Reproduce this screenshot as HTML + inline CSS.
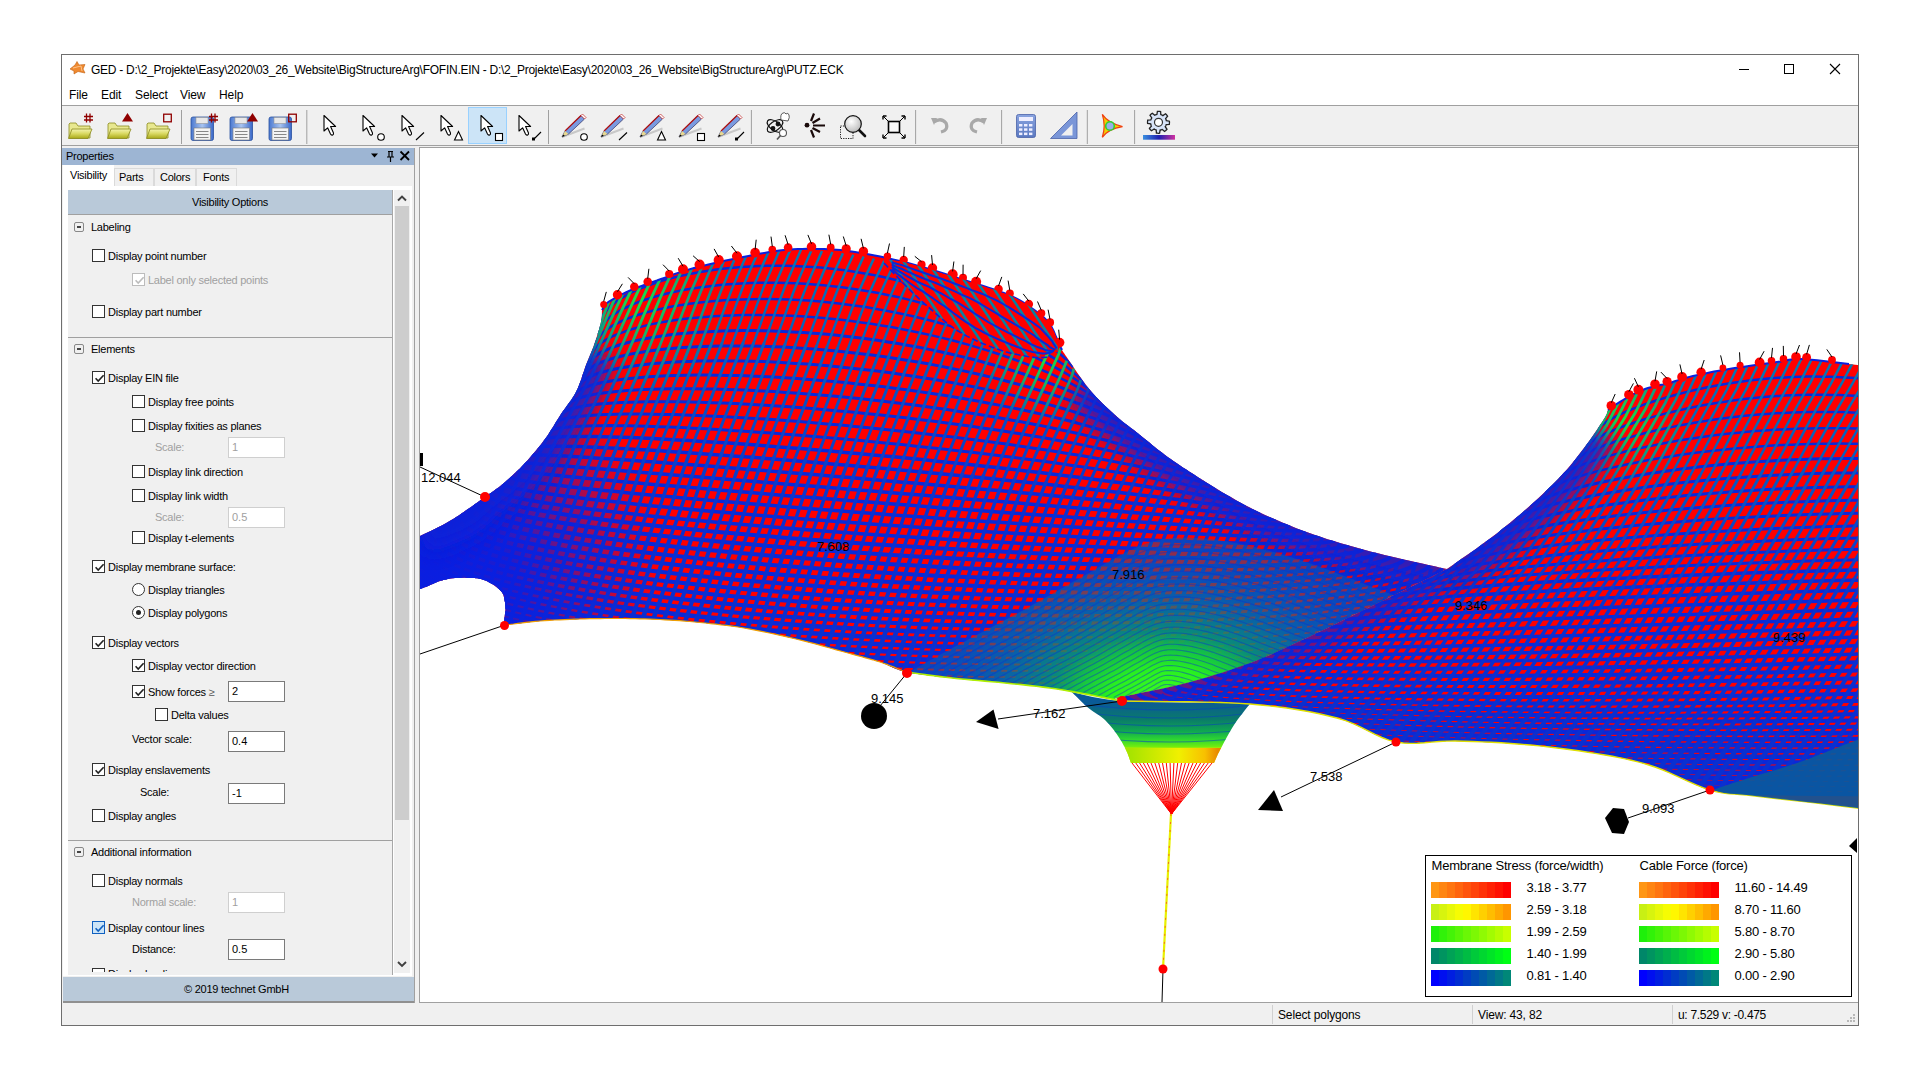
<!DOCTYPE html>
<html><head><meta charset="utf-8">
<style>
*{margin:0;padding:0;box-sizing:border-box}
html,body{width:1920px;height:1080px;overflow:hidden;background:#fff;font-family:"Liberation Sans",sans-serif;color:#000}
.a{position:absolute}
#win{position:absolute;left:61px;top:54px;width:1798px;height:972px;border:1px solid #6e6e6e;background:#f0f0f0}
.t{position:absolute;font-size:11px;line-height:13px;white-space:nowrap;letter-spacing:-0.25px}
.g{color:#a0a0a0}
.cb{position:absolute;width:13px;height:13px;border:1px solid #333;background:#fff}
.cb.gr{border-color:#bcbcbc}
.cb svg{position:absolute;left:1px;top:1px}
.rb{position:absolute;width:13px;height:13px;border:1px solid #333;border-radius:50%;background:#fff}
.inp{position:absolute;width:57px;height:21px;border:1px solid #7a7a7a;background:#fff;font-size:11px;line-height:19px;padding-left:3px}
.inp.gr{border-color:#cfcfcf;color:#a0a0a0}
.exp{position:absolute;width:10px;height:10px;border:1px solid #888;border-radius:2px}
.cb.bl{border-color:#1060c0;background:#cce4f7}
.exp:after{content:"";position:absolute;left:2px;top:3px;width:4px;height:2px;background:#444}
</style></head><body>
<div id="win"></div>
<!-- title bar -->
<div class="a" style="left:62px;top:55px;width:1796px;height:50px;background:#fff"></div>
<div class="a" style="left:62px;top:105px;width:1796px;height:1px;background:#a0a0a0"></div>
<div class="t" style="left:91px;top:63px;font-size:12px;line-height:14px;letter-spacing:-0.26px">GED - D:\2_Projekte\Easy\2020\03_26_Website\BigStructureArg\FOFIN.EIN - D:\2_Projekte\Easy\2020\03_26_Website\BigStructureArg\PUTZ.ECK</div>
<div class="t" style="left:69px;top:88px;font-size:12px;line-height:14px;letter-spacing:-0.1px">File</div>
<div class="t" style="left:101px;top:88px;font-size:12px;line-height:14px;letter-spacing:-0.1px">Edit</div>
<div class="t" style="left:135px;top:88px;font-size:12px;line-height:14px;letter-spacing:-0.1px">Select</div>
<div class="t" style="left:180px;top:88px;font-size:12px;line-height:14px;letter-spacing:-0.1px">View</div>
<div class="t" style="left:219px;top:88px;font-size:12px;line-height:14px;letter-spacing:-0.1px">Help</div>
<!-- toolbar -->
<div class="a" style="left:62px;top:145px;width:1796px;height:1px;background:#a0a0a0"></div>

<svg class="a" style="left:62px;top:106px" width="1200" height="40" viewBox="62 106 1200 40">
<defs><linearGradient id="fold" x1="0" y1="0" x2="0" y2="1"><stop offset="0" stop-color="#f4f4b0"/><stop offset="0.5" stop-color="#d8d860"/><stop offset="1" stop-color="#a8a818"/></linearGradient><linearGradient id="flop" x1="0" y1="0" x2="1" y2="0"><stop offset="0" stop-color="#4a78d0"/><stop offset="0.5" stop-color="#a8c4f0"/><stop offset="1" stop-color="#3a68c8"/></linearGradient><linearGradient id="calc" x1="0" y1="0" x2="0" y2="1"><stop offset="0" stop-color="#8aa4e0"/><stop offset="1" stop-color="#5a78c0"/></linearGradient><radialGradient id="mag" cx="0.4" cy="0.35" r="0.7"><stop offset="0" stop-color="#fff"/><stop offset="1" stop-color="#b8b8b8"/></radialGradient><linearGradient id="gbar" x1="0" x2="1"><stop offset="0" stop-color="#3a90e0"/><stop offset="0.5" stop-color="#2020b0"/><stop offset="1" stop-color="#d030a0"/></linearGradient></defs>
<rect x="181.0" y="110" width="1" height="34" fill="#a0a0a0"/>
<rect x="306.3" y="110" width="1" height="34" fill="#a0a0a0"/>
<rect x="548.0" y="110" width="1" height="34" fill="#a0a0a0"/>
<rect x="750.9" y="110" width="1" height="34" fill="#a0a0a0"/>
<rect x="915.1" y="110" width="1" height="34" fill="#a0a0a0"/>
<rect x="1001.1" y="110" width="1" height="34" fill="#a0a0a0"/>
<rect x="1086.8" y="110" width="1" height="34" fill="#a0a0a0"/>
<rect x="1134.1" y="110" width="1" height="34" fill="#a0a0a0"/>
<g transform="translate(68 121)"><path d="M1 3 L1 17 L22 17 L22 5 L10 5 L8 2 L2 2 Z" fill="#e8e890" stroke="#8a8a20" stroke-width="0.8"/><path d="M4 8 L24 8 L20 17.5 L0.5 17.5 Z" fill="url(#fold)" stroke="#8a8a20" stroke-width="0.8"/></g>
<g transform="translate(107 121)"><path d="M1 3 L1 17 L22 17 L22 5 L10 5 L8 2 L2 2 Z" fill="#e8e890" stroke="#8a8a20" stroke-width="0.8"/><path d="M4 8 L24 8 L20 17.5 L0.5 17.5 Z" fill="url(#fold)" stroke="#8a8a20" stroke-width="0.8"/></g>
<g transform="translate(146 121)"><path d="M1 3 L1 17 L22 17 L22 5 L10 5 L8 2 L2 2 Z" fill="#e8e890" stroke="#8a8a20" stroke-width="0.8"/><path d="M4 8 L24 8 L20 17.5 L0.5 17.5 Z" fill="url(#fold)" stroke="#8a8a20" stroke-width="0.8"/></g>
<path d="M86.5 113.5V122.5M90 113.5V122.5M84 116.5H93M84 120.0H93" stroke="#900000" stroke-width="1.3"/>
<path d="M122 121.5L127.5 113L133 121.5Z" fill="#900000"/>
<rect x="163.7" y="114.2" width="7.6" height="7.6" fill="none" stroke="#900000" stroke-width="1.3"/>
<g transform="translate(191 117)"><rect x="0" y="0" width="22.5" height="23.5" rx="2" fill="url(#flop)" stroke="#2a50a0" stroke-width="0.8"/><rect x="5" y="0.5" width="12" height="6" fill="#e8e8e8" stroke="#888" stroke-width="0.5"/><rect x="3" y="11" width="16.5" height="12" fill="#f4f4f4" stroke="#777" stroke-width="0.6"/><path d="M5 14.5H17.5M5 17.5H17.5M5 20.5H17.5" stroke="#888" stroke-width="1"/></g>
<g transform="translate(230 117)"><rect x="0" y="0" width="22.5" height="23.5" rx="2" fill="url(#flop)" stroke="#2a50a0" stroke-width="0.8"/><rect x="5" y="0.5" width="12" height="6" fill="#e8e8e8" stroke="#888" stroke-width="0.5"/><rect x="3" y="11" width="16.5" height="12" fill="#f4f4f4" stroke="#777" stroke-width="0.6"/><path d="M5 14.5H17.5M5 17.5H17.5M5 20.5H17.5" stroke="#888" stroke-width="1"/></g>
<g transform="translate(269 117)"><rect x="0" y="0" width="22.5" height="23.5" rx="2" fill="url(#flop)" stroke="#2a50a0" stroke-width="0.8"/><rect x="5" y="0.5" width="12" height="6" fill="#e8e8e8" stroke="#888" stroke-width="0.5"/><rect x="3" y="11" width="16.5" height="12" fill="#f4f4f4" stroke="#777" stroke-width="0.6"/><path d="M5 14.5H17.5M5 17.5H17.5M5 20.5H17.5" stroke="#888" stroke-width="1"/></g>
<path d="M211.5 113.5V122.5M215 113.5V122.5M209 116.5H218M209 120.0H218" stroke="#900000" stroke-width="1.3"/>
<path d="M247 121.5L252.5 113L258 121.5Z" fill="#900000"/>
<rect x="288.7" y="114.2" width="7.6" height="7.6" fill="none" stroke="#900000" stroke-width="1.3"/>
<rect x="468.5" y="107.5" width="38" height="36" fill="#cce4f7" stroke="#99d1ff" stroke-width="1"/>
<path transform="translate(324 115.5)" d="M0 0L0 15.5L3.6 12.3L6.5 18.6Q7.3 20 8.7 19.4Q10 18.7 9.4 17.2L6.6 11L11.6 11Z" fill="#fff" stroke="#000" stroke-width="1.1" stroke-linejoin="round"/>
<path transform="translate(363 115.5)" d="M0 0L0 15.5L3.6 12.3L6.5 18.6Q7.3 20 8.7 19.4Q10 18.7 9.4 17.2L6.6 11L11.6 11Z" fill="#fff" stroke="#000" stroke-width="1.1" stroke-linejoin="round"/>
<path transform="translate(402 115.5)" d="M0 0L0 15.5L3.6 12.3L6.5 18.6Q7.3 20 8.7 19.4Q10 18.7 9.4 17.2L6.6 11L11.6 11Z" fill="#fff" stroke="#000" stroke-width="1.1" stroke-linejoin="round"/>
<path transform="translate(441 115.5)" d="M0 0L0 15.5L3.6 12.3L6.5 18.6Q7.3 20 8.7 19.4Q10 18.7 9.4 17.2L6.6 11L11.6 11Z" fill="#fff" stroke="#000" stroke-width="1.1" stroke-linejoin="round"/>
<path transform="translate(481 115.5)" d="M0 0L0 15.5L3.6 12.3L6.5 18.6Q7.3 20 8.7 19.4Q10 18.7 9.4 17.2L6.6 11L11.6 11Z" fill="#fff" stroke="#000" stroke-width="1.1" stroke-linejoin="round"/>
<path transform="translate(519 115.5)" d="M0 0L0 15.5L3.6 12.3L6.5 18.6Q7.3 20 8.7 19.4Q10 18.7 9.4 17.2L6.6 11L11.6 11Z" fill="#fff" stroke="#000" stroke-width="1.1" stroke-linejoin="round"/>
<circle cx="381" cy="137" r="3.3" fill="#fff" stroke="#000" stroke-width="1.1"/>
<path d="M416 140L424 132.5" stroke="#000" stroke-width="1.1"/>
<path d="M454.5 140L458.5 131.5L462.5 140Z" fill="#fff" stroke="#000" stroke-width="1.1"/>
<rect x="495.5" y="133.5" width="7" height="7" fill="#fff" stroke="#000" stroke-width="1.1"/>
<path d="M534 139L541 132" stroke="#000" stroke-width="1.1"/><rect x="532" y="137.5" width="3" height="3" fill="#000"/>
<g transform="translate(562 137)"><path d="M0 0L22.5 -8.5" stroke="#c8c8c8" stroke-width="2"/><path d="M0 0L3 -6L19 -21.5L22.5 -18L6.5 -3Z" fill="#7a9ae0" stroke="#303060" stroke-width="0.7"/><path d="M3 -6L19 -21.5" stroke="#b01010" stroke-width="1.2"/><path d="M0 0L3 -6L6.5 -3Z" fill="#e8d890"/><path d="M0 0L1.3 -2.6L2.9 -1.3Z" fill="#000"/><path d="M19 -21.5L20.5 -23L24 -19.5L22.5 -18Z" fill="#fff" stroke="#c02020" stroke-width="0.7"/></g>
<g transform="translate(601 137)"><path d="M0 0L22.5 -8.5" stroke="#c8c8c8" stroke-width="2"/><path d="M0 0L3 -6L19 -21.5L22.5 -18L6.5 -3Z" fill="#7a9ae0" stroke="#303060" stroke-width="0.7"/><path d="M3 -6L19 -21.5" stroke="#b01010" stroke-width="1.2"/><path d="M0 0L3 -6L6.5 -3Z" fill="#e8d890"/><path d="M0 0L1.3 -2.6L2.9 -1.3Z" fill="#000"/><path d="M19 -21.5L20.5 -23L24 -19.5L22.5 -18Z" fill="#fff" stroke="#c02020" stroke-width="0.7"/></g>
<g transform="translate(640 137)"><path d="M0 0L22.5 -8.5" stroke="#c8c8c8" stroke-width="2"/><path d="M0 0L3 -6L19 -21.5L22.5 -18L6.5 -3Z" fill="#7a9ae0" stroke="#303060" stroke-width="0.7"/><path d="M3 -6L19 -21.5" stroke="#b01010" stroke-width="1.2"/><path d="M0 0L3 -6L6.5 -3Z" fill="#e8d890"/><path d="M0 0L1.3 -2.6L2.9 -1.3Z" fill="#000"/><path d="M19 -21.5L20.5 -23L24 -19.5L22.5 -18Z" fill="#fff" stroke="#c02020" stroke-width="0.7"/></g>
<g transform="translate(679 137)"><path d="M0 0L22.5 -8.5" stroke="#c8c8c8" stroke-width="2"/><path d="M0 0L3 -6L19 -21.5L22.5 -18L6.5 -3Z" fill="#7a9ae0" stroke="#303060" stroke-width="0.7"/><path d="M3 -6L19 -21.5" stroke="#b01010" stroke-width="1.2"/><path d="M0 0L3 -6L6.5 -3Z" fill="#e8d890"/><path d="M0 0L1.3 -2.6L2.9 -1.3Z" fill="#000"/><path d="M19 -21.5L20.5 -23L24 -19.5L22.5 -18Z" fill="#fff" stroke="#c02020" stroke-width="0.7"/></g>
<g transform="translate(718 137)"><path d="M0 0L22.5 -8.5" stroke="#c8c8c8" stroke-width="2"/><path d="M0 0L3 -6L19 -21.5L22.5 -18L6.5 -3Z" fill="#7a9ae0" stroke="#303060" stroke-width="0.7"/><path d="M3 -6L19 -21.5" stroke="#b01010" stroke-width="1.2"/><path d="M0 0L3 -6L6.5 -3Z" fill="#e8d890"/><path d="M0 0L1.3 -2.6L2.9 -1.3Z" fill="#000"/><path d="M19 -21.5L20.5 -23L24 -19.5L22.5 -18Z" fill="#fff" stroke="#c02020" stroke-width="0.7"/></g>
<circle cx="584" cy="137" r="3.3" fill="#fff" stroke="#000" stroke-width="1.1"/>
<path d="M619 140L627 132.5" stroke="#000" stroke-width="1.1"/>
<path d="M657.5 140L661.5 131.5L665.5 140Z" fill="#fff" stroke="#000" stroke-width="1.1"/>
<rect x="697.5" y="133.5" width="7" height="7" fill="#fff" stroke="#000" stroke-width="1.1"/>
<path d="M737 139L744 132" stroke="#000" stroke-width="1.1"/><rect x="735" y="137.5" width="3" height="3" fill="#000"/>
<g transform="translate(775 126)" fill="none" stroke="#111" stroke-width="1.2"><ellipse rx="9" ry="4.5" transform="rotate(35)"/><ellipse rx="9" ry="4.5" transform="rotate(-35)"/><circle cx="3" cy="-2" r="1.8" fill="#111"/><circle cx="-2" cy="2.5" r="1.8" fill="#111"/></g>
<path d="M781 120Q780 114 783 113Q785 112 786 114Q788 112 789 115Q790 117 788 121Z" fill="#fff" stroke="#333" stroke-width="0.8"/>
<circle cx="783" cy="133" r="3.5" fill="#fff" stroke="#555" stroke-width="1.1"/><path d="M780.5 135.5L777 139.5" stroke="#555" stroke-width="1.6"/>
<circle cx="807" cy="125.2" r="2.4" fill="#1a0a0a"/>
<path d="M811 121L814 113.5M812.5 123L820 118.5M813 125.5L825 125.5M812.5 128L820 132M811 130L814 137.5" stroke="#1a0a0a" stroke-width="2.2"/>
<rect x="840.5" y="126" width="12.5" height="12.5" fill="none" stroke="#000" stroke-width="0.9" stroke-dasharray="1.2 1.2"/>
<path d="M858 129L865 136" stroke="#111" stroke-width="2.6" stroke-linecap="round"/>
<circle cx="853" cy="124" r="8.3" fill="url(#mag)" stroke="#111" stroke-width="1.2"/>
<rect x="888.5" y="121.5" width="11" height="11" fill="#f8f8f8" stroke="#000" stroke-width="1.6"/>
<path d="M888 121L883 116M900 121L905 116M888 133L883 138M900 133L905 138" stroke="#000" stroke-width="1"/>
<path d="M883 116h3.5M883 116v3.5M905 116h-3.5M905 116v3.5M883 138h3.5M883 138v-3.5M905 138h-3.5M905 138v-3.5" stroke="#000" stroke-width="1.4"/>
<path d="M934 122 Q941 117 946 123 Q949 130 941 132" fill="none" stroke="#a8a8a8" stroke-width="3.2"/><path d="M931 118L937 118L934 125Z" fill="#a8a8a8"/>
<path d="M984 122 Q977 117 972 123 Q969 130 977 132" fill="none" stroke="#a8a8a8" stroke-width="3.2"/><path d="M987 118L981 118L984 125Z" fill="#a8a8a8"/>
<rect x="1016.5" y="114.5" width="19" height="23" rx="2" fill="url(#calc)" stroke="#4a62a8" stroke-width="0.8"/>
<rect x="1019" y="117" width="14" height="4" fill="#eef"/>
<rect x="1019" y="124.0" width="3.4" height="2.5" fill="#eef"/><rect x="1024" y="124.0" width="3.4" height="2.5" fill="#eef"/><rect x="1029" y="124.0" width="3.4" height="2.5" fill="#eef"/><rect x="1019" y="128.3" width="3.4" height="2.5" fill="#eef"/><rect x="1024" y="128.3" width="3.4" height="2.5" fill="#eef"/><rect x="1029" y="128.3" width="3.4" height="2.5" fill="#eef"/><rect x="1019" y="132.6" width="3.4" height="2.5" fill="#eef"/><rect x="1024" y="132.6" width="3.4" height="2.5" fill="#eef"/><rect x="1029" y="132.6" width="3.4" height="2.5" fill="#eef"/>
<path d="M1050.5 138.5L1077 112L1077 138.5Z" fill="#7a96d8" stroke="#4a62a8" stroke-width="0.8"/><path d="M1061 135.5L1072.5 124L1072.5 135.5Z" fill="#f0f0f0"/>
<path d="M1102.3 114.4Q1108 123 1122.5 126.6Q1108 129 1102.3 137.3Q1106 126 1102.3 114.4Z" fill="#f0d000" stroke="#f04010" stroke-width="1.2"/>
<circle cx="1110" cy="126" r="4.3" fill="#98b0e8" stroke="#30d030" stroke-width="1.6"/>
<polygon points="1169.5,122.3 1169.4,123.4 1169.3,124.4 1166.2,124.6 1165.9,125.4 1165.6,126.1 1165.2,126.7 1167.0,129.3 1166.3,130.1 1165.5,130.8 1164.6,131.4 1162.3,129.4 1161.6,129.7 1160.8,130.0 1160.1,130.1 1159.6,133.2 1158.5,133.3 1157.4,133.2 1156.4,133.1 1156.2,130.0 1155.4,129.7 1154.7,129.4 1154.1,129.0 1151.5,130.8 1150.7,130.1 1150.0,129.3 1149.4,128.4 1151.4,126.1 1151.1,125.4 1150.8,124.6 1150.7,123.9 1147.6,123.4 1147.5,122.3 1147.6,121.2 1147.7,120.2 1150.8,120.0 1151.1,119.2 1151.4,118.5 1151.8,117.9 1150.0,115.3 1150.7,114.5 1151.5,113.8 1152.4,113.2 1154.7,115.2 1155.4,114.9 1156.2,114.6 1156.9,114.5 1157.4,111.4 1158.5,111.3 1159.6,111.4 1160.6,111.5 1160.8,114.6 1161.6,114.9 1162.3,115.2 1162.9,115.6 1165.5,113.8 1166.3,114.5 1167.0,115.3 1167.6,116.2 1165.6,118.5 1165.9,119.2 1166.2,120.0 1166.3,120.7 1169.4,121.2" fill="#d8e4f8" stroke="#222" stroke-width="1.3"/>
<circle cx="1158.5" cy="122.3" r="4" fill="#fff" stroke="#333" stroke-width="1.2"/>
<rect x="1143" y="135" width="32" height="4.7" fill="url(#gbar)"/>
</svg>
<svg class="a" style="left:1730px;top:60px" width="120" height="20" viewBox="1730 60 120 20"><path d="M1739 69.5H1749" stroke="#000" stroke-width="1"/><rect x="1784.5" y="64.5" width="9" height="9" fill="none" stroke="#000" stroke-width="1"/><path d="M1830 64L1840 74M1840 64L1830 74" stroke="#000" stroke-width="1.1"/></svg>
<svg class="a" style="left:68px;top:60px" width="20" height="16" viewBox="0 0 20 16"><path d="M2 9L7 5L9 1.5L11 5L17 4.5L15 9L17 13L10 11.5L6 14L6 11Z" fill="#f08a30" stroke="#c06010" stroke-width="0.6"/><path d="M5 8L13 6L14 11" fill="none" stroke="#ffd0a0" stroke-width="0.8"/></svg>
<svg class="a" style="left:365px;top:148px;z-index:5" width="50" height="17" viewBox="365 148 50 17"><path d="M371 153.5L378 153.5L374.5 157.5Z" fill="#000"/><path d="M388 151.5H393M389 151.5V157M392 151.5V157M387 157H394M390.5 157V162" stroke="#000" stroke-width="1.2" fill="none"/><path d="M400.5 151.5L409 160M409 151.5L400.5 160" stroke="#000" stroke-width="1.8"/></svg>
<svg class="a" style="left:394px;top:190px;z-index:5" width="16" height="785" viewBox="394 190 16 785"><path d="M398 200.5L402 196.5L406 200.5" fill="none" stroke="#404040" stroke-width="1.9"/><path d="M398 962L402 966L406 962" fill="none" stroke="#404040" stroke-width="1.9"/></svg>
<svg class="a" style="left:1845px;top:1012px;z-index:5" width="12" height="12" viewBox="0 0 12 12" fill="#b8b8b8"><rect x="8" y="8" width="2" height="2"/><rect x="5" y="8" width="2" height="2"/><rect x="2" y="8" width="2" height="2"/><rect x="8" y="5" width="2" height="2"/><rect x="5" y="5" width="2" height="2"/><rect x="8" y="2" width="2" height="2"/></svg>
<!-- properties header -->
<div class="a" style="left:62px;top:148px;width:353px;height:17px;background:#9db5d3"></div>
<div class="t" style="left:66px;top:150px;font-size:11px">Properties</div>
<!-- tabs -->
<div class="a" style="left:63px;top:165px;width:51px;height:21px;background:#fff"></div>
<div class="t" style="left:70px;top:169px">Visibility</div>
<div class="a" style="left:114px;top:168px;width:40px;height:18px;background:#f0f0f0;border:1px solid #dadada;border-bottom:none"></div>
<div class="t" style="left:119px;top:171px">Parts</div>
<div class="a" style="left:154px;top:168px;width:42px;height:18px;background:#f0f0f0;border:1px solid #dadada;border-bottom:none"></div>
<div class="t" style="left:160px;top:171px">Colors</div>
<div class="a" style="left:196px;top:168px;width:41px;height:18px;background:#f0f0f0;border:1px solid #dadada;border-bottom:none"></div>
<div class="t" style="left:203px;top:171px">Fonts</div>
<!-- tab page -->
<div class="a" style="left:63px;top:186px;width:349px;height:790px;background:#fff"></div>
<div class="a" style="left:68px;top:190px;width:325px;height:785px;background:#f0f0f0"></div>
<div class="a" style="left:68px;top:190px;width:324px;height:25px;background:#b9c9d9;border-bottom:1px solid #a0a0a0"></div>
<div class="t" style="left:192px;top:196px">Visibility Options</div>
<div class="a" style="left:392px;top:190px;width:1px;height:785px;background:#a8a8a8"></div>
<div class="exp" style="left:74px;top:222px"></div>
<div class="t" style="left:91px;top:221px">Labeling</div>
<div class="cb" style="left:92px;top:249px"></div>
<div class="t" style="left:108px;top:250px">Display point number</div>
<div class="cb gr" style="left:132px;top:273px"><svg width="11" height="11" viewBox="0 0 11 11"><path d="M1.6 5.2L4.2 8L9.6 2.2" fill="none" stroke="#bcbcbc" stroke-width="1.6"/></svg></div>
<div class="t g" style="left:148px;top:274px">Label only selected points</div>
<div class="cb" style="left:92px;top:305px"></div>
<div class="t" style="left:108px;top:306px">Display part number</div>
<div class="a" style="left:68px;top:337px;width:324px;height:1px;background:#a0a0a0"></div>
<div class="exp" style="left:74px;top:344px"></div>
<div class="t" style="left:91px;top:343px">Elements</div>
<div class="cb" style="left:92px;top:371px"><svg width="11" height="11" viewBox="0 0 11 11"><path d="M1.6 5.2L4.2 8L9.6 2.2" fill="none" stroke="#222" stroke-width="1.6"/></svg></div>
<div class="t" style="left:108px;top:372px">Display EIN file</div>
<div class="cb" style="left:132px;top:395px"></div>
<div class="t" style="left:148px;top:396px">Display free points</div>
<div class="cb" style="left:132px;top:419px"></div>
<div class="t" style="left:148px;top:420px">Display fixities as planes</div>
<div class="t g" style="left:155px;top:441px">Scale:</div>
<div class="inp gr" style="left:228px;top:437px">1</div>
<div class="cb" style="left:132px;top:465px"></div>
<div class="t" style="left:148px;top:466px">Display link direction</div>
<div class="cb" style="left:132px;top:489px"></div>
<div class="t" style="left:148px;top:490px">Display link width</div>
<div class="t g" style="left:155px;top:511px">Scale:</div>
<div class="inp gr" style="left:228px;top:507px">0.5</div>
<div class="cb" style="left:132px;top:531px"></div>
<div class="t" style="left:148px;top:532px">Display t-elements</div>
<div class="cb" style="left:92px;top:560px"><svg width="11" height="11" viewBox="0 0 11 11"><path d="M1.6 5.2L4.2 8L9.6 2.2" fill="none" stroke="#222" stroke-width="1.6"/></svg></div>
<div class="t" style="left:108px;top:561px">Display membrane surface:</div>
<div class="rb" style="left:132px;top:583px"></div>
<div class="t" style="left:148px;top:584px">Display triangles</div>
<div class="rb" style="left:132px;top:606px"><div style="position:absolute;left:3px;top:3px;width:5px;height:5px;border-radius:50%;background:#222"></div></div>
<div class="t" style="left:148px;top:607px">Display polygons</div>
<div class="cb" style="left:92px;top:636px"><svg width="11" height="11" viewBox="0 0 11 11"><path d="M1.6 5.2L4.2 8L9.6 2.2" fill="none" stroke="#222" stroke-width="1.6"/></svg></div>
<div class="t" style="left:108px;top:637px">Display vectors</div>
<div class="cb" style="left:132px;top:659px"><svg width="11" height="11" viewBox="0 0 11 11"><path d="M1.6 5.2L4.2 8L9.6 2.2" fill="none" stroke="#222" stroke-width="1.6"/></svg></div>
<div class="t" style="left:148px;top:660px">Display vector direction</div>
<div class="cb" style="left:132px;top:685px"><svg width="11" height="11" viewBox="0 0 11 11"><path d="M1.6 5.2L4.2 8L9.6 2.2" fill="none" stroke="#222" stroke-width="1.6"/></svg></div>
<div class="t" style="left:148px;top:686px">Show forces <span style="color:#555">≥</span></div>
<div class="inp" style="left:228px;top:681px">2</div>
<div class="cb" style="left:155px;top:708px"></div>
<div class="t" style="left:171px;top:709px">Delta values</div>
<div class="t" style="left:132px;top:733px">Vector scale:</div>
<div class="inp" style="left:228px;top:731px">0.4</div>
<div class="cb" style="left:92px;top:763px"><svg width="11" height="11" viewBox="0 0 11 11"><path d="M1.6 5.2L4.2 8L9.6 2.2" fill="none" stroke="#222" stroke-width="1.6"/></svg></div>
<div class="t" style="left:108px;top:764px">Display enslavements</div>
<div class="t" style="left:140px;top:786px">Scale:</div>
<div class="inp" style="left:228px;top:783px">-1</div>
<div class="cb" style="left:92px;top:809px"></div>
<div class="t" style="left:108px;top:810px">Display angles</div>
<div class="a" style="left:68px;top:840px;width:324px;height:1px;background:#a0a0a0"></div>
<div class="exp" style="left:74px;top:847px"></div>
<div class="t" style="left:91px;top:846px">Additional information</div>
<div class="cb" style="left:92px;top:874px"></div>
<div class="t" style="left:108px;top:875px">Display normals</div>
<div class="t g" style="left:132px;top:896px">Normal scale:</div>
<div class="inp gr" style="left:228px;top:892px">1</div>
<div class="cb bl" style="left:92px;top:921px"><svg width="11" height="11" viewBox="0 0 11 11"><path d="M1.6 5.2L4.2 8L9.6 2.2" fill="none" stroke="#1060c0" stroke-width="1.6"/></svg></div>
<div class="t" style="left:108px;top:922px">Display contour lines</div>
<div class="t" style="left:132px;top:943px">Distance:</div>
<div class="inp" style="left:228px;top:939px">0.5</div>
<div class="a" style="left:68px;top:965px;width:324px;height:7px;overflow:hidden"><div class="cb" style="left:24px;top:3px"></div><div class="t" style="left:40px;top:3px">Display loadings</div></div>
<!-- scrollbar -->
<div class="a" style="left:394px;top:190px;width:16px;height:783px;background:#f0f0f0"></div>
<div class="a" style="left:395px;top:206px;width:14px;height:614px;background:#cdcdcd"></div>

<div id="pbr" class="a" style="left:414px;top:148px;width:1px;height:855px;background:#a0a0a0"></div>
<!-- view -->
<div class="a" style="left:419px;top:147px;width:1439px;height:856px;background:#fff;border:1px solid #a0a0a0;border-right:none"></div>

<svg class="a" style="left:420px;top:148px" width="1438" height="854" viewBox="420 148 1438 854">
<defs>
<clipPath id="clt"><path d="M380 552L385.1 550L390.3 548L395.5 545.9L400.8 543.9L405.9 541.9L410.8 539.9L415.6 537.9L420 536L424.1 534.1L428 532.3L431.7 530.6L435.2 528.8L438.6 527.1L441.8 525.4L445 523.7L448 522L450.9 520.3L453.6 518.7L456.2 517L458.7 515.4L461.1 513.8L463.4 512.2L465.7 510.6L468 509L470.3 507.5L472.4 506L474.5 504.5L476.6 503.1L478.6 501.6L480.7 500.1L482.8 498.6L485 497L487.3 495.4L489.6 493.8L491.9 492.2L494.2 490.5L496.6 488.8L499.1 487L501.5 485.1L504 483L506.5 480.8L509.1 478.5L511.8 476.1L514.4 473.6L517.1 471.1L519.8 468.4L522.4 465.7L525 463L527.6 460.2L530.2 457.3L532.7 454.3L535.3 451.3L537.8 448.2L540.3 445.2L542.7 442.1L545 439L547.2 435.9L549.3 432.8L551.3 429.6L553.3 426.4L555.2 423.2L557.2 420.1L559.1 417L561 414L563 411.1L564.9 408.4L566.9 405.8L568.9 403.1L570.8 400.5L572.6 397.8L574.4 395L576 392L577.5 388.8L578.9 385.4L580.2 381.9L581.4 378.4L582.6 374.8L583.8 371.4L584.9 368.1L586 365L587.1 362.2L588.2 359.6L589.2 357.1L590.2 354.8L591.2 352.4L592.1 350L593.1 347.6L594 345L595 342.2L596 339.2L597 336.1L597.9 333L598.9 330L599.7 327L600.4 324.4L601 322L601.4 320L601.7 318.2L601.8 316.7L601.9 315.3L601.9 314L601.9 312.7L601.9 311.4L602 310L602.5 309.2L602.9 308.4L603.1 307.6L603.4 306.8L603.9 306L604.6 305.1L605.6 304.1L607 303L608.9 301.7L611.1 300.4L613.6 298.9L616.3 297.3L619.3 295.7L622.4 294.1L625.7 292.5L629 291L632.5 289.5L636.3 288L640.2 286.5L644.3 284.9L648.5 283.4L652.7 281.9L656.9 280.5L661 279L665 277.6L668.8 276.2L672.6 274.8L676.4 273.4L680.4 272.1L684.6 270.7L689.1 269.4L694 268L699.4 266.6L705.3 265.2L711.6 263.7L718 262.2L724.5 260.8L730.9 259.5L737.1 258.2L743 257L748.5 255.9L753.9 254.8L759.2 253.8L764.3 252.9L769.3 252L774.3 251.2L779.2 250.6L784 250L788.7 249.6L793.4 249.2L797.9 249L802.4 248.9L806.8 248.8L811.2 248.8L815.6 248.9L820 249L824.3 249.1L828.4 249.3L832.4 249.5L836.4 249.8L840.6 250.1L845 250.6L849.8 251.2L855 252L860.7 253L866.9 254L873.4 255.3L880.2 256.6L887.1 258.1L894.1 259.6L901.1 261.3L908 263L914.9 264.9L922 266.9L929.3 269L936.5 271.2L943.7 273.5L950.7 275.8L957.5 277.9L964 280L970.3 282L976.5 283.9L982.6 285.8L988.5 287.7L994.1 289.5L999.5 291.4L1004.5 293.2L1009 295L1013.1 296.8L1016.7 298.6L1019.9 300.3L1022.8 302.1L1025.5 303.8L1028.1 305.5L1030.5 307.3L1033 309L1035.4 310.7L1037.8 312.5L1039.9 314.2L1042 315.9L1043.9 317.6L1045.8 319.4L1047.4 321.2L1049 323L1050.4 324.9L1051.6 327L1052.7 329.1L1053.7 331.2L1054.6 333.3L1055.4 335.3L1056.2 337.2L1057 339L1057.8 340.6L1058.5 342.1L1059.1 343.5L1059.7 344.8L1060.3 346.1L1060.8 347.4L1061.4 348.7L1062 350L1062.6 351L1063.1 351.7L1063.5 352.4L1064 353.1L1064.6 354L1065.4 355.2L1066.5 356.8L1068 359L1070 361.9L1072.3 365.3L1074.9 369.3L1077.8 373.5L1080.8 377.8L1083.9 382.2L1087 386.3L1090 390L1093 393.4L1096 396.8L1099.2 400L1102.3 403.2L1105.5 406.3L1108.7 409.2L1111.9 412.2L1115 415L1118.1 417.7L1121.2 420.4L1124.4 422.9L1127.5 425.3L1130.6 427.7L1133.8 430.1L1136.9 432.5L1140 435L1143.1 437.5L1146.2 440.1L1149.4 442.6L1152.5 445.2L1155.6 447.7L1158.8 450.2L1161.9 452.6L1165 455L1168 457.2L1171 459.3L1173.8 461.3L1176.8 463.3L1179.7 465.3L1182.9 467.4L1186.3 469.6L1190 472L1194 474.6L1198.4 477.4L1203 480.3L1207.7 483.3L1212.5 486.3L1217.4 489.3L1222.2 492.2L1227 495L1231.6 497.6L1236.1 500.2L1240.6 502.7L1245.2 505.2L1249.8 507.6L1254.6 510.1L1259.7 512.5L1265 515L1270.7 517.5L1276.7 520.1L1282.9 522.7L1289.2 525.3L1295.7 527.9L1302.2 530.4L1308.7 532.7L1315 535L1321.2 537.1L1327.5 539.2L1333.8 541.1L1340 543L1346.2 544.8L1352.5 546.6L1358.8 548.3L1365 550L1371.4 551.7L1377.9 553.3L1384.5 554.9L1391.1 556.5L1397.6 558L1403.8 559.4L1409.6 560.8L1415 562L1419.9 563.1L1424.3 564.1L1428.3 565L1432.1 565.8L1435.8 566.6L1439.4 567.4L1443.1 568.2L1447 569L1438.7 573.1L1430.6 577.1L1422.4 581.1L1414.3 585.1L1406.1 589.2L1397.7 593.3L1389 597.6L1380 602L1370.4 606.7L1360.2 611.7L1349.6 616.9L1338.9 622.2L1328.4 627.4L1318.2 632.3L1308.7 636.9L1300 641L1292.4 644.6L1285.6 647.8L1279.5 650.6L1273.8 653.2L1268.2 655.7L1262.5 658.1L1256.5 660.5L1250 663L1242.9 665.6L1235.5 668.1L1227.8 670.7L1220 673.2L1212.2 675.6L1204.5 677.9L1197.1 680L1190 682L1183.1 683.8L1176.2 685.5L1169.4 687L1162.8 688.4L1156.4 689.7L1150.4 690.9L1144.9 692L1140 693L1135.8 693.9L1132.2 694.7L1129.1 695.3L1126.4 695.9L1123.9 696.4L1121.4 696.9L1118.8 697.4L1116 698L1113.8 699.5L1105.4 697.9L1097.1 696.2L1088.7 694.6L1080.4 693.1L1072.3 691.6L1064.5 690.2L1057 689L1049.9 688L1043.1 687.1L1036.6 686.3L1030.2 685.6L1024 684.9L1017.8 684.3L1011.5 683.7L1005 683L998.4 682.3L991.7 681.7L984.9 681.1L978.1 680.5L971.4 679.9L964.8 679.3L958.3 678.7L952 678L945.8 677.3L939.5 676.7L933.4 676L927.3 675.3L921.5 674.6L915.9 673.8L910.7 672.9L906 672L901.8 670.9L898.2 669.8L895 668.5L892.1 667.2L889.3 665.9L886.5 664.5L883.4 663.2L880 662L876.4 660.9L872.9 659.8L869.3 658.8L865.6 657.8L861.7 656.7L857.5 655.6L853 654.4L848 653L842.5 651.5L836.4 649.8L830 648L823.2 646.1L816.4 644.2L809.5 642.4L802.6 640.6L796 639L789.4 637.4L782.8 635.9L776.1 634.4L769.5 633L762.9 631.6L756.4 630.3L750.1 629.1L744 628L738.1 627L732.3 626.2L726.7 625.4L721.2 624.8L715.9 624.1L710.5 623.6L705.3 623L700 622.5L694.8 622L689.7 621.5L684.7 621.1L679.8 620.7L674.8 620.4L669.9 620.1L665 619.8L660 619.5L655 619.3L650 619.1L645 618.9L640 618.8L635 618.7L630 618.6L625 618.5L620 618.5L615 618.5L610 618.5L605 618.5L600 618.6L595 618.6L590 618.7L585 618.9L580 619L575 619.2L569.9 619.3L564.8 619.6L559.7 619.8L554.6 620L549.6 620.3L544.8 620.6L540 621L535.4 621.4L530.9 621.9L526.5 622.4L522.2 622.9L517.9 623.4L513.6 624L509.3 624.5L505 625L504.9 624.3L504.8 623.6L504.7 622.9L504.5 622.2L504.4 621.5L504.3 620.7L504.3 619.9L504.3 619L504.4 618L504.5 617L504.7 615.8L504.9 614.7L505 613.5L505.2 612.3L505.3 611.1L505.4 610L505.4 608.9L505.4 607.8L505.4 606.6L505.3 605.5L505.2 604.4L505.1 603.2L504.9 602.1L504.7 601L504.5 599.9L504.3 598.7L504 597.6L503.8 596.4L503.4 595.3L503 594.2L502.4 593.1L501.7 592L500.8 590.9L499.8 589.9L498.6 588.8L497.3 587.8L496 586.7L494.7 585.8L493.3 584.8L492 584L490.7 583.2L489.3 582.4L488 581.7L486.6 581.1L485.2 580.5L483.8 579.9L482.4 579.4L481 579L479.7 578.7L478.3 578.4L477.1 578.3L475.8 578.2L474.4 578.1L473 578.1L471.6 578L470 578L468.3 577.9L466.5 577.9L464.7 577.8L462.8 577.8L460.8 577.7L458.8 577.8L456.9 577.8L455 578L453.2 578.2L451.4 578.4L449.6 578.7L447.8 579L446 579.4L444.1 579.8L442.1 580.4L440 581L437.9 581.7L435.8 582.6L433.7 583.5L431.6 584.5L429.2 585.6L426.5 586.7L423.5 587.8L420 589L416 590.2L411.4 591.5L406.5 592.9L401.2 594.3L395.9 595.7L390.5 597.2L385.1 598.6L380 600Z"/></clipPath>
<clipPath id="crt"><path d="M1116 698L1118.8 697.4L1121.4 696.9L1123.9 696.4L1126.4 695.9L1129.1 695.3L1132.2 694.7L1135.8 693.9L1140 693L1144.9 692L1150.4 690.9L1156.4 689.7L1162.8 688.4L1169.4 687L1176.2 685.5L1183.1 683.8L1190 682L1197.1 680L1204.5 677.9L1212.2 675.6L1220 673.2L1227.8 670.7L1235.5 668.1L1242.9 665.6L1250 663L1256.5 660.5L1262.5 658.1L1268.2 655.7L1273.8 653.2L1279.5 650.6L1285.6 647.8L1292.4 644.6L1300 641L1308.7 636.9L1318.2 632.3L1328.4 627.4L1338.9 622.2L1349.6 616.9L1360.2 611.7L1370.4 606.7L1380 602L1389 597.6L1397.7 593.3L1406.1 589.2L1414.3 585.1L1422.4 581.1L1430.6 577.1L1438.7 573.1L1447 569L1452.2 565.4L1457.4 561.8L1462.6 558.1L1467.8 554.5L1473 550.9L1478.1 547.2L1483.1 543.6L1488 540L1492.7 536.4L1497.4 532.9L1501.9 529.3L1506.3 525.8L1510.7 522.2L1515.1 518.6L1519.5 514.9L1524 511L1528.6 507L1533.3 502.7L1538 498.4L1542.8 494L1547.4 489.6L1551.8 485.3L1556.1 481L1560 477L1563.6 473.1L1566.9 469.4L1570.1 465.8L1573 462.2L1575.8 458.7L1578.6 455.1L1581.3 451.6L1584 448L1586.8 444.2L1589.7 440.3L1592.5 436.2L1595.2 432.2L1597.8 428.4L1600.2 424.8L1602.3 421.7L1604 419L1605.3 416.9L1606.1 415.3L1606.7 414.2L1607 413.2L1607.2 412.5L1607.4 411.8L1607.6 411L1608 410L1609.8 408.8L1611.6 407.5L1613.3 406.3L1615.1 405.1L1616.9 403.8L1618.8 402.6L1620.8 401.3L1623 400L1625.4 398.6L1628 397.2L1630.6 395.7L1633.4 394.2L1636.3 392.8L1639.2 391.4L1642.1 390.1L1645 389L1647.9 388L1650.9 387.2L1653.9 386.4L1656.9 385.8L1659.9 385.1L1663 384.5L1666 383.8L1669 383L1671.9 382.2L1674.7 381.3L1677.5 380.4L1680.2 379.6L1683.1 378.7L1686.2 377.8L1689.4 376.9L1693 376L1696.8 375.1L1700.9 374.2L1705.1 373.4L1709.5 372.5L1714.1 371.6L1718.9 370.8L1723.8 369.9L1729 369L1734.6 368.1L1740.7 367.2L1747.2 366.2L1753.8 365.2L1760.2 364.3L1766.4 363.5L1772.1 362.7L1777 362L1781 361.4L1784.1 360.8L1786.7 360.2L1789 359.8L1791.3 359.4L1793.9 359.1L1797 359L1801 359L1805.8 359.2L1811.2 359.7L1817.1 360.2L1823.3 360.9L1829.7 361.7L1836.2 362.5L1842.7 363.3L1849 364L1855.2 364.7L1861.5 365.4L1867.9 366.2L1874.3 366.9L1880.7 367.7L1887.2 368.5L1893.6 369.2L1900 370L1900 815L1895 814.2L1890.6 813.4L1886.5 812.6L1882.2 811.8L1877.4 811L1871.9 810.1L1865.2 809.1L1857 808L1846.7 806.7L1834.3 805.2L1820.6 803.6L1806.1 801.9L1791.7 800.3L1777.9 798.7L1765.4 797.2L1755 796L1746.7 795.1L1740 794.5L1734.4 794.1L1729.6 793.7L1725.1 793.2L1720.6 792.6L1715.7 791.5L1710 790L1703.6 787.9L1696.8 785.2L1689.9 782.1L1682.8 778.9L1675.7 775.6L1668.6 772.4L1661.7 769.5L1655 767L1648.7 765L1642.7 763.2L1637 761.6L1631.2 760.2L1625.4 758.9L1619.1 757.6L1612.4 756.3L1605 755L1596.8 753.6L1588 752.2L1578.7 750.8L1569.1 749.5L1559.2 748.2L1549.3 747L1539.5 745.9L1530 745L1520.5 744.2L1510.9 743.5L1501.2 742.8L1491.5 742.3L1482 741.9L1472.6 741.5L1463.6 741.2L1455 741L1446.9 741.1L1439.1 741.5L1431.7 742.1L1424.5 742.8L1417.4 743.2L1410.4 743.4L1403.3 743L1396 742L1388.8 740.1L1381.9 737.5L1375.1 734.4L1368.2 730.9L1361.2 727.4L1353.7 723.9L1345.7 720.7L1337 718L1327.7 715.7L1318.2 713.5L1308.2 711.5L1297.8 709.7L1286.9 708L1275.3 706.5L1263 705.2L1250 704L1236 703.1L1220.9 702.5L1205 702.1L1188.6 701.8L1171.8 701.6L1155 701.5L1138.3 701.3L1122 701L1116 698Z"/></clipPath>
<linearGradient id="mg" gradientUnits="userSpaceOnUse" x1="0" y1="250" x2="0" y2="520"><stop offset="0" stop-color="#0a78b0"/><stop offset="1" stop-color="#0a30d0"/></linearGradient>
<linearGradient id="mg2" gradientUnits="userSpaceOnUse" x1="0" y1="360" x2="0" y2="620"><stop offset="0" stop-color="#0a78b0"/><stop offset="1" stop-color="#0a30d0"/></linearGradient>
</defs>
<path d="M380 552L385.1 550L390.3 548L395.5 545.9L400.8 543.9L405.9 541.9L410.8 539.9L415.6 537.9L420 536L424.1 534.1L428 532.3L431.7 530.6L435.2 528.8L438.6 527.1L441.8 525.4L445 523.7L448 522L450.9 520.3L453.6 518.7L456.2 517L458.7 515.4L461.1 513.8L463.4 512.2L465.7 510.6L468 509L470.3 507.5L472.4 506L474.5 504.5L476.6 503.1L478.6 501.6L480.7 500.1L482.8 498.6L485 497L487.3 495.4L489.6 493.8L491.9 492.2L494.2 490.5L496.6 488.8L499.1 487L501.5 485.1L504 483L506.5 480.8L509.1 478.5L511.8 476.1L514.4 473.6L517.1 471.1L519.8 468.4L522.4 465.7L525 463L527.6 460.2L530.2 457.3L532.7 454.3L535.3 451.3L537.8 448.2L540.3 445.2L542.7 442.1L545 439L547.2 435.9L549.3 432.8L551.3 429.6L553.3 426.4L555.2 423.2L557.2 420.1L559.1 417L561 414L563 411.1L564.9 408.4L566.9 405.8L568.9 403.1L570.8 400.5L572.6 397.8L574.4 395L576 392L577.5 388.8L578.9 385.4L580.2 381.9L581.4 378.4L582.6 374.8L583.8 371.4L584.9 368.1L586 365L587.1 362.2L588.2 359.6L589.2 357.1L590.2 354.8L591.2 352.4L592.1 350L593.1 347.6L594 345L595 342.2L596 339.2L597 336.1L597.9 333L598.9 330L599.7 327L600.4 324.4L601 322L601.4 320L601.7 318.2L601.8 316.7L601.9 315.3L601.9 314L601.9 312.7L601.9 311.4L602 310L602.5 309.2L602.9 308.4L603.1 307.6L603.4 306.8L603.9 306L604.6 305.1L605.6 304.1L607 303L608.9 301.7L611.1 300.4L613.6 298.9L616.3 297.3L619.3 295.7L622.4 294.1L625.7 292.5L629 291L632.5 289.5L636.3 288L640.2 286.5L644.3 284.9L648.5 283.4L652.7 281.9L656.9 280.5L661 279L665 277.6L668.8 276.2L672.6 274.8L676.4 273.4L680.4 272.1L684.6 270.7L689.1 269.4L694 268L699.4 266.6L705.3 265.2L711.6 263.7L718 262.2L724.5 260.8L730.9 259.5L737.1 258.2L743 257L748.5 255.9L753.9 254.8L759.2 253.8L764.3 252.9L769.3 252L774.3 251.2L779.2 250.6L784 250L788.7 249.6L793.4 249.2L797.9 249L802.4 248.9L806.8 248.8L811.2 248.8L815.6 248.9L820 249L824.3 249.1L828.4 249.3L832.4 249.5L836.4 249.8L840.6 250.1L845 250.6L849.8 251.2L855 252L860.7 253L866.9 254L873.4 255.3L880.2 256.6L887.1 258.1L894.1 259.6L901.1 261.3L908 263L914.9 264.9L922 266.9L929.3 269L936.5 271.2L943.7 273.5L950.7 275.8L957.5 277.9L964 280L970.3 282L976.5 283.9L982.6 285.8L988.5 287.7L994.1 289.5L999.5 291.4L1004.5 293.2L1009 295L1013.1 296.8L1016.7 298.6L1019.9 300.3L1022.8 302.1L1025.5 303.8L1028.1 305.5L1030.5 307.3L1033 309L1035.4 310.7L1037.8 312.5L1039.9 314.2L1042 315.9L1043.9 317.6L1045.8 319.4L1047.4 321.2L1049 323L1050.4 324.9L1051.6 327L1052.7 329.1L1053.7 331.2L1054.6 333.3L1055.4 335.3L1056.2 337.2L1057 339L1057.8 340.6L1058.5 342.1L1059.1 343.5L1059.7 344.8L1060.3 346.1L1060.8 347.4L1061.4 348.7L1062 350L1062.6 351L1063.1 351.7L1063.5 352.4L1064 353.1L1064.6 354L1065.4 355.2L1066.5 356.8L1068 359L1070 361.9L1072.3 365.3L1074.9 369.3L1077.8 373.5L1080.8 377.8L1083.9 382.2L1087 386.3L1090 390L1093 393.4L1096 396.8L1099.2 400L1102.3 403.2L1105.5 406.3L1108.7 409.2L1111.9 412.2L1115 415L1118.1 417.7L1121.2 420.4L1124.4 422.9L1127.5 425.3L1130.6 427.7L1133.8 430.1L1136.9 432.5L1140 435L1143.1 437.5L1146.2 440.1L1149.4 442.6L1152.5 445.2L1155.6 447.7L1158.8 450.2L1161.9 452.6L1165 455L1168 457.2L1171 459.3L1173.8 461.3L1176.8 463.3L1179.7 465.3L1182.9 467.4L1186.3 469.6L1190 472L1194 474.6L1198.4 477.4L1203 480.3L1207.7 483.3L1212.5 486.3L1217.4 489.3L1222.2 492.2L1227 495L1231.6 497.6L1236.1 500.2L1240.6 502.7L1245.2 505.2L1249.8 507.6L1254.6 510.1L1259.7 512.5L1265 515L1270.7 517.5L1276.7 520.1L1282.9 522.7L1289.2 525.3L1295.7 527.9L1302.2 530.4L1308.7 532.7L1315 535L1321.2 537.1L1327.5 539.2L1333.8 541.1L1340 543L1346.2 544.8L1352.5 546.6L1358.8 548.3L1365 550L1371.4 551.7L1377.9 553.3L1384.5 554.9L1391.1 556.5L1397.6 558L1403.8 559.4L1409.6 560.8L1415 562L1419.9 563.1L1424.3 564.1L1428.3 565L1432.1 565.8L1435.8 566.6L1439.4 567.4L1443.1 568.2L1447 569L1438.7 573.1L1430.6 577.1L1422.4 581.1L1414.3 585.1L1406.1 589.2L1397.7 593.3L1389 597.6L1380 602L1370.4 606.7L1360.2 611.7L1349.6 616.9L1338.9 622.2L1328.4 627.4L1318.2 632.3L1308.7 636.9L1300 641L1292.4 644.6L1285.6 647.8L1279.5 650.6L1273.8 653.2L1268.2 655.7L1262.5 658.1L1256.5 660.5L1250 663L1242.9 665.6L1235.5 668.1L1227.8 670.7L1220 673.2L1212.2 675.6L1204.5 677.9L1197.1 680L1190 682L1183.1 683.8L1176.2 685.5L1169.4 687L1162.8 688.4L1156.4 689.7L1150.4 690.9L1144.9 692L1140 693L1135.8 693.9L1132.2 694.7L1129.1 695.3L1126.4 695.9L1123.9 696.4L1121.4 696.9L1118.8 697.4L1116 698L1113.8 699.5L1105.4 697.9L1097.1 696.2L1088.7 694.6L1080.4 693.1L1072.3 691.6L1064.5 690.2L1057 689L1049.9 688L1043.1 687.1L1036.6 686.3L1030.2 685.6L1024 684.9L1017.8 684.3L1011.5 683.7L1005 683L998.4 682.3L991.7 681.7L984.9 681.1L978.1 680.5L971.4 679.9L964.8 679.3L958.3 678.7L952 678L945.8 677.3L939.5 676.7L933.4 676L927.3 675.3L921.5 674.6L915.9 673.8L910.7 672.9L906 672L901.8 670.9L898.2 669.8L895 668.5L892.1 667.2L889.3 665.9L886.5 664.5L883.4 663.2L880 662L876.4 660.9L872.9 659.8L869.3 658.8L865.6 657.8L861.7 656.7L857.5 655.6L853 654.4L848 653L842.5 651.5L836.4 649.8L830 648L823.2 646.1L816.4 644.2L809.5 642.4L802.6 640.6L796 639L789.4 637.4L782.8 635.9L776.1 634.4L769.5 633L762.9 631.6L756.4 630.3L750.1 629.1L744 628L738.1 627L732.3 626.2L726.7 625.4L721.2 624.8L715.9 624.1L710.5 623.6L705.3 623L700 622.5L694.8 622L689.7 621.5L684.7 621.1L679.8 620.7L674.8 620.4L669.9 620.1L665 619.8L660 619.5L655 619.3L650 619.1L645 618.9L640 618.8L635 618.7L630 618.6L625 618.5L620 618.5L615 618.5L610 618.5L605 618.5L600 618.6L595 618.6L590 618.7L585 618.9L580 619L575 619.2L569.9 619.3L564.8 619.6L559.7 619.8L554.6 620L549.6 620.3L544.8 620.6L540 621L535.4 621.4L530.9 621.9L526.5 622.4L522.2 622.9L517.9 623.4L513.6 624L509.3 624.5L505 625L504.9 624.3L504.8 623.6L504.7 622.9L504.5 622.2L504.4 621.5L504.3 620.7L504.3 619.9L504.3 619L504.4 618L504.5 617L504.7 615.8L504.9 614.7L505 613.5L505.2 612.3L505.3 611.1L505.4 610L505.4 608.9L505.4 607.8L505.4 606.6L505.3 605.5L505.2 604.4L505.1 603.2L504.9 602.1L504.7 601L504.5 599.9L504.3 598.7L504 597.6L503.8 596.4L503.4 595.3L503 594.2L502.4 593.1L501.7 592L500.8 590.9L499.8 589.9L498.6 588.8L497.3 587.8L496 586.7L494.7 585.8L493.3 584.8L492 584L490.7 583.2L489.3 582.4L488 581.7L486.6 581.1L485.2 580.5L483.8 579.9L482.4 579.4L481 579L479.7 578.7L478.3 578.4L477.1 578.3L475.8 578.2L474.4 578.1L473 578.1L471.6 578L470 578L468.3 577.9L466.5 577.9L464.7 577.8L462.8 577.8L460.8 577.7L458.8 577.8L456.9 577.8L455 578L453.2 578.2L451.4 578.4L449.6 578.7L447.8 579L446 579.4L444.1 579.8L442.1 580.4L440 581L437.9 581.7L435.8 582.6L433.7 583.5L431.6 584.5L429.2 585.6L426.5 586.7L423.5 587.8L420 589L416 590.2L411.4 591.5L406.5 592.9L401.2 594.3L395.9 595.7L390.5 597.2L385.1 598.6L380 600Z" fill="#ff0000"/>
<g clip-path="url(#clt)">
<path fill="none" stroke="#0a28d8" stroke-width="2.5" d="M599.6 322L600.9 318.7L602.6 315.4L604.9 312.2L607.6 309.1L610.7 306L614.3 303L618.3 300.1L622.7 297.3L627.4 294.6L632.6 291.9L638.1 289.4L643.9 287L650.1 284.7L656.5 282.5L663.2 280.4L670.2 278.5L677.4 276.6L684.8 275L692.5 273.4L700.3 272L708.3 270.7L716.5 269.6L724.7 268.6L733.1 267.7L741.6 267L750.2 266.5L758.9 266.1L767.6 265.8L776.3 265.7L785.1 265.8L794 266L802.8 266.4L811.7 266.9L820.5 267.6L829.4 268.5L838.2 269.5L847 270.6L855.8 271.9L864.6 273.4L873.3 275L882 276.8L890.6 278.7L899.2 280.7L907.8 282.9L916.3 285.2L924.7 287.7L933.1 290.3L941.4 293L949.6 295.8L957.7 298.8L965.7 301.8L973.6 305L981.3 308.2L989 311.6L996.4 315L1003.7 318.5L1010.8 322.1L1017.7 325.7L1024.3 329.4L1030.7 333.1L1036.9 336.9L1042.7 340.7L1048.2 344.5L1053.4 348.3L1058.1 352.2L1062.5 356L1066.5 359.8L1070 363.5L1073.1 367.3M597.1 333.8L598.3 330.6L600 327.5L602.2 324.5L604.9 321.6L608 318.7L611.6 315.9L615.6 313.2L620 310.5L624.8 308L630 305.6L635.6 303.2L641.5 301L647.7 298.9L654.3 296.9L661.2 295L668.3 293.3L675.7 291.6L683.3 290.1L691.1 288.8L699.2 287.5L707.4 286.4L715.8 285.5L724.3 284.6L733 284L741.7 283.4L750.6 283L759.6 282.8L768.6 282.7L777.7 282.7L786.8 282.9L796 283.3L805.1 283.8L814.3 284.4L823.5 285.2L832.7 286.2L841.9 287.3L851.1 288.5L860.3 289.9L869.4 291.4L878.5 293.1L887.5 294.9L896.5 296.8L905.5 298.9L914.4 301.1L923.2 303.5L932 306L940.7 308.5L949.3 311.2L957.8 314.1L966.2 317L974.5 320L982.6 323.1L990.7 326.4L998.5 329.7L1006.2 333L1013.8 336.5L1021.1 340L1028.1 343.5L1035 347.1L1041.5 350.8L1047.8 354.4L1053.8 358.1L1059.4 361.8L1064.7 365.6L1069.6 369.3L1074 372.9L1078 376.6L1081.6 380.2L1084.7 383.8M593.9 345.2L595.1 342.3L596.7 339.4L598.8 336.5L601.5 333.8L604.6 331.1L608.1 328.5L612.2 325.9L616.6 323.5L621.5 321.2L626.8 318.9L632.5 316.8L638.5 314.8L644.9 312.9L651.6 311L658.6 309.4L666 307.8L673.5 306.3L681.4 305L689.5 303.8L697.8 302.7L706.3 301.8L715 301L723.8 300.3L732.8 299.8L741.9 299.4L751.1 299.2L760.4 299.1L769.8 299.1L779.3 299.2L788.8 299.6L798.3 300L807.9 300.6L817.5 301.3L827.2 302.2L836.8 303.2L846.4 304.4L856 305.7L865.6 307.1L875.1 308.7L884.6 310.4L894.1 312.2L903.5 314.2L912.9 316.2L922.2 318.5L931.4 320.8L940.6 323.2L949.7 325.8L958.6 328.5L967.5 331.2L976.3 334.1L984.9 337L993.4 340.1L1001.7 343.2L1009.9 346.4L1017.8 349.7L1025.6 353L1033.1 356.4L1040.4 359.9L1047.5 363.3L1054.2 366.9L1060.7 370.4L1066.8 373.9L1072.5 377.5L1077.9 381L1082.9 384.6L1087.4 388.1L1091.5 391.6L1095.1 395L1098.2 398.5M590.4 356.4L591.4 353.6L592.9 350.9L595 348.3L597.6 345.7L600.7 343.2L604.3 340.8L608.3 338.5L612.8 336.2L617.8 334.1L623.2 332.1L628.9 330.1L635.1 328.3L641.6 326.6L648.5 324.9L655.7 323.4L663.3 322L671.1 320.8L679.2 319.6L687.5 318.6L696.1 317.7L704.9 316.9L713.9 316.3L723.1 315.8L732.4 315.4L741.9 315.1L751.5 315L761.2 315L771 315.1L780.9 315.4L790.8 315.8L800.8 316.3L810.9 317L820.9 317.8L831 318.8L841.1 319.8L851.2 321L861.2 322.4L871.3 323.8L881.3 325.4L891.3 327.1L901.2 328.9L911.1 330.9L920.9 333L930.7 335.1L940.3 337.4L949.9 339.8L959.4 342.3L968.8 344.9L978 347.6L987.2 350.4L996.1 353.3L1005 356.2L1013.6 359.2L1022.1 362.3L1030.3 365.5L1038.4 368.7L1046.2 371.9L1053.7 375.2L1060.9 378.5L1067.9 381.9L1074.5 385.3L1080.7 388.6L1086.6 392L1092.1 395.4L1097.2 398.7L1101.8 402L1105.9 405.3L1109.5 408.6L1112.6 411.8"/>
<path fill="none" stroke="#0a28d8" stroke-width="3.0" d="M586.6 367.3L587.5 364.7L589 362.2L591 359.8L593.6 357.4L596.6 355.1L600.2 352.9L604.3 350.8L608.8 348.8L613.8 346.9L619.3 345L625.2 343.3L631.4 341.6L638.1 340.1L645.2 338.7L652.6 337.4L660.3 336.2L668.4 335.1L676.7 334.1L685.4 333.2L694.2 332.5L703.4 331.9L712.7 331.4L722.2 331L731.9 330.7L741.8 330.6L751.8 330.6L761.9 330.7L772.1 331L782.5 331.4L792.8 331.9L803.3 332.5L813.8 333.2L824.4 334.1L834.9 335.1L845.5 336.2L856.1 337.5L866.6 338.8L877.2 340.3L887.7 341.9L898.1 343.6L908.6 345.4L918.9 347.3L929.2 349.4L939.4 351.5L949.5 353.8L959.5 356.1L969.5 358.5L979.2 361L988.9 363.7L998.4 366.3L1007.8 369.1L1016.9 371.9L1025.9 374.8L1034.7 377.8L1043.2 380.8L1051.5 383.8L1059.6 386.9L1067.3 390L1074.8 393.2L1081.9 396.4L1088.7 399.5L1095 402.7L1101 405.9L1106.6 409.1L1111.7 412.2L1116.4 415.3L1120.5 418.4L1124.2 421.5L1127.3 424.4M582.5 377.8L583.3 375.5L584.7 373.2L586.7 371L589.2 368.8L592.2 366.8L595.7 364.8L599.8 362.9L604.4 361.1L609.5 359.4L615 357.7L621 356.2L627.4 354.8L634.2 353.4L641.4 352.2L649 351.1L657 350L665.3 349.1L673.9 348.3L682.8 347.6L692 347.1L701.4 346.6L711.1 346.3L721 346L731.1 345.9L741.3 345.9L751.7 346.1L762.3 346.3L773 346.7L783.8 347.1L794.6 347.7L805.6 348.4L816.6 349.3L827.6 350.2L838.7 351.3L849.7 352.4L860.8 353.7L871.9 355.1L883 356.6L894 358.2L905 359.9L915.9 361.7L926.7 363.6L937.5 365.6L948.2 367.7L958.8 369.9L969.3 372.1L979.6 374.5L989.8 376.9L999.9 379.4L1009.8 382L1019.5 384.6L1029.1 387.3L1038.4 390.1L1047.5 392.9L1056.3 395.8L1064.9 398.6L1073.1 401.6L1081.1 404.5L1088.8 407.5L1096 410.5L1103 413.4L1109.5 416.4L1115.6 419.4L1121.2 422.3L1126.4 425.3L1131.1 428.2L1135.2 431L1138.9 433.8L1142 436.6M578 388L578.7 385.9L579.9 383.8L581.8 381.8L584.2 379.9L587.2 378.1L590.8 376.3L594.8 374.6L599.4 373L604.6 371.5L610.2 370.1L616.2 368.8L622.8 367.5L629.8 366.4L637.2 365.4L645 364.5L653.1 363.6L661.7 362.9L670.5 362.3L679.7 361.8L689.2 361.4L699 361.1L709 360.9L719.3 360.8L729.8 360.9L740.5 361L751.3 361.3L762.3 361.6L773.4 362.1L784.7 362.7L796.1 363.4L807.5 364.1L819 365L830.6 366L842.2 367.2L853.8 368.4L865.4 369.7L877 371.1L888.6 372.6L900.2 374.2L911.7 375.9L923.1 377.7L934.5 379.6L945.8 381.5L957 383.6L968.1 385.7L979 387.9L989.8 390.2L1000.5 392.5L1011 394.9L1021.3 397.4L1031.4 399.9L1041.3 402.5L1050.9 405.1L1060.3 407.7L1069.4 410.4L1078.3 413.2L1086.8 415.9L1095 418.7L1102.8 421.4L1110.3 424.2L1117.3 427L1124 429.8L1130.1 432.5L1135.9 435.3L1141.1 438L1145.8 440.6L1149.9 443.3L1153.5 445.8L1156.6 448.3M572.9 397.8L573.4 395.9L574.6 394L576.3 392.2L578.7 390.5L581.7 388.9L585.2 387.4L589.3 385.9L593.9 384.5L599.1 383.2L604.7 382L610.9 380.9L617.6 379.9L624.7 379L632.3 378.2L640.3 377.4L648.7 376.8L657.5 376.3L666.6 375.8L676.1 375.5L686 375.3L696.1 375.1L706.5 375.1L717.1 375.2L728 375.4L739.1 375.6L750.4 376L761.9 376.5L773.6 377.1L785.3 377.8L797.2 378.5L809.2 379.4L821.2 380.4L833.3 381.5L845.5 382.6L857.6 383.9L869.8 385.2L882 386.6L894.2 388.2L906.3 389.8L918.4 391.5L930.4 393.2L942.3 395.1L954.1 397L965.8 399L977.4 401L988.9 403.2L1000.2 405.4L1011.3 407.6L1022.2 409.9L1032.9 412.2L1043.4 414.6L1053.7 417.1L1063.7 419.5L1073.4 422L1082.8 424.6L1091.9 427.1L1100.7 429.7L1109.1 432.2L1117.1 434.8L1124.8 437.4L1131.9 439.9L1138.7 442.5L1144.9 445L1150.7 447.5L1156 450L1160.7 452.4L1164.8 454.8L1168.4 457.1L1171.3 459.4M567.4 407.1L567.8 405.4L568.8 403.8L570.5 402.3L572.8 400.8L575.7 399.4L579.2 398.1L583.3 396.8L587.9 395.7L593.1 394.6L598.9 393.6L605.2 392.7L612 391.9L619.3 391.2L627 390.5L635.2 390L643.9 389.5L652.9 389.2L662.4 388.9L672.2 388.8L682.3 388.7L692.8 388.8L703.6 388.9L714.7 389.1L726 389.4L737.6 389.8L749.4 390.3L761.3 390.9L773.5 391.6L785.7 392.4L798.2 393.2L810.7 394.2L823.3 395.2L836 396.3L848.7 397.6L861.5 398.8L874.3 400.2L887 401.7L899.8 403.2L912.5 404.8L925.1 406.5L937.7 408.2L950.2 410L962.6 411.9L974.9 413.8L987 415.8L998.9 417.8L1010.7 419.9L1022.3 422L1033.7 424.2L1044.9 426.4L1055.8 428.7L1066.4 431L1076.8 433.3L1086.9 435.6L1096.6 438L1106 440.3L1115 442.7L1123.6 445.1L1131.8 447.4L1139.6 449.8L1146.9 452.1L1153.7 454.4L1160.1 456.7L1165.9 459L1171.1 461.2L1175.8 463.4L1180 465.5L1183.5 467.6L1186.4 469.6M561.7 416.1L561.9 414.6L562.8 413.2L564.4 411.9L566.6 410.7L569.4 409.5L572.9 408.4L577 407.4L581.6 406.4L586.9 405.6L592.7 404.8L599.1 404.1L606 403.5L613.5 403L621.4 402.6L629.8 402.2L638.7 402L648 401.8L657.8 401.7L667.9 401.7L678.4 401.8L689.3 402L700.5 402.3L711.9 402.7L723.7 403.1L735.7 403.6L748 404.3L760.5 405L773.1 405.7L786 406.6L798.9 407.6L812 408.6L825.2 409.7L838.5 410.9L851.8 412.1L865.2 413.4L878.6 414.8L892 416.3L905.4 417.8L918.7 419.4L931.9 421L945.1 422.7L958.2 424.5L971.2 426.3L984 428.2L996.6 430.1L1009.1 432L1021.4 434L1033.5 436L1045.4 438.1L1057 440.2L1068.3 442.3L1079.3 444.4L1090.1 446.6L1100.4 448.7L1110.5 450.9L1120.1 453.1L1129.4 455.2L1138.2 457.4L1146.6 459.5L1154.5 461.7L1162 463.8L1168.9 465.9L1175.3 467.9L1181.1 469.9L1186.4 471.9L1191.1 473.8L1195.2 475.7L1198.6 477.5L1201.4 479.3M555.7 424.7L555.8 423.5L556.6 422.3L558 421.2L560.1 420.2L562.9 419.2L566.3 418.4L570.4 417.6L575.1 416.9L580.4 416.2L586.3 415.7L592.7 415.2L599.8 414.8L607.4 414.5L615.5 414.3L624.1 414.1L633.2 414.1L642.8 414.1L652.8 414.2L663.3 414.4L674.2 414.6L685.4 415L697 415.4L708.9 415.9L721.1 416.5L733.6 417.2L746.4 417.9L759.4 418.7L772.6 419.6L786 420.6L799.5 421.6L813.2 422.7L827 423.9L840.9 425.1L854.8 426.4L868.8 427.8L882.8 429.2L896.8 430.7L910.8 432.2L924.8 433.8L938.6 435.4L952.4 437L966.1 438.8L979.7 440.5L993.1 442.3L1006.3 444.1L1019.3 446L1032.1 447.9L1044.7 449.8L1057 451.7L1069.1 453.7L1080.8 455.6L1092.3 457.6L1103.3 459.6L1114.1 461.6L1124.4 463.6L1134.3 465.5L1143.8 467.5L1152.8 469.5L1161.4 471.4L1169.5 473.3L1177 475.2L1184 477L1190.4 478.8L1196.3 480.6L1201.6 482.3L1206.2 484L1210.2 485.6L1213.6 487.2L1216.3 488.7M549.6 433L549.6 432L550.2 431.1L551.5 430.2L553.5 429.4L556.2 428.7L559.5 428L563.6 427.5L568.3 427L573.6 426.6L579.5 426.2L586.1 426L593.3 425.8L601 425.7L609.3 425.6L618.1 425.7L627.5 425.8L637.3 426L647.7 426.3L658.5 426.7L669.7 427.1L681.3 427.6L693.3 428.2L705.6 428.8L718.3 429.6L731.3 430.4L744.6 431.2L758.1 432.2L771.8 433.1L785.8 434.2L799.9 435.3L814.2 436.5L828.6 437.7L843.1 439L857.7 440.3L872.3 441.7L887 443.2L901.6 444.6L916.3 446.2L930.9 447.7L945.4 449.3L959.8 450.9L974.1 452.6L988.2 454.3L1002.2 456L1016 457.8L1029.6 459.5L1042.9 461.3L1056 463.1L1068.8 464.9L1081.3 466.7L1093.5 468.5L1105.3 470.4L1116.8 472.2L1127.8 474L1138.4 475.8L1148.6 477.5L1158.3 479.3L1167.6 481L1176.3 482.8L1184.5 484.4L1192.1 486.1L1199.2 487.7L1205.7 489.2L1211.5 490.8L1216.8 492.2L1221.4 493.7L1225.3 495L1228.5 496.3L1231.1 497.6"/>
<path fill="none" stroke="#0a28d8" stroke-width="3.5" d="M543.4 441L543.1 440.2L543.6 439.5L544.8 438.8L546.7 438.3L549.3 437.8L552.6 437.4L556.6 437L561.3 436.8L566.6 436.6L572.6 436.4L579.3 436.4L586.5 436.4L594.4 436.5L602.9 436.7L611.9 436.9L621.5 437.2L631.7 437.6L642.3 438.1L653.4 438.6L665 439.2L677 439.9L689.4 440.6L702.2 441.4L715.3 442.2L728.8 443.1L742.6 444.1L756.7 445.1L771 446.2L785.5 447.4L800.2 448.6L815.1 449.8L830.2 451.1L845.3 452.4L860.5 453.8L875.8 455.2L891.1 456.6L906.5 458.1L921.7 459.6L937 461.2L952.2 462.7L967.2 464.3L982.1 465.9L996.9 467.6L1011.5 469.2L1025.9 470.9L1040 472.5L1053.9 474.2L1067.5 475.9L1080.8 477.5L1093.7 479.2L1106.3 480.9L1118.6 482.5L1130.4 484.1L1141.7 485.8L1152.7 487.4L1163.1 488.9L1173 490.5L1182.5 492L1191.4 493.5L1199.7 494.9L1207.4 496.3L1214.5 497.7L1221 499L1226.9 500.3L1232.1 501.5L1236.6 502.6L1240.4 503.7L1243.6 504.8L1246 505.7M537 448.6L536.5 448L536.8 447.5L537.9 447.1L539.6 446.8L542.2 446.5L545.4 446.3L549.4 446.2L554 446.2L559.4 446.2L565.5 446.3L572.2 446.4L579.6 446.6L587.6 446.9L596.3 447.3L605.5 447.7L615.3 448.2L625.7 448.8L636.7 449.4L648.1 450.1L660 450.8L672.4 451.7L685.3 452.5L698.5 453.4L712.2 454.4L726.1 455.4L740.5 456.5L755.1 457.6L770 458.8L785.1 460L800.4 461.3L816 462.6L831.7 463.9L847.5 465.3L863.4 466.7L879.3 468.1L895.3 469.5L911.3 471L927.3 472.5L943.2 474L959 475.5L974.7 477.1L990.3 478.6L1005.7 480.2L1020.9 481.7L1035.9 483.3L1050.6 484.8L1065 486.4L1079.2 487.9L1092.9 489.4L1106.4 491L1119.4 492.5L1132 493.9L1144.2 495.4L1155.9 496.8L1167.1 498.2L1177.8 499.6L1188 500.9L1197.6 502.2L1206.6 503.4L1215.1 504.6L1222.9 505.8L1230 506.9L1236.5 508L1242.4 509L1247.5 509.9L1252 510.8L1255.7 511.6L1258.7 512.4L1260.9 513.1M530.5 455.8L529.8 455.5L529.9 455.3L530.8 455.1L532.5 455L534.9 454.9L538 455L542 455.1L546.6 455.2L552 455.4L558.1 455.7L564.9 456.1L572.4 456.5L580.6 457L589.4 457.5L598.9 458.2L609 458.8L619.6 459.6L630.9 460.3L642.6 461.2L654.9 462.1L667.7 463L681 464L694.7 465.1L708.8 466.1L723.3 467.3L738.2 468.4L753.4 469.7L768.9 470.9L784.6 472.2L800.6 473.5L816.8 474.8L833.1 476.2L849.6 477.6L866.2 479L882.8 480.4L899.5 481.9L916.2 483.3L932.9 484.8L949.5 486.2L966 487.7L982.4 489.2L998.6 490.6L1014.6 492.1L1030.5 493.6L1046.1 495L1061.4 496.4L1076.4 497.9L1091 499.3L1105.3 500.6L1119.2 502L1132.7 503.3L1145.7 504.6L1158.2 505.9L1170.3 507.1L1181.8 508.3L1192.7 509.4L1203.1 510.5L1212.9 511.6L1222.1 512.6L1230.6 513.6L1238.5 514.5L1245.7 515.3L1252.2 516.1L1258 516.9L1263.1 517.5L1267.4 518.2L1271 518.7L1273.9 519.2L1276 519.7M524 462.8L523.1 462.8L523 462.7L523.7 462.8L525.2 462.9L527.5 463.1L530.6 463.3L534.5 463.6L539.1 464L544.5 464.4L550.7 464.9L557.6 465.5L565.2 466.1L573.5 466.8L582.5 467.5L592.1 468.3L602.4 469.1L613.4 470L624.9 471L637 471.9L649.7 473L662.9 474L676.6 475.2L690.8 476.3L705.4 477.5L720.4 478.7L735.8 480L751.6 481.3L767.7 482.6L784 483.9L800.7 485.3L817.5 486.6L834.5 488L851.7 489.4L868.9 490.8L886.3 492.3L903.7 493.7L921.1 495.1L938.5 496.5L955.8 497.9L973 499.4L990.1 500.7L1007 502.1L1023.7 503.5L1040.1 504.9L1056.3 506.2L1072.2 507.5L1087.8 508.8L1103 510L1117.8 511.2L1132.2 512.4L1146.1 513.5L1159.5 514.6L1172.4 515.7L1184.8 516.7L1196.6 517.7L1207.8 518.6L1218.4 519.5L1228.4 520.3L1237.7 521.1L1246.3 521.8L1254.2 522.5L1261.4 523.1L1267.9 523.6L1273.7 524.1L1278.7 524.5L1282.9 524.8L1286.4 525.1L1289.1 525.4L1290.9 525.5M517.4 469.6L516.4 469.8L516.2 470L516.9 470.3L518.3 470.6L520.6 471L523.7 471.5L527.6 472L532.3 472.6L537.7 473.3L544 474L551 474.7L558.7 475.5L567.2 476.4L576.4 477.3L586.3 478.2L596.9 479.2L608.1 480.3L620 481.4L632.4 482.5L645.5 483.7L659 484.9L673.1 486.1L687.7 487.3L702.8 488.6L718.3 489.9L734.2 491.3L750.5 492.6L767.1 494L784 495.4L801.1 496.7L818.5 498.1L836.1 499.5L853.9 500.9L871.7 502.3L889.7 503.7L907.7 505.1L925.7 506.5L943.6 507.9L961.5 509.2L979.3 510.6L997 511.9L1014.5 513.2L1031.8 514.4L1048.8 515.6L1065.5 516.8L1081.9 518L1098 519.1L1113.7 520.2L1128.9 521.3L1143.7 522.3L1158.1 523.2L1171.9 524.1L1185.2 525L1197.9 525.8L1210 526.6L1221.5 527.3L1232.3 527.9L1242.5 528.5L1252 529L1260.8 529.5L1268.9 529.9L1276.3 530.3L1282.8 530.6L1288.6 530.8L1293.7 530.9L1297.9 531L1301.3 531.1L1304 531L1305.8 530.9M510.9 476.2L509.9 476.6L509.7 477.1L510.3 477.6L511.8 478.2L514.2 478.8L517.3 479.5L521.3 480.2L526.1 481L531.7 481.9L538.1 482.8L545.3 483.8L553.3 484.8L562 485.8L571.4 486.9L581.5 488L592.4 489.2L603.9 490.4L616.1 491.6L628.8 492.9L642.2 494.2L656.2 495.5L670.6 496.8L685.6 498.2L701.1 499.6L717 500.9L733.3 502.3L750 503.7L767.1 505.1L784.4 506.6L802.1 508L819.9 509.4L838 510.8L856.2 512.2L874.5 513.5L893 514.9L911.4 516.2L929.9 517.6L948.4 518.9L966.8 520.1L985 521.4L1003.2 522.6L1021.1 523.8L1038.9 524.9L1056.3 526L1073.5 527.1L1090.4 528.1L1106.9 529L1123 530L1138.7 530.8L1153.9 531.7L1168.6 532.4L1182.8 533.1L1196.4 533.8L1209.5 534.4L1222 535L1233.8 535.4L1244.9 535.9L1255.4 536.2L1265.2 536.5L1274.2 536.7L1282.5 536.9L1290.1 537L1296.8 537.1L1302.8 537L1308 537L1312.3 536.8L1315.9 536.6L1318.6 536.3L1320.5 536M504.5 482.5L503.4 483.2L503.2 483.9L503.8 484.6L505.4 485.5L507.7 486.3L511 487.3L515 488.2L520 489.3L525.7 490.3L532.3 491.4L539.6 492.6L547.8 493.8L556.7 495L566.4 496.3L576.8 497.6L587.9 498.9L599.7 500.3L612.2 501.6L625.3 503L639 504.4L653.3 505.9L668.1 507.3L683.5 508.8L699.4 510.2L715.7 511.7L732.4 513.1L749.6 514.6L767 516L784.8 517.5L802.9 518.9L821.2 520.3L839.8 521.7L858.4 523.1L877.3 524.5L896.2 525.8L915.1 527.1L934.1 528.3L953 529.6L971.9 530.8L990.6 531.9L1009.2 533L1027.7 534.1L1045.9 535.1L1063.8 536.1L1081.4 537L1098.7 537.9L1115.7 538.7L1132.2 539.4L1148.3 540.1L1163.9 540.8L1179 541.3L1193.6 541.9L1207.6 542.3L1221 542.7L1233.7 543L1245.9 543.3L1257.3 543.5L1268.1 543.6L1278.1 543.7L1287.4 543.7L1295.9 543.6L1303.7 543.5L1310.6 543.3L1316.8 543L1322.1 542.7L1326.5 542.3L1330.2 541.8L1333 541.3L1334.9 540.7M497.9 488.5L496.8 489.4L496.6 490.3L497.2 491.3L498.8 492.4L501.2 493.5L504.5 494.6L508.7 495.8L513.7 497.1L519.6 498.3L526.3 499.7L533.8 501L542.2 502.4L551.3 503.8L561.2 505.3L571.9 506.7L583.3 508.2L595.4 509.7L608.1 511.2L621.6 512.8L635.6 514.3L650.3 515.9L665.5 517.4L681.3 519L697.5 520.5L714.2 522L731.4 523.6L748.9 525.1L766.9 526.6L785.1 528L803.6 529.5L822.4 530.9L841.4 532.3L860.5 533.7L879.8 535L899.2 536.3L918.6 537.5L938.1 538.7L957.5 539.9L976.8 541L996 542.1L1015.1 543.1L1034 544.1L1052.7 545L1071.1 545.8L1089.1 546.6L1106.9 547.3L1124.2 548L1141.2 548.6L1157.7 549.1L1173.7 549.5L1189.2 549.9L1204.1 550.3L1218.5 550.5L1232.2 550.7L1245.3 550.8L1257.8 550.9L1269.5 550.8L1280.5 550.7L1290.8 550.6L1300.4 550.3L1309.1 550L1317.1 549.7L1324.2 549.2L1330.5 548.7L1335.9 548.1L1340.5 547.5L1344.3 546.8L1347.2 546L1349.1 545.2"/>
<path fill="none" stroke="#0a28d8" stroke-width="4.0" d="M490.6 493.2L489.4 494.3L489.2 495.5L489.9 496.7L491.4 498L493.9 499.3L497.3 500.7L501.6 502.1L506.7 503.6L512.7 505.1L519.6 506.6L527.3 508.2L535.9 509.8L545.3 511.4L555.4 513L566.3 514.7L578 516.4L590.4 518L603.5 519.7L617.2 521.4L631.6 523.1L646.7 524.8L662.3 526.4L678.4 528.1L695.1 529.8L712.2 531.4L729.8 533L747.8 534.6L766.1 536.1L784.8 537.7L803.8 539.2L823.1 540.6L842.5 542L862.2 543.4L881.9 544.7L901.8 546L921.7 547.3L941.6 548.4L961.5 549.6L981.4 550.6L1001.1 551.6L1020.6 552.5L1040 553.4L1059.1 554.2L1078 555L1096.5 555.6L1114.7 556.2L1132.5 556.8L1149.9 557.2L1166.8 557.6L1183.2 557.9L1199.1 558.1L1214.4 558.3L1229.1 558.3L1243.2 558.3L1256.6 558.2L1269.4 558.1L1281.4 557.9L1292.7 557.5L1303.3 557.2L1313.1 556.7L1322 556.2L1330.2 555.6L1337.5 554.9L1344 554.1L1349.6 553.3L1354.3 552.5L1358.1 551.5L1361.1 550.5L1363.1 549.4M483.6 498.1L482.4 499.4L482.1 500.9L482.8 502.3L484.4 503.8L487 505.4L490.4 507L494.8 508.6L500.1 510.3L506.2 512L513.3 513.8L521.2 515.5L529.9 517.3L539.5 519.1L549.9 520.9L561.1 522.8L573 524.6L585.7 526.4L599.1 528.3L613.2 530.1L627.9 531.9L643.3 533.7L659.2 535.5L675.8 537.3L692.8 539L710.4 540.7L728.4 542.4L746.8 544.1L765.6 545.7L784.7 547.3L804.1 548.8L823.8 550.3L843.8 551.7L863.9 553.1L884.1 554.4L904.4 555.7L924.8 556.9L945.2 558L965.6 559.1L985.9 560.1L1006.1 561L1026.1 561.8L1045.9 562.6L1065.5 563.3L1084.8 563.9L1103.8 564.5L1122.4 564.9L1140.6 565.3L1158.4 565.6L1175.8 565.8L1192.6 566L1208.8 566L1224.5 566L1239.6 565.9L1254 565.7L1267.8 565.4L1280.9 565L1293.2 564.6L1304.8 564.1L1315.6 563.5L1325.6 562.8L1334.8 562L1343.1 561.2L1350.6 560.3L1357.3 559.3L1363 558.2L1367.8 557.1L1371.8 555.9L1374.8 554.7L1376.9 553.4M476.9 503.1L475.7 504.7L475.4 506.4L476.1 508.1L477.8 509.8L480.4 511.6L483.9 513.4L488.3 515.3L493.7 517.2L500 519.1L507.2 521L515.3 523L524.2 525L534 526.9L544.6 528.9L556.1 530.9L568.3 532.9L581.2 534.9L594.9 536.9L609.3 538.8L624.4 540.8L640.1 542.7L656.4 544.6L673.3 546.4L690.8 548.3L708.7 550.1L727.1 551.8L745.9 553.5L765.2 555.2L784.7 556.8L804.6 558.3L824.8 559.8L845.1 561.2L865.7 562.6L886.4 563.9L907.2 565.1L928 566.3L948.9 567.4L969.7 568.4L990.5 569.3L1011.1 570.1L1031.6 570.9L1051.9 571.5L1071.9 572.1L1091.7 572.6L1111.1 573L1130.1 573.4L1148.8 573.6L1167 573.7L1184.7 573.8L1201.9 573.7L1218.5 573.6L1234.5 573.4L1250 573.1L1264.7 572.7L1278.8 572.2L1292.2 571.6L1304.8 570.9L1316.7 570.2L1327.7 569.4L1338 568.4L1347.4 567.5L1355.9 566.4L1363.6 565.2L1370.4 564L1376.2 562.7L1381.2 561.4L1385.2 560L1388.3 558.5L1390.5 556.9M470.4 508.1L469.2 509.9L468.9 511.8L469.6 513.7L471.3 515.7L473.9 517.7L477.5 519.8L482.1 521.8L487.6 523.9L494 526L501.3 528.2L509.6 530.3L518.7 532.5L528.7 534.6L539.5 536.8L551.2 538.9L563.7 541.1L576.9 543.2L590.9 545.3L605.6 547.4L621 549.4L637.1 551.5L653.7 553.4L671 555.4L688.8 557.3L707.1 559.2L725.9 561L745.2 562.7L764.8 564.4L784.8 566L805.1 567.6L825.7 569.1L846.5 570.5L867.5 571.8L888.7 573.1L909.9 574.3L931.2 575.4L952.5 576.4L973.8 577.3L995 578.1L1016.1 578.9L1037.1 579.5L1057.8 580.1L1078.2 580.6L1098.4 580.9L1118.3 581.2L1137.7 581.4L1156.8 581.4L1175.4 581.4L1193.5 581.3L1211 581.1L1228 580.8L1244.4 580.3L1260.2 579.8L1275.3 579.2L1289.7 578.5L1303.3 577.7L1316.2 576.8L1328.4 575.9L1339.7 574.8L1350.1 573.7L1359.8 572.5L1368.5 571.1L1376.3 569.8L1383.3 568.3L1389.3 566.8L1394.4 565.2L1398.5 563.5L1401.6 561.8L1403.9 560M464 512.9L462.8 515L462.5 517.1L463.2 519.3L464.9 521.5L467.6 523.7L471.3 525.9L475.9 528.2L481.5 530.5L488.1 532.8L495.5 535.1L504 537.5L513.3 539.8L523.5 542.1L534.6 544.4L546.5 546.7L559.2 549L572.7 551.3L587 553.5L602 555.7L617.7 557.9L634.1 560L651.1 562.1L668.7 564.1L686.9 566.1L705.6 568L724.8 569.9L744.4 571.6L764.5 573.4L784.9 575L805.6 576.6L826.7 578L847.9 579.4L869.3 580.8L890.9 582L912.6 583.1L934.4 584.2L956.1 585.1L977.9 586L999.5 586.7L1021.1 587.4L1042.4 587.9L1063.6 588.3L1084.5 588.7L1105.1 588.9L1125.3 589L1145.2 589.1L1164.7 589L1183.6 588.8L1202.1 588.5L1220.1 588.1L1237.4 587.6L1254.2 587L1270.3 586.2L1285.7 585.4L1300.4 584.5L1314.3 583.5L1327.5 582.4L1339.9 581.2L1351.4 579.9L1362.1 578.6L1371.9 577.1L1380.9 575.6L1388.9 574L1396 572.3L1402.1 570.5L1407.3 568.7L1411.5 566.8L1414.7 564.8L1417 562.8M457.8 517.6L456.5 519.9L456.2 522.2L456.9 524.6L458.6 527L461.4 529.5L465.1 531.9L469.8 534.4L475.5 536.9L482.2 539.4L489.9 541.9L498.4 544.4L507.9 546.9L518.3 549.4L529.6 551.9L541.8 554.3L554.7 556.8L568.5 559.2L583.1 561.5L598.4 563.8L614.4 566.1L631.1 568.3L648.5 570.5L666.5 572.6L685 574.7L704.1 576.6L723.7 578.5L743.7 580.4L764.2 582.1L785 583.8L806.1 585.3L827.6 586.8L849.2 588.2L871.1 589.5L893.1 590.7L915.3 591.8L937.4 592.7L959.6 593.6L981.8 594.4L1003.9 595.1L1025.9 595.6L1047.7 596L1069.2 596.4L1090.6 596.6L1111.6 596.7L1132.2 596.7L1152.5 596.5L1172.4 596.3L1191.7 595.9L1210.6 595.5L1228.9 594.9L1246.6 594.2L1263.7 593.4L1280.1 592.5L1295.8 591.5L1310.8 590.3L1325.1 589.1L1338.5 587.8L1351.1 586.4L1362.9 584.9L1373.8 583.3L1383.9 581.6L1393 579.8L1401.2 578L1408.4 576.1L1414.7 574.1L1420 572L1424.3 569.9L1427.6 567.7L1429.9 565.5M451.6 522.1L450.2 524.6L449.9 527.2L450.7 529.8L452.4 532.4L455.2 535L459 537.7L463.8 540.4L469.6 543.1L476.4 545.8L484.2 548.5L493 551.2L502.6 553.8L513.3 556.5L524.8 559.1L537.1 561.7L550.4 564.3L564.4 566.8L579.2 569.3L594.8 571.8L611.2 574.1L628.2 576.5L645.9 578.7L664.2 580.9L683.1 583L702.6 585L722.5 587L742.9 588.9L763.8 590.6L785 592.3L806.6 593.9L828.4 595.4L850.5 596.7L872.8 598L895.2 599.2L917.8 600.2L940.4 601.1L963 602L985.6 602.7L1008.2 603.2L1030.5 603.7L1052.8 604L1074.8 604.2L1096.5 604.3L1117.9 604.3L1139 604.1L1159.7 603.9L1179.9 603.5L1199.6 603L1218.9 602.3L1237.5 601.6L1255.6 600.7L1273 599.7L1289.7 598.6L1305.8 597.4L1321.1 596L1335.6 594.6L1349.3 593.1L1362.2 591.5L1374.2 589.7L1385.3 587.9L1395.5 586L1404.8 584L1413.2 581.9L1420.5 579.8L1426.9 577.6L1432.3 575.3L1436.7 572.9L1440.1 570.5L1442.5 568.1M445.4 526.4L444.1 529.1L443.8 531.9L444.5 534.7L446.3 537.5L449.1 540.4L453 543.3L457.9 546.1L463.8 549L470.7 551.9L478.7 554.8L487.6 557.7L497.4 560.5L508.2 563.3L519.9 566.1L532.5 568.9L546 571.6L560.3 574.3L575.4 576.9L591.3 579.4L607.9 581.9L625.3 584.3L643.3 586.7L661.9 588.9L681.2 591.1L701 593.2L721.3 595.2L742.1 597.1L763.4 598.9L785 600.6L806.9 602.2L829.2 603.7L851.7 605.1L874.4 606.3L897.3 607.4L920.2 608.5L943.3 609.3L966.3 610.1L989.3 610.7L1012.3 611.2L1035.1 611.6L1057.7 611.8L1080.1 611.9L1102.3 611.9L1124.1 611.8L1145.5 611.5L1166.6 611.1L1187.2 610.5L1207.3 609.8L1226.9 609L1245.9 608.1L1264.3 607L1282.1 605.9L1299.1 604.6L1315.5 603.2L1331 601.7L1345.8 600L1359.8 598.3L1372.9 596.4L1385.2 594.5L1396.5 592.5L1406.9 590.3L1416.4 588.1L1424.9 585.8L1432.4 583.5L1438.9 581L1444.4 578.5L1448.9 575.9L1452.3 573.3L1454.8 570.6M439.3 530.4L438 533.4L437.6 536.3L438.4 539.4L440.2 542.4L443.1 545.5L447 548.5L452 551.6L458 554.7L465.1 557.8L473.1 560.8L482.2 563.9L492.2 566.9L503.2 569.9L515.1 572.8L527.9 575.7L541.6 578.6L556.2 581.4L571.6 584.1L587.8 586.8L604.7 589.4L622.3 591.9L640.7 594.4L659.7 596.7L679.3 599L699.4 601.1L720.1 603.2L741.3 605.1L762.9 607L784.9 608.7L807.2 610.3L829.9 611.8L852.8 613.1L875.9 614.4L899.2 615.5L922.6 616.4L946 617.3L969.5 618L992.9 618.5L1016.3 619L1039.5 619.3L1062.5 619.4L1085.3 619.4L1107.9 619.3L1130.1 619L1151.9 618.6L1173.4 618L1194.4 617.3L1214.8 616.5L1234.8 615.5L1254.1 614.5L1272.9 613.2L1290.9 611.9L1308.3 610.4L1324.9 608.8L1340.8 607.1L1355.8 605.3L1370.1 603.3L1383.4 601.3L1395.9 599.1L1407.4 596.9L1418 594.5L1427.7 592.1L1436.3 589.6L1444 587L1450.6 584.3L1456.2 581.6L1460.8 578.8L1464.3 575.9L1466.8 573M433.3 534.2L431.9 537.4L431.6 540.6L432.3 543.8L434.2 547L437.1 550.3L441.1 553.6L446.2 556.9L452.3 560.1L459.5 563.4L467.6 566.6L476.9 569.8L487.1 573L498.2 576.2L510.3 579.3L523.4 582.3L537.3 585.3L552.1 588.3L567.8 591.1L584.2 593.9L601.5 596.6L619.4 599.3L638.1 601.8L657.4 604.2L677.3 606.5L697.8 608.8L718.9 610.9L740.4 612.9L762.4 614.7L784.7 616.5L807.5 618.1L830.5 619.6L853.8 621L877.3 622.2L901 623.3L924.8 624.2L948.7 625L972.5 625.6L996.4 626.1L1020.1 626.5L1043.8 626.7L1067.2 626.8L1090.4 626.7L1113.3 626.4L1135.9 626L1158.2 625.5L1180 624.8L1201.3 624L1222.1 623L1242.4 621.9L1262.1 620.6L1281.2 619.2L1299.6 617.7L1317.2 616.1L1334.2 614.3L1350.3 612.4L1365.6 610.3L1380.1 608.2L1393.7 606L1406.4 603.6L1418.1 601.1L1428.9 598.6L1438.7 595.9L1447.5 593.2L1455.3 590.4L1462.1 587.5L1467.8 584.6L1472.4 581.6L1476 578.5L1478.5 575.4"/>
<path fill="none" stroke="#0a28d8" stroke-width="4.5" d="M427.4 537.8L425.9 541.2L425.6 544.6L426.4 548L428.2 551.5L431.2 554.9L435.3 558.4L440.4 561.9L446.6 565.3L453.9 568.8L462.2 572.2L471.6 575.6L482 578.9L493.3 582.3L505.6 585.5L518.9 588.7L533.1 591.8L548.1 594.9L564 597.9L580.7 600.8L598.3 603.6L616.5 606.4L635.5 609L655.1 611.5L675.4 613.9L696.2 616.2L717.6 618.3L739.5 620.4L761.8 622.3L784.6 624.1L807.7 625.7L831.1 627.2L854.8 628.6L878.7 629.8L902.8 630.8L927 631.7L951.2 632.5L975.5 633.1L999.7 633.5L1023.9 633.8L1047.9 633.9L1071.7 633.9L1095.3 633.7L1118.6 633.4L1141.6 632.9L1164.2 632.2L1186.4 631.4L1208.1 630.4L1229.3 629.3L1249.9 628L1269.9 626.6L1289.3 625.1L1308 623.4L1325.9 621.5L1343.2 619.6L1359.6 617.5L1375.1 615.3L1389.9 612.9L1403.7 610.5L1416.6 607.9L1428.5 605.3L1439.5 602.5L1449.5 599.7L1458.4 596.7L1466.4 593.7L1473.2 590.6L1479 587.4L1483.8 584.2L1487.4 580.9L1490 577.6M421.5 541.3L420.1 544.8L419.7 548.4L420.5 552.1L422.4 555.7L425.4 559.4L429.5 563L434.8 566.7L441.1 570.4L448.5 574L456.9 577.6L466.4 581.1L477 584.7L488.5 588.1L501 591.5L514.5 594.9L528.9 598.2L544.2 601.4L560.3 604.5L577.3 607.5L595.1 610.4L613.6 613.2L632.9 615.9L652.8 618.5L673.4 621L694.6 623.4L716.3 625.6L738.6 627.7L761.3 629.6L784.4 631.4L807.9 633.1L831.7 634.6L855.7 635.9L880 637.1L904.5 638.2L929.1 639.1L953.7 639.8L978.4 640.3L1003 640.7L1027.5 640.9L1051.9 641L1076.1 640.9L1100.1 640.6L1123.8 640.1L1147.1 639.5L1170.1 638.7L1192.6 637.8L1214.7 636.7L1236.2 635.4L1257.2 634L1277.5 632.5L1297.2 630.8L1316.2 628.9L1334.4 626.9L1351.9 624.8L1368.6 622.5L1384.4 620.1L1399.4 617.6L1413.4 614.9L1426.5 612.2L1438.7 609.3L1449.8 606.3L1460 603.3L1469.1 600.1L1477.1 596.9L1484.1 593.6L1490 590.2L1494.8 586.8L1498.5 583.3L1501.1 579.8M415.8 544.6L414.3 548.3L414 552.2L414.8 556L416.7 559.8L419.8 563.7L423.9 567.5L429.2 571.4L435.7 575.2L443.2 579L451.7 582.8L461.4 586.5L472.1 590.2L483.8 593.8L496.5 597.4L510.2 600.9L524.8 604.3L540.3 607.6L556.7 610.8L574 614L592 617L610.8 619.9L630.4 622.7L650.6 625.4L671.5 627.9L693 630.4L715.1 632.6L737.7 634.8L760.7 636.8L784.2 638.6L808 640.3L832.2 641.8L856.6 643.1L881.3 644.3L906.1 645.3L931.1 646.2L956.1 646.9L981.1 647.4L1006.1 647.7L1031.1 647.9L1055.8 647.8L1080.4 647.6L1104.8 647.3L1128.8 646.7L1152.5 646L1175.8 645.1L1198.7 644.1L1221.1 642.8L1243 641.4L1264.2 639.9L1284.9 638.2L1304.9 636.3L1324.2 634.3L1342.7 632.1L1360.5 629.8L1377.4 627.4L1393.5 624.8L1408.7 622.1L1422.9 619.2L1436.2 616.3L1448.6 613.2L1459.9 610.1L1470.2 606.8L1479.4 603.5L1487.6 600L1494.7 596.5L1500.7 593L1505.6 589.3L1509.4 585.6L1512 581.9M410.3 547.8L408.7 551.7L408.4 555.7L409.2 559.8L411.1 563.8L414.2 567.8L418.5 571.9L423.8 575.9L430.4 579.9L438 583.9L446.7 587.8L456.5 591.7L467.3 595.6L479.2 599.3L492.1 603L505.9 606.7L520.8 610.2L536.5 613.7L553.2 617L570.7 620.3L589 623.4L608.1 626.4L627.9 629.3L648.5 632.1L669.7 634.7L691.5 637.2L713.9 639.5L736.8 641.7L760.2 643.7L784 645.6L808.2 647.3L832.7 648.8L857.5 650.1L882.5 651.3L907.7 652.3L933.1 653.1L958.4 653.8L983.8 654.2L1009.2 654.5L1034.5 654.6L1059.6 654.5L1084.6 654.3L1109.3 653.8L1133.7 653.2L1157.7 652.3L1181.4 651.3L1204.6 650.2L1227.3 648.8L1249.5 647.3L1271.1 645.6L1292.1 643.7L1312.4 641.7L1331.9 639.5L1350.8 637.2L1368.8 634.7L1386 632.1L1402.3 629.3L1417.7 626.5L1432.2 623.4L1445.7 620.3L1458.2 617.1L1469.7 613.7L1480.1 610.2L1489.5 606.7L1497.8 603.1L1505 599.4L1511.1 595.6L1516.1 591.8L1519.9 587.9L1522.6 583.9M404.8 550.8L403.3 555L402.9 559.2L403.7 563.4L405.7 567.6L408.8 571.9L413.1 576.1L418.6 580.3L425.2 584.5L432.9 588.6L441.7 592.7L451.7 596.8L462.7 600.8L474.7 604.7L487.8 608.5L501.8 612.3L516.9 616L532.8 619.6L549.7 623L567.5 626.4L586 629.6L605.4 632.8L625.5 635.7L646.4 638.6L667.9 641.3L690 643.8L712.7 646.2L735.9 648.4L759.6 650.5L783.8 652.4L808.3 654.1L833.2 655.6L858.3 657L883.7 658.1L909.3 659.1L935 659.9L960.7 660.5L986.5 661L1012.2 661.2L1037.8 661.2L1063.3 661.1L1088.6 660.7L1113.7 660.2L1138.4 659.4L1162.8 658.5L1186.8 657.4L1210.4 656.1L1233.4 654.6L1255.9 653L1277.8 651.1L1299.1 649.1L1319.7 647L1339.5 644.6L1358.6 642.2L1376.9 639.5L1394.3 636.7L1410.8 633.8L1426.5 630.7L1441.2 627.5L1454.9 624.2L1467.6 620.8L1479.2 617.2L1489.8 613.6L1499.3 609.9L1507.8 606L1515.1 602.1L1521.3 598.2L1526.3 594.1L1530.2 590L1532.9 585.9M399.6 553.8L398 558.2L397.6 562.6L398.4 567L400.4 571.4L403.6 575.8L408 580.2L413.5 584.6L420.2 588.9L428 593.2L436.9 597.5L447 601.7L458.1 605.8L470.3 609.9L483.6 613.9L497.8 617.8L513.1 621.6L529.3 625.3L546.4 628.9L564.3 632.4L583.2 635.7L602.8 638.9L623.2 642L644.3 644.9L666.1 647.7L688.5 650.3L711.5 652.7L735.1 655L759.1 657.1L783.6 659L808.5 660.7L833.7 662.3L859.2 663.6L884.9 664.8L910.8 665.8L936.8 666.5L962.9 667.1L989 667.5L1015.1 667.7L1041.1 667.6L1066.9 667.4L1092.6 667L1118 666.4L1143 665.5L1167.8 664.5L1192.1 663.3L1216 661.9L1239.3 660.3L1262.1 658.5L1284.3 656.6L1305.9 654.4L1326.7 652.1L1346.9 649.6L1366.2 647L1384.7 644.2L1402.4 641.2L1419.2 638.1L1435 634.9L1449.9 631.5L1463.8 628L1476.7 624.4L1488.5 620.7L1499.2 616.8L1508.9 612.9L1517.4 608.9L1524.8 604.8L1531.1 600.6L1536.2 596.4L1540.1 592.1L1542.9 587.8M394.4 556.7L392.8 561.3L392.4 565.8L393.3 570.4L395.3 575L398.5 579.6L402.9 584.2L408.5 588.7L415.3 593.2L423.2 597.7L432.3 602.1L442.4 606.5L453.7 610.8L466.1 615L479.5 619.1L493.9 623.2L509.4 627.1L525.8 630.9L543.1 634.6L561.3 638.2L580.4 641.6L600.3 644.9L620.9 648.1L642.3 651.1L664.4 653.9L687.1 656.6L710.4 659.1L734.3 661.4L758.6 663.5L783.4 665.4L808.6 667.2L834.1 668.7L859.9 670.1L886 671.3L912.2 672.2L938.6 673L965 673.5L991.5 673.9L1017.9 674L1044.2 673.9L1070.4 673.6L1096.4 673.1L1122.1 672.4L1147.5 671.5L1172.6 670.4L1197.2 669.1L1221.4 667.5L1245.1 665.8L1268.2 663.9L1290.6 661.8L1312.5 659.6L1333.6 657.1L1354 654.5L1373.6 651.7L1392.4 648.7L1410.3 645.6L1427.2 642.4L1443.3 638.9L1458.4 635.4L1472.4 631.7L1485.5 627.9L1497.5 624L1508.4 620L1518.1 615.9L1526.8 611.7L1534.3 607.4L1540.7 603.1L1545.8 598.7L1549.8 594.2L1552.6 589.7M389.5 559.6L387.8 564.3L387.4 569L388.3 573.8L390.3 578.5L393.6 583.3L398 588L403.7 592.8L410.5 597.4L418.6 602.1L427.7 606.6L438 611.2L449.5 615.6L462 620L475.6 624.2L490.2 628.4L505.8 632.4L522.4 636.4L539.9 640.2L558.4 643.9L577.7 647.4L597.8 650.8L618.7 654L640.4 657.1L662.7 660L685.7 662.7L709.3 665.2L733.5 667.6L758.1 669.8L783.2 671.7L808.7 673.5L834.6 675.1L860.7 676.4L887.1 677.6L913.6 678.5L940.3 679.3L967.1 679.8L993.9 680.1L1020.6 680.1L1047.3 680L1073.8 679.6L1100.1 679.1L1126.1 678.3L1151.9 677.3L1177.2 676.1L1202.2 674.7L1226.7 673.1L1250.6 671.2L1274 669.2L1296.8 667L1318.9 664.6L1340.3 662L1360.9 659.2L1380.8 656.3L1399.8 653.2L1417.9 649.9L1435.1 646.5L1451.3 642.9L1466.6 639.2L1480.9 635.3L1494.1 631.4L1506.2 627.3L1517.2 623.1L1527.1 618.8L1535.9 614.4L1543.5 610L1549.9 605.4L1555.2 600.8L1559.2 596.2L1562 591.5M384.6 562.3L383 567.2L382.6 572.1L383.4 577.1L385.5 582L388.8 586.9L393.3 591.8L399 596.7L406 601.5L414.1 606.3L423.4 611L433.8 615.7L445.3 620.3L458 624.8L471.7 629.2L486.5 633.5L502.3 637.6L519.1 641.7L536.9 645.6L555.5 649.4L575.1 653L595.4 656.5L616.6 659.8L638.5 662.9L661.1 665.9L684.4 668.7L708.3 671.3L732.7 673.7L757.6 675.9L783 677.9L808.8 679.6L835 681.2L861.4 682.6L888.1 683.7L915 684.7L942 685.4L969.1 685.8L996.2 686.1L1023.3 686.1L1050.2 685.9L1077.1 685.5L1103.7 684.9L1130 684L1156.1 683L1181.7 681.7L1207 680.1L1231.8 678.4L1256 676.5L1279.7 674.3L1302.7 672L1325.1 669.5L1346.7 666.7L1367.6 663.8L1387.7 660.7L1406.9 657.5L1425.3 654.1L1442.7 650.5L1459.1 646.7L1474.6 642.9L1489 638.9L1502.4 634.7L1514.6 630.5L1525.8 626.1L1535.8 621.6L1544.7 617.1L1552.4 612.4L1558.9 607.7L1564.2 603L1568.3 598.1L1571.2 593.3M380 565L378.3 570.1L377.9 575.2L378.8 580.3L380.9 585.4L384.2 590.4L388.8 595.5L394.5 600.5L401.6 605.5L409.8 610.5L419.1 615.3L429.7 620.1L441.4 624.9L454.2 629.5L468.1 634L483 638.4L499 642.7L516 646.9L533.9 650.9L552.8 654.8L572.5 658.5L593.1 662L614.5 665.4L636.7 668.6L659.6 671.7L683.1 674.5L707.2 677.1L732 679.6L757.2 681.8L782.9 683.8L809 685.6L835.4 687.2L862.2 688.6L889.2 689.7L916.4 690.6L943.7 691.3L971.1 691.8L998.5 692L1025.8 692L1053.1 691.7L1080.2 691.3L1107.2 690.5L1133.8 689.6L1160.1 688.5L1186.1 687.1L1211.6 685.5L1236.7 683.6L1261.2 681.6L1285.2 679.3L1308.5 676.9L1331.1 674.2L1353 671.4L1374.1 668.3L1394.4 665.1L1413.9 661.7L1432.4 658.1L1450 654.4L1466.7 650.5L1482.3 646.5L1496.9 642.3L1510.4 638L1522.8 633.6L1534.1 629L1544.3 624.4L1553.2 619.7L1561 614.9L1567.6 610L1573 605L1577.1 600L1580 595"/>
<path fill="none" stroke="url(#mg)" stroke-width="4.5" d="M390.4 559.7L383.6 567.5L377.9 575.2M402 553.4L394.7 561.8L389 570L384.5 577.9L380.8 585.2M414.5 546L406.8 554.9L401.1 563.7L396.7 571.9L393 579.6L389.9 586.9L387 593.7M428.1 537.6L419.7 546.9L413.9 556.2L409.5 564.9L406 572.9L402.9 580.4L400 587.5L397.3 594.2L394.8 600.7M427.3 547.7L423.1 556.7L419.6 564.9L416.5 572.7L413.6 580.1L410.9 587.1L408.3 593.9L405.8 600.4L403.4 606.7M433.7 555.8L430.6 563.9L427.7 571.5L424.9 578.9L422.3 586L419.7 592.8L417.2 599.4L414.8 605.8L412.5 612M442.3 561.8L439.5 569.5L436.8 576.9L434.1 584L431.5 591L429 597.7L426.6 604.2L424.2 610.5L421.9 616.6M451.7 566.6L448.9 574.2L446.2 581.4L443.6 588.5L441 595.4L438.5 602L436.1 608.5L433.8 614.8L431.5 620.9M461.3 570.8L458.6 578.2L455.9 585.5L453.3 592.5L450.8 599.3L448.3 606L445.9 612.4L443.5 618.7L441.2 624.8M471.2 574.4L468.4 581.8L465.8 589.1L463.2 596.1L460.6 602.9L458.1 609.6L455.7 616L453.4 622.3L451.1 628.4M481.2 577.6L478.4 585.1L475.7 592.4L473.1 599.4L470.6 606.2L468.1 612.9L465.7 619.4L463.3 625.7L461 631.8M491.2 580.6L488.5 588.1L485.8 595.4L483.2 602.4L480.6 609.3L478.1 616L475.7 622.5L473.4 628.8L471.1 634.9M501.4 583.4L498.6 590.9L495.9 598.2L493.3 605.3L490.7 612.2L488.2 618.9L485.8 625.4L483.4 631.7L481.1 637.9M511.5 585.9L508.8 593.5L506.1 600.8L503.4 608L500.9 614.9L498.4 621.6L495.9 628.2L493.6 634.5L491.3 640.7M521.8 588.3L519 595.9L516.3 603.3L513.6 610.5L511.1 617.4L508.6 624.2L506.1 630.8L503.7 637.1L501.4 643.3M532 590.6L529.2 598.2L526.5 605.6L523.9 612.8L521.3 619.8L518.8 626.6L516.3 633.2L513.9 639.6L511.6 645.8M542.3 592.7L539.5 600.4L536.8 607.9L534.1 615.1L531.5 622.1L529 628.9L526.6 635.5L524.2 642L521.8 648.2M552.6 594.7L549.8 602.5L547.1 610L544.4 617.2L541.8 624.3L539.3 631.1L536.8 637.8L534.4 644.2L532.1 650.5M562.9 596.7L560.1 604.4L557.4 611.9L554.7 619.2L552.1 626.3L549.6 633.2L547.1 639.9L544.7 646.4L542.4 652.7M573.3 598.5L570.4 606.3L567.7 613.9L565 621.2L562.4 628.3L559.9 635.2L557.4 641.9L555 648.4L552.7 654.7M583.6 600.2L580.8 608.1L578 615.7L575.4 623L572.7 630.2L570.2 637.1L567.7 643.8L565.3 650.4L563 656.7M594 601.9L591.2 609.8L588.4 617.4L585.7 624.8L583.1 632L580.5 638.9L578.1 645.7L575.6 652.3L573.3 658.6M604.4 603.5L601.5 611.4L598.8 619.1L596.1 626.5L593.5 633.7L590.9 640.7L588.4 647.5L586 654L583.6 660.4M614.7 605L611.9 613L609.1 620.7L606.4 628.1L603.8 635.3L601.3 642.4L598.8 649.2L596.3 655.8L594 662.2M625.1 606.5L622.3 614.5L619.5 622.2L616.8 629.7L614.2 636.9L611.6 644L609.1 650.8L606.7 657.4L604.4 663.8M635.5 607.9L632.7 615.9L629.9 623.7L627.2 631.2L624.6 638.4L622 645.5L619.5 652.4L617.1 659L614.7 665.4M646 609.3L643.1 617.3L640.3 625.1L637.6 632.6L635 639.9L632.4 647L629.9 653.9L627.5 660.5L625.1 667M656.4 610.6L653.5 618.6L650.7 626.4L648 634L645.4 641.3L642.8 648.4L640.3 655.3L637.9 662L635.5 668.5M666.8 611.8L664 619.9L661.2 627.7L658.5 635.3L655.8 642.6L653.2 649.8L650.7 656.7L648.3 663.4L645.9 669.9M677.2 613L674.4 621.1L671.6 629L668.9 636.6L666.2 643.9L663.7 651.1L661.1 658L658.7 664.7L656.3 671.2M687.7 614.2L684.8 622.3L682 630.2L679.3 637.8L676.7 645.2L674.1 652.3L671.6 659.3L669.1 666L666.7 672.5M698.1 615.3L695.3 623.4L692.5 631.3L689.7 638.9L687.1 646.3L684.5 653.5L682 660.5L679.5 667.2L677.2 673.8M708.6 616.4L705.7 624.5L702.9 632.4L700.2 640.1L697.5 647.5L694.9 654.7L692.4 661.7L690 668.4L687.6 675M719 617.4L716.1 625.6L713.4 633.5L710.6 641.1L708 648.6L705.4 655.8L702.9 662.8L700.4 669.6L698 676.2M729.5 618.4L726.6 626.6L723.8 634.5L721.1 642.2L718.4 649.6L715.8 656.8L713.3 663.9L710.9 670.7L708.5 677.3M739.9 619.4L737.1 627.5L734.3 635.5L731.5 643.2L728.9 650.6L726.3 657.9L723.8 664.9L721.3 671.7L718.9 678.3M750.4 620.3L747.5 628.5L744.7 636.4L742 644.1L739.3 651.6L736.7 658.8L734.2 665.9L731.8 672.7L729.4 679.3M760.8 621.1L758 629.4L755.2 637.3L752.4 645L749.8 652.5L747.2 659.8L744.7 666.8L742.2 673.7L739.8 680.3M771.3 622L768.4 630.2L765.6 638.2L762.9 645.9L760.2 653.4L757.7 660.7L755.1 667.7L752.7 674.6L750.3 681.2M781.8 622.8L778.9 631L776.1 639L773.4 646.7L770.7 654.2L768.1 661.5L765.6 668.6L763.1 675.4L760.8 682.1M792.2 623.6L789.4 631.8L786.6 639.8L783.8 647.5L781.2 655L778.6 662.3L776.1 669.4L773.6 676.3L771.2 682.9M802.7 624.3L799.9 632.5L797.1 640.5L794.3 648.3L791.7 655.8L789.1 663.1L786.5 670.2L784.1 677.1L781.7 683.7M813.2 625L810.3 633.2L807.5 641.2L804.8 649L802.1 656.5L799.5 663.8L797 670.9L794.6 677.8L792.2 684.5M823.7 625.7L820.8 633.9L818 641.9L815.3 649.7L812.6 657.2L810 664.5L807.5 671.6L805 678.5L802.6 685.2M834.2 626.3L831.3 634.6L828.5 642.6L825.8 650.3L823.1 657.9L820.5 665.2L818 672.3L815.5 679.2L813.1 685.9M844.6 626.9L841.8 635.2L839 643.2L836.2 651L833.6 658.5L831 665.8L828.4 672.9L826 679.8L823.6 686.5M855.1 627.5L852.3 635.8L849.5 643.8L846.7 651.5L844.1 659.1L841.5 666.4L838.9 673.5L836.5 680.4L834.1 687.1M865.6 628.1L862.7 636.3L859.9 644.3L857.2 652.1L854.5 659.6L851.9 667L849.4 674.1L847 681L844.6 687.7M876.1 628.6L873.2 636.8L870.4 644.8L867.7 652.6L865 660.1L862.4 667.5L859.9 674.6L857.4 681.5L855.1 688.2M886.6 629.1L883.7 637.3L880.9 645.3L878.2 653.1L875.5 660.6L872.9 668L870.4 675.1L867.9 682L865.5 688.7M897.1 629.5L894.2 637.8L891.4 645.8L888.7 653.5L886 661.1L883.4 668.4L880.9 675.6L878.4 682.5L876 689.2M907.6 630L904.7 638.2L901.9 646.2L899.2 654L896.5 661.5L893.9 668.8L891.4 676L888.9 682.9L886.5 689.6M918.1 630.4L915.2 638.6L912.4 646.6L909.7 654.3L907 661.9L904.4 669.2L901.9 676.4L899.4 683.3L897 690M928.6 630.7L925.7 638.9L922.9 646.9L920.1 654.7L917.5 662.2L914.9 669.6L912.4 676.7L909.9 683.6L907.5 690.4M939 631.1L936.2 639.3L933.4 647.3L930.6 655L928 662.6L925.4 669.9L922.9 677L920.4 684L918 690.7M949.5 631.4L946.7 639.6L943.9 647.6L941.1 655.3L938.5 662.8L935.9 670.2L933.3 677.3L930.9 684.2L928.5 691M960 631.7L957.2 639.9L954.4 647.8L951.6 655.6L949 663.1L946.4 670.4L943.8 677.6L941.4 684.5L939 691.2M970.5 631.9L967.7 640.1L964.9 648.1L962.1 655.8L959.5 663.3L956.9 670.7L954.3 677.8L951.9 684.7L949.5 691.4M981 632.2L978.2 640.3L975.4 648.3L972.6 656L970 663.5L967.4 670.8L964.8 678L962.4 684.9L960 691.6M991.5 632.4L988.7 640.5L985.9 648.4L983.1 656.2L980.5 663.7L977.9 671L975.3 678.1L972.9 685L970.5 691.8M1002 632.5L999.2 640.7L996.4 648.6L993.6 656.3L991 663.8L988.4 671.1L985.8 678.2L983.4 685.2L981 691.9M1012.5 632.7L1009.7 640.8L1006.9 648.7L1004.1 656.4L1001.5 663.9L998.9 671.2L996.3 678.3L993.9 685.2L991.5 692M1023 632.8L1020.2 640.9L1017.4 648.8L1014.6 656.5L1012 664L1009.4 671.3L1006.8 678.4L1004.4 685.3L1002 692M1033.5 632.8L1030.7 640.9L1027.9 648.8L1025.1 656.5L1022.5 664L1019.9 671.3L1017.3 678.4L1014.9 685.3L1012.5 692M1044 632.9L1041.2 641L1038.4 648.8L1035.6 656.5L1033 664L1030.4 671.3L1027.8 678.4L1025.4 685.3L1023 692M1054.5 632.9L1051.7 641L1048.9 648.8L1046.1 656.5L1043.5 664L1040.9 671.2L1038.3 678.3L1035.9 685.2L1033.5 691.9M1065 632.9L1062.2 640.9L1059.4 648.8L1056.6 656.4L1054 663.9L1051.4 671.2L1048.8 678.3L1046.4 685.1L1044 691.8M1075.5 632.9L1072.7 640.9L1069.9 648.7L1067.1 656.3L1064.5 663.8L1061.9 671.1L1059.3 678.1L1056.9 685L1054.5 691.7M1086 632.8L1083.2 640.8L1080.4 648.6L1077.6 656.2L1075 663.7L1072.4 670.9L1069.8 678L1067.4 684.9L1065 691.6M1096.5 632.7L1093.7 640.7L1090.9 648.5L1088.1 656.1L1085.5 663.5L1082.9 670.7L1080.3 677.8L1077.9 684.7L1075.5 691.4M1107 632.6L1104.2 640.5L1101.4 648.3L1098.6 655.9L1096 663.3L1093.4 670.5L1090.8 677.6L1088.4 684.4L1086 691.1M1117.5 632.4L1114.7 640.3L1111.9 648.1L1109.1 655.7L1106.5 663.1L1103.9 670.3L1101.3 677.3L1098.9 684.2L1096.5 690.9M1128 632.2L1125.2 640.1L1122.4 647.8L1119.6 655.4L1117 662.8L1114.4 670L1111.8 677L1109.4 683.9L1107 690.6M1138.5 632L1135.6 639.8L1132.8 647.6L1130.1 655.1L1127.4 662.5L1124.9 669.7L1122.3 676.7L1119.9 683.6L1117.5 690.2M1149 631.7L1146.1 639.5L1143.3 647.2L1140.6 654.8L1137.9 662.1L1135.3 669.3L1132.8 676.4L1130.4 683.2L1128 689.8M1159.5 631.4L1156.6 639.2L1153.8 646.9L1151.1 654.4L1148.4 661.8L1145.8 668.9L1143.3 676L1140.8 682.8L1138.5 689.4M1170 631L1167.1 638.9L1164.3 646.5L1161.6 654L1158.9 661.4L1156.3 668.5L1153.8 675.5L1151.3 682.3L1148.9 689M1180.5 630.6L1177.6 638.4L1174.8 646.1L1172.1 653.6L1169.4 660.9L1166.8 668.1L1164.3 675L1161.8 681.9L1159.4 688.5M1191 630.2L1188.1 638L1185.3 645.6L1182.6 653.1L1179.9 660.4L1177.3 667.6L1174.8 674.5L1172.3 681.3L1169.9 688M1201.5 629.8L1198.6 637.5L1195.8 645.1L1193.1 652.6L1190.4 659.9L1187.8 667L1185.3 674L1182.8 680.8L1180.4 687.4M1212 629.3L1209.1 637L1206.3 644.6L1203.5 652L1200.9 659.3L1198.3 666.4L1195.7 673.4L1193.3 680.2L1190.9 686.8M1222.5 628.7L1219.6 636.4L1216.8 644L1214 651.4L1211.4 658.7L1208.8 665.8L1206.2 672.7L1203.8 679.5L1201.4 686.1M1232.9 628.1L1230.1 635.8L1227.3 643.4L1224.5 650.8L1221.8 658L1219.2 665.1L1216.7 672.1L1214.2 678.8L1211.8 685.4M1243.4 627.5L1240.5 635.2L1237.7 642.7L1235 650.1L1232.3 657.3L1229.7 664.4L1227.2 671.3L1224.7 678.1L1222.3 684.7M1253.9 626.8L1251 634.5L1248.2 642L1245.5 649.4L1242.8 656.6L1240.2 663.7L1237.7 670.6L1235.2 677.3L1232.8 683.9M1264.4 626.1L1261.5 633.7L1258.7 641.2L1255.9 648.6L1253.3 655.8L1250.7 662.9L1248.1 669.8L1245.7 676.5L1243.3 683.1M1274.8 625.3L1272 632.9L1269.1 640.4L1266.4 647.7L1263.7 654.9L1261.1 662L1258.6 668.9L1256.1 675.7L1253.7 682.2M1285.3 624.5L1282.4 632.1L1279.6 639.5L1276.9 646.9L1274.2 654.1L1271.6 661.1L1269 668L1266.6 674.7L1264.2 681.3M1295.8 623.6L1292.9 631.2L1290.1 638.6L1287.3 645.9L1284.6 653.1L1282 660.2L1279.5 667.1L1277 673.8L1274.6 680.4M1306.2 622.6L1303.3 630.2L1300.5 637.6L1297.8 644.9L1295.1 652.1L1292.5 659.2L1290 666L1287.5 672.8L1285.1 679.3M1316.7 621.6L1313.8 629.1L1311 636.6L1308.2 643.9L1305.5 651.1L1302.9 658.1L1300.4 665L1297.9 671.7L1295.5 678.3M1327.1 620.5L1324.2 628L1321.4 635.5L1318.7 642.8L1316 649.9L1313.4 657L1310.8 663.9L1308.4 670.6L1306 677.2M1337.6 619.3L1334.7 626.9L1331.8 634.3L1329.1 641.6L1326.4 648.8L1323.8 655.8L1321.3 662.7L1318.8 669.4L1316.4 676M1348 618.1L1345.1 625.6L1342.3 633L1339.5 640.3L1336.8 647.5L1334.2 654.6L1331.7 661.4L1329.2 668.2L1326.8 674.7M1358.4 616.8L1355.5 624.3L1352.7 631.7L1349.9 639L1347.3 646.2L1344.7 653.2L1342.1 660.1L1339.7 666.9L1337.3 673.4M1368.8 615.3L1365.9 622.9L1363.1 630.3L1360.3 637.6L1357.7 644.8L1355.1 651.9L1352.5 658.8L1350.1 665.5L1347.7 672.1M1379.2 613.8L1376.3 621.4L1373.5 628.8L1370.7 636.2L1368.1 643.4L1365.5 650.4L1362.9 657.3L1360.5 664.1L1358.1 670.7M1389.5 612.1L1386.7 619.7L1383.9 627.2L1381.1 634.6L1378.5 641.8L1375.9 648.9L1373.3 655.8L1370.9 662.6L1368.5 669.2M1399.9 610.3L1397 618L1394.2 625.5L1391.5 632.9L1388.8 640.2L1386.2 647.3L1383.7 654.2L1381.2 661L1378.8 667.6M1410.2 608.3L1407.4 616.1L1404.6 623.7L1401.8 631.1L1399.2 638.4L1396.6 645.6L1394.1 652.5L1391.6 659.3L1389.2 665.9M1420.5 606.2L1417.7 614.1L1414.9 621.7L1412.2 629.3L1409.5 636.6L1406.9 643.7L1404.4 650.7L1402 657.6L1399.6 664.2M1430.7 603.8L1427.9 611.9L1425.2 619.6L1422.5 627.2L1419.8 634.6L1417.3 641.8L1414.7 648.9L1412.3 655.7L1409.9 662.4M1440.9 601.2L1438.1 609.4L1435.4 617.4L1432.7 625.1L1430.1 632.5L1427.6 639.8L1425.1 646.9L1422.6 653.8L1420.2 660.5M1450.9 598.2L1448.3 606.8L1445.6 614.9L1443 622.7L1440.4 630.3L1437.8 637.6L1435.3 644.8L1432.9 651.7L1430.5 658.5M1460.9 594.8L1458.4 603.8L1455.8 612.2L1453.2 620.2L1450.6 627.9L1448.1 635.3L1445.6 642.6L1443.2 649.6L1440.8 656.4M1470.5 590.7L1468.3 600.4L1465.8 609.2L1463.3 617.4L1460.8 625.3L1458.3 632.9L1455.8 640.2L1453.4 647.3L1451.1 654.1M1479.7 585.6L1478 596.5L1475.8 605.9L1473.4 614.4L1470.9 622.5L1468.4 630.2L1466 637.7L1463.6 644.8L1461.3 651.8M1487.5 578.6L1487.4 591.8L1485.6 602L1483.3 611.1L1480.9 619.5L1478.5 627.4L1476.2 635L1473.8 642.3L1471.5 649.3M1496 585.8L1495.1 597.6L1493.1 607.3L1490.9 616.1L1488.6 624.3L1486.3 632.1L1483.9 639.5L1481.7 646.6M1504 592.1L1502.7 603L1500.7 612.3L1498.5 620.9L1496.3 628.9L1494 636.5L1491.8 643.8M1511.7 585L1511.8 597.8L1510.3 608.1L1508.3 617.1L1506.2 625.5L1504 633.3L1501.8 640.8M1520.1 591.4L1519.5 603.1L1517.9 612.9L1516 621.7L1513.9 629.8L1511.8 637.5M1528.2 597.2L1527.3 608.1L1525.6 617.5L1523.7 626L1521.7 634M1535.4 589.6L1536.1 602.4L1535 612.8L1533.3 621.8L1531.5 630.1M1543.9 595.5L1543.9 607.2L1542.7 617.1L1541.1 625.9M1552.1 600.7L1551.7 611.7L1550.5 621.2M1558.6 592.5L1560.1 605.4L1559.5 615.9M1567.2 597.7L1568 609.7"/>
<path fill="none" stroke="url(#mg)" stroke-width="4.0" d="M433.3 537.8L427.3 547.7M447.4 527.5L441.2 537.9L437.1 547.3L433.7 555.8M461.8 516L455.6 526.9L451.7 536.6L448.4 545.5L445.3 553.8L442.3 561.8M476.8 503.7L470.4 514.8L466.7 524.5L463.5 533.7L460.4 542.4L457.4 550.8L454.5 558.9L451.7 566.6M486 501.8L482.4 511.3L479.1 520.5L476 529.5L472.9 538.3L469.9 546.8L467 555.1L464.1 563.1L461.3 570.8M495.4 506.3L492 515.3L488.8 524.4L485.8 533.3L482.7 542L479.8 550.5L476.8 558.7L474 566.7L471.2 574.4M505.5 509.4L502.1 518.4L498.8 527.5L495.8 536.4L492.8 545.2L489.8 553.7L486.8 562L484 569.9L481.2 577.6M515.7 511.9L512.2 521L509 530.2L505.9 539.2L502.9 548L499.9 556.6L496.9 564.9L494 572.9L491.2 580.6M526 514L522.5 523.3L519.2 532.6L516.1 541.7L513.1 550.6L510 559.2L507.1 567.5L504.2 575.6L501.4 583.4M536.3 516L532.8 525.4L529.5 534.8L526.3 544L523.3 552.9L520.3 561.6L517.3 570L514.4 578.1L511.5 585.9M546.6 517.9L543.1 527.4L539.8 536.8L536.6 546.1L533.6 555.1L530.5 563.9L527.5 572.3L524.6 580.5L521.8 588.3M557 519.6L553.4 529.2L550.1 538.7L546.9 548.1L543.9 557.1L540.8 566L537.8 574.5L534.9 582.7L532 590.6M567.4 521.2L563.8 530.9L560.5 540.5L557.3 549.9L554.2 559.1L551.1 567.9L548.1 576.5L545.2 584.8L542.3 592.7M577.7 522.7L574.2 532.5L570.8 542.2L567.6 551.7L564.5 560.9L561.4 569.8L558.4 578.5L555.5 586.7L552.6 594.7M588.1 524.2L584.5 534.1L581.2 543.8L578 553.4L574.9 562.6L571.8 571.6L568.8 580.3L565.8 588.6L562.9 596.7M598.5 525.6L594.9 535.6L591.6 545.4L588.4 555L585.2 564.3L582.1 573.3L579.1 582L576.1 590.4L573.3 598.5M609 526.9L605.3 537L602 546.9L598.8 556.5L595.6 565.9L592.5 574.9L589.5 583.7L586.5 592.1L583.6 600.2M619.4 528.2L615.8 538.4L612.4 548.3L609.2 558L606 567.4L602.9 576.5L599.9 585.3L596.9 593.8L594 601.9M629.8 529.5L626.2 539.7L622.8 549.7L619.6 559.4L616.4 568.8L613.3 578L610.2 586.8L607.3 595.3L604.4 603.5M640.2 530.7L636.6 540.9L633.2 551L630 560.7L626.8 570.2L623.7 579.4L620.6 588.3L617.7 596.8L614.7 605M650.7 531.9L647 542.2L643.6 552.3L640.4 562.1L637.2 571.6L634.1 580.8L631 589.7L628.1 598.3L625.1 606.5M661.1 533L657.5 543.4L654 553.5L650.8 563.3L647.7 572.9L644.5 582.1L641.5 591.1L638.5 599.6L635.5 607.9M671.5 534.1L667.9 544.5L664.5 554.7L661.2 564.5L658.1 574.1L654.9 583.4L651.9 592.4L648.9 601L646 609.3M682 535.2L678.3 545.6L674.9 555.8L671.7 565.7L668.5 575.3L665.4 584.6L662.3 593.6L659.3 602.3L656.4 610.6M692.4 536.3L688.8 546.7L685.4 556.9L682.1 566.8L678.9 576.5L675.8 585.8L672.7 594.8L669.7 603.5L666.8 611.8M702.9 537.3L699.2 547.8L695.8 558L692.6 567.9L689.4 577.6L686.2 586.9L683.2 596L680.2 604.7L677.2 613M713.3 538.3L709.7 548.8L706.2 559.1L703 569L699.8 578.7L696.7 588L693.6 597.1L690.6 605.8L687.7 614.2M723.8 539.3L720.1 549.8L716.7 560.1L713.4 570L710.3 579.7L707.1 589.1L704.1 598.2L701 606.9L698.1 615.3M734.2 540.2L730.6 550.8L727.2 561.1L723.9 571L720.7 580.7L717.6 590.1L714.5 599.2L711.5 608L708.6 616.4M744.7 541.2L741 551.7L737.6 562L734.4 572L731.2 581.7L728 591.1L725 600.2L721.9 609L719 617.4M755.2 542.1L751.5 552.7L748.1 563L744.8 572.9L741.6 582.6L738.5 592.1L735.4 601.2L732.4 609.9L729.5 618.4M765.6 543L762 553.6L758.5 563.9L755.3 573.8L752.1 583.6L749 593L745.9 602.1L742.9 610.9L739.9 619.4M776.1 543.8L772.4 554.4L769 564.7L765.7 574.7L762.6 584.4L759.4 593.9L756.3 603L753.3 611.8L750.4 620.3M786.6 544.7L782.9 555.3L779.5 565.6L776.2 575.6L773 585.3L769.9 594.7L766.8 603.9L763.8 612.7L760.8 621.1M797 545.5L793.4 556.1L789.9 566.4L786.7 576.4L783.5 586.1L780.4 595.5L777.3 604.7L774.2 613.5L771.3 622M807.5 546.3L803.8 556.9L800.4 567.2L797.1 577.2L794 586.9L790.8 596.3L787.7 605.5L784.7 614.3L781.8 622.8M818 547.1L814.3 557.7L810.9 568L807.6 578L804.4 587.7L801.3 597.1L798.2 606.2L795.2 615.1L792.2 623.6M828.4 547.9L824.8 558.5L821.3 568.8L818.1 578.7L814.9 588.4L811.8 597.8L808.7 607L805.7 615.8L802.7 624.3M838.9 548.6L835.2 559.2L831.8 569.5L828.6 579.4L825.4 589.1L822.2 598.5L819.2 607.7L816.1 616.5L813.2 625M849.4 549.4L845.7 559.9L842.3 570.2L839 580.1L835.9 589.8L832.7 599.2L829.6 608.4L826.6 617.2L823.7 625.7M859.9 550.1L856.2 560.7L852.8 570.9L849.5 580.8L846.3 590.5L843.2 599.9L840.1 609L837.1 617.8L834.2 626.3M870.3 550.8L866.7 561.3L863.2 571.6L860 581.4L856.8 591.1L853.7 600.5L850.6 609.6L847.6 618.4L844.6 626.9M880.8 551.5L877.1 562L873.7 572.2L870.5 582.1L867.3 591.7L864.2 601.1L861.1 610.2L858.1 619L855.1 627.5M891.3 552.2L887.6 562.7L884.2 572.8L881 582.7L877.8 592.3L874.7 601.7L871.6 610.8L868.5 619.6L865.6 628.1M901.8 552.8L898.1 563.3L894.7 573.4L891.4 583.3L888.3 592.8L885.1 602.2L882 611.3L879 620.1L876.1 628.6M912.3 553.4L908.6 563.9L905.2 574L901.9 583.8L898.8 593.4L895.6 602.7L892.5 611.8L889.5 620.6L886.6 629.1M922.7 554.1L919.1 564.5L915.7 574.6L912.4 584.3L909.3 593.9L906.1 603.2L903 612.3L900 621L897.1 629.5M933.2 554.7L929.6 565.1L926.1 575.1L922.9 584.9L919.7 594.4L916.6 603.7L913.5 612.7L910.5 621.5L907.6 630M943.7 555.2L940 565.6L936.6 575.6L933.4 585.3L930.2 594.8L927.1 604.1L924 613.1L921 621.9L918.1 630.4M954.2 555.8L950.5 566.1L947.1 576.1L943.9 585.8L940.7 595.3L937.6 604.5L934.5 613.5L931.5 622.3L928.6 630.7M964.7 556.4L961 566.7L957.6 576.6L954.4 586.2L951.2 595.7L948.1 604.9L945 613.9L942 622.6L939 631.1M975.2 556.9L971.5 567.2L968.1 577.1L964.9 586.7L961.7 596.1L958.6 605.3L955.5 614.3L952.5 623L949.5 631.4M985.6 557.4L982 567.6L978.6 577.5L975.4 587.1L972.2 596.4L969.1 605.6L966 614.6L963 623.2L960 631.7M996.1 557.9L992.5 568.1L989.1 577.9L985.9 587.4L982.7 596.8L979.6 605.9L976.5 614.9L973.5 623.5L970.5 631.9M1006.6 558.4L1003 568.5L999.6 578.3L996.3 587.8L993.2 597.1L990.1 606.2L987 615.1L984 623.8L981 632.2M1017.1 558.9L1013.5 568.9L1010.1 578.7L1006.8 588.1L1003.7 597.4L1000.6 606.5L997.5 615.4L994.5 624L991.5 632.4M1027.6 559.3L1024 569.3L1020.6 579L1017.3 588.4L1014.2 597.6L1011.1 606.7L1008 615.6L1005 624.2L1002 632.5M1038.1 559.8L1034.5 569.7L1031.1 579.4L1027.8 588.7L1024.7 597.9L1021.5 606.9L1018.5 615.7L1015.5 624.3L1012.5 632.7M1048.6 560.2L1044.9 570.1L1041.6 579.7L1038.3 589L1035.2 598.1L1032 607.1L1029 615.9L1026 624.4L1023 632.8M1059.1 560.6L1055.4 570.4L1052 580L1048.8 589.2L1045.7 598.3L1042.5 607.2L1039.5 616L1036.5 624.5L1033.5 632.8M1069.6 561L1065.9 570.7L1062.5 580.2L1059.3 589.4L1056.2 598.4L1053 607.4L1050 616.1L1047 624.6L1044 632.9M1080.1 561.3L1076.4 571L1073 580.5L1069.8 589.6L1066.7 598.6L1063.5 607.5L1060.5 616.2L1057.5 624.7L1054.5 632.9M1090.6 561.6L1086.9 571.3L1083.5 580.7L1080.3 589.8L1077.2 598.7L1074 607.5L1071 616.2L1068 624.7L1065 632.9M1101.1 562L1097.4 571.6L1094 580.9L1090.8 589.9L1087.7 598.8L1084.5 607.6L1081.5 616.2L1078.5 624.7L1075.5 632.9M1111.5 562.3L1107.9 571.8L1104.5 581L1101.3 590L1098.2 598.8L1095 607.6L1092 616.2L1089 624.6L1086 632.8M1122 562.5L1118.4 572L1115 581.2L1111.8 590.1L1108.7 598.9L1105.5 607.6L1102.5 616.2L1099.5 624.5L1096.5 632.7M1132.5 562.8L1128.9 572.2L1125.5 581.3L1122.3 590.1L1119.2 598.9L1116 607.5L1113 616.1L1110 624.4L1107 632.6M1143 563L1139.4 572.3L1136 581.4L1132.8 590.1L1129.7 598.8L1126.5 607.5L1123.5 616L1120.5 624.3L1117.5 632.4M1153.5 563.2L1149.9 572.5L1146.5 581.4L1143.3 590.1L1140.2 598.8L1137 607.4L1134 615.8L1131 624.1L1128 632.2M1164 563.4L1160.4 572.6L1157 581.4L1153.8 590.1L1150.7 598.7L1147.5 607.2L1144.5 615.6L1141.5 623.9L1138.5 632M1174.5 563.5L1170.9 572.6L1167.5 581.4L1164.3 590L1161.2 598.6L1158 607.1L1155 615.4L1152 623.6L1149 631.7M1185 563.7L1181.4 572.7L1178 581.4L1174.8 589.9L1171.7 598.4L1168.5 606.8L1165.5 615.2L1162.4 623.4L1159.5 631.4M1195.5 563.7L1191.9 572.7L1188.5 581.3L1185.3 589.8L1182.2 598.2L1179 606.6L1176 614.9L1172.9 623.1L1170 631M1206 563.8L1202.4 572.6L1199 581.2L1195.8 589.6L1192.7 598L1189.5 606.3L1186.5 614.6L1183.4 622.7L1180.5 630.6M1216.5 563.8L1212.9 572.6L1209.5 581.1L1206.3 589.4L1203.2 597.7L1200 606L1196.9 614.2L1193.9 622.3L1191 630.2M1227 563.8L1223.4 572.5L1220 580.9L1216.8 589.2L1213.7 597.4L1210.5 605.7L1207.4 613.8L1204.4 621.9L1201.5 629.8M1237.5 563.8L1233.9 572.3L1230.5 580.7L1227.3 588.9L1224.2 597.1L1221 605.3L1217.9 613.4L1214.9 621.4L1212 629.3M1248 563.7L1244.4 572.2L1241 580.4L1237.8 588.6L1234.6 596.7L1231.5 604.8L1228.4 612.9L1225.4 620.9L1222.5 628.7M1258.5 563.5L1254.9 571.9L1251.5 580.1L1248.3 588.2L1245.1 596.2L1242 604.3L1238.9 612.4L1235.9 620.3L1232.9 628.1M1269 563.3L1265.4 571.6L1262 579.8L1258.8 587.7L1255.6 595.7L1252.5 603.8L1249.4 611.8L1246.4 619.7L1243.4 627.5M1279.5 563L1275.9 571.3L1272.5 579.3L1269.3 587.3L1266.1 595.2L1263 603.2L1259.9 611.2L1256.8 619.1L1253.9 626.8M1290 562.7L1286.4 570.9L1283 578.9L1279.8 586.7L1276.6 594.6L1273.4 602.6L1270.3 610.5L1267.3 618.4L1264.4 626.1M1300.5 562.3L1296.9 570.4L1293.5 578.3L1290.2 586.1L1287.1 594L1283.9 601.9L1280.8 609.8L1277.8 617.6L1274.8 625.3M1311 561.8L1307.4 569.8L1304 577.7L1300.7 585.4L1297.5 593.2L1294.4 601.1L1291.3 609L1288.3 616.8L1285.3 624.5M1321.5 561.1L1317.8 569.2L1314.4 577L1311.2 584.7L1308 592.4L1304.9 600.3L1301.8 608.2L1298.7 615.9L1295.8 623.6M1331.9 560.3L1328.3 568.4L1324.9 576.2L1321.7 583.9L1318.5 591.6L1315.3 599.4L1312.2 607.2L1309.2 615L1306.2 622.6M1342.4 559.3L1338.8 567.4L1335.4 575.2L1332.1 582.9L1328.9 590.6L1325.8 598.4L1322.7 606.2L1319.6 614L1316.7 621.6M1352.8 558L1349.2 566.3L1345.8 574.2L1342.6 581.9L1339.4 589.6L1336.2 597.4L1333.1 605.2L1330.1 612.9L1327.1 620.5M1363.1 556L1359.6 564.9L1356.2 572.9L1353 580.7L1349.8 588.4L1346.7 596.2L1343.5 604L1340.5 611.7L1337.6 619.3M1372.9 552.4L1370 563.1L1366.6 571.4L1363.4 579.3L1360.2 587.1L1357.1 594.9L1354 602.7L1350.9 610.5L1348 618.1M1380.1 560.5L1377 569.6L1373.8 577.7L1370.6 585.6L1367.5 593.5L1364.4 601.4L1361.4 609.1L1358.4 616.8M1387.2 567.3L1384.1 575.9L1381 584L1377.9 592L1374.8 599.9L1371.7 607.6L1368.8 615.3M1397.2 564.1L1394.4 573.7L1391.3 582.1L1388.2 590.2L1385.1 598.2L1382.1 606.1L1379.2 613.8M1404.5 570.8L1401.6 579.9L1398.5 588.3L1395.5 596.4L1392.5 604.3L1389.5 612.1M1414.2 566.8L1411.7 577.2L1408.8 586L1405.8 594.4L1402.8 602.4L1399.9 610.3M1421.7 573.7L1419 583.4L1416 592.1L1413.1 600.4L1410.2 608.3M1430.9 568.8L1429 580.2L1426.2 589.5L1423.3 598L1420.5 606.2M1438.6 576.1L1436.3 586.5L1433.5 595.4L1430.7 603.8M1447.1 570L1446.1 582.7L1443.6 592.4L1440.9 601.2M1455.3 577.8L1453.5 588.9L1450.9 598.2M1463 584.5L1460.9 594.8M1471.7 578.7L1470.5 590.7"/>
<path fill="none" stroke="url(#mg)" stroke-width="3.5" d="M493.4 491.5L486 501.8M508.5 478.2L502.8 488.6L499.1 497.7L495.4 506.3M524.4 462.9L520.4 472.3L516.6 482L512.8 491.7L509.1 500.7L505.5 509.4M544 444.1L539.2 453.8L534.9 463.7L530.8 473.8L526.9 483.8L523.1 493.8L519.4 503.1L515.7 511.9M554.5 443.5L549.7 454L545.4 464.5L541.2 475L537.3 485.4L533.4 495.7L529.7 505.1L526 514M565 443.5L560.2 454.5L555.8 465.4L551.7 476.2L547.7 486.8L543.8 497.3L540 507L536.3 516M575.5 443.6L570.7 455L566.3 466.2L562.1 477.3L558.1 488.2L554.2 498.8L550.4 508.6L546.6 517.9M586 443.9L581.2 455.6L576.8 467L572.6 478.4L568.5 489.4L564.6 500.3L560.7 510.2L557 519.6M596.5 444.2L591.7 456.2L587.2 467.9L583 479.4L579 490.6L575 501.6L571.1 511.7L567.4 521.2M607 444.7L602.2 456.8L597.7 468.7L593.5 480.4L589.4 491.8L585.4 502.9L581.5 513.1L577.7 522.7M617.5 445.1L612.6 457.5L608.2 469.6L603.9 481.4L599.8 492.9L595.9 504.2L592 514.5L588.1 524.2M627.9 445.7L623.1 458.2L618.6 470.4L614.4 482.4L610.3 494L606.3 505.4L602.4 515.8L598.5 525.6M638.4 446.2L633.6 458.9L629.1 471.3L624.8 483.3L620.7 495.1L616.7 506.5L612.8 517.1L609 526.9M648.9 446.8L644.1 459.7L639.6 472.1L635.3 484.3L631.2 496.1L627.2 507.7L623.2 518.3L619.4 528.2M659.4 447.4L654.5 460.4L650 473L645.7 485.2L641.6 497.2L637.6 508.8L633.7 519.4L629.8 529.5M669.9 448.1L665 461.2L660.5 473.8L656.2 486.2L652.1 498.2L648.1 509.8L644.1 520.6L640.2 530.7M680.4 448.8L675.5 461.9L671 474.7L666.7 487.1L662.5 499.2L658.5 510.9L654.5 521.7L650.7 531.9M690.8 449.5L686 462.7L681.4 475.5L677.1 488L673 500.1L669 511.9L665 522.8L661.1 533M701.3 450.2L696.4 463.5L691.9 476.4L687.6 488.9L683.4 501.1L679.4 512.9L675.4 523.9L671.5 534.1M711.8 450.9L706.9 464.3L702.4 477.2L698 489.8L693.9 502L689.9 513.9L685.9 524.9L682 535.2M722.3 451.6L717.4 465.1L712.8 478.1L708.5 490.7L704.3 503L700.3 514.9L696.3 525.9L692.4 536.3M732.7 452.4L727.8 465.9L723.3 479L719 491.6L714.8 503.9L710.8 515.8L706.8 526.9L702.9 537.3M743.2 453.2L738.3 466.8L733.8 479.8L729.4 492.5L725.3 504.8L721.2 516.7L717.2 527.8L713.3 538.3M753.7 454L748.8 467.6L744.2 480.7L739.9 493.3L735.7 505.7L731.7 517.6L727.7 528.8L723.8 539.3M764.1 454.8L759.2 468.4L754.7 481.5L750.4 494.2L746.2 506.6L742.2 518.5L738.2 529.7L734.2 540.2M774.6 455.6L769.7 469.3L765.2 482.4L760.8 495.1L756.7 507.4L752.6 519.4L748.6 530.6L744.7 541.2M785.1 456.5L780.2 470.1L775.6 483.2L771.3 495.9L767.1 508.3L763.1 520.3L759.1 531.5L755.2 542.1M795.5 457.3L790.6 471L786.1 484.1L781.8 496.8L777.6 509.1L773.5 521.2L769.5 532.4L765.6 543M806 458.2L801.1 471.8L796.5 484.9L792.2 497.6L788 510L784 522L780 533.2L776.1 543.8M816.5 459.1L811.6 472.7L807 485.8L802.7 498.5L798.5 510.8L794.5 522.8L790.5 534.1L786.6 544.7M826.9 459.9L822 473.6L817.5 486.6L813.2 499.3L809 511.7L804.9 523.6L800.9 534.9L797 545.5M837.4 460.8L832.5 474.4L827.9 487.5L823.6 500.1L819.5 512.5L815.4 524.4L811.4 535.7L807.5 546.3M847.9 461.8L842.9 475.3L838.4 488.3L834.1 501L829.9 513.3L825.9 525.2L821.9 536.5L818 547.1M858.3 462.7L853.4 476.2L848.9 489.2L844.6 501.8L840.4 514.1L836.4 526L832.4 537.2L828.4 547.9M868.8 463.6L863.9 477.1L859.3 490.1L855 502.6L850.9 514.9L846.8 526.8L842.8 538L838.9 548.6M879.2 464.6L874.3 478L869.8 490.9L865.5 503.4L861.3 515.7L857.3 527.5L853.3 538.7L849.4 549.4M889.7 465.5L884.8 478.9L880.3 491.8L876 504.3L871.8 516.4L867.8 528.3L863.8 539.5L859.9 550.1M900.1 466.5L895.3 479.8L890.7 492.6L886.4 505.1L882.3 517.2L878.3 529L874.2 540.2L870.3 550.8M910.6 467.5L905.7 480.7L901.2 493.5L896.9 505.9L892.7 518L888.7 529.7L884.7 540.9L880.8 551.5M921 468.5L916.2 481.7L911.7 494.3L907.4 506.7L903.2 518.7L899.2 530.5L895.2 541.6L891.3 552.2M931.5 469.5L926.6 482.6L922.1 495.2L917.8 507.5L913.7 519.5L909.7 531.2L905.7 542.2L901.8 552.8M941.9 470.5L937.1 483.5L932.6 496L928.3 508.3L924.2 520.2L920.2 531.8L916.2 542.9L912.3 553.4M952.4 471.5L947.6 484.4L943.1 496.9L938.8 509L934.6 520.9L930.6 532.5L926.6 543.5L922.7 554.1M962.8 472.5L958 485.4L953.5 497.8L949.2 509.8L945.1 521.6L941.1 533.2L937.1 544.2L933.2 554.7M973.3 473.6L968.5 486.3L964 498.6L959.7 510.6L955.6 522.4L951.6 533.8L947.6 544.8L943.7 555.2M983.7 474.7L978.9 487.3L974.5 499.5L970.2 511.4L966.1 523.1L962.1 534.5L958.1 545.4L954.2 555.8M994.2 475.7L989.4 488.2L984.9 500.3L980.7 512.2L976.5 523.8L972.6 535.1L968.6 546L964.7 556.4M1004.6 476.8L999.8 489.2L995.4 501.2L991.1 512.9L987 524.4L983 535.7L979.1 546.5L975.2 556.9M1015.1 477.9L1010.3 490.2L1005.9 502L1001.6 513.7L997.5 525.1L993.5 536.4L989.5 547.1L985.6 557.4M1025.5 479L1020.7 491.1L1016.3 502.9L1012.1 514.4L1008 525.8L1004 537L1000 547.6L996.1 557.9M1036 480.1L1031.2 492.1L1026.8 503.8L1022.6 515.2L1018.5 526.5L1014.5 537.5L1010.5 548.2L1006.6 558.4M1046.4 481.3L1041.7 493.1L1037.2 504.6L1033 515.9L1028.9 527.1L1025 538.1L1021 548.7L1017.1 558.9M1056.8 482.4L1052.1 494.1L1047.7 505.5L1043.5 516.7L1039.4 527.8L1035.5 538.7L1031.5 549.2L1027.6 559.3M1067.3 483.6L1062.6 495.1L1058.2 506.3L1054 517.4L1049.9 528.4L1045.9 539.2L1042 549.7L1038.1 559.8M1077.7 484.8L1073 496.1L1068.6 507.2L1064.4 518.2L1060.4 529L1056.4 539.8L1052.5 550.1L1048.6 560.2M1088.1 486L1083.5 497.1L1079.1 508L1074.9 518.9L1070.9 529.6L1066.9 540.3L1063 550.6L1059.1 560.6M1098.6 487.2L1093.9 498.1L1089.6 508.9L1085.4 519.6L1081.3 530.3L1077.4 540.8L1073.4 551L1069.6 561M1109 488.4L1104.4 499.2L1100 509.8L1095.9 520.3L1091.8 530.9L1087.9 541.3L1083.9 551.4L1080.1 561.3M1119.4 489.7L1114.8 500.2L1110.5 510.6L1106.3 521L1102.3 531.4L1098.4 541.8L1094.4 551.8L1090.6 561.6M1129.8 491L1125.3 501.3L1121 511.5L1116.8 521.7L1112.8 532L1108.9 542.2L1104.9 552.2L1101.1 562M1140.2 492.3L1135.7 502.3L1131.4 512.3L1127.3 522.4L1123.3 532.6L1119.4 542.7L1115.4 552.6L1111.5 562.3M1150.7 493.6L1146.2 503.4L1141.9 513.2L1137.8 523.1L1133.8 533.1L1129.8 543.1L1125.9 552.9L1122 562.5M1161.1 495L1156.6 504.5L1152.4 514.1L1148.3 523.8L1144.3 533.7L1140.3 543.5L1136.4 553.3L1132.5 562.8M1171.5 496.3L1167 505.5L1162.8 514.9L1158.7 524.5L1154.7 534.2L1150.8 543.9L1146.9 553.6L1143 563M1181.9 497.8L1177.5 506.7L1173.3 515.8L1169.2 525.2L1165.2 534.7L1161.3 544.3L1157.4 553.8L1153.5 563.2M1192.3 499.2L1187.9 507.8L1183.8 516.6L1179.7 525.8L1175.7 535.2L1171.8 544.7L1167.9 554.1L1164 563.4M1202.7 500.8L1198.4 508.9L1194.2 517.5L1190.2 526.5L1186.2 535.7L1182.3 545L1178.4 554.3L1174.5 563.5M1213 502.4L1208.8 510.1L1204.7 518.4L1200.7 527.1L1196.7 536.1L1192.8 545.3L1188.9 554.5L1185 563.7M1223.4 504L1219.2 511.3L1215.1 519.2L1211.1 527.7L1207.2 536.6L1203.3 545.6L1199.4 554.7L1195.5 563.7M1233.8 505.8L1229.7 512.5L1225.6 520.1L1221.6 528.4L1217.7 537L1213.8 545.9L1209.9 554.9L1206 563.8M1244.1 507.8L1240.1 513.8L1236.1 521L1232.1 529L1228.2 537.4L1224.3 546.1L1220.4 555L1216.5 563.8M1254.3 510.3L1250.5 515.1L1246.5 521.8L1242.6 529.5L1238.7 537.8L1234.8 546.3L1230.9 555.1L1227 563.8M1260.9 516.5L1257 522.7L1253.1 530.1L1249.2 538.1L1245.3 546.5L1241.4 555.1L1237.5 563.8M1271.3 518.2L1267.5 523.6L1263.6 530.6L1259.7 538.4L1255.8 546.6L1251.9 555.1L1248 563.7M1277.9 524.4L1274 531.1L1270.1 538.6L1266.3 546.7L1262.4 555L1258.5 563.5M1288.4 525.3L1284.5 531.5L1280.6 538.8L1276.8 546.7L1272.9 554.9L1269 563.3M1295 531.8L1291.1 538.9L1287.3 546.6L1283.4 554.8L1279.5 563M1305.5 531.8L1301.6 538.9L1297.8 546.5L1293.9 554.5L1290 562.7M1312.1 538.6L1308.3 546.2L1304.4 554.1L1300.5 562.3M1322.6 537.8L1318.8 545.7L1314.9 553.7L1311 561.8M1329.2 544.9L1325.3 553L1321.5 561.1M1339.6 543.2L1335.8 552.1L1331.9 560.3M1346.2 550.8L1342.4 559.3M1356.3 548.1L1352.8 558"/>
<path fill="none" stroke="url(#mg)" stroke-width="2.5" d="M611.2 295.4L603.8 314.9L597.2 334.6M619.1 288.5L611 307.3L603.1 326L596.1 342.9L589.7 359L583.8 374.5M627.8 282.6L619.4 301L611.1 319.2L603.7 335.7L596.8 351.3L589.8 366.1M636.9 277.5L628.5 295.8L620.1 313.8L612.7 330.2L605.7 345.8L598.7 360.6M646.5 273.1L638 291.3L629.6 309.3L622.2 325.8L615.3 341.5L608.4 356.6M656.2 269.2L647.7 287.4L639.4 305.5L632.1 322.2L625.2 338.1L618.4 353.5M666.2 265.8L657.7 284.1L649.3 302.2L642.1 319.1L635.3 335.4L628.6 351M676.2 262.8L667.8 281.2L659.5 299.4L652.3 316.6L645.6 333L638.9 349M686.4 260.2L678 278.6L669.7 297L662.5 314.4L655.9 331.1L649.3 347.3M696.6 257.9L688.2 276.4L680 294.9L672.9 312.5L666.3 329.4L659.7 345.9M706.9 255.9L698.5 274.5L690.3 293.2L683.3 310.9L676.7 328.1L670.1 344.7M717.3 254.1L708.9 272.8L700.7 291.7L693.7 309.6L687.1 326.9L680.6 343.8M727.7 252.7L719.3 271.5L711.1 290.4L704.1 308.5L697.6 326L691.1 343M738.1 251.5L729.8 270.3L721.6 289.4L714.6 307.6L708 325.2L701.6 342.4M748.6 250.6L740.2 269.5L732.1 288.6L725.1 306.9L718.5 324.7L712.1 342M759.1 249.9L750.7 268.8L742.5 288L735.5 306.4L729 324.3L722.5 341.7M769.6 249.5L761.2 268.4L753 287.6L746 306.1L739.5 324L733 341.6M780 249.3L771.7 268.2L763.5 287.4L756.5 305.9L750 323.9L743.5 341.6M790.5 249.4L782.2 268.2L774 287.5L767 305.9L760.5 324L754 341.7M801 249.7L792.7 268.4L784.5 287.7L777.5 306.1L771 324.2L764.5 341.9M811.5 250.2L803.2 268.9L795 288L788 306.5L781.5 324.5L775 342.3M822 251L813.7 269.6L805.5 288.6L798.5 307L792 325L785.5 342.8M832.4 252L824.1 270.4L816 289.4L809 307.6L802.5 325.6L796 343.3M842.9 253.3L834.6 271.5L826.4 290.3L819.5 308.5L812.9 326.3L806.5 344M853.3 254.8L845 272.8L836.9 291.5L829.9 309.4L823.4 327.2L817 344.8M863.6 256.6L855.4 274.4L847.3 292.8L840.4 310.6L833.9 328.2L827.4 345.7M873.9 258.5L865.7 276.1L857.7 294.3L850.8 311.9L844.3 329.3L837.9 346.7M884.2 260.8L876 278L868.1 295.9L861.2 313.3L854.7 330.5L848.3 347.8M894.4 263.2L886.3 280.2L878.4 297.8L871.6 314.9L865.1 331.9L858.7 349M904.6 265.9L896.6 282.5L888.7 299.8L881.9 316.6L875.5 333.4L869.2 350.3M914.6 268.8L906.7 285L899 302L892.2 318.5L885.9 335L879.6 351.7M924.7 271.9L916.9 287.8L909.2 304.4L902.5 320.5L896.3 336.7L890 353.2M934.6 275.2L927 290.7L919.4 306.9L912.8 322.7L906.6 338.6L900.3 354.8M944.5 278.7L937 293.9L929.5 309.6L923.1 325L916.9 340.6L910.7 356.5M954.3 282.5L946.9 297.2L939.6 312.5L933.3 327.5L927.2 342.7L921 358.3M964.1 286.4L956.8 300.7L949.7 315.6L943.4 330.1L937.5 344.9L931.4 360.2M973.7 290.6L966.7 304.4L959.6 318.8L953.6 332.9L947.7 347.3L941.7 362.3M983.2 295L976.4 308.3L969.6 322.2L963.6 335.8L957.9 349.8L952 364.4M992.7 299.6L986.1 312.4L979.5 325.8L973.7 338.9L968.1 352.4L962.2 366.6M1002 304.5L995.7 316.7L989.3 329.6L983.7 342.1L978.2 355.1L972.5 368.9M1011.2 309.6L1005.2 321.2L999 333.5L993.6 345.4L988.3 358L982.7 371.4M1020.2 314.9L1014.5 325.9L1008.7 337.6L1003.5 349L998.4 361L992.9 373.9M1029 320.6L1023.8 330.9L1018.2 341.9L1013.3 352.7L1008.4 364.1L1003 376.6M1037.6 326.7L1032.9 336.1L1027.7 346.5L1023.1 356.5L1018.3 367.4L1013.1 379.4M1045.8 333.2L1041.8 341.7L1037.1 351.2L1032.8 360.6L1028.3 370.9L1023.2 382.3M1053.6 340.3L1050.4 347.6L1046.3 356.2L1042.4 364.8L1038.1 374.4L1033.3 385.3M1060.6 348.1L1058.8 354L1055.3 361.6L1051.9 369.3L1047.9 378.2L1043.3 388.4M1066.7 360.9L1064.1 367.3L1061.3 374L1057.7 382.1L1053.3 391.7M1073.8 368.6L1072.7 373.4L1070.5 379.1L1067.3 386.3L1063.2 395.2M1080.7 380.1L1079.5 384.4L1076.9 390.7L1073 398.8M1088 387.7L1088.3 390.2L1086.3 395.4L1082.8 402.6M1096.6 396.7L1095.5 400.4L1092.5 406.7M1104.1 404L1104.5 405.8L1102.1 411M1113 411.9L1111.5 415.6M1120.8 418.9L1120.7 420.7"/>
<path fill="none" stroke="url(#mg)" stroke-width="3.0" d="M589.8 366.1L582.7 380.1L575.6 392.9L568.8 404.4L562 415L555.5 425L549.4 434.6L544 444.1M598.7 360.6L591.6 374.6L584.7 387.6L578.1 399.6L571.7 411.1L565.5 422.2L559.8 433L554.5 443.5M608.4 356.6L601.5 370.9L594.6 384.3L588.2 397L582 409.1L576 420.8L570.2 432.3L565 443.5M618.4 353.5L611.6 368.2L604.9 382L598.5 395.1L592.4 407.8L586.4 420L580.7 432L575.5 443.6M628.6 351L621.9 366L615.2 380.3L609 393.8L602.9 406.9L596.9 419.5L591.2 431.9L586 443.9M638.9 349L632.2 364.3L625.6 378.9L619.4 392.8L613.4 406.2L607.4 419.3L601.7 431.9L596.5 444.2M649.3 347.3L642.6 362.9L636.1 377.8L629.9 392L623.9 405.8L617.9 419.1L612.2 432.1L607 444.7M659.7 345.9L653.1 361.8L646.5 376.9L640.4 391.5L634.3 405.5L628.4 419.1L622.7 432.4L617.5 445.1M670.1 344.7L663.5 360.9L657 376.3L650.9 391.1L644.8 405.3L638.9 419.2L633.2 432.7L627.9 445.7M680.6 343.8L674 360.1L667.5 375.8L661.4 390.8L655.3 405.3L649.4 419.4L643.7 433L638.4 446.2M691.1 343L684.5 359.6L678 375.4L671.9 390.6L665.8 405.4L659.9 419.6L654.2 433.5L648.9 446.8M701.6 342.4L695 359.2L688.5 375.2L682.4 390.6L676.3 405.5L670.4 420L664.7 434L659.4 447.4M712.1 342L705.5 358.9L699 375.1L692.9 390.7L686.8 405.7L680.9 420.3L675.2 434.5L669.9 448.1M722.5 341.7L716 358.8L709.5 375.1L703.4 390.8L697.3 406L691.4 420.8L685.7 435L680.4 448.8M733 341.6L726.5 358.7L720 375.2L713.9 391L707.8 406.4L701.9 421.2L696.2 435.6L690.8 449.5M743.5 341.6L737 358.8L730.5 375.4L724.3 391.3L718.3 406.8L712.4 421.8L706.6 436.2L701.3 450.2M754 341.7L747.5 359L741 375.7L734.8 391.7L728.8 407.2L722.8 422.3L717.1 436.9L711.8 450.9M764.5 341.9L758 359.3L751.5 376.1L745.3 392.1L739.3 407.7L733.3 422.9L727.6 437.6L722.3 451.6M775 342.3L768.5 359.7L762 376.5L755.8 392.7L749.8 408.3L743.8 423.6L738.1 438.3L732.7 452.4M785.5 342.8L779 360.2L772.5 377L766.3 393.2L760.3 408.9L754.3 424.2L748.6 439L743.2 453.2M796 343.3L789.4 360.7L782.9 377.6L776.8 393.8L770.7 409.6L764.8 424.9L759 439.8L753.7 454M806.5 344L799.9 361.4L793.4 378.3L787.3 394.5L781.2 410.3L775.2 425.7L769.5 440.5L764.1 454.8M817 344.8L810.4 362.2L803.9 379L797.7 395.3L791.7 411L785.7 426.5L780 441.3L774.6 455.6M827.4 345.7L820.9 363L814.4 379.8L808.2 396L802.2 411.8L796.2 427.3L790.4 442.2L785.1 456.5M837.9 346.7L831.3 363.9L824.8 380.7L818.7 396.9L812.6 412.7L806.6 428.1L800.9 443L795.5 457.3M848.3 347.8L841.8 364.9L835.3 381.6L829.1 397.8L823.1 413.5L817.1 429L811.4 443.9L806 458.2M858.7 349L852.2 366L845.7 382.6L839.6 398.7L833.6 414.5L827.6 429.8L821.8 444.8L816.5 459.1M869.2 350.3L862.6 367.2L856.2 383.7L850 399.7L844 415.4L838 430.8L832.3 445.7L826.9 459.9M879.6 351.7L873.1 368.4L866.6 384.9L860.5 400.8L854.5 416.4L848.5 431.7L842.7 446.6L837.4 460.8M890 353.2L883.5 369.8L877.1 386.1L870.9 401.9L864.9 417.4L858.9 432.7L853.2 447.5L847.9 461.8M900.3 354.8L893.9 371.2L887.5 387.3L881.4 403L875.4 418.5L869.4 433.7L863.7 448.5L858.3 462.7M910.7 356.5L904.3 372.7L897.9 388.7L891.8 404.2L885.8 419.6L879.8 434.7L874.1 449.5L868.8 463.6M921 358.3L914.7 374.2L908.3 390L902.2 405.5L896.2 420.7L890.3 435.8L884.6 450.5L879.2 464.6M931.4 360.2L925 375.9L918.7 391.5L912.6 406.8L906.7 421.9L900.7 436.9L895 451.5L889.7 465.5M941.7 362.3L935.4 377.7L929.1 393L923.1 408.1L917.1 423.1L911.2 438L905.5 452.5L900.1 466.5M952 364.4L945.7 379.5L939.5 394.6L933.5 409.5L927.5 424.4L921.6 439.1L915.9 453.6L910.6 467.5M962.2 366.6L956.1 381.4L949.8 396.3L943.9 411L938 425.7L932 440.3L926.4 454.6L921 468.5M972.5 368.9L966.4 383.4L960.2 398L954.3 412.5L948.4 427L942.5 441.5L936.8 455.7L931.5 469.5M982.7 371.4L976.7 385.5L970.5 399.8L964.6 414.1L958.8 428.4L952.9 442.7L947.2 456.8L941.9 470.5M992.9 373.9L986.9 387.6L980.9 401.7L975 415.7L969.2 429.8L963.3 444L957.7 458L952.4 471.5M1003 376.6L997.2 389.9L991.2 403.6L985.4 417.3L979.6 431.2L973.7 445.3L968.1 459.1L962.8 472.5M1013.1 379.4L1007.4 392.3L1001.5 405.6L995.7 419.1L990 432.7L984.2 446.6L978.6 460.3L973.3 473.6M1023.2 382.3L1017.6 394.7L1011.8 407.7L1006.1 420.8L1000.4 434.3L994.6 447.9L989 461.5L983.7 474.7M1033.3 385.3L1027.8 397.3L1022.1 409.9L1016.4 422.7L1010.7 435.8L1005 449.3L999.4 462.7L994.2 475.7M1043.3 388.4L1038 399.9L1032.3 412.1L1026.8 424.6L1021.1 437.5L1015.4 450.7L1009.8 463.9L1004.6 476.8M1053.3 391.7L1048.1 402.7L1042.6 414.4L1037.1 426.5L1031.5 439.1L1025.8 452.1L1020.3 465.2L1015.1 477.9M1063.2 395.2L1058.2 405.6L1052.8 416.8L1047.4 428.6L1041.8 440.9L1036.2 453.6L1030.7 466.4L1025.5 479M1073 398.8L1068.2 408.6L1063 419.4L1057.7 430.7L1052.2 442.6L1046.6 455.1L1041.1 467.7L1036 480.1M1082.8 402.6L1078.3 411.7L1073.1 422L1067.9 432.8L1062.5 444.4L1057 456.7L1051.5 469.1L1046.4 481.3M1092.5 406.7L1088.2 415L1083.3 424.7L1078.2 435.1L1072.9 446.3L1067.3 458.2L1061.9 470.4L1056.8 482.4M1102.1 411L1098.1 418.5L1093.4 427.5L1088.4 437.4L1083.2 448.3L1077.7 459.9L1072.4 471.8L1067.3 483.6M1111.5 415.6L1108 422.2L1103.5 430.5L1098.6 439.8L1093.5 450.3L1088.1 461.5L1082.8 473.2L1077.7 484.8M1120.7 420.7L1117.7 426.1L1113.5 433.6L1108.8 442.4L1103.8 452.3L1098.4 463.2L1093.2 474.6L1088.1 486M1129.5 426.4L1127.3 430.3L1123.5 436.9L1119 445L1114.1 454.5L1108.8 465L1103.6 476.1L1098.6 487.2M1137.6 433L1136.7 435L1133.3 440.5L1129.1 447.8L1124.3 456.7L1119.1 466.8L1114 477.6L1109 488.4M1145.8 440.2L1143.1 444.3L1139.2 450.7L1134.6 459L1129.5 468.7L1124.3 479.1L1119.4 489.7M1154.2 446.5L1152.8 448.5L1149.2 453.9L1144.8 461.4L1139.8 470.6L1134.7 480.7L1129.8 491M1162.1 453.2L1159.2 457.2L1155 464L1150.1 472.6L1145.1 482.3L1140.2 492.3M1170.9 459L1169 460.9L1165.1 466.7L1160.4 474.7L1155.5 483.9L1150.7 493.6M1178.6 465.2L1175.2 469.7L1170.7 477L1165.8 485.6L1161.1 495M1187.7 470.4L1185.2 472.9L1180.9 479.3L1176.2 487.4L1171.5 496.3M1195 476.6L1191.1 481.8L1186.5 489.3L1181.9 497.8M1204.4 481.2L1201.2 484.6L1196.8 491.2L1192.3 499.2M1211.2 487.7L1207.1 493.3L1202.7 500.8M1221 491.6L1217.4 495.6L1213 502.4M1227.5 498.2L1223.4 504M1237.5 501.4L1233.8 505.8"/>
</g>
<path d="M1116 698L1118.8 697.4L1121.4 696.9L1123.9 696.4L1126.4 695.9L1129.1 695.3L1132.2 694.7L1135.8 693.9L1140 693L1144.9 692L1150.4 690.9L1156.4 689.7L1162.8 688.4L1169.4 687L1176.2 685.5L1183.1 683.8L1190 682L1197.1 680L1204.5 677.9L1212.2 675.6L1220 673.2L1227.8 670.7L1235.5 668.1L1242.9 665.6L1250 663L1256.5 660.5L1262.5 658.1L1268.2 655.7L1273.8 653.2L1279.5 650.6L1285.6 647.8L1292.4 644.6L1300 641L1308.7 636.9L1318.2 632.3L1328.4 627.4L1338.9 622.2L1349.6 616.9L1360.2 611.7L1370.4 606.7L1380 602L1389 597.6L1397.7 593.3L1406.1 589.2L1414.3 585.1L1422.4 581.1L1430.6 577.1L1438.7 573.1L1447 569L1452.2 565.4L1457.4 561.8L1462.6 558.1L1467.8 554.5L1473 550.9L1478.1 547.2L1483.1 543.6L1488 540L1492.7 536.4L1497.4 532.9L1501.9 529.3L1506.3 525.8L1510.7 522.2L1515.1 518.6L1519.5 514.9L1524 511L1528.6 507L1533.3 502.7L1538 498.4L1542.8 494L1547.4 489.6L1551.8 485.3L1556.1 481L1560 477L1563.6 473.1L1566.9 469.4L1570.1 465.8L1573 462.2L1575.8 458.7L1578.6 455.1L1581.3 451.6L1584 448L1586.8 444.2L1589.7 440.3L1592.5 436.2L1595.2 432.2L1597.8 428.4L1600.2 424.8L1602.3 421.7L1604 419L1605.3 416.9L1606.1 415.3L1606.7 414.2L1607 413.2L1607.2 412.5L1607.4 411.8L1607.6 411L1608 410L1609.8 408.8L1611.6 407.5L1613.3 406.3L1615.1 405.1L1616.9 403.8L1618.8 402.6L1620.8 401.3L1623 400L1625.4 398.6L1628 397.2L1630.6 395.7L1633.4 394.2L1636.3 392.8L1639.2 391.4L1642.1 390.1L1645 389L1647.9 388L1650.9 387.2L1653.9 386.4L1656.9 385.8L1659.9 385.1L1663 384.5L1666 383.8L1669 383L1671.9 382.2L1674.7 381.3L1677.5 380.4L1680.2 379.6L1683.1 378.7L1686.2 377.8L1689.4 376.9L1693 376L1696.8 375.1L1700.9 374.2L1705.1 373.4L1709.5 372.5L1714.1 371.6L1718.9 370.8L1723.8 369.9L1729 369L1734.6 368.1L1740.7 367.2L1747.2 366.2L1753.8 365.2L1760.2 364.3L1766.4 363.5L1772.1 362.7L1777 362L1781 361.4L1784.1 360.8L1786.7 360.2L1789 359.8L1791.3 359.4L1793.9 359.1L1797 359L1801 359L1805.8 359.2L1811.2 359.7L1817.1 360.2L1823.3 360.9L1829.7 361.7L1836.2 362.5L1842.7 363.3L1849 364L1855.2 364.7L1861.5 365.4L1867.9 366.2L1874.3 366.9L1880.7 367.7L1887.2 368.5L1893.6 369.2L1900 370L1900 815L1895 814.2L1890.6 813.4L1886.5 812.6L1882.2 811.8L1877.4 811L1871.9 810.1L1865.2 809.1L1857 808L1846.7 806.7L1834.3 805.2L1820.6 803.6L1806.1 801.9L1791.7 800.3L1777.9 798.7L1765.4 797.2L1755 796L1746.7 795.1L1740 794.5L1734.4 794.1L1729.6 793.7L1725.1 793.2L1720.6 792.6L1715.7 791.5L1710 790L1703.6 787.9L1696.8 785.2L1689.9 782.1L1682.8 778.9L1675.7 775.6L1668.6 772.4L1661.7 769.5L1655 767L1648.7 765L1642.7 763.2L1637 761.6L1631.2 760.2L1625.4 758.9L1619.1 757.6L1612.4 756.3L1605 755L1596.8 753.6L1588 752.2L1578.7 750.8L1569.1 749.5L1559.2 748.2L1549.3 747L1539.5 745.9L1530 745L1520.5 744.2L1510.9 743.5L1501.2 742.8L1491.5 742.3L1482 741.9L1472.6 741.5L1463.6 741.2L1455 741L1446.9 741.1L1439.1 741.5L1431.7 742.1L1424.5 742.8L1417.4 743.2L1410.4 743.4L1403.3 743L1396 742L1388.8 740.1L1381.9 737.5L1375.1 734.4L1368.2 730.9L1361.2 727.4L1353.7 723.9L1345.7 720.7L1337 718L1327.7 715.7L1318.2 713.5L1308.2 711.5L1297.8 709.7L1286.9 708L1275.3 706.5L1263 705.2L1250 704L1236 703.1L1220.9 702.5L1205 702.1L1188.6 701.8L1171.8 701.6L1155 701.5L1138.3 701.3L1122 701L1116 698Z" fill="#ff0000"/>
<g clip-path="url(#crt)">
<path fill="none" stroke="#0a28d8" stroke-width="2.5" d="M1597.6 428.6L1600.1 426.4L1603 424.1L1606.3 421.9L1609.9 419.7L1613.9 417.5L1618.2 415.3L1622.8 413.1L1627.7 411L1632.8 408.8L1638.2 406.8L1643.8 404.7L1649.5 402.7L1655.5 400.8L1661.6 398.9L1667.8 397L1674.2 395.2L1680.6 393.5L1687.2 391.9L1693.9 390.3L1700.6 388.8L1707.4 387.3L1714.3 386L1721.2 384.7L1728.2 383.5L1735.2 382.5L1742.2 381.4L1749.3 380.5L1756.4 379.7L1763.6 379L1770.8 378.3L1778 377.8L1785.2 377.4L1792.5 377L1799.8 376.8L1807.1 376.6L1814.4 376.6L1821.8 376.7L1829.2 376.8L1836.5 377.1L1843.9 377.4L1851.3 377.8L1858.7 378.4L1866 379L1873.3 379.7L1880.6 380.5L1887.9 381.4L1895.1 382.4L1902.2 383.5L1909.3 384.7L1916.3 385.9L1923.1 387.2L1929.9 388.6L1936.5 390.1L1942.9 391.6L1949.2 393.2L1955.3 394.9L1961.2 396.6L1966.8 398.4L1972.3 400.2L1977.4 402.1L1982.3 404L1986.9 405.9L1991.2 407.9L1995.1 410L1998.7 412L2002 414.1L2004.8 416.2L2007.3 418.3L2009.3 420.5M1585.7 445.9L1588.2 443.8L1591.2 441.6L1594.7 439.4L1598.4 437.3L1602.6 435.1L1607.1 433L1611.9 430.9L1617 428.8L1622.4 426.7L1628.1 424.7L1634 422.7L1640 420.7L1646.3 418.8L1652.8 416.9L1659.4 415.1L1666.1 413.4L1673 411.7L1680 410.1L1687 408.5L1694.2 407L1701.5 405.6L1708.8 404.3L1716.2 403L1723.6 401.9L1731.1 400.8L1738.7 399.8L1746.3 398.8L1753.9 398L1761.6 397.3L1769.3 396.6L1777 396.1L1784.8 395.6L1792.6 395.3L1800.4 395L1808.3 394.8L1816.1 394.7L1824 394.7L1831.9 394.9L1839.8 395.1L1847.7 395.4L1855.6 395.7L1863.5 396.2L1871.4 396.8L1879.2 397.5L1887 398.2L1894.7 399.1L1902.4 400L1910 401L1917.5 402.1L1924.9 403.2L1932.2 404.5L1939.4 405.8L1946.4 407.1L1953.2 408.6L1959.9 410.1L1966.3 411.7L1972.6 413.3L1978.6 415L1984.3 416.7L1989.7 418.5L1994.9 420.4L1999.7 422.2L2004.2 424.1L2008.3 426.1L2012.1 428.1L2015.4 430.1L2018.4 432.1L2020.9 434.1L2023 436.2M1572.2 461.8L1574.9 459.7L1577.9 457.6L1581.5 455.5L1585.4 453.4L1589.7 451.4L1594.4 449.3L1599.5 447.3L1604.8 445.2L1610.5 443.2L1616.4 441.3L1622.6 439.3L1629 437.5L1635.7 435.6L1642.5 433.8L1649.5 432L1656.7 430.3L1664 428.7L1671.4 427.1L1679 425.6L1686.6 424.2L1694.4 422.8L1702.2 421.5L1710.1 420.2L1718.1 419.1L1726.1 418L1734.2 417L1742.4 416.1L1750.6 415.3L1758.8 414.6L1767.1 413.9L1775.4 413.3L1783.8 412.9L1792.2 412.5L1800.6 412.2L1809 412L1817.5 411.9L1826 411.9L1834.4 412L1842.9 412.1L1851.4 412.4L1859.9 412.7L1868.3 413.2L1876.8 413.7L1885.2 414.3L1893.5 415L1901.8 415.8L1910 416.6L1918.1 417.6L1926.1 418.6L1934 419.6L1941.8 420.8L1949.4 422L1956.8 423.3L1964.1 424.7L1971.1 426.1L1978 427.6L1984.5 429.1L1990.9 430.7L1996.9 432.4L2002.6 434.1L2008 435.8L2013.1 437.6L2017.8 439.4L2022.1 441.3L2026 443.1L2029.5 445.1L2032.6 447L2035.2 448.9L2037.4 450.9M1558.5 477L1561.2 475L1564.3 473L1567.9 471L1572 469L1576.5 467L1581.4 465L1586.6 463.1L1592.2 461.1L1598.2 459.2L1604.4 457.3L1610.9 455.4L1617.7 453.6L1624.7 451.8L1631.9 450L1639.3 448.3L1646.9 446.7L1654.7 445.1L1662.6 443.5L1670.6 442L1678.8 440.6L1687 439.3L1695.4 438L1703.9 436.8L1712.4 435.6L1721 434.6L1729.7 433.6L1738.5 432.7L1747.3 431.8L1756.1 431.1L1765 430.4L1774 429.8L1783 429.4L1792 428.9L1801 428.6L1810.1 428.4L1819.2 428.2L1828.3 428.2L1837.4 428.2L1846.5 428.3L1855.7 428.5L1864.7 428.8L1873.8 429.2L1882.8 429.6L1891.8 430.1L1900.7 430.8L1909.6 431.5L1918.3 432.2L1927 433.1L1935.5 434L1944 435L1952.2 436L1960.3 437.2L1968.2 438.4L1975.9 439.6L1983.3 441L1990.6 442.3L1997.5 443.8L2004.2 445.3L2010.5 446.8L2016.5 448.4L2022.2 450L2027.5 451.7L2032.4 453.4L2036.9 455.1L2041 456.9L2044.6 458.7L2047.8 460.5L2050.5 462.4L2052.7 464.2M1544.5 491.6L1547.2 489.7L1550.4 487.8L1554.1 485.9L1558.3 484L1562.9 482.1L1568 480.2L1573.4 478.3L1579.3 476.4L1585.5 474.5L1592 472.7L1598.8 470.9L1605.9 469.1L1613.3 467.4L1620.9 465.7L1628.8 464L1636.8 462.4L1645 460.8L1653.4 459.3L1661.9 457.8L1670.6 456.4L1679.5 455.1L1688.4 453.8L1697.4 452.6L1706.6 451.5L1715.8 450.4L1725.1 449.4L1734.5 448.5L1743.9 447.7L1753.4 446.9L1763 446.2L1772.6 445.6L1782.2 445.1L1791.9 444.7L1801.7 444.3L1811.4 444L1821.2 443.8L1830.9 443.7L1840.7 443.6L1850.5 443.7L1860.3 443.8L1870 444L1879.7 444.3L1889.4 444.7L1899 445.1L1908.5 445.7L1917.9 446.2L1927.3 446.9L1936.5 447.7L1945.6 448.5L1954.5 449.4L1963.3 450.3L1971.8 451.3L1980.2 452.4L1988.3 453.6L1996.2 454.8L2003.8 456L2011.2 457.4L2018.2 458.7L2024.8 460.1L2031.1 461.6L2037.1 463.1L2042.6 464.7L2047.7 466.3L2052.4 467.9L2056.6 469.5L2060.4 471.2L2063.6 472.9L2066.4 474.7L2068.6 476.4"/>
<path fill="none" stroke="#0a28d8" stroke-width="3.0" d="M1530.1 505.5L1532.8 503.7L1536 501.9L1539.8 500.1L1544.1 498.2L1548.9 496.4L1554.1 494.6L1559.8 492.8L1565.8 491L1572.3 489.2L1579.1 487.4L1586.2 485.7L1593.7 484L1601.4 482.3L1609.4 480.7L1617.7 479L1626.2 477.5L1634.9 476L1643.7 474.5L1652.8 473.1L1662 471.7L1671.4 470.4L1680.9 469.1L1690.5 467.9L1700.3 466.8L1710.1 465.8L1720.1 464.8L1730.1 463.8L1740.2 463L1750.4 462.2L1760.7 461.5L1771 460.9L1781.3 460.3L1791.7 459.8L1802.1 459.4L1812.6 459.1L1823 458.8L1833.5 458.7L1844 458.6L1854.4 458.5L1864.9 458.6L1875.3 458.7L1885.7 458.9L1896 459.2L1906.2 459.6L1916.4 460L1926.4 460.5L1936.3 461.1L1946.1 461.7L1955.8 462.5L1965.3 463.2L1974.5 464.1L1983.6 465L1992.4 466L2001 467L2009.3 468.1L2017.3 469.2L2025 470.4L2032.4 471.7L2039.3 473L2045.9 474.3L2052.1 475.7L2057.9 477.1L2063.2 478.6L2068 480.1L2072.4 481.6L2076.3 483.2L2079.6 484.8L2082.3 486.4L2084.6 488.1M1515.3 518.5L1518 516.8L1521.3 515.1L1525.1 513.4L1529.5 511.7L1534.3 509.9L1539.7 508.2L1545.5 506.5L1551.8 504.8L1558.5 503.1L1565.6 501.4L1573 499.7L1580.8 498.1L1588.9 496.5L1597.3 494.9L1606 493.4L1614.9 491.9L1624.1 490.4L1633.5 489L1643.1 487.6L1652.9 486.3L1662.8 485L1672.9 483.8L1683.2 482.6L1693.5 481.5L1704 480.4L1714.6 479.4L1725.4 478.5L1736.2 477.7L1747 476.9L1758 476.2L1769 475.5L1780.1 474.9L1791.2 474.4L1802.3 474L1813.5 473.6L1824.7 473.3L1835.9 473.1L1847.1 472.9L1858.3 472.9L1869.4 472.9L1880.5 472.9L1891.6 473.1L1902.6 473.3L1913.5 473.5L1924.3 473.9L1934.9 474.3L1945.5 474.8L1955.9 475.3L1966.1 476L1976.1 476.6L1985.9 477.4L1995.5 478.2L2004.8 479L2013.8 480L2022.5 480.9L2030.9 482L2039 483L2046.7 484.2L2054 485.4L2060.8 486.6L2067.3 487.8L2073.3 489.2L2078.8 490.5L2083.7 491.9L2088.2 493.3L2092.2 494.8L2095.5 496.2L2098.3 497.7L2100.5 499.3M1500.2 530.8L1502.9 529.2L1506.2 527.6L1510 526L1514.5 524.4L1519.4 522.8L1524.9 521.2L1530.9 519.6L1537.4 517.9L1544.3 516.3L1551.7 514.7L1559.4 513.2L1567.5 511.6L1576 510.1L1584.8 508.6L1593.9 507.1L1603.3 505.6L1612.9 504.2L1622.8 502.9L1632.9 501.5L1643.3 500.2L1653.8 499L1664.5 497.8L1675.4 496.7L1686.4 495.6L1697.6 494.6L1708.9 493.6L1720.3 492.7L1731.8 491.8L1743.4 491L1755.1 490.3L1766.8 489.6L1778.6 489L1790.5 488.5L1802.4 488L1814.3 487.6L1826.3 487.3L1838.2 487L1850.2 486.8L1862.1 486.7L1873.9 486.6L1885.8 486.6L1897.5 486.7L1909.2 486.8L1920.8 487L1932.2 487.3L1943.6 487.6L1954.7 488L1965.7 488.5L1976.5 489L1987.1 489.6L1997.4 490.2L2007.5 490.9L2017.3 491.7L2026.7 492.5L2035.9 493.4L2044.7 494.3L2053.1 495.2L2061.1 496.3L2068.7 497.3L2075.8 498.4L2082.5 499.6L2088.7 500.8L2094.4 502L2099.5 503.3L2104.1 504.6L2108.1 505.9L2111.5 507.2L2114.3 508.6L2116.5 510M1485.1 542.5L1487.6 541.1L1490.9 539.6L1494.8 538.1L1499.2 536.6L1504.3 535.1L1509.9 533.6L1516 532.1L1522.7 530.5L1529.8 529L1537.4 527.5L1545.4 526L1553.9 524.6L1562.7 523.1L1571.9 521.7L1581.4 520.3L1591.2 518.9L1601.4 517.6L1611.8 516.2L1622.4 515L1633.3 513.7L1644.5 512.5L1655.8 511.4L1667.3 510.3L1679 509.2L1690.8 508.2L1702.8 507.3L1714.9 506.4L1727.2 505.5L1739.5 504.7L1752 504L1764.5 503.3L1777.1 502.7L1789.7 502.1L1802.4 501.7L1815.1 501.2L1827.8 500.8L1840.5 500.5L1853.2 500.3L1865.9 500.1L1878.5 500L1891.1 499.9L1903.5 499.9L1915.9 500L1928.2 500.1L1940.3 500.3L1952.3 500.5L1964.1 500.9L1975.7 501.2L1987.1 501.6L1998.2 502.1L2009.1 502.7L2019.6 503.3L2029.9 503.9L2039.8 504.6L2049.4 505.4L2058.6 506.2L2067.3 507L2075.7 507.9L2083.5 508.9L2090.9 509.9L2097.8 510.9L2104.2 512L2110 513.1L2115.3 514.2L2119.9 515.4L2124 516.6L2127.4 517.9L2130.2 519.1L2132.4 520.4M1469.8 553.7L1472.3 552.3L1475.5 551L1479.3 549.6L1483.8 548.2L1489 546.8L1494.7 545.4L1500.9 544L1507.7 542.6L1515.1 541.2L1522.9 539.8L1531.2 538.4L1539.9 537L1549.1 535.6L1558.7 534.3L1568.6 533L1578.9 531.7L1589.5 530.4L1600.4 529.1L1611.6 527.9L1623.1 526.7L1634.8 525.6L1646.8 524.5L1658.9 523.4L1671.3 522.4L1683.8 521.4L1696.5 520.5L1709.4 519.6L1722.4 518.7L1735.5 518L1748.7 517.2L1762 516.5L1775.4 515.9L1788.8 515.3L1802.3 514.8L1815.8 514.3L1829.3 513.9L1842.8 513.6L1856.3 513.3L1869.7 513.1L1883.1 512.9L1896.4 512.8L1909.6 512.7L1922.7 512.7L1935.7 512.7L1948.5 512.9L1961.1 513L1973.6 513.2L1985.8 513.5L1997.8 513.9L2009.4 514.2L2020.8 514.7L2031.9 515.2L2042.7 515.7L2053 516.3L2063 517L2072.6 517.6L2081.7 518.4L2090.3 519.2L2098.5 520L2106.1 520.9L2113.2 521.8L2119.8 522.7L2125.7 523.7L2131.1 524.8L2135.8 525.8L2140 526.9L2143.4 528L2146.2 529.2L2148.2 530.4M1454.4 564.2L1456.8 563L1459.9 561.8L1463.8 560.5L1468.3 559.2L1473.4 558L1479.2 556.7L1485.6 555.4L1492.5 554.1L1500 552.8L1508.1 551.5L1516.7 550.2L1525.7 548.9L1535.2 547.6L1545.1 546.3L1555.5 545.1L1566.2 543.9L1577.3 542.7L1588.7 541.5L1600.5 540.3L1612.5 539.2L1624.9 538.1L1637.5 537L1650.3 536L1663.3 535L1676.6 534.1L1690 533.2L1703.6 532.3L1717.4 531.5L1731.3 530.7L1745.3 529.9L1759.4 529.3L1773.5 528.6L1787.8 528L1802.1 527.5L1816.4 527L1830.7 526.6L1845 526.2L1859.3 525.8L1873.5 525.5L1887.7 525.3L1901.8 525.1L1915.8 525L1929.6 524.9L1943.3 524.9L1956.8 525L1970.1 525L1983.2 525.2L1996 525.4L2008.6 525.6L2020.8 525.9L2032.8 526.2L2044.4 526.6L2055.6 527.1L2066.4 527.6L2076.8 528.1L2086.7 528.7L2096.2 529.3L2105.1 530L2113.5 530.7L2121.4 531.4L2128.7 532.2L2135.4 533.1L2141.5 533.9L2147 534.9L2151.8 535.8L2155.9 536.8L2159.3 537.8L2162.1 538.8L2164.1 539.9M1438.8 573.9L1441.1 572.9L1444.1 571.7L1447.9 570.6L1452.4 569.5L1457.5 568.3L1463.4 567.1L1469.9 565.9L1476.9 564.8L1484.6 563.6L1492.9 562.4L1501.7 561.2L1511.1 560L1520.9 558.8L1531.2 557.6L1541.9 556.5L1553.1 555.3L1564.7 554.2L1576.6 553.1L1588.9 552L1601.6 551L1614.5 549.9L1627.8 548.9L1641.3 547.9L1655 547L1669 546.1L1683.2 545.2L1697.6 544.3L1712.1 543.5L1726.8 542.8L1741.6 542L1756.5 541.4L1771.5 540.7L1786.6 540.1L1801.7 539.6L1816.9 539L1832.1 538.6L1847.2 538.2L1862.3 537.8L1877.4 537.5L1892.3 537.2L1907.2 537L1921.9 536.8L1936.5 536.6L1951 536.6L1965.2 536.5L1979.2 536.5L1992.9 536.6L2006.4 536.7L2019.5 536.9L2032.4 537.1L2044.8 537.3L2056.9 537.6L2068.6 537.9L2079.9 538.3L2090.7 538.8L2101 539.2L2110.7 539.8L2120 540.3L2128.7 540.9L2136.8 541.6L2144.3 542.3L2151.1 543L2157.3 543.7L2162.9 544.5L2167.7 545.3L2171.9 546.2L2175.3 547.1L2177.9 548L2179.8 548.9M1422.8 582.4L1424.9 581.4L1427.9 580.5L1431.6 579.5L1436 578.5L1441.2 577.4L1447 576.4L1453.6 575.3L1460.8 574.2L1468.7 573.2L1477.1 572.1L1486.2 571L1495.8 569.9L1506 568.9L1516.6 567.8L1527.8 566.7L1539.4 565.7L1551.5 564.7L1564 563.6L1576.8 562.6L1590.1 561.7L1603.7 560.7L1617.6 559.7L1631.8 558.8L1646.2 557.9L1661 557.1L1675.9 556.2L1691.1 555.4L1706.4 554.7L1721.9 553.9L1737.6 553.2L1753.4 552.6L1769.2 551.9L1785.2 551.3L1801.2 550.8L1817.2 550.3L1833.2 549.8L1849.2 549.4L1865.2 549L1881.1 548.6L1896.8 548.3L1912.5 548.1L1928.1 547.8L1943.4 547.7L1958.6 547.5L1973.5 547.4L1988.2 547.4L2002.6 547.4L2016.8 547.4L2030.5 547.5L2043.9 547.6L2057 547.8L2069.6 548L2081.7 548.3L2093.4 548.6L2104.6 548.9L2115.3 549.3L2125.4 549.7L2135 550.2L2143.9 550.7L2152.2 551.2L2159.9 551.8L2166.9 552.4L2173.2 553L2178.8 553.7L2183.7 554.4L2187.8 555.2L2191.2 555.9L2193.7 556.7L2195.5 557.6M1406.6 589.9L1408.6 589L1411.4 588.2L1415 587.3L1419.3 586.5L1424.5 585.5L1430.4 584.6L1437 583.7L1444.3 582.8L1452.3 581.8L1461 580.9L1470.3 579.9L1480.2 579L1490.7 578L1501.7 577L1513.3 576.1L1525.3 575.1L1537.9 574.2L1550.9 573.3L1564.3 572.4L1578.2 571.5L1592.4 570.6L1607 569.7L1621.9 568.9L1637.1 568.1L1652.6 567.3L1668.3 566.5L1684.3 565.7L1700.5 565L1716.8 564.3L1733.3 563.7L1750 563L1766.7 562.4L1783.6 561.8L1800.4 561.3L1817.3 560.8L1834.3 560.3L1851.1 559.9L1868 559.5L1884.7 559.1L1901.4 558.8L1917.9 558.5L1934.2 558.3L1950.4 558L1966.3 557.9L1982 557.7L1997.4 557.6L2012.5 557.6L2027.2 557.6L2041.6 557.6L2055.6 557.6L2069.2 557.7L2082.3 557.9L2095 558.1L2107.1 558.3L2118.7 558.5L2129.8 558.8L2140.2 559.2L2150 559.5L2159.2 559.9L2167.7 560.4L2175.6 560.8L2182.7 561.3L2189.1 561.9L2194.8 562.5L2199.6 563.1L2203.7 563.7L2207 564.3L2209.5 565L2211.2 565.7"/>
<path fill="none" stroke="#0a28d8" stroke-width="3.5" d="M1390.5 597L1392.3 596.4L1395 595.6L1398.5 594.9L1402.8 594.2L1407.9 593.4L1413.8 592.6L1420.4 591.8L1427.9 591L1436 590.2L1444.8 589.3L1454.3 588.5L1464.5 587.7L1475.3 586.8L1486.7 586L1498.6 585.1L1511.2 584.3L1524.2 583.5L1537.7 582.6L1551.7 581.8L1566.2 581L1581 580.2L1596.3 579.4L1611.9 578.6L1627.9 577.9L1644.1 577.1L1660.7 576.4L1677.5 575.7L1694.5 575L1711.7 574.4L1729.1 573.7L1746.6 573.1L1764.2 572.5L1782 572L1799.8 571.5L1817.6 571L1835.4 570.5L1853.1 570L1870.9 569.6L1888.5 569.3L1906 568.9L1923.3 568.6L1940.5 568.3L1957.4 568.1L1974.1 567.8L1990.6 567.7L2006.7 567.5L2022.5 567.4L2037.9 567.3L2052.9 567.3L2067.5 567.3L2081.6 567.3L2095.3 567.4L2108.4 567.5L2120.9 567.6L2132.9 567.8L2144.3 568L2155.1 568.2L2165.2 568.5L2174.6 568.8L2183.3 569.1L2191.3 569.5L2198.6 569.9L2205 570.3L2210.7 570.8L2215.6 571.2L2219.7 571.8L2222.9 572.3L2225.3 572.9L2226.8 573.5M1374.9 604.5L1376.5 604L1379 603.4L1382.3 602.8L1386.5 602.2L1391.6 601.5L1397.5 600.9L1404.2 600.2L1411.6 599.5L1419.9 598.8L1428.9 598.1L1438.6 597.4L1449 596.6L1460.1 595.9L1471.8 595.1L1484.2 594.4L1497.1 593.7L1510.6 592.9L1524.7 592.2L1539.2 591.4L1554.3 590.7L1569.8 590L1585.7 589.2L1602.1 588.5L1618.8 587.8L1635.8 587.1L1653.1 586.4L1670.7 585.8L1688.6 585.1L1706.7 584.5L1724.9 583.9L1743.4 583.3L1761.9 582.7L1780.5 582.1L1799.2 581.6L1817.9 581.1L1836.7 580.6L1855.3 580.2L1873.9 579.7L1892.4 579.3L1910.8 578.9L1929 578.6L1947 578.2L1964.7 577.9L1982.2 577.7L1999.4 577.4L2016.2 577.2L2032.7 577L2048.7 576.9L2064.4 576.7L2079.5 576.7L2094.2 576.6L2108.3 576.6L2121.9 576.6L2134.9 576.6L2147.3 576.7L2159 576.8L2170.1 576.9L2180.4 577.1L2190.1 577.3L2199 577.5L2207.1 577.8L2214.4 578L2221 578.4L2226.7 578.7L2231.5 579.1L2235.5 579.5L2238.7 579.9L2240.9 580.4L2242.3 580.8M1359.7 612.3L1361.1 611.8L1363.4 611.4L1366.5 610.9L1370.6 610.4L1375.6 609.9L1381.5 609.4L1388.2 608.8L1395.7 608.2L1404 607.6L1413.1 607L1423 606.4L1433.7 605.8L1445.1 605.1L1457.1 604.5L1469.8 603.8L1483.2 603.2L1497.2 602.5L1511.7 601.9L1526.9 601.2L1542.5 600.5L1558.6 599.8L1575.3 599.2L1592.3 598.5L1609.7 597.8L1627.5 597.2L1645.7 596.5L1664.1 595.9L1682.8 595.3L1701.8 594.6L1720.9 594L1740.2 593.4L1759.7 592.9L1779.2 592.3L1798.8 591.7L1818.5 591.2L1838.1 590.7L1857.7 590.2L1877.2 589.7L1896.5 589.3L1915.8 588.8L1934.8 588.4L1953.6 588L1972.2 587.7L1990.4 587.3L2008.3 587L2025.9 586.7L2043 586.5L2059.7 586.2L2076 586L2091.7 585.9L2106.9 585.7L2121.5 585.6L2135.6 585.5L2149 585.4L2161.7 585.4L2173.8 585.4L2185.1 585.4L2195.7 585.4L2205.6 585.5L2214.6 585.6L2222.9 585.8L2230.3 585.9L2236.8 586.1L2242.5 586.4L2247.4 586.6L2251.3 586.9L2254.3 587.2L2256.4 587.5L2257.6 587.9M1344.8 619.9L1345.9 619.6L1348 619.3L1351 619L1354.9 618.6L1359.8 618.2L1365.6 617.8L1372.3 617.3L1379.8 616.9L1388.2 616.4L1397.5 615.9L1407.6 615.4L1418.4 614.9L1430 614.3L1442.4 613.8L1455.5 613.2L1469.3 612.6L1483.7 612L1498.8 611.4L1514.5 610.8L1530.7 610.2L1547.5 609.6L1564.8 609L1582.5 608.4L1600.7 607.8L1619.3 607.1L1638.2 606.5L1657.5 605.9L1677.1 605.3L1696.9 604.7L1716.9 604.1L1737.1 603.5L1757.5 602.9L1778 602.3L1798.5 601.7L1819 601.2L1839.6 600.6L1860.1 600.1L1880.5 599.6L1900.7 599.1L1920.8 598.6L1940.7 598.1L1960.3 597.6L1979.7 597.2L1998.7 596.8L2017.4 596.4L2035.6 596L2053.5 595.7L2070.8 595.4L2087.7 595.1L2104 594.8L2119.7 594.6L2134.8 594.3L2149.3 594.1L2163.1 594L2176.2 593.8L2188.6 593.7L2200.2 593.6L2211 593.5L2221 593.5L2230.2 593.5L2238.6 593.5L2246.1 593.6L2252.6 593.7L2258.3 593.8L2263.1 593.9L2266.9 594L2269.8 594.2L2271.8 594.4L2272.8 594.7M1330 627.3L1330.8 627.1L1332.7 626.9L1335.5 626.7L1339.3 626.5L1344 626.2L1349.8 625.9L1356.4 625.6L1364 625.3L1372.4 624.9L1381.8 624.5L1392 624.1L1403.1 623.7L1415 623.2L1427.7 622.8L1441.1 622.3L1455.3 621.8L1470.2 621.3L1485.7 620.8L1502 620.2L1518.8 619.7L1536.2 619.1L1554.1 618.6L1572.6 618L1591.5 617.4L1610.9 616.8L1630.7 616.2L1650.8 615.6L1671.2 615L1691.9 614.4L1712.8 613.8L1734 613.2L1755.3 612.6L1776.7 612L1798.1 611.4L1819.6 610.8L1841.1 610.3L1862.5 609.7L1883.8 609.1L1904.9 608.6L1925.9 608L1946.6 607.5L1967.1 607L1987.3 606.5L2007.1 606L2026.5 605.6L2045.5 605.1L2064 604.7L2081.9 604.3L2099.4 603.9L2116.3 603.5L2132.5 603.2L2148.1 602.9L2163 602.6L2177.2 602.3L2190.7 602L2203.3 601.8L2215.2 601.6L2226.3 601.4L2236.5 601.3L2245.8 601.1L2254.2 601.1L2261.8 601L2268.4 600.9L2274 600.9L2278.7 600.9L2282.4 601L2285.2 601.1L2286.9 601.1L2287.7 601.3M1315.3 634.3L1315.9 634.2L1317.5 634.2L1320.1 634.1L1323.7 633.9L1328.3 633.8L1333.9 633.6L1340.5 633.4L1348.1 633.2L1356.6 633L1366 632.7L1376.4 632.4L1387.7 632.1L1399.8 631.7L1412.8 631.4L1426.6 631L1441.1 630.6L1456.5 630.1L1472.5 629.7L1489.3 629.2L1506.7 628.7L1524.8 628.3L1543.4 627.7L1562.6 627.2L1582.2 626.7L1602.4 626.1L1623 625.6L1643.9 625L1665.2 624.4L1686.8 623.8L1708.7 623.2L1730.7 622.6L1752.9 622L1775.3 621.4L1797.7 620.8L1820.1 620.2L1842.5 619.6L1864.8 619L1887.1 618.4L1909.1 617.8L1931 617.3L1952.6 616.7L1973.9 616.1L1994.8 615.6L2015.4 615L2035.6 614.5L2055.3 614L2074.4 613.4L2093.1 613L2111.1 612.5L2128.6 612L2145.3 611.6L2161.4 611.2L2176.7 610.8L2191.3 610.4L2205.1 610L2218.1 609.7L2230.2 609.4L2241.5 609.1L2251.8 608.8L2261.3 608.6L2269.8 608.4L2277.3 608.2L2283.9 608.1L2289.5 607.9L2294.1 607.8L2297.8 607.7L2300.3 607.7L2301.9 607.7L2302.5 607.7M1300.7 640.7L1301.2 640.8L1302.8 640.9L1305.4 640.9L1309.1 640.9L1313.8 640.9L1319.5 640.8L1326.3 640.7L1334 640.6L1342.8 640.5L1352.5 640.3L1363.1 640.1L1374.7 639.9L1387.1 639.7L1400.5 639.4L1414.7 639.1L1429.7 638.8L1445.5 638.5L1462 638.1L1479.3 637.7L1497.2 637.3L1515.8 636.9L1535 636.4L1554.8 636L1575.1 635.5L1595.8 635L1617.1 634.5L1638.7 633.9L1660.6 633.4L1682.9 632.8L1705.5 632.3L1728.2 631.7L1751.1 631.1L1774.2 630.5L1797.3 629.9L1820.4 629.3L1843.5 628.7L1866.6 628L1889.5 627.4L1912.2 626.8L1934.8 626.2L1957 625.6L1979 625L2000.6 624.4L2021.8 623.8L2042.6 623.2L2062.9 622.6L2082.7 622L2101.9 621.5L2120.5 620.9L2138.4 620.4L2155.7 619.8L2172.2 619.3L2188 618.8L2203 618.4L2217.2 617.9L2230.6 617.5L2243 617.1L2254.6 616.7L2265.2 616.3L2274.9 616L2283.7 615.6L2291.4 615.3L2298.2 615.1L2303.9 614.8L2308.6 614.6L2312.3 614.4L2314.9 614.2L2316.5 614.1L2317 613.9M1286.2 646.7L1286.7 646.9L1288.3 647.1L1291 647.3L1294.8 647.4L1299.6 647.5L1305.5 647.6L1312.5 647.6L1320.4 647.6L1329.4 647.6L1339.4 647.5L1350.3 647.4L1362.2 647.3L1375.1 647.2L1388.8 647L1403.4 646.8L1418.8 646.6L1435 646.4L1452 646.1L1469.8 645.8L1488.3 645.5L1507.4 645.1L1527.1 644.7L1547.4 644.3L1568.3 643.9L1589.7 643.5L1611.5 643L1633.7 642.5L1656.3 642L1679.2 641.5L1702.4 640.9L1725.8 640.4L1749.4 639.8L1773.1 639.2L1796.8 638.6L1820.6 638L1844.4 637.4L1868.1 636.8L1891.6 636.2L1915 635.5L1938.2 634.9L1961.1 634.2L1983.7 633.6L2006 632.9L2027.8 632.3L2049.1 631.7L2070 631L2090.3 630.4L2110.1 629.8L2129.2 629.1L2147.7 628.5L2165.4 627.9L2182.4 627.3L2198.7 626.8L2214.1 626.2L2228.7 625.6L2242.4 625.1L2255.2 624.6L2267.1 624.1L2278.1 623.6L2288 623.2L2297 622.7L2305 622.3L2311.9 621.9L2317.8 621.5L2322.7 621.2L2326.4 620.9L2329.1 620.6L2330.8 620.3L2331.3 620.1M1271.8 652.5L1272.4 652.8L1274 653.1L1276.8 653.4L1280.7 653.6L1285.7 653.8L1291.7 654L1298.8 654.2L1307 654.3L1316.3 654.4L1326.5 654.5L1337.7 654.5L1350 654.5L1363.1 654.5L1377.2 654.4L1392.2 654.3L1408.1 654.2L1424.7 654L1442.2 653.8L1460.4 653.6L1479.4 653.4L1499 653.1L1519.3 652.8L1540.2 652.5L1561.6 652.1L1583.6 651.7L1606 651.3L1628.8 650.9L1652 650.4L1675.6 649.9L1699.4 649.4L1723.4 648.9L1747.6 648.4L1772 647.8L1796.4 647.2L1820.8 646.6L1845.2 646L1869.5 645.4L1893.8 644.7L1917.8 644.1L1941.6 643.4L1965.1 642.7L1988.3 642.1L2011.2 641.4L2033.6 640.7L2055.5 640L2077 639.3L2097.8 638.6L2118.1 637.9L2137.8 637.2L2156.7 636.5L2175 635.9L2192.4 635.2L2209.1 634.5L2225 633.9L2239.9 633.2L2254 632.6L2267.2 632L2279.4 631.4L2290.7 630.8L2300.9 630.2L2310.1 629.7L2318.3 629.2L2325.4 628.7L2331.5 628.2L2336.5 627.7L2340.3 627.3L2343.1 626.9L2344.8 626.5L2345.3 626.1M1257.7 658L1258.2 658.4L1260 658.9L1262.8 659.3L1266.8 659.6L1271.9 660L1278.1 660.3L1285.4 660.5L1293.8 660.8L1303.3 661L1313.8 661.2L1325.3 661.3L1337.8 661.4L1351.4 661.5L1365.8 661.5L1381.2 661.6L1397.5 661.5L1414.6 661.5L1432.5 661.4L1451.2 661.2L1470.7 661.1L1490.8 660.9L1511.6 660.7L1533 660.4L1555 660.1L1577.6 659.8L1600.6 659.4L1624 659L1647.8 658.6L1671.9 658.2L1696.4 657.7L1721 657.2L1745.9 656.7L1770.8 656.2L1795.9 655.6L1820.9 655L1846 654.4L1871 653.8L1895.8 653.1L1920.5 652.4L1944.9 651.8L1969 651.1L1992.8 650.4L2016.3 649.6L2039.3 648.9L2061.8 648.2L2083.8 647.4L2105.2 646.7L2126 645.9L2146.2 645.2L2165.6 644.4L2184.3 643.7L2202.3 642.9L2219.4 642.2L2235.6 641.4L2251 640.7L2265.5 640L2279 639.3L2291.5 638.6L2303 637.9L2313.6 637.2L2323 636.6L2331.4 635.9L2338.7 635.3L2344.9 634.7L2350 634.1L2354 633.6L2356.9 633L2358.6 632.5L2359.2 632"/>
<path fill="none" stroke="#0a28d8" stroke-width="4.0" d="M1243.7 663.3L1244.3 663.8L1246.1 664.4L1249 664.9L1253.1 665.4L1258.3 665.9L1264.7 666.3L1272.1 666.7L1280.8 667L1290.5 667.4L1301.2 667.7L1313 667.9L1325.9 668.1L1339.7 668.3L1354.6 668.5L1370.3 668.6L1387 668.7L1404.5 668.7L1422.9 668.7L1442.1 668.7L1462 668.6L1482.7 668.5L1504 668.3L1526 668.1L1548.5 667.9L1571.6 667.6L1595.2 667.4L1619.2 667L1643.6 666.7L1668.3 666.3L1693.4 665.8L1718.6 665.4L1744.1 664.9L1769.7 664.4L1795.4 663.8L1821.1 663.2L1846.7 662.6L1872.3 662L1897.8 661.4L1923.1 660.7L1948.1 660L1972.8 659.3L1997.2 658.5L2021.3 657.8L2044.8 657L2067.9 656.2L2090.5 655.5L2112.4 654.7L2133.7 653.9L2154.4 653L2174.3 652.2L2193.5 651.4L2211.9 650.6L2229.4 649.8L2246.1 648.9L2261.8 648.1L2276.7 647.3L2290.5 646.5L2303.4 645.7L2315.2 644.9L2326 644.1L2335.7 643.4L2344.3 642.6L2351.8 641.9L2358.1 641.2L2363.4 640.5L2367.4 639.8L2370.4 639.2L2372.1 638.5L2372.7 637.9M1230 668.3L1230.6 669L1232.4 669.7L1235.4 670.3L1239.5 671L1244.9 671.5L1251.4 672.1L1259.1 672.6L1267.9 673.1L1277.8 673.5L1288.9 673.9L1301 674.3L1314.1 674.6L1328.3 674.9L1343.5 675.2L1359.6 675.4L1376.7 675.6L1394.6 675.7L1413.5 675.8L1433.1 675.8L1453.5 675.9L1474.7 675.8L1496.5 675.8L1519 675.7L1542.1 675.5L1565.7 675.3L1589.8 675.1L1614.4 674.8L1639.4 674.5L1664.7 674.2L1690.4 673.8L1716.3 673.3L1742.3 672.9L1768.5 672.4L1794.8 671.9L1821.1 671.3L1847.4 670.7L1873.6 670.1L1899.7 669.4L1925.6 668.8L1951.2 668.1L1976.5 667.3L2001.5 666.6L2026.1 665.8L2050.3 665L2073.9 664.2L2097 663.4L2119.5 662.5L2141.3 661.7L2162.4 660.8L2182.9 659.9L2202.5 659L2221.3 658.1L2239.3 657.2L2256.3 656.3L2272.5 655.4L2287.6 654.5L2301.8 653.6L2315 652.7L2327.1 651.9L2338.1 651L2348.1 650.1L2356.9 649.3L2364.5 648.4L2371.1 647.6L2376.4 646.8L2380.6 646L2383.6 645.2L2385.4 644.5L2386 643.8M1216.4 673.2L1217 674L1218.9 674.8L1221.9 675.5L1226.2 676.3L1231.7 677L1238.4 677.6L1246.2 678.3L1255.2 678.9L1265.4 679.4L1276.7 679.9L1289 680.4L1302.5 680.9L1317 681.3L1332.5 681.6L1349 682L1366.5 682.3L1384.9 682.5L1404.1 682.7L1424.2 682.8L1445.1 682.9L1466.7 683L1489.1 683L1512.1 683L1535.7 682.9L1559.9 682.8L1584.5 682.6L1609.7 682.4L1635.3 682.2L1661.2 681.9L1687.4 681.5L1713.9 681.1L1740.5 680.7L1767.4 680.3L1794.2 679.8L1821.2 679.2L1848.1 678.6L1874.9 678L1901.5 677.4L1928 676.7L1954.2 676L1980.1 675.3L2005.7 674.5L2030.9 673.7L2055.6 672.9L2079.7 672L2103.3 671.2L2126.3 670.3L2148.7 669.4L2170.3 668.4L2191.2 667.5L2211.3 666.5L2230.5 665.6L2248.9 664.6L2266.4 663.6L2282.9 662.7L2298.4 661.7L2312.9 660.7L2326.4 659.7L2338.7 658.7L2350 657.7L2360.2 656.8L2369.2 655.8L2377.1 654.9L2383.7 653.9L2389.2 653L2393.5 652.1L2396.5 651.2L2398.4 650.4L2399 649.5M1203.1 677.8L1203.7 678.7L1205.6 679.6L1208.7 680.5L1213.1 681.3L1218.7 682.1L1225.5 682.9L1233.5 683.7L1242.7 684.4L1253.1 685.1L1264.6 685.7L1277.3 686.3L1291 686.9L1305.9 687.4L1321.7 687.9L1338.6 688.3L1356.5 688.7L1375.2 689L1394.9 689.3L1415.4 689.6L1436.8 689.8L1458.9 689.9L1481.7 690L1505.2 690.1L1529.4 690.1L1554.1 690L1579.3 689.9L1605 689.8L1631.1 689.6L1657.6 689.4L1684.4 689.1L1711.5 688.7L1738.8 688.4L1766.2 687.9L1793.6 687.5L1821.2 687L1848.6 686.4L1876 685.8L1903.3 685.2L1930.4 684.5L1957.2 683.8L1983.7 683L2009.8 682.3L2035.5 681.4L2060.7 680.6L2085.4 679.7L2109.6 678.8L2133.1 677.9L2155.9 676.9L2178 676L2199.4 675L2219.9 674L2239.6 672.9L2258.3 671.9L2276.2 670.9L2293.1 669.8L2308.9 668.7L2323.8 667.7L2337.5 666.6L2350.2 665.5L2361.7 664.5L2372.1 663.4L2381.3 662.3L2389.3 661.3L2396.1 660.2L2401.7 659.2L2406.1 658.2L2409.2 657.2L2411.1 656.2L2411.7 655.3M1189.9 682L1190.5 683.1L1192.4 684.1L1195.6 685.1L1200.1 686.1L1205.8 687L1212.8 687.9L1221 688.8L1230.4 689.6L1241 690.4L1252.8 691.2L1265.7 691.9L1279.7 692.6L1294.9 693.2L1311.1 693.8L1328.3 694.3L1346.5 694.8L1365.7 695.3L1385.8 695.7L1406.8 696L1428.6 696.3L1451.2 696.5L1474.5 696.7L1498.5 696.9L1523.1 697L1548.4 697L1574.1 697L1600.4 696.9L1627.1 696.8L1654.1 696.6L1681.5 696.4L1709.1 696.1L1737 695.8L1764.9 695.4L1793 694.9L1821.1 694.5L1849.2 693.9L1877.2 693.4L1905 692.7L1932.6 692.1L1960 691.4L1987.1 690.6L2013.7 689.8L2040 689L2065.8 688.1L2091 687.2L2115.6 686.3L2139.7 685.4L2163 684.4L2185.6 683.3L2207.3 682.3L2228.3 681.2L2248.4 680.2L2267.6 679.1L2285.8 677.9L2303 676.8L2319.2 675.7L2334.4 674.5L2348.4 673.4L2361.4 672.2L2373.1 671L2383.7 669.9L2393.2 668.7L2401.3 667.6L2408.3 666.4L2414 665.3L2418.5 664.2L2421.7 663.1L2423.6 662L2424.2 660.9M1176.8 685.8L1177.5 686.9L1179.4 688.1L1182.7 689.2L1187.2 690.3L1193.1 691.3L1200.2 692.3L1208.5 693.3L1218.1 694.3L1229 695.2L1241 696.1L1254.2 696.9L1268.5 697.7L1284 698.5L1300.5 699.2L1318.1 699.8L1336.7 700.4L1356.3 701L1376.8 701.5L1398.2 702L1420.4 702.4L1443.4 702.7L1467.2 703L1491.7 703.2L1516.9 703.4L1542.6 703.5L1568.9 703.6L1595.7 703.6L1623 703.5L1650.6 703.4L1678.5 703.3L1706.7 703L1735.1 702.8L1763.7 702.4L1792.3 702.1L1821 701.6L1849.6 701.1L1878.2 700.6L1906.6 700L1934.8 699.3L1962.7 698.6L1990.3 697.9L2017.6 697.1L2044.4 696.3L2070.7 695.4L2096.4 694.5L2121.6 693.6L2146.1 692.6L2169.9 691.6L2192.9 690.5L2215.2 689.4L2236.6 688.3L2257.1 687.2L2276.6 686L2295.2 684.8L2312.8 683.6L2329.4 682.4L2344.8 681.2L2359.1 680L2372.3 678.7L2384.4 677.5L2395.2 676.2L2404.8 675L2413.1 673.7L2420.2 672.5L2426.1 671.2L2430.6 670L2433.9 668.8L2435.8 667.6L2436.5 666.4M1163.9 688.8L1164.5 690.1L1166.5 691.4L1169.8 692.6L1174.5 693.8L1180.4 695L1187.7 696.1L1196.2 697.3L1206 698.3L1217 699.4L1229.3 700.4L1242.8 701.3L1257.4 702.3L1273.1 703.1L1290 704L1307.9 704.7L1326.9 705.5L1346.9 706.1L1367.8 706.8L1389.6 707.3L1412.3 707.8L1435.8 708.3L1460 708.7L1485 709L1510.7 709.3L1536.9 709.5L1563.8 709.7L1591.1 709.8L1618.9 709.8L1647 709.8L1675.5 709.7L1704.3 709.6L1733.2 709.3L1762.4 709.1L1791.6 708.8L1820.8 708.4L1850 707.9L1879.1 707.4L1908.1 706.9L1936.9 706.2L1965.4 705.6L1993.5 704.9L2021.3 704.1L2048.6 703.3L2075.4 702.4L2101.7 701.5L2127.4 700.5L2152.3 699.5L2176.6 698.5L2200.1 697.4L2222.8 696.3L2244.6 695.2L2265.5 694L2285.5 692.8L2304.5 691.6L2322.4 690.3L2339.2 689L2355 687.7L2369.6 686.4L2383.1 685.1L2395.3 683.8L2406.4 682.4L2416.2 681.1L2424.7 679.8L2431.9 678.4L2437.9 677.1L2442.5 675.8L2445.9 674.4L2447.9 673.1L2448.5 671.8M1151 691.3L1151.7 692.7L1153.8 694L1157.1 695.4L1161.9 696.7L1167.9 698L1175.3 699.3L1184 700.5L1194 701.7L1205.2 702.9L1217.7 704.1L1231.4 705.1L1246.3 706.2L1262.4 707.2L1279.6 708.2L1297.9 709.1L1317.2 709.9L1337.5 710.7L1358.9 711.5L1381.1 712.2L1404.2 712.8L1428.2 713.4L1452.9 713.9L1478.4 714.3L1504.5 714.7L1531.3 715L1558.6 715.3L1586.5 715.5L1614.8 715.6L1643.5 715.7L1672.5 715.7L1701.8 715.6L1731.3 715.5L1761 715.3L1790.8 715L1820.6 714.7L1850.3 714.3L1880 713.9L1909.6 713.4L1938.9 712.8L1967.9 712.2L1996.6 711.5L2024.9 710.8L2052.7 710L2080.1 709.1L2106.8 708.2L2133 707.2L2158.5 706.2L2183.2 705.2L2207.1 704.1L2230.3 703L2252.5 701.8L2273.8 700.6L2294.1 699.4L2313.5 698.1L2331.8 696.8L2348.9 695.5L2365 694.1L2379.9 692.7L2393.6 691.3L2406.1 689.9L2417.4 688.5L2427.3 687.1L2436 685.7L2443.4 684.2L2449.5 682.8L2454.2 681.4L2457.6 680L2459.6 678.5L2460.3 677.1M1138.4 693.5L1139.1 695L1141.2 696.5L1144.7 697.9L1149.5 699.4L1155.6 700.8L1163.2 702.2L1172 703.6L1182.2 704.9L1193.6 706.2L1206.4 707.5L1220.3 708.7L1235.5 709.9L1251.9 711L1269.4 712.1L1288 713.1L1307.7 714.1L1328.4 715L1350.1 715.9L1372.7 716.7L1396.3 717.5L1420.7 718.2L1445.9 718.8L1471.8 719.4L1498.4 719.9L1525.7 720.3L1553.5 720.7L1581.9 721L1610.7 721.2L1639.9 721.4L1669.5 721.5L1699.4 721.5L1729.4 721.4L1759.6 721.3L1790 721.1L1820.3 720.9L1850.6 720.6L1880.9 720.2L1910.9 719.7L1940.8 719.2L1970.4 718.6L1999.6 717.9L2028.4 717.2L2056.8 716.5L2084.6 715.6L2111.9 714.7L2138.5 713.8L2164.4 712.8L2189.6 711.7L2214 710.6L2237.6 709.5L2260.2 708.3L2281.9 707.1L2302.6 705.8L2322.3 704.5L2340.9 703.1L2358.4 701.7L2374.8 700.3L2390 698.9L2403.9 697.5L2416.6 696L2428.1 694.5L2438.3 693L2447.1 691.5L2454.6 689.9L2460.8 688.4L2465.6 686.9L2469.1 685.4L2471.2 683.8L2471.8 682.3M1126.1 695.8L1126.9 697.4L1129 699L1132.5 700.6L1137.4 702.2L1143.7 703.7L1151.3 705.2L1160.3 706.7L1170.7 708.2L1182.3 709.6L1195.3 711L1209.5 712.3L1224.9 713.7L1241.6 714.9L1259.4 716.1L1278.3 717.3L1298.4 718.4L1319.4 719.4L1341.5 720.4L1364.6 721.4L1388.5 722.2L1413.4 723L1439 723.8L1465.4 724.5L1492.5 725.1L1520.2 725.6L1548.6 726.1L1577.4 726.5L1606.8 726.8L1636.5 727L1666.6 727.2L1697 727.3L1727.6 727.4L1758.3 727.3L1789.2 727.2L1820.1 727L1850.9 726.7L1881.7 726.4L1912.3 726L1942.7 725.5L1972.8 725L2002.5 724.3L2031.9 723.6L2060.7 722.9L2089.1 722.1L2116.8 721.2L2143.9 720.2L2170.3 719.2L2195.9 718.2L2220.7 717.1L2244.7 715.9L2267.8 714.7L2289.8 713.4L2310.9 712.1L2331 710.8L2349.9 709.4L2367.7 707.9L2384.4 706.5L2399.8 705L2414 703.4L2427 701.9L2438.6 700.3L2449 698.7L2458 697.1L2465.6 695.5L2471.9 693.9L2476.8 692.3L2480.3 690.7L2482.4 689L2483.1 687.4"/>
<path fill="none" stroke="#0a28d8" stroke-width="4.5" d="M1114.2 698.4L1114.9 700.1L1117 701.8L1120.6 703.5L1125.6 705.2L1132 706.9L1139.8 708.5L1148.9 710.1L1159.4 711.7L1171.3 713.2L1184.5 714.7L1198.9 716.2L1214.6 717.6L1231.6 719L1249.7 720.3L1268.9 721.6L1289.3 722.8L1310.7 724L1333.2 725.1L1356.7 726.2L1381 727.1L1406.3 728L1432.3 728.9L1459.2 729.7L1486.7 730.4L1514.9 731L1543.8 731.6L1573.1 732.1L1602.9 732.5L1633.2 732.8L1663.8 733.1L1694.7 733.2L1725.8 733.3L1757.1 733.4L1788.5 733.3L1819.9 733.2L1851.3 732.9L1882.6 732.6L1913.7 732.3L1944.6 731.8L1975.2 731.3L2005.4 730.7L2035.3 730L2064.6 729.3L2093.4 728.5L2121.6 727.6L2149.2 726.7L2176 725.6L2202.1 724.6L2227.4 723.4L2251.7 722.2L2275.2 721L2297.6 719.7L2319.1 718.3L2339.4 716.9L2358.7 715.5L2376.8 714L2393.8 712.5L2409.5 710.9L2423.9 709.3L2437.1 707.7L2448.9 706.1L2459.5 704.4L2468.6 702.7L2476.4 701L2482.8 699.3L2487.8 697.6L2491.3 695.8L2493.5 694.1L2494.2 692.4M1102.5 701.1L1103.2 702.9L1105.4 704.7L1109 706.5L1114.1 708.3L1120.6 710.1L1128.5 711.8L1137.8 713.6L1148.5 715.3L1160.5 716.9L1173.9 718.5L1188.6 720.1L1204.6 721.7L1221.8 723.2L1240.2 724.6L1259.8 726L1280.5 727.3L1302.3 728.6L1325.1 729.8L1348.9 731L1373.7 732.1L1399.3 733.1L1425.8 734L1453.1 734.9L1481.1 735.7L1509.8 736.4L1539.1 737.1L1568.9 737.6L1599.2 738.1L1630 738.5L1661.1 738.9L1692.5 739.1L1724.1 739.3L1755.9 739.4L1787.8 739.3L1819.7 739.3L1851.6 739.1L1883.4 738.8L1915 738.5L1946.4 738.1L1977.5 737.6L2008.3 737L2038.6 736.4L2068.4 735.6L2097.7 734.8L2126.4 733.9L2154.4 733L2181.7 732L2208.2 730.9L2233.8 729.7L2258.6 728.5L2282.4 727.2L2305.2 725.9L2327 724.5L2347.7 723L2367.3 721.5L2385.7 720L2402.9 718.4L2418.9 716.8L2433.6 715.1L2447 713.4L2459 711.7L2469.7 709.9L2479 708.2L2486.9 706.4L2493.4 704.6L2498.5 702.7L2502.1 700.9L2504.3 699.1L2505 697.3M1091.1 703.7L1091.8 705.7L1094 707.6L1097.7 709.5L1102.8 711.4L1109.4 713.3L1117.5 715.1L1126.9 717L1137.8 718.8L1150 720.5L1163.6 722.3L1178.5 724L1194.8 725.6L1212.2 727.2L1230.9 728.8L1250.8 730.3L1271.8 731.7L1294 733.1L1317.2 734.4L1341.4 735.7L1366.5 736.9L1392.6 738L1419.5 739.1L1447.2 740L1475.6 740.9L1504.8 741.7L1534.5 742.5L1564.8 743.1L1595.6 743.7L1626.8 744.2L1658.4 744.6L1690.3 744.9L1722.4 745.1L1754.7 745.2L1787.1 745.3L1819.5 745.3L1851.9 745.1L1884.2 744.9L1916.4 744.6L1948.2 744.2L1979.8 743.8L2011.1 743.2L2041.9 742.6L2072.2 741.8L2101.9 741L2131 740.1L2159.5 739.2L2187.2 738.1L2214.1 737L2240.1 735.9L2265.3 734.6L2289.5 733.3L2312.7 731.9L2334.8 730.5L2355.8 729L2375.7 727.4L2394.4 725.8L2411.9 724.2L2428.1 722.5L2443 720.8L2456.6 719L2468.9 717.2L2479.7 715.4L2489.2 713.5L2497.2 711.6L2503.8 709.7L2509 707.8L2512.7 705.9L2514.9 704L2515.6 702M1079.9 706.3L1080.6 708.3L1082.9 710.4L1086.6 712.4L1091.9 714.4L1098.6 716.4L1106.7 718.4L1116.3 720.3L1127.3 722.2L1139.8 724.1L1153.6 726L1168.7 727.8L1185.2 729.5L1202.9 731.3L1221.9 732.9L1242.1 734.5L1263.4 736.1L1285.9 737.6L1309.4 739L1334 740.4L1359.5 741.6L1386 742.9L1413.3 744L1441.4 745.1L1470.3 746.1L1499.8 747L1530 747.8L1560.8 748.5L1592.1 749.1L1623.8 749.7L1655.8 750.2L1688.2 750.5L1720.8 750.8L1753.6 751L1786.5 751.1L1819.4 751.1L1852.3 751L1885 750.9L1917.7 750.6L1950 750.2L1982.1 749.8L2013.8 749.3L2045 748.6L2075.8 747.9L2106 747.1L2135.6 746.2L2164.4 745.2L2192.6 744.2L2219.9 743.1L2246.3 741.9L2271.9 740.6L2296.4 739.2L2320 737.8L2342.4 736.4L2363.8 734.8L2384 733.2L2402.9 731.6L2420.7 729.8L2437.1 728.1L2452.3 726.3L2466.1 724.4L2478.5 722.6L2489.5 720.7L2499.1 718.7L2507.3 716.7L2514 714.8L2519.2 712.8L2522.9 710.7L2525.2 708.7L2525.9 706.7M1069 708.9L1069.8 711L1072 713.1L1075.8 715.2L1081.1 717.4L1087.9 719.5L1096.2 721.5L1105.9 723.6L1117.1 725.6L1129.7 727.6L1143.7 729.6L1159.1 731.5L1175.8 733.4L1193.8 735.2L1213 737L1233.5 738.7L1255.2 740.3L1278 741.9L1301.9 743.5L1326.8 744.9L1352.7 746.3L1379.5 747.6L1407.2 748.9L1435.8 750L1465.1 751.1L1495 752.1L1525.7 753L1556.9 753.8L1588.6 754.5L1620.8 755.1L1653.3 755.7L1686.1 756.1L1719.2 756.4L1752.5 756.7L1785.8 756.8L1819.2 756.9L1852.6 756.8L1885.8 756.7L1918.9 756.5L1951.8 756.1L1984.3 755.7L2016.4 755.2L2048.2 754.6L2079.4 753.9L2110 753.1L2140 752.2L2169.3 751.2L2197.8 750.1L2225.5 749L2252.4 747.8L2278.3 746.5L2303.2 745.1L2327.1 743.6L2349.9 742.1L2371.5 740.5L2392 738.9L2411.3 737.2L2429.3 735.4L2446 733.6L2461.3 731.7L2475.3 729.8L2487.9 727.8L2499.1 725.8L2508.8 723.8L2517.1 721.8L2523.9 719.7L2529.2 717.6L2533 715.5L2535.3 713.3L2536 711.2M1058.4 711.3L1059.1 713.6L1061.4 715.8L1065.3 718L1070.7 720.3L1077.6 722.5L1085.9 724.6L1095.8 726.8L1107.2 728.9L1119.9 731L1134.1 733.1L1149.7 735.1L1166.6 737.1L1184.9 739L1204.4 740.9L1225.2 742.7L1247.1 744.5L1270.3 746.2L1294.5 747.8L1319.7 749.4L1346 750.9L1373.2 752.3L1401.3 753.6L1430.3 754.8L1460 756L1490.4 757.1L1521.4 758.1L1553.1 758.9L1585.2 759.7L1617.8 760.4L1650.8 761L1684.1 761.5L1717.7 761.9L1751.4 762.2L1785.2 762.4L1819.1 762.5L1852.9 762.5L1886.6 762.4L1920.2 762.2L1953.5 761.9L1986.4 761.5L2019 761L2051.2 760.4L2082.8 759.7L2113.9 758.9L2144.3 758L2174 757L2202.9 755.9L2231 754.8L2258.3 753.5L2284.5 752.2L2309.8 750.8L2334 749.3L2357.1 747.7L2379.1 746.1L2399.8 744.4L2419.4 742.6L2437.6 740.8L2454.6 738.9L2470.1 737L2484.3 735L2497.1 733L2508.4 730.9L2518.3 728.8L2526.7 726.7L2533.6 724.5L2539 722.3L2542.8 720.1L2545.1 717.9L2545.9 715.7M1048 713.8L1048.8 716.1L1051.1 718.4L1055 720.8L1060.5 723.1L1067.4 725.4L1075.9 727.7L1086 729.9L1097.4 732.2L1110.4 734.4L1124.8 736.6L1140.6 738.7L1157.7 740.8L1176.2 742.8L1196 744.8L1217.1 746.7L1239.3 748.6L1262.7 750.4L1287.3 752.1L1312.9 753.8L1339.5 755.3L1367.1 756.8L1395.6 758.3L1424.9 759.6L1455 760.8L1485.8 762L1517.3 763L1549.3 764L1581.9 764.9L1615 765.6L1648.4 766.3L1682.1 766.8L1716.1 767.3L1750.3 767.7L1784.6 767.9L1818.9 768L1853.2 768.1L1887.4 768L1921.4 767.8L1955.1 767.5L1988.5 767.2L2021.6 766.7L2054.2 766.1L2086.2 765.4L2117.7 764.6L2148.5 763.7L2178.6 762.7L2208 761.6L2236.4 760.4L2264 759.1L2290.6 757.8L2316.2 756.3L2340.8 754.8L2364.2 753.2L2386.5 751.5L2407.5 749.8L2427.3 748L2445.8 746.1L2462.9 744.1L2478.7 742.1L2493.1 740.1L2506.1 738L2517.6 735.8L2527.6 733.7L2536.1 731.4L2543.1 729.2L2548.5 726.9L2552.4 724.6L2554.7 722.3L2555.5 720M1037.9 716.1L1038.7 718.6L1041 721L1045 723.4L1050.5 725.8L1057.6 728.2L1066.2 730.6L1076.3 733L1088 735.3L1101.1 737.7L1115.7 739.9L1131.6 742.2L1149 744.4L1167.8 746.5L1187.8 748.6L1209.1 750.6L1231.7 752.6L1255.4 754.5L1280.2 756.3L1306.2 758L1333.1 759.7L1361.1 761.3L1389.9 762.8L1419.6 764.2L1450.1 765.5L1481.3 766.8L1513.2 767.9L1545.7 768.9L1578.7 769.9L1612.2 770.7L1646 771.4L1680.2 772L1714.7 772.5L1749.3 772.9L1784 773.2L1818.8 773.4L1853.5 773.5L1888.1 773.5L1922.5 773.3L1956.7 773.1L1990.6 772.7L2024.1 772.2L2057.1 771.6L2089.5 770.9L2121.4 770.1L2152.6 769.2L2183.1 768.2L2212.8 767.1L2241.7 765.9L2269.6 764.6L2296.6 763.3L2322.5 761.8L2347.4 760.2L2371.1 758.6L2393.6 756.9L2415 755.1L2435 753.2L2453.7 751.2L2471.1 749.2L2487.1 747.2L2501.7 745.1L2514.8 742.9L2526.4 740.7L2536.6 738.4L2545.2 736.1L2552.3 733.8L2557.8 731.4L2561.7 729L2564.1 726.6L2564.9 724.2M1028 718.5L1028.8 721L1031.2 723.5L1035.2 726L1040.8 728.5L1048 731L1056.7 733.5L1066.9 736L1078.7 738.4L1092 740.9L1106.8 743.2L1123 745.6L1140.6 747.8L1159.5 750.1L1179.8 752.3L1201.4 754.4L1224.2 756.5L1248.2 758.4L1273.4 760.4L1299.7 762.2L1327 764L1355.2 765.6L1384.5 767.2L1414.5 768.7L1445.4 770.1L1477 771.4L1509.3 772.6L1542.2 773.7L1575.6 774.7L1609.5 775.6L1643.8 776.4L1678.4 777.1L1713.2 777.7L1748.3 778.1L1783.4 778.5L1818.6 778.7L1853.8 778.8L1888.8 778.8L1923.7 778.7L1958.3 778.4L1992.6 778.1L2026.5 777.6L2059.9 777L2092.8 776.4L2125.1 775.6L2156.7 774.7L2187.5 773.7L2217.6 772.5L2246.8 771.3L2275.1 770L2302.4 768.6L2328.6 767.1L2353.8 765.5L2377.8 763.8L2400.7 762L2422.2 760.2L2442.5 758.3L2461.5 756.3L2479.1 754.2L2495.3 752.1L2510 749.9L2523.3 747.7L2535.1 745.4L2545.4 743L2554.1 740.6L2561.2 738.2L2566.8 735.8L2570.8 733.3L2573.2 730.8L2574 728.3M1018.4 720.7L1019.2 723.3L1021.7 725.9L1025.7 728.5L1031.4 731.2L1038.6 733.8L1047.4 736.3L1057.8 738.9L1069.7 741.4L1083.2 744L1098.1 746.4L1114.5 748.9L1132.3 751.3L1151.5 753.6L1172 755.9L1193.9 758.1L1217 760.2L1241.3 762.3L1266.7 764.3L1293.3 766.3L1320.9 768.1L1349.6 769.9L1379.1 771.5L1409.5 773.1L1440.8 774.6L1472.8 776L1505.4 777.3L1538.7 778.4L1572.5 779.5L1606.8 780.5L1641.5 781.3L1676.5 782L1711.8 782.7L1747.3 783.2L1782.9 783.5L1818.5 783.8L1854.1 783.9L1889.5 784L1924.8 783.9L1959.8 783.7L1994.5 783.3L2028.8 782.9L2062.6 782.3L2095.9 781.6L2128.6 780.9L2160.6 779.9L2191.8 778.9L2222.2 777.8L2251.8 776.6L2280.4 775.2L2308 773.8L2334.6 772.3L2360.1 770.6L2384.4 768.9L2407.5 767.1L2429.3 765.2L2449.9 763.2L2469 761.2L2486.9 759.1L2503.2 756.9L2518.2 754.6L2531.6 752.3L2543.5 749.9L2553.9 747.5L2562.7 745.1L2570 742.6L2575.6 740L2579.7 737.5L2582.1 734.9L2582.9 732.3M1009.1 722.9L1009.9 725.6L1012.4 728.3L1016.5 731L1022.2 733.7L1029.5 736.4L1038.4 739.1L1048.9 741.7L1061 744.4L1074.6 747L1089.7 749.6L1106.3 752.1L1124.3 754.6L1143.7 757L1164.5 759.4L1186.5 761.7L1209.9 763.9L1234.5 766.1L1260.3 768.2L1287.1 770.2L1315.1 772.2L1344 774L1373.9 775.7L1404.7 777.4L1436.3 779L1468.7 780.4L1501.7 781.8L1535.4 783L1569.6 784.1L1604.3 785.2L1639.3 786.1L1674.8 786.9L1710.5 787.5L1746.3 788.1L1782.3 788.5L1818.3 788.8L1854.3 789L1890.2 789L1925.9 789L1961.3 788.8L1996.4 788.5L2031.1 788L2065.3 787.5L2099 786.8L2132 786L2164.4 785.1L2196 784.1L2226.7 782.9L2256.6 781.7L2285.6 780.3L2313.5 778.9L2340.4 777.3L2366.2 775.6L2390.8 773.9L2414.1 772L2436.2 770.1L2457 768.1L2476.4 766L2494.4 763.8L2511 761.5L2526.1 759.2L2539.7 756.8L2551.7 754.4L2562.2 751.9L2571.2 749.4L2578.5 746.8L2584.2 744.2L2588.3 741.6L2590.8 738.9L2591.6 736.2M1000 725L1000.8 727.8L1003.3 730.6L1007.5 733.4L1013.2 736.2L1020.6 739L1029.7 741.7L1040.3 744.5L1052.5 747.2L1066.2 749.9L1081.5 752.6L1098.3 755.2L1116.5 757.8L1136.1 760.3L1157.1 762.8L1179.4 765.2L1203.1 767.5L1227.9 769.8L1254 772L1281.1 774.1L1309.4 776.1L1338.7 778L1368.9 779.8L1400 781.6L1431.9 783.2L1464.7 784.7L1498.1 786.2L1532.1 787.5L1566.7 788.7L1601.8 789.7L1637.2 790.7L1673.1 791.5L1709.1 792.3L1745.4 792.8L1781.8 793.3L1818.2 793.7L1854.6 793.9L1890.9 794L1926.9 793.9L1962.8 793.8L1998.2 793.5L2033.3 793L2067.9 792.5L2101.9 791.8L2135.3 791L2168.1 790.1L2200 789.1L2231.1 787.9L2261.3 786.7L2290.6 785.3L2318.9 783.8L2346 782.2L2372.1 780.5L2396.9 778.7L2420.6 776.8L2442.9 774.8L2463.9 772.8L2483.5 770.6L2501.7 768.4L2518.5 766.1L2533.8 763.7L2547.5 761.2L2559.7 758.7L2570.3 756.2L2579.4 753.6L2586.8 750.9L2592.5 748.2L2596.7 745.5L2599.2 742.8L2600 740"/>
<path fill="none" stroke="url(#mg2)" stroke-width="4.5" d="M1013.4 725.7L1007.8 733.6M1027.3 724.1L1022 731.6L1017.4 737.8M1041.6 721.9L1036.4 729.2L1031.8 735.4L1027.4 741.1M1056.2 719.3L1051 726.4L1046.3 732.6L1041.8 738.4L1037.5 743.8M1071.1 716.3L1065.9 723.3L1061 729.6L1056.4 735.4L1052 740.9L1047.8 746.2M1093.3 703.5L1086.2 713.1L1080.9 720L1076 726.3L1071.2 732.2L1066.7 737.8L1062.3 743.2L1058 748.4M1108.5 700.1L1101.5 709.5L1096.1 716.4L1091 722.7L1086.2 728.7L1081.5 734.4L1076.9 739.9L1072.6 745.2L1068.4 750.3M1116.9 705.7L1111.5 712.6L1106.3 718.9L1101.3 724.9L1096.5 730.7L1091.8 736.3L1087.3 741.8L1082.9 747L1078.7 752.1M1127 708.6L1121.7 714.9L1116.6 721L1111.6 726.8L1106.8 732.6L1102.1 738.1L1097.6 743.5L1093.3 748.7L1089.1 753.8M1137.3 710.7L1132.1 716.8L1126.9 722.7L1122 728.5L1117.2 734.2L1112.5 739.7L1108 745.1L1103.6 750.3L1099.4 755.4M1147.7 712.5L1142.4 718.5L1137.3 724.3L1132.4 730.1L1127.6 735.7L1122.9 741.2L1118.4 746.6L1114 751.8L1109.8 756.9M1158.1 714L1152.8 719.9L1147.7 725.8L1142.8 731.5L1138 737.1L1133.3 742.7L1128.8 748L1124.4 753.2L1120.2 758.3M1168.5 715.3L1163.2 721.2L1158.1 727.1L1153.2 732.8L1148.4 738.5L1143.7 744L1139.2 749.3L1134.9 754.6L1130.7 759.6M1178.9 716.5L1173.7 722.5L1168.6 728.3L1163.6 734.1L1158.8 739.7L1154.2 745.2L1149.6 750.6L1145.3 755.8L1141.1 760.9M1189.3 717.7L1184.1 723.6L1179 729.5L1174.1 735.2L1169.3 740.9L1164.6 746.4L1160.1 751.8L1155.7 757L1151.5 762.1M1199.8 718.7L1194.6 724.6L1189.5 730.5L1184.5 736.3L1179.7 742L1175 747.5L1170.5 752.9L1166.2 758.2L1161.9 763.3M1210.2 719.6L1205 725.6L1199.9 731.5L1195 737.3L1190.1 743L1185.5 748.6L1181 754L1176.6 759.3L1172.4 764.4M1220.7 720.5L1215.5 726.5L1210.4 732.5L1205.4 738.3L1200.6 744L1195.9 749.6L1191.4 755.1L1187 760.4L1182.8 765.5M1231.2 721.4L1225.9 727.4L1220.8 733.4L1215.9 739.2L1211 745L1206.4 750.6L1201.9 756.1L1197.5 761.4L1193.3 766.6M1241.6 722.2L1236.4 728.2L1231.3 734.2L1226.3 740.1L1221.5 745.9L1216.8 751.6L1212.3 757.1L1207.9 762.4L1203.7 767.6M1252.1 722.9L1246.9 729L1241.8 735.1L1236.8 741L1232 746.8L1227.3 752.5L1222.8 758L1218.4 763.3L1214.2 768.5M1262.6 723.6L1257.3 729.8L1252.2 735.8L1247.3 741.8L1242.4 747.6L1237.8 753.3L1233.2 758.9L1228.9 764.3L1224.6 769.5M1273.1 724.3L1267.8 730.5L1262.7 736.6L1257.7 742.6L1252.9 748.4L1248.2 754.2L1243.7 759.7L1239.3 765.2L1235.1 770.4M1283.6 724.9L1278.3 731.2L1273.2 737.3L1268.2 743.3L1263.4 749.2L1258.7 755L1254.2 760.6L1249.8 766L1245.6 771.3M1294 725.5L1288.8 731.8L1283.7 738L1278.7 744L1273.9 750L1269.2 755.8L1264.6 761.4L1260.3 766.8L1256 772.1M1304.5 726.1L1299.3 732.4L1294.1 738.7L1289.2 744.7L1284.3 750.7L1279.6 756.5L1275.1 762.2L1270.7 767.6L1266.5 773M1315 726.7L1309.7 733L1304.6 739.3L1299.6 745.4L1294.8 751.4L1290.1 757.2L1285.6 762.9L1281.2 768.4L1277 773.8M1325.5 727.2L1320.2 733.6L1315.1 739.9L1310.1 746L1305.3 752.1L1300.6 757.9L1296.1 763.6L1291.7 769.2L1287.4 774.5M1336 727.7L1330.7 734.2L1325.6 740.5L1320.6 746.7L1315.8 752.7L1311.1 758.6L1306.5 764.3L1302.1 769.9L1297.9 775.3M1346.5 728.2L1341.2 734.7L1336.1 741L1331.1 747.3L1326.2 753.3L1321.5 759.3L1317 765L1312.6 770.6L1308.4 776M1357 728.7L1351.7 735.2L1346.6 741.6L1341.6 747.8L1336.7 754L1332 759.9L1327.5 765.7L1323.1 771.3L1318.9 776.7M1367.4 729.1L1362.2 735.7L1357 742.1L1352.1 748.4L1347.2 754.5L1342.5 760.5L1338 766.3L1333.6 772L1329.3 777.4M1377.9 729.6L1372.7 736.1L1367.5 742.6L1362.5 748.9L1357.7 755.1L1353 761.1L1348.4 766.9L1344.1 772.6L1339.8 778.1M1388.4 730L1383.2 736.6L1378 743.1L1373 749.4L1368.2 755.7L1363.5 761.7L1358.9 767.6L1354.5 773.2L1350.3 778.7M1398.9 730.4L1393.6 737L1388.5 743.6L1383.5 749.9L1378.7 756.2L1374 762.2L1369.4 768.1L1365 773.8L1360.8 779.4M1409.4 730.7L1404.1 737.4L1399 744L1394 750.4L1389.2 756.7L1384.5 762.8L1379.9 768.7L1375.5 774.4L1371.3 780M1419.9 731.1L1414.6 737.8L1409.5 744.4L1404.5 750.9L1399.6 757.2L1394.9 763.3L1390.4 769.3L1386 775L1381.7 780.6M1430.4 731.4L1425.1 738.2L1420 744.9L1415 751.3L1410.1 757.7L1405.4 763.8L1400.9 769.8L1396.5 775.6L1392.2 781.2M1440.9 731.8L1435.6 738.6L1430.5 745.3L1425.5 751.8L1420.6 758.1L1415.9 764.3L1411.4 770.3L1407 776.1L1402.7 781.7M1451.4 732.1L1446.1 738.9L1441 745.6L1436 752.2L1431.1 758.6L1426.4 764.8L1421.8 770.8L1417.4 776.6L1413.2 782.3M1461.9 732.4L1456.6 739.3L1451.5 746L1446.5 752.6L1441.6 759L1436.9 765.2L1432.3 771.3L1427.9 777.1L1423.7 782.8M1472.4 732.7L1467.1 739.6L1462 746.4L1456.9 753L1452.1 759.4L1447.4 765.7L1442.8 771.8L1438.4 777.6L1434.2 783.3M1482.9 732.9L1477.6 739.9L1472.4 746.7L1467.4 753.4L1462.6 759.8L1457.9 766.1L1453.3 772.2L1448.9 778.1L1444.7 783.8M1493.4 733.2L1488.1 740.2L1482.9 747.1L1477.9 753.7L1473.1 760.2L1468.4 766.5L1463.8 772.7L1459.4 778.6L1455.1 784.3M1503.9 733.5L1498.6 740.5L1493.4 747.4L1488.4 754.1L1483.6 760.6L1478.9 766.9L1474.3 773.1L1469.9 779L1465.6 784.8M1514.4 733.7L1509.1 740.8L1503.9 747.7L1498.9 754.4L1494.1 761L1489.4 767.3L1484.8 773.5L1480.4 779.5L1476.1 785.2M1524.9 733.9L1519.6 741L1514.4 748L1509.4 754.7L1504.6 761.3L1499.8 767.7L1495.3 773.9L1490.9 779.9L1486.6 785.7M1535.4 734.1L1530.1 741.3L1524.9 748.3L1519.9 755L1515.1 761.7L1510.3 768.1L1505.8 774.3L1501.4 780.3L1497.1 786.1M1545.9 734.3L1540.6 741.5L1535.4 748.5L1530.4 755.3L1525.5 762L1520.8 768.4L1516.3 774.7L1511.9 780.7L1507.6 786.5M1556.4 734.5L1551.1 741.7L1545.9 748.8L1540.9 755.6L1536 762.3L1531.3 768.8L1526.8 775L1522.3 781.1L1518.1 786.9M1566.9 734.7L1561.6 742L1556.4 749L1551.4 755.9L1546.5 762.6L1541.8 769.1L1537.3 775.4L1532.8 781.5L1528.6 787.3M1577.4 734.9L1572.1 742.2L1566.9 749.3L1561.9 756.2L1557 762.9L1552.3 769.4L1547.7 775.7L1543.3 781.8L1539.1 787.7M1587.9 735L1582.6 742.3L1577.4 749.5L1572.4 756.4L1567.5 763.2L1562.8 769.7L1558.2 776L1553.8 782.2L1549.6 788.1M1598.4 735.2L1593.1 742.5L1587.9 749.7L1582.9 756.7L1578 763.4L1573.3 770L1568.7 776.4L1564.3 782.5L1560.1 788.4M1608.9 735.3L1603.6 742.7L1598.4 749.9L1593.4 756.9L1588.5 763.7L1583.8 770.3L1579.2 776.7L1574.8 782.8L1570.6 788.8M1619.4 735.5L1614.1 742.9L1608.9 750.1L1603.9 757.1L1599 763.9L1594.3 770.5L1589.7 777L1585.3 783.1L1581 789.1M1629.9 735.6L1624.6 743L1619.4 750.3L1614.4 757.3L1609.5 764.2L1604.8 770.8L1600.2 777.2L1595.8 783.4L1591.5 789.4M1640.4 735.7L1635.1 743.2L1629.9 750.4L1624.9 757.5L1620 764.4L1615.3 771L1610.7 777.5L1606.3 783.7L1602 789.7M1650.9 735.8L1645.6 743.3L1640.4 750.6L1635.4 757.7L1630.5 764.6L1625.8 771.3L1621.2 777.8L1616.8 784L1612.5 790M1661.4 735.9L1656.1 743.4L1650.9 750.7L1645.9 757.9L1641 764.8L1636.3 771.5L1631.7 778L1627.3 784.3L1623 790.3M1671.9 736L1666.6 743.5L1661.4 750.9L1656.4 758L1651.5 765L1646.8 771.7L1642.2 778.2L1637.8 784.5L1633.5 790.6M1682.4 736L1677.1 743.6L1671.9 751L1666.9 758.2L1662 765.2L1657.3 771.9L1652.7 778.5L1648.3 784.8L1644 790.9M1692.9 736.1L1687.6 743.7L1682.4 751.1L1677.4 758.3L1672.5 765.3L1667.8 772.1L1663.2 778.7L1658.8 785L1654.5 791.1M1703.4 736.1L1698.1 743.8L1692.9 751.2L1687.9 758.5L1683 765.5L1678.3 772.3L1673.7 778.9L1669.3 785.2L1665 791.4M1713.9 736.2L1708.6 743.9L1703.4 751.3L1698.4 758.6L1693.5 765.6L1688.8 772.5L1684.2 779.1L1679.8 785.4L1675.5 791.6M1724.4 736.2L1719.1 743.9L1713.9 751.4L1708.9 758.7L1704 765.8L1699.3 772.6L1694.7 779.2L1690.3 785.6L1686 791.8M1734.9 736.3L1729.6 744L1724.4 751.5L1719.4 758.8L1714.5 765.9L1709.8 772.8L1705.2 779.4L1700.8 785.8L1696.5 792M1745.4 736.3L1740.1 744L1734.9 751.6L1729.9 758.9L1725 766L1720.3 772.9L1715.7 779.6L1711.3 786L1707 792.2M1755.9 736.3L1750.6 744.1L1745.4 751.6L1740.4 759L1735.5 766.1L1730.8 773L1726.2 779.7L1721.8 786.2L1717.5 792.4M1766.4 736.3L1761.1 744.1L1755.9 751.7L1750.9 759.1L1746 766.2L1741.3 773.2L1736.7 779.9L1732.3 786.3L1728 792.6M1776.9 736.3L1771.6 744.1L1766.4 751.7L1761.4 759.1L1756.5 766.3L1751.8 773.3L1747.2 780L1742.8 786.5L1738.5 792.7M1787.4 736.2L1782.1 744.1L1776.9 751.8L1771.9 759.2L1767 766.4L1762.3 773.4L1757.7 780.1L1753.3 786.6L1749 792.9M1797.9 736.2L1792.6 744.1L1787.4 751.8L1782.4 759.2L1777.5 766.5L1772.8 773.5L1768.2 780.2L1763.8 786.7L1759.5 793M1808.4 736.2L1803.1 744.1L1797.9 751.8L1792.9 759.3L1788 766.5L1783.3 773.5L1778.7 780.3L1774.3 786.9L1770 793.2M1818.9 736.1L1813.6 744.1L1808.4 751.8L1803.4 759.3L1798.5 766.6L1793.8 773.6L1789.2 780.4L1784.8 787L1780.5 793.3M1829.4 736.1L1824.1 744.1L1818.9 751.8L1813.9 759.3L1809 766.6L1804.3 773.7L1799.7 780.5L1795.3 787.1L1791 793.4M1839.9 736L1834.6 744L1829.4 751.8L1824.4 759.3L1819.5 766.6L1814.8 773.7L1810.2 780.6L1805.8 787.2L1801.5 793.5M1850.4 735.9L1845.1 744L1839.9 751.8L1834.9 759.3L1830 766.7L1825.3 773.7L1820.7 780.6L1816.3 787.2L1812 793.6M1860.9 735.9L1855.6 743.9L1850.4 751.7L1845.4 759.3L1840.5 766.7L1835.8 773.8L1831.2 780.7L1826.8 787.3L1822.5 793.7M1871.4 735.8L1866.1 743.8L1860.9 751.7L1855.9 759.3L1851 766.7L1846.3 773.8L1841.7 780.7L1837.3 787.3L1833 793.8M1881.9 735.7L1876.6 743.8L1871.4 751.6L1866.4 759.3L1861.5 766.6L1856.8 773.8L1852.2 780.7L1847.8 787.4L1843.5 793.8M1892.4 735.6L1887.1 743.7L1881.9 751.6L1876.9 759.2L1872 766.6L1867.3 773.8L1862.7 780.7L1858.3 787.4L1854 793.9M1902.9 735.5L1897.6 743.6L1892.4 751.5L1887.4 759.2L1882.5 766.6L1877.8 773.8L1873.2 780.7L1868.8 787.4L1864.5 793.9M1913.3 735.3L1908.1 743.5L1902.9 751.4L1897.9 759.1L1893 766.6L1888.3 773.8L1883.7 780.7L1879.3 787.5L1875 793.9M1923.8 735.2L1918.6 743.4L1913.4 751.3L1908.4 759L1903.5 766.5L1898.8 773.7L1894.2 780.7L1889.8 787.5L1885.5 794M1934.3 735L1929.1 743.3L1923.9 751.2L1918.9 759L1914 766.4L1909.3 773.7L1904.7 780.7L1900.3 787.4L1896 794M1944.8 734.9L1939.6 743.1L1934.4 751.1L1929.4 758.9L1924.5 766.4L1919.8 773.6L1915.2 780.7L1910.8 787.4L1906.5 794M1955.3 734.7L1950 743L1944.9 751L1939.9 758.8L1935 766.3L1930.3 773.6L1925.7 780.6L1921.3 787.4L1917 793.9M1965.8 734.6L1960.5 742.8L1955.4 750.9L1950.4 758.6L1945.5 766.2L1940.8 773.5L1936.2 780.6L1931.8 787.4L1927.5 793.9M1976.3 734.4L1971 742.7L1965.9 750.7L1960.9 758.5L1956 766.1L1951.3 773.4L1946.7 780.5L1942.3 787.3L1938 793.9M1986.8 734.2L1981.5 742.5L1976.4 750.6L1971.4 758.4L1966.5 766L1961.8 773.3L1957.2 780.4L1952.8 787.2L1948.5 793.8M1997.3 734L1992 742.3L1986.9 750.4L1981.9 758.3L1977 765.9L1972.3 773.2L1967.7 780.3L1963.3 787.2L1959 793.8M2007.8 733.8L2002.5 742.1L1997.4 750.2L1992.4 758.1L1987.5 765.7L1982.8 773.1L1978.2 780.2L1973.8 787.1L1969.5 793.7M2018.3 733.5L2013 741.9L2007.9 750.1L2002.9 757.9L1998 765.6L1993.3 773L1988.7 780.1L1984.3 787L1980 793.6M2028.8 733.3L2023.5 741.7L2018.4 749.9L2013.4 757.8L2008.5 765.4L2003.8 772.8L1999.2 780L1994.8 786.9L1990.5 793.5M2039.3 733.1L2034 741.5L2028.9 749.7L2023.9 757.6L2019 765.3L2014.3 772.7L2009.7 779.8L2005.3 786.8L2001 793.4M2049.8 732.8L2044.5 741.2L2039.4 749.4L2034.4 757.4L2029.5 765.1L2024.8 772.5L2020.2 779.7L2015.8 786.6L2011.5 793.3M2060.3 732.5L2055 741L2049.9 749.2L2044.9 757.2L2040 764.9L2035.3 772.3L2030.7 779.5L2026.3 786.5L2022 793.2M2070.8 732.3L2065.5 740.7L2060.4 749L2055.4 757L2050.5 764.7L2045.8 772.2L2041.2 779.4L2036.8 786.3L2032.5 793M2081.3 732L2076 740.5L2070.9 748.7L2065.9 756.7L2061 764.5L2056.3 772L2051.7 779.2L2047.3 786.2L2043 792.9M2091.8 731.7L2086.5 740.2L2081.4 748.5L2076.4 756.5L2071.5 764.2L2066.8 771.7L2062.2 779L2057.8 786L2053.5 792.7M2102.3 731.4L2097 739.9L2091.9 748.2L2086.8 756.2L2082 764L2077.3 771.5L2072.7 778.8L2068.3 785.8L2064 792.6M2112.8 731.1L2107.5 739.6L2102.4 747.9L2097.3 756L2092.5 763.8L2087.8 771.3L2083.2 778.6L2078.8 785.6L2074.5 792.4M2123.3 730.7L2118 739.3L2112.9 747.6L2107.8 755.7L2103 763.5L2098.3 771L2093.7 778.3L2089.3 785.4L2085 792.2M2133.8 730.4L2128.5 739L2123.3 747.3L2118.3 755.4L2113.5 763.2L2108.8 770.8L2104.2 778.1L2099.8 785.2L2095.5 792M2144.3 730L2139 738.6L2133.8 747L2128.8 755.1L2124 762.9L2119.2 770.5L2114.7 777.8L2110.3 784.9L2106 791.7M2154.8 729.6L2149.5 738.3L2144.3 746.6L2139.3 754.8L2134.5 762.6L2129.7 770.2L2125.2 777.6L2120.7 784.7L2116.5 791.5M2165.3 729.2L2160 737.9L2154.8 746.3L2149.8 754.4L2145 762.3L2140.2 769.9L2135.7 777.3L2131.2 784.4L2127 791.2M2175.8 728.8L2170.5 737.5L2165.3 745.9L2160.3 754.1L2155.5 762L2150.7 769.6L2146.2 777L2141.7 784.1L2137.5 791M2186.3 728.4L2181 737.1L2175.8 745.5L2170.8 753.7L2165.9 761.6L2161.2 769.3L2156.7 776.7L2152.2 783.8L2148 790.7M2196.7 728L2191.5 736.7L2186.3 745.2L2181.3 753.3L2176.4 761.3L2171.7 768.9L2167.2 776.4L2162.7 783.5L2158.5 790.4M2207.2 727.6L2202 736.3L2196.8 744.7L2191.8 753L2186.9 760.9L2182.2 768.6L2177.6 776L2173.2 783.2L2169 790.1M2217.7 727.1L2212.4 735.8L2207.3 744.3L2202.3 752.5L2197.4 760.5L2192.7 768.2L2188.1 775.7L2183.7 782.8L2179.5 789.8M2228.2 726.6L2222.9 735.4L2217.8 743.9L2212.8 752.1L2207.9 760.1L2203.2 767.8L2198.6 775.3L2194.2 782.5L2190 789.4M2238.7 726.1L2233.4 734.9L2228.3 743.4L2223.3 751.7L2218.4 759.7L2213.7 767.4L2209.1 774.9L2204.7 782.1L2200.4 789.1M2249.2 725.6L2243.9 734.4L2238.8 742.9L2233.8 751.2L2228.9 759.2L2224.2 767L2219.6 774.5L2215.2 781.7L2210.9 788.7M2259.7 725.1L2254.4 733.9L2249.3 742.4L2244.3 750.7L2239.4 758.8L2234.7 766.6L2230.1 774.1L2225.7 781.3L2221.4 788.3M2270.2 724.5L2264.9 733.3L2259.7 741.9L2254.7 750.3L2249.9 758.3L2245.2 766.1L2240.6 773.6L2236.2 780.9L2231.9 787.9M2280.6 723.9L2275.4 732.8L2270.2 741.4L2265.2 749.7L2260.4 757.8L2255.7 765.6L2251.1 773.2L2246.7 780.5L2242.4 787.5M2291.1 723.3L2285.9 732.2L2280.7 740.8L2275.7 749.2L2270.9 757.3L2266.1 765.1L2261.6 772.7L2257.2 780L2252.9 787M2301.6 722.7L2296.3 731.6L2291.2 740.3L2286.2 748.6L2281.3 756.8L2276.6 764.6L2272.1 772.2L2267.7 779.5L2263.4 786.6M2312.1 722L2306.8 731L2301.7 739.7L2296.7 748.1L2291.8 756.2L2287.1 764.1L2282.6 771.7L2278.1 779L2273.9 786.1M2322.6 721.4L2317.3 730.3L2312.2 739L2307.2 747.5L2302.3 755.6L2297.6 763.5L2293 771.2L2288.6 778.5L2284.4 785.6M2333 720.6L2327.8 729.7L2322.6 738.4L2317.6 746.8L2312.8 755L2308.1 762.9L2303.5 770.6L2299.1 778L2294.9 785.1M2343.5 719.9L2338.3 728.9L2333.1 737.7L2328.1 746.2L2323.3 754.4L2318.6 762.3L2314 770L2309.6 777.4L2305.3 784.5M2354 719.1L2348.7 728.2L2343.6 737L2338.6 745.5L2333.8 753.8L2329.1 761.7L2324.5 769.4L2320.1 776.8L2315.8 784M2364.5 718.3L2359.2 727.4L2354.1 736.3L2349.1 744.8L2344.2 753.1L2339.5 761.1L2335 768.8L2330.6 776.2L2326.3 783.4M2374.9 717.5L2369.7 726.6L2364.5 735.5L2359.6 744.1L2354.7 752.4L2350 760.4L2345.5 768.1L2341 775.6L2336.8 782.8M2385.4 716.6L2380.1 725.8L2375 734.7L2370 743.3L2365.2 751.6L2360.5 759.7L2355.9 767.4L2351.5 774.9L2347.3 782.1M2395.8 715.6L2390.6 724.9L2385.5 733.8L2380.5 742.5L2375.7 750.8L2371 758.9L2366.4 766.7L2362 774.2L2357.8 781.5M2406.3 714.6L2401 723.9L2395.9 732.9L2391 741.6L2386.1 750L2381.4 758.1L2376.9 766L2372.5 773.5L2368.2 780.8M2416.7 713.5L2411.5 722.9L2406.4 732L2401.4 740.7L2396.6 749.2L2391.9 757.3L2387.4 765.2L2383 772.8L2378.7 780M2427.2 712.3L2421.9 721.8L2416.8 731L2411.9 739.8L2407.1 748.3L2402.4 756.5L2397.8 764.4L2393.4 772L2389.2 779.3M2437.6 711.1L2432.4 720.7L2427.3 729.9L2422.3 738.8L2417.5 747.3L2412.8 755.6L2408.3 763.5L2403.9 771.2L2399.7 778.5M2448 709.7L2442.8 719.4L2437.7 728.8L2432.8 737.7L2428 746.3L2423.3 754.6L2418.7 762.6L2414.4 770.3L2410.1 777.7M2458.4 708.1L2453.2 718.1L2448.2 727.6L2443.2 736.6L2438.4 745.3L2433.7 753.6L2429.2 761.7L2424.8 769.4L2420.6 776.8M2468.7 706.3L2463.6 716.6L2458.6 726.2L2453.6 735.4L2448.8 744.2L2444.2 752.6L2439.7 760.7L2435.3 768.5L2431 775.9M2479 704.2L2474 714.9L2469 724.8L2464.1 734.1L2459.3 743L2454.6 751.5L2450.1 759.6L2445.7 767.5L2441.5 775M2489.2 701.5L2484.3 713L2479.4 723.2L2474.5 732.7L2469.7 741.7L2465.1 750.3L2460.5 758.5L2456.2 766.4L2452 774M2498.5 696.9L2494.6 710.7L2489.7 721.4L2484.9 731.2L2480.1 740.3L2475.5 749L2471 757.4L2466.6 765.3L2462.4 772.9M2504.6 707.7L2500 719.4L2495.2 729.5L2490.5 738.8L2485.9 747.7L2481.4 756.1L2477.1 764.1L2472.8 771.8M2513.3 702.2L2510.2 716.8L2505.5 727.5L2500.9 737.2L2496.3 746.2L2491.8 754.8L2487.5 762.9L2483.3 770.6M2520.1 713.4L2515.8 725.3L2511.2 735.4L2506.7 744.6L2502.2 753.3L2497.9 761.5L2493.7 769.4M2525.9 722.5L2521.5 733.3L2517 742.8L2512.6 751.7L2508.3 760.1L2504.1 768.1M2535.6 718.5L2531.7 730.8L2527.3 740.9L2523 750L2518.7 758.6L2514.5 766.6M2541.7 727.6L2537.6 738.5L2533.3 748.1L2529 756.9L2524.9 765.1M2550.9 722.7L2547.7 735.8L2543.6 745.9L2539.4 755L2535.3 763.4M2557.5 732L2553.7 743.3L2549.7 752.9L2545.6 761.6M2565.3 725.4L2563.7 740.2L2559.9 750.5L2555.9 759.6M2573.2 735.6L2570 747.6L2566.2 757.2M2579.8 743.8L2576.3 754.5M2588.1 737.6L2586.2 751.1"/>
<path fill="none" stroke="url(#mg2)" stroke-width="4.0" d="M1124.1 696.4L1116.9 705.7M1132.6 701.9L1127 708.6M1148.3 698.2L1142.7 704.5L1137.3 710.7M1164.1 694.5L1158.5 700.6L1153 706.4L1147.7 712.5M1180.2 690.2L1174.4 696.8L1168.8 702.4L1163.4 708L1158.1 714M1196.7 684.7L1190.5 692.3L1184.7 698.5L1179.2 703.9L1173.8 709.4L1168.5 715.3M1213.5 678.4L1207 686.6L1200.9 693.8L1195.1 699.8L1189.6 705.1L1184.2 710.7L1178.9 716.5M1230.4 671.6L1223.8 680.1L1217.5 687.9L1211.4 694.9L1205.6 700.9L1200.1 706.2L1194.7 711.8L1189.3 717.7M1247.5 664.5L1240.8 673.1L1234.3 681.2L1227.9 688.9L1221.8 695.9L1216 701.8L1210.5 707.2L1205.1 712.8L1199.8 718.7M1257.9 665.6L1251.3 674L1244.7 682L1238.4 689.7L1232.3 696.7L1226.5 702.7L1221 708.1L1215.6 713.7L1210.2 719.6M1268.4 666.3L1261.8 674.6L1255.2 682.7L1248.9 690.4L1242.7 697.5L1237 703.5L1231.5 708.9L1226.1 714.6L1220.7 720.5M1278.9 666.8L1272.2 675.1L1265.7 683.3L1259.3 691L1253.2 698.1L1247.4 704.2L1241.9 709.7L1236.5 715.4L1231.2 721.4M1289.4 667.1L1282.7 675.6L1276.2 683.8L1269.8 691.6L1263.7 698.7L1257.9 704.9L1252.4 710.4L1247 716.1L1241.6 722.2M1299.9 667.4L1293.2 675.9L1286.7 684.2L1280.3 692.1L1274.2 699.3L1268.4 705.5L1262.9 711.1L1257.5 716.8L1252.1 722.9M1310.4 667.7L1303.7 676.2L1297.2 684.6L1290.8 692.5L1284.7 699.8L1278.9 706L1273.4 711.7L1268 717.5L1262.6 723.6M1320.9 667.9L1314.2 676.5L1307.7 684.9L1301.3 692.9L1295.2 700.2L1289.4 706.5L1283.9 712.2L1278.4 718.1L1273.1 724.3M1331.4 668L1324.7 676.8L1318.2 685.2L1311.8 693.3L1305.7 700.7L1299.9 707L1294.4 712.8L1288.9 718.7L1283.6 724.9M1341.9 668.2L1335.2 677L1328.7 685.5L1322.3 693.6L1316.2 701.1L1310.4 707.5L1304.8 713.3L1299.4 719.3L1294 725.5M1352.4 668.3L1345.7 677.1L1339.2 685.7L1332.8 693.9L1326.7 701.4L1320.9 707.9L1315.3 713.8L1309.9 719.8L1304.5 726.1M1362.9 668.3L1356.2 677.3L1349.7 685.9L1343.3 694.2L1337.1 701.8L1331.3 708.3L1325.8 714.3L1320.4 720.3L1315 726.7M1373.4 668.4L1366.7 677.4L1360.2 686.1L1353.8 694.5L1347.6 702.1L1341.8 708.7L1336.3 714.7L1330.9 720.8L1325.5 727.2M1383.9 668.4L1377.2 677.5L1370.7 686.3L1364.3 694.7L1358.1 702.4L1352.3 709L1346.8 715.1L1341.4 721.3L1336 727.7M1394.4 668.5L1387.7 677.6L1381.2 686.5L1374.8 694.9L1368.6 702.6L1362.8 709.4L1357.3 715.5L1351.9 721.7L1346.5 728.2M1404.9 668.5L1398.2 677.7L1391.7 686.6L1385.3 695.1L1379.1 702.9L1373.3 709.7L1367.8 715.9L1362.3 722.1L1357 728.7M1415.4 668.5L1408.7 677.8L1402.2 686.7L1395.8 695.3L1389.6 703.1L1383.8 710L1378.3 716.2L1372.8 722.5L1367.4 729.1M1425.9 668.5L1419.2 677.8L1412.7 686.8L1406.3 695.4L1400.1 703.3L1394.3 710.2L1388.8 716.5L1383.3 722.9L1377.9 729.6M1436.4 668.5L1429.7 677.9L1423.2 686.9L1416.8 695.6L1410.6 703.5L1404.8 710.5L1399.3 716.9L1393.8 723.3L1388.4 730M1446.9 668.4L1440.2 677.9L1433.7 687L1427.3 695.7L1421.1 703.7L1415.3 710.7L1409.8 717.2L1404.3 723.6L1398.9 730.4M1457.4 668.4L1450.7 677.9L1444.2 687.1L1437.8 695.8L1431.6 703.9L1425.8 711L1420.3 717.4L1414.8 724L1409.4 730.7M1467.9 668.3L1461.2 677.9L1454.7 687.1L1448.3 696L1442.1 704.1L1436.3 711.2L1430.8 717.7L1425.3 724.3L1419.9 731.1M1478.4 668.3L1471.7 677.9L1465.2 687.2L1458.8 696L1452.6 704.2L1446.8 711.4L1441.3 718L1435.8 724.6L1430.4 731.4M1488.9 668.2L1482.2 677.9L1475.7 687.2L1469.3 696.1L1463.1 704.3L1457.3 711.6L1451.8 718.2L1446.3 724.9L1440.9 731.8M1499.4 668.1L1492.7 677.9L1486.2 687.2L1479.8 696.2L1473.6 704.5L1467.8 711.7L1462.3 718.4L1456.8 725.2L1451.4 732.1M1509.9 668.1L1503.2 677.8L1496.7 687.3L1490.3 696.3L1484.1 704.6L1478.3 711.9L1472.8 718.6L1467.3 725.4L1461.9 732.4M1520.4 668L1513.7 677.8L1507.2 687.3L1500.8 696.3L1494.6 704.7L1488.8 712.1L1483.2 718.8L1477.8 725.7L1472.4 732.7M1530.9 667.9L1524.2 677.7L1517.7 687.3L1511.3 696.3L1505.1 704.7L1499.3 712.2L1493.7 719L1488.3 725.9L1482.9 732.9M1541.4 667.8L1534.7 677.7L1528.2 687.2L1521.8 696.4L1515.6 704.8L1509.8 712.3L1504.2 719.2L1498.8 726.1L1493.4 733.2M1551.9 667.7L1545.2 677.6L1538.7 687.2L1532.3 696.4L1526.1 704.9L1520.3 712.4L1514.7 719.4L1509.3 726.3L1503.9 733.5M1562.4 667.5L1555.7 677.5L1549.2 687.2L1542.8 696.4L1536.6 704.9L1530.8 712.5L1525.2 719.5L1519.8 726.5L1514.4 733.7M1572.9 667.4L1566.2 677.4L1559.7 687.1L1553.3 696.4L1547.1 705L1541.3 712.6L1535.7 719.7L1530.3 726.7L1524.9 733.9M1583.4 667.3L1576.7 677.4L1570.2 687.1L1563.8 696.4L1557.6 705L1551.8 712.7L1546.2 719.8L1540.8 726.9L1535.4 734.1M1593.9 667.1L1587.2 677.3L1580.7 687L1574.3 696.4L1568.1 705L1562.3 712.8L1556.7 719.9L1551.3 727.1L1545.9 734.3M1604.4 667L1597.7 677.2L1591.2 687L1584.8 696.4L1578.6 705.1L1572.8 712.8L1567.2 720L1561.8 727.2L1556.4 734.5M1614.9 666.9L1608.2 677.1L1601.7 686.9L1595.3 696.3L1589.1 705.1L1583.3 712.9L1577.7 720.1L1572.3 727.4L1566.9 734.7M1625.4 666.7L1618.7 676.9L1612.2 686.8L1605.8 696.3L1599.6 705.1L1593.8 712.9L1588.2 720.2L1582.8 727.5L1577.4 734.9M1635.9 666.6L1629.2 676.8L1622.7 686.7L1616.3 696.2L1610.1 705.1L1604.3 713L1598.7 720.3L1593.3 727.6L1587.9 735M1646.4 666.4L1639.7 676.7L1633.2 686.6L1626.8 696.2L1620.6 705L1614.8 713L1609.2 720.4L1603.8 727.7L1598.4 735.2M1656.9 666.2L1650.2 676.6L1643.7 686.5L1637.3 696.1L1631.1 705L1625.3 713L1619.7 720.4L1614.3 727.8L1608.9 735.3M1667.4 666.1L1660.7 676.4L1654.1 686.4L1647.8 696L1641.6 705L1635.8 713L1630.2 720.5L1624.8 727.9L1619.4 735.5M1677.9 665.9L1671.2 676.3L1664.6 686.3L1658.3 696L1652.1 704.9L1646.3 713L1640.7 720.5L1635.3 728L1629.9 735.6M1688.4 665.7L1681.7 676.1L1675.1 686.2L1668.8 695.9L1662.6 704.9L1656.8 713L1651.2 720.6L1645.8 728.1L1640.4 735.7M1698.9 665.5L1692.2 676L1685.6 686.1L1679.3 695.8L1673.1 704.8L1667.3 713L1661.7 720.6L1656.3 728.2L1650.9 735.8M1709.4 665.3L1702.7 675.8L1696.1 685.9L1689.8 695.7L1683.6 704.8L1677.8 713L1672.2 720.6L1666.8 728.2L1661.4 735.9M1719.9 665.1L1713.2 675.6L1706.6 685.8L1700.3 695.6L1694.1 704.7L1688.3 713L1682.7 720.6L1677.3 728.3L1671.9 736M1730.4 664.9L1723.7 675.5L1717.1 685.7L1710.8 695.5L1704.6 704.6L1698.8 712.9L1693.2 720.6L1687.8 728.3L1682.4 736M1740.9 664.7L1734.2 675.3L1727.6 685.5L1721.3 695.3L1715.1 704.5L1709.3 712.9L1703.7 720.6L1698.3 728.3L1692.9 736.1M1751.4 664.5L1744.7 675.1L1738.1 685.4L1731.8 695.2L1725.6 704.4L1719.8 712.8L1714.2 720.6L1708.8 728.4L1703.4 736.1M1761.8 664.3L1755.2 674.9L1748.6 685.2L1742.3 695.1L1736.1 704.3L1730.3 712.7L1724.7 720.6L1719.3 728.4L1713.9 736.2M1772.3 664.1L1765.7 674.7L1759.1 685L1752.8 694.9L1746.6 704.2L1740.8 712.7L1735.2 720.6L1729.8 728.4L1724.4 736.2M1782.8 663.8L1776.2 674.5L1769.6 684.8L1763.3 694.8L1757.1 704.1L1751.3 712.6L1745.7 720.5L1740.3 728.4L1734.9 736.3M1793.3 663.6L1786.7 674.3L1780.1 684.7L1773.8 694.6L1767.6 704L1761.8 712.5L1756.2 720.5L1750.8 728.4L1745.4 736.3M1803.8 663.4L1797.2 674.1L1790.6 684.5L1784.3 694.5L1778.1 703.8L1772.3 712.4L1766.7 720.4L1761.3 728.3L1755.9 736.3M1814.3 663.2L1807.7 673.9L1801.1 684.3L1794.7 694.3L1788.6 703.7L1782.8 712.3L1777.2 720.4L1771.8 728.3L1766.4 736.3M1824.8 662.9L1818.2 673.7L1811.6 684.1L1805.2 694.1L1799.1 703.5L1793.3 712.2L1787.7 720.3L1782.3 728.3L1776.9 736.3M1835.3 662.7L1828.7 673.4L1822.1 683.9L1815.7 693.9L1809.6 703.4L1803.8 712.1L1798.2 720.2L1792.8 728.2L1787.4 736.2M1845.8 662.4L1839.2 673.2L1832.6 683.7L1826.2 693.7L1820.1 703.2L1814.3 711.9L1808.7 720.1L1803.3 728.2L1797.9 736.2M1856.3 662.2L1849.7 673L1843.1 683.4L1836.7 693.5L1830.6 703.1L1824.8 711.8L1819.2 720L1813.8 728.1L1808.4 736.2M1866.8 661.9L1860.2 672.7L1853.6 683.2L1847.2 693.3L1841.1 702.9L1835.3 711.7L1829.7 719.9L1824.3 728L1818.9 736.1M1877.3 661.6L1870.7 672.5L1864.1 683L1857.7 693.1L1851.6 702.7L1845.8 711.5L1840.2 719.8L1834.8 727.9L1829.4 736.1M1887.8 661.4L1881.2 672.2L1874.6 682.7L1868.2 692.9L1862.1 702.5L1856.3 711.3L1850.7 719.7L1845.3 727.8L1839.9 736M1898.3 661.1L1891.7 671.9L1885.1 682.5L1878.7 692.7L1872.6 702.3L1866.8 711.2L1861.2 719.5L1855.8 727.8L1850.4 735.9M1908.8 660.8L1902.2 671.7L1895.6 682.3L1889.2 692.5L1883.1 702.1L1877.3 711L1871.7 719.4L1866.3 727.6L1860.9 735.9M1919.3 660.5L1912.6 671.4L1906.1 682L1899.7 692.2L1893.6 701.9L1887.8 710.8L1882.2 719.2L1876.8 727.5L1871.4 735.8M1929.8 660.3L1923.1 671.1L1916.6 681.7L1910.2 692L1904.1 701.7L1898.3 710.6L1892.7 719.1L1887.3 727.4L1881.9 735.7M1940.3 660L1933.6 670.9L1927.1 681.5L1920.7 691.7L1914.6 701.4L1908.8 710.4L1903.2 718.9L1897.8 727.3L1892.4 735.6M1950.8 659.7L1944.1 670.6L1937.6 681.2L1931.2 691.5L1925.1 701.2L1919.3 710.2L1913.7 718.8L1908.3 727.1L1902.9 735.5M1961.3 659.4L1954.6 670.3L1948.1 680.9L1941.7 691.2L1935.6 701L1929.8 710L1924.2 718.6L1918.8 727L1913.3 735.3M1971.8 659.1L1965.1 670L1958.6 680.6L1952.2 690.9L1946.1 700.7L1940.3 709.8L1934.7 718.4L1929.3 726.8L1923.8 735.2M1982.3 658.8L1975.6 669.7L1969.1 680.3L1962.7 690.6L1956.6 700.4L1950.8 709.6L1945.2 718.2L1939.8 726.6L1934.3 735M1992.8 658.4L1986.1 669.4L1979.6 680L1973.2 690.4L1967.1 700.2L1961.3 709.3L1955.7 718L1950.3 726.5L1944.8 734.9M2003.3 658.1L1996.6 669L1990.1 679.7L1983.7 690.1L1977.6 699.9L1971.8 709.1L1966.2 717.8L1960.8 726.3L1955.3 734.7M2013.8 657.8L2007.1 668.7L2000.6 679.4L1994.2 689.8L1988.1 699.6L1982.3 708.8L1976.7 717.5L1971.3 726.1L1965.8 734.6M2024.3 657.5L2017.6 668.4L2011.1 679.1L2004.7 689.4L1998.6 699.3L1992.8 708.6L1987.2 717.3L1981.8 725.9L1976.3 734.4M2034.8 657.1L2028.1 668.1L2021.6 678.8L2015.2 689.1L2009.1 699L2003.3 708.3L1997.7 717.1L1992.3 725.7L1986.8 734.2M2045.2 656.8L2038.6 667.7L2032.1 678.4L2025.7 688.8L2019.6 698.7L2013.7 708L2008.2 716.8L2002.8 725.4L1997.3 734M2055.7 656.4L2049.1 667.4L2042.6 678.1L2036.2 688.5L2030 698.4L2024.2 707.7L2018.7 716.5L2013.2 725.2L2007.8 733.8M2066.2 656.1L2059.6 667L2053 677.7L2046.7 688.1L2040.5 698.1L2034.7 707.4L2029.2 716.3L2023.7 725L2018.3 733.5M2076.7 655.7L2070.1 666.6L2063.5 677.4L2057.2 687.8L2051 697.7L2045.2 707.1L2039.7 716L2034.2 724.7L2028.8 733.3M2087.2 655.3L2080.6 666.3L2074 677L2067.7 687.4L2061.5 697.4L2055.7 706.8L2050.2 715.7L2044.7 724.4L2039.3 733.1M2097.7 655L2091.1 665.9L2084.5 676.6L2078.2 687L2072 697L2066.2 706.4L2060.7 715.4L2055.2 724.2L2049.8 732.8M2108.2 654.6L2101.6 665.5L2095 676.2L2088.6 686.7L2082.5 696.7L2076.7 706.1L2071.2 715.1L2065.7 723.9L2060.3 732.5M2118.7 654.2L2112 665.1L2105.5 675.8L2099.1 686.3L2093 696.3L2087.2 705.8L2081.7 714.8L2076.2 723.6L2070.8 732.3M2129.2 653.8L2122.5 664.7L2116 675.4L2109.6 685.9L2103.5 695.9L2097.7 705.4L2092.2 714.4L2086.7 723.3L2081.3 732M2139.7 653.4L2133 664.3L2126.5 675L2120.1 685.5L2114 695.5L2108.2 705L2102.7 714.1L2097.2 722.9L2091.8 731.7M2150.2 653L2143.5 663.9L2137 674.6L2130.6 685.1L2124.5 695.1L2118.7 704.6L2113.2 713.7L2107.7 722.6L2102.3 731.4M2160.7 652.6L2154 663.4L2147.5 674.2L2141.1 684.6L2135 694.7L2129.2 704.3L2123.7 713.4L2118.2 722.3L2112.8 731.1M2171.2 652.1L2164.5 663L2158 673.7L2151.6 684.2L2145.5 694.3L2139.7 703.8L2134.1 713L2128.7 721.9L2123.3 730.7M2181.7 651.7L2175 662.5L2168.5 673.3L2162.1 683.7L2156 693.8L2150.2 703.4L2144.6 712.6L2139.2 721.6L2133.8 730.4M2192.1 651.2L2185.5 662.1L2178.9 672.8L2172.6 683.3L2166.5 693.4L2160.7 703L2155.1 712.2L2149.7 721.2L2144.3 730M2202.6 650.8L2196 661.6L2189.4 672.3L2183.1 682.8L2176.9 692.9L2171.2 702.6L2165.6 711.8L2160.2 720.8L2154.8 729.6M2213.1 650.3L2206.5 661.1L2199.9 671.8L2193.6 682.3L2187.4 692.4L2181.6 702.1L2176.1 711.3L2170.7 720.4L2165.3 729.2M2223.6 649.8L2216.9 660.6L2210.4 671.3L2204 681.8L2197.9 692L2192.1 701.6L2186.6 710.9L2181.2 719.9L2175.8 728.8M2234.1 649.3L2227.4 660.1L2220.9 670.8L2214.5 681.3L2208.4 691.4L2202.6 701.1L2197.1 710.4L2191.7 719.5L2186.3 728.4M2244.6 648.8L2237.9 659.6L2231.4 670.3L2225 680.8L2218.9 690.9L2213.1 700.6L2207.6 710L2202.1 719.1L2196.7 728M2255.1 648.2L2248.4 659L2241.9 669.7L2235.5 680.2L2229.4 690.4L2223.6 700.1L2218.1 709.5L2212.6 718.6L2207.2 727.6M2265.6 647.7L2258.9 658.5L2252.4 669.1L2246 679.6L2239.9 689.8L2234.1 699.6L2228.6 709L2223.1 718.1L2217.7 727.1M2276 647.1L2269.4 657.9L2262.8 668.5L2256.5 679L2250.4 689.2L2244.6 699L2239 708.4L2233.6 717.6L2228.2 726.6M2286.5 646.5L2279.9 657.2L2273.3 667.9L2267 678.4L2260.8 688.7L2255.1 698.5L2249.5 707.9L2244.1 717.1L2238.7 726.1M2297 645.9L2290.3 656.6L2283.8 667.3L2277.4 677.8L2271.3 688L2265.5 697.9L2260 707.3L2254.6 716.5L2249.2 725.6M2307.5 645.2L2300.8 655.9L2294.3 666.6L2287.9 677.2L2281.8 687.4L2276 697.2L2270.5 706.7L2265.1 716L2259.7 725.1M2318 644.5L2311.3 655.2L2304.8 665.9L2298.4 676.5L2292.3 686.7L2286.5 696.6L2281 706.1L2275.6 715.4L2270.2 724.5M2328.4 643.7L2321.8 654.5L2315.2 665.2L2308.9 675.8L2302.8 686L2297 695.9L2291.5 705.5L2286 714.8L2280.6 723.9M2338.9 642.9L2332.2 653.7L2325.7 664.4L2319.3 675L2313.2 685.3L2307.5 695.3L2301.9 704.8L2296.5 714.2L2291.1 723.3M2349.4 641.9L2342.7 652.8L2336.2 663.6L2329.8 674.2L2323.7 684.6L2317.9 694.5L2312.4 704.2L2307 713.5L2301.6 722.7M2359.8 640.7L2353.2 651.9L2346.6 662.7L2340.3 673.4L2334.2 683.8L2328.4 693.8L2322.9 703.4L2317.5 712.8L2312.1 722M2370.1 639L2363.6 650.8L2357.1 661.8L2350.7 672.5L2344.6 682.9L2338.9 693L2333.4 702.7L2328 712.1L2322.6 721.4M2374 649.5L2367.5 660.7L2361.2 671.6L2355.1 682L2349.3 692.2L2343.8 701.9L2338.4 711.4L2333 720.6M2384.4 647.7L2378 659.6L2371.6 670.5L2365.6 681.1L2359.8 691.3L2354.3 701.1L2348.9 710.6L2343.5 719.9M2388.4 658.2L2382.1 669.4L2376 680.1L2370.3 690.3L2364.8 700.2L2359.4 709.8L2354 719.1M2398.7 656.3L2392.5 668.1L2386.5 679L2380.7 689.3L2375.2 699.3L2369.8 708.9L2364.5 718.3M2402.9 666.6L2396.9 677.8L2391.2 688.3L2385.7 698.3L2380.3 708L2374.9 717.5M2413.2 664.7L2407.3 676.4L2401.6 687.1L2396.1 697.3L2390.7 707.1L2385.4 716.6M2422.9 661.1L2417.7 674.8L2412 685.8L2406.6 696.1L2401.2 706L2395.8 715.6M2428 672.8L2422.4 684.4L2417 694.9L2411.6 704.9L2406.3 714.6M2437.9 669.4L2432.8 682.7L2427.4 693.5L2422.1 703.7L2416.7 713.5M2443 680.5L2437.8 692L2432.5 702.4L2427.2 712.3M2452.9 677.1L2448.1 690.2L2442.9 701L2437.6 711.1M2458.4 687.8L2453.3 699.3L2448 709.7M2468.2 684.2L2463.6 697.3L2458.4 708.1M2473.8 694.9L2468.7 706.3M2483.4 690.8L2479 704.2"/>
<path fill="none" stroke="url(#mg2)" stroke-width="3.5" d="M1264.7 656.9L1257.9 665.6M1282.1 649L1275.2 657.8L1268.4 666.3M1292.6 649.6L1285.7 658.3L1278.9 666.8M1310.2 641.1L1303.1 649.8L1296.2 658.5L1289.4 667.1M1328 631.9L1320.7 641L1313.6 649.9L1306.7 658.7L1299.9 667.4M1346 622L1338.5 631.5L1331.2 640.9L1324.1 649.9L1317.2 658.9L1310.4 667.7M1364.3 611.7L1356.5 621.2L1349 631.1L1341.7 640.7L1334.6 649.9L1327.7 659L1320.9 667.9M1383 601.5L1374.8 610.6L1367 620.6L1359.4 630.8L1352.2 640.5L1345.1 649.9L1338.2 659.1L1331.4 668M1393.4 599.9L1385.2 609.7L1377.5 620.1L1369.9 630.4L1362.7 640.4L1355.6 649.8L1348.7 659.1L1341.9 668.2M1403.8 598.6L1395.7 608.9L1387.9 619.5L1380.4 630.1L1373.2 640.2L1366.1 649.8L1359.2 659.1L1352.4 668.3M1414.2 597.6L1406.2 608.2L1398.4 619.1L1390.9 629.8L1383.7 640L1376.6 649.7L1369.7 659.1L1362.9 668.3M1424.7 596.7L1416.7 607.5L1408.9 618.6L1401.4 629.4L1394.2 639.8L1387.1 649.6L1380.2 659.1L1373.4 668.4M1435.2 595.8L1427.1 606.9L1419.4 618.1L1411.9 629.1L1404.7 639.6L1397.6 649.5L1390.7 659.1L1383.9 668.4M1445.6 595L1437.6 606.3L1429.9 617.7L1422.4 628.8L1415.2 639.3L1408.1 649.3L1401.2 659L1394.4 668.5M1456.1 594.3L1448.1 605.7L1440.4 617.3L1432.9 628.5L1425.6 639.1L1418.6 649.2L1411.7 659L1404.9 668.5M1466.6 593.6L1458.6 605.2L1450.9 616.8L1443.4 628.2L1436.1 638.9L1429.1 649.1L1422.2 658.9L1415.4 668.5M1477.1 592.9L1469.1 604.6L1461.4 616.4L1453.9 627.9L1446.6 638.7L1439.6 648.9L1432.7 658.8L1425.9 668.5M1487.5 592.2L1479.6 604.1L1471.9 616L1464.4 627.5L1457.1 638.4L1450.1 648.8L1443.2 658.8L1436.4 668.5M1498 591.6L1490.1 603.6L1482.4 615.6L1474.9 627.2L1467.6 638.2L1460.6 648.6L1453.7 658.7L1446.9 668.4M1508.5 591L1500.6 603.1L1492.9 615.2L1485.4 626.9L1478.1 638L1471.1 648.4L1464.2 658.6L1457.4 668.4M1519 590.4L1511 602.7L1503.3 614.9L1495.9 626.6L1488.6 637.7L1481.6 648.3L1474.7 658.5L1467.9 668.3M1529.5 589.9L1521.5 602.2L1513.8 614.5L1506.4 626.3L1499.1 637.5L1492.1 648.1L1485.2 658.3L1478.4 668.3M1540 589.3L1532 601.7L1524.3 614.1L1516.9 626L1509.6 637.3L1502.6 647.9L1495.7 658.2L1488.9 668.2M1550.5 588.8L1542.5 601.3L1534.8 613.7L1527.4 625.7L1520.1 637L1513.1 647.7L1506.2 658.1L1499.4 668.1M1560.9 588.3L1553 600.9L1545.3 613.4L1537.9 625.4L1530.6 636.8L1523.6 647.5L1516.7 658L1509.9 668.1M1571.4 587.7L1563.5 600.4L1555.8 613L1548.4 625.1L1541.1 636.5L1534.1 647.4L1527.2 657.8L1520.4 668M1581.9 587.3L1574 600L1566.3 612.7L1558.9 624.8L1551.6 636.3L1544.6 647.2L1537.7 657.7L1530.9 667.9M1592.4 586.8L1584.5 599.6L1576.8 612.3L1569.4 624.5L1562.1 636L1555.1 647L1548.2 657.5L1541.4 667.8M1602.9 586.3L1595 599.2L1587.3 612L1579.8 624.2L1572.6 635.8L1565.6 646.8L1558.7 657.4L1551.9 667.7M1613.4 585.8L1605.5 598.8L1597.8 611.6L1590.3 623.9L1583.1 635.5L1576.1 646.6L1569.2 657.2L1562.4 667.5M1623.9 585.4L1616 598.4L1608.3 611.3L1600.8 623.6L1593.6 635.3L1586.6 646.3L1579.7 657L1572.9 667.4M1634.4 585L1626.5 598.1L1618.8 610.9L1611.3 623.3L1604.1 635L1597.1 646.1L1590.2 656.9L1583.4 667.3M1644.9 584.5L1636.9 597.7L1629.3 610.6L1621.8 623L1614.6 634.8L1607.6 645.9L1600.7 656.7L1593.9 667.1M1655.3 584.1L1647.4 597.3L1639.8 610.3L1632.3 622.7L1625.1 634.5L1618.1 645.7L1611.2 656.5L1604.4 667M1665.8 583.7L1657.9 597L1650.3 610L1642.8 622.4L1635.6 634.3L1628.5 645.5L1621.7 656.3L1614.9 666.9M1676.3 583.3L1668.4 596.6L1660.8 609.6L1653.3 622.1L1646.1 634L1639 645.3L1632.1 656.1L1625.4 666.7M1686.8 582.9L1678.9 596.2L1671.3 609.3L1663.8 621.9L1656.6 633.7L1649.5 645L1642.6 656L1635.9 666.6M1697.3 582.5L1689.4 595.9L1681.8 609L1674.3 621.6L1667.1 633.5L1660 644.8L1653.1 655.8L1646.4 666.4M1707.8 582.2L1699.9 595.6L1692.2 608.7L1684.8 621.3L1677.6 633.2L1670.5 644.6L1663.6 655.6L1656.9 666.2M1718.3 581.8L1710.4 595.2L1702.7 608.4L1695.3 621L1688.1 632.9L1681 644.3L1674.1 655.4L1667.4 666.1M1728.8 581.5L1720.9 594.9L1713.2 608.1L1705.8 620.7L1698.6 632.7L1691.5 644.1L1684.6 655.1L1677.9 665.9M1739.3 581.1L1731.4 594.6L1723.7 607.7L1716.3 620.4L1709.1 632.4L1702 643.9L1695.1 654.9L1688.4 665.7M1749.8 580.8L1741.9 594.3L1734.2 607.4L1726.8 620.1L1719.6 632.2L1712.5 643.6L1705.6 654.7L1698.9 665.5M1760.3 580.4L1752.4 593.9L1744.7 607.1L1737.3 619.8L1730.1 631.9L1723 643.4L1716.1 654.5L1709.4 665.3M1770.8 580.1L1762.9 593.6L1755.2 606.8L1747.8 619.5L1740.6 631.6L1733.5 643.1L1726.6 654.3L1719.9 665.1M1781.3 579.8L1773.4 593.3L1765.7 606.5L1758.3 619.3L1751.1 631.3L1744 642.9L1737.1 654.1L1730.4 664.9M1791.8 579.5L1783.9 593L1776.2 606.2L1768.8 619L1761.6 631.1L1754.5 642.6L1747.6 653.8L1740.9 664.7M1802.3 579.2L1794.4 592.7L1786.7 606L1779.3 618.7L1772 630.8L1765 642.4L1758.1 653.6L1751.4 664.5M1812.8 578.9L1804.9 592.4L1797.2 605.7L1789.8 618.4L1782.5 630.5L1775.5 642.1L1768.6 653.4L1761.8 664.3M1823.3 578.6L1815.4 592.2L1807.7 605.4L1800.3 618.1L1793 630.3L1786 641.9L1779.1 653.1L1772.3 664.1M1833.8 578.4L1825.9 591.9L1818.2 605.1L1810.8 617.8L1803.5 630L1796.5 641.6L1789.6 652.9L1782.8 663.8M1844.2 578.1L1836.4 591.6L1828.7 604.8L1821.3 617.5L1814 629.7L1807 641.3L1800.1 652.6L1793.3 663.6M1854.7 577.9L1846.8 591.3L1839.2 604.5L1831.8 617.3L1824.5 629.4L1817.5 641.1L1810.6 652.4L1803.8 663.4M1865.2 577.6L1857.3 591.1L1849.7 604.3L1842.2 617L1835 629.1L1828 640.8L1821.1 652.1L1814.3 663.2M1875.7 577.4L1867.8 590.8L1860.2 604L1852.7 616.7L1845.5 628.9L1838.5 640.5L1831.6 651.9L1824.8 662.9M1886.2 577.1L1878.3 590.6L1870.7 603.7L1863.2 616.4L1856 628.6L1849 640.3L1842.1 651.6L1835.3 662.7M1896.7 576.9L1888.8 590.3L1881.2 603.4L1873.7 616.1L1866.5 628.3L1859.5 640L1852.6 651.4L1845.8 662.4M1907.2 576.7L1899.3 590.1L1891.7 603.2L1884.2 615.9L1877 628L1870 639.7L1863.1 651.1L1856.3 662.2M1917.7 576.5L1909.8 589.8L1902.2 602.9L1894.7 615.6L1887.5 627.7L1880.5 639.4L1873.6 650.8L1866.8 661.9M1928.2 576.3L1920.3 589.6L1912.7 602.6L1905.2 615.3L1898 627.5L1891 639.2L1884.1 650.5L1877.3 661.6M1938.7 576.1L1930.8 589.4L1923.2 602.4L1915.7 615L1908.5 627.2L1901.5 638.9L1894.6 650.3L1887.8 661.4M1949.2 575.9L1941.3 589.1L1933.7 602.1L1926.2 614.7L1919 626.9L1912 638.6L1905.1 650L1898.3 661.1M1959.7 575.7L1951.8 588.9L1944.2 601.9L1936.7 614.5L1929.5 626.6L1922.5 638.3L1915.6 649.7L1908.8 660.8M1970.2 575.6L1962.3 588.7L1954.7 601.6L1947.2 614.2L1940 626.3L1933 638L1926.1 649.4L1919.3 660.5M1980.7 575.4L1972.8 588.5L1965.2 601.4L1957.7 613.9L1950.5 626L1943.5 637.7L1936.6 649.1L1929.8 660.3M1991.2 575.3L1983.3 588.3L1975.6 601.1L1968.2 613.6L1961 625.7L1953.9 637.4L1947.1 648.8L1940.3 660M2001.7 575.1L1993.8 588.1L1986.1 600.9L1978.7 613.4L1971.5 625.4L1964.4 637.1L1957.6 648.5L1950.8 659.7M2012.2 575L2004.3 587.9L1996.6 600.7L1989.2 613.1L1982 625.1L1974.9 636.8L1968.1 648.2L1961.3 659.4M2022.7 574.9L2014.8 587.7L2007.1 600.4L1999.7 612.8L1992.5 624.8L1985.4 636.5L1978.5 647.9L1971.8 659.1M2033.2 574.8L2025.3 587.6L2017.6 600.2L2010.2 612.5L2003 624.6L1995.9 636.2L1989 647.6L1982.3 658.8M2043.7 574.7L2035.8 587.4L2028.1 600L2020.7 612.3L2013.5 624.3L2006.4 635.9L1999.5 647.3L1992.8 658.4M2054.2 574.7L2046.3 587.2L2038.6 599.7L2031.2 612L2024 624L2016.9 635.6L2010 647L2003.3 658.1M2064.7 574.6L2056.8 587.1L2049.1 599.5L2041.7 611.7L2034.5 623.7L2027.4 635.3L2020.5 646.6L2013.8 657.8M2075.2 574.5L2067.3 586.9L2059.6 599.3L2052.2 611.5L2044.9 623.4L2037.9 634.9L2031 646.3L2024.3 657.5M2085.7 574.5L2077.8 586.8L2070.1 599.1L2062.7 611.2L2055.4 623.1L2048.4 634.6L2041.5 646L2034.8 657.1M2096.2 574.5L2088.3 586.7L2080.6 598.9L2073.2 610.9L2065.9 622.8L2058.9 634.3L2052 645.6L2045.2 656.8M2106.7 574.5L2098.8 586.6L2091.1 598.7L2083.7 610.7L2076.4 622.4L2069.4 634L2062.5 645.3L2055.7 656.4M2117.2 574.5L2109.3 586.5L2101.6 598.5L2094.2 610.4L2086.9 622.1L2079.9 633.6L2073 644.9L2066.2 656.1M2127.7 574.6L2119.8 586.4L2112.1 598.3L2104.7 610.1L2097.4 621.8L2090.4 633.3L2083.5 644.6L2076.7 655.7M2138.2 574.6L2130.3 586.3L2122.6 598.1L2115.2 609.9L2107.9 621.5L2100.9 633L2094 644.2L2087.2 655.3M2148.7 574.7L2140.8 586.2L2133.1 597.9L2125.7 609.6L2118.4 621.2L2111.4 632.6L2104.5 643.9L2097.7 655M2159.2 574.9L2151.3 586.1L2143.6 597.7L2136.2 609.4L2128.9 620.9L2121.9 632.3L2115 643.5L2108.2 654.6M2169.7 575L2161.8 586.1L2154.1 597.5L2146.6 609.1L2139.4 620.6L2132.4 631.9L2125.5 643.1L2118.7 654.2M2180.2 575.2L2172.3 586.1L2164.6 597.4L2157.1 608.8L2149.9 620.3L2142.9 631.6L2136 642.7L2129.2 653.8M2190.7 575.5L2182.8 586.1L2175.1 597.2L2167.6 608.6L2160.4 619.9L2153.4 631.2L2146.5 642.4L2139.7 653.4M2201.2 575.8L2193.3 586.1L2185.6 597.1L2178.1 608.3L2170.9 619.6L2163.8 630.8L2156.9 642L2150.2 653M2211.7 576.3L2203.8 586.2L2196.1 597L2188.6 608.1L2181.4 619.3L2174.3 630.5L2167.4 641.6L2160.7 652.6M2222.2 576.9L2214.3 586.3L2206.6 596.8L2199.1 607.8L2191.9 619L2184.8 630.1L2177.9 641.1L2171.2 652.1M2232.6 577.8L2224.8 586.5L2217.1 596.7L2209.6 607.6L2202.4 618.6L2195.3 629.7L2188.4 640.7L2181.7 651.7M2235.3 586.7L2227.6 596.6L2220.1 607.3L2212.9 618.3L2205.8 629.3L2198.9 640.3L2192.1 651.2M2245.8 587.1L2238.1 596.6L2230.6 607.1L2223.4 618L2216.3 628.9L2209.4 639.9L2202.6 650.8M2256.3 587.9L2248.6 596.6L2241.1 606.9L2233.9 617.6L2226.8 628.5L2219.9 639.4L2213.1 650.3M2259.1 596.6L2251.6 606.6L2244.4 617.3L2237.3 628.1L2230.4 638.9L2223.6 649.8M2269.6 596.7L2262.1 606.4L2254.8 616.9L2247.8 627.6L2240.9 638.5L2234.1 649.3M2272.6 606.2L2265.3 616.5L2258.3 627.2L2251.4 638L2244.6 648.8M2283.1 606L2275.8 616.1L2268.8 626.7L2261.9 637.5L2255.1 648.2M2293.6 605.8L2286.3 615.7L2279.3 626.2L2272.3 636.9L2265.6 647.7M2296.8 615.3L2289.7 625.7L2282.8 636.4L2276 647.1M2307.3 614.9L2300.2 625.2L2293.3 635.8L2286.5 646.5M2310.7 624.6L2303.8 635.2L2297 645.9M2321.2 623.9L2314.3 634.5L2307.5 645.2M2331.7 623L2324.7 633.8L2318 644.5M2335.2 633L2328.4 643.7M2345.7 631.9L2338.9 642.9"/>
<path fill="none" stroke="url(#mg2)" stroke-width="3.0" d="M1402.1 592.1L1393.4 599.9M1421.7 583L1412.3 589.9L1403.8 598.6M1441.9 572.1L1431.8 580.1L1422.7 588.3L1414.2 597.6M1462.5 558.8L1451.8 568.6L1442.1 578.1L1433.1 586.9L1424.7 596.7M1483.4 544L1472.2 555L1462 566.2L1452.4 576.4L1443.5 585.8L1435.2 595.8M1504.6 527.8L1493.1 540L1482.4 552.3L1472.3 564.3L1462.8 574.9L1454 584.7L1445.6 595M1526.2 510.3L1514.3 523.7L1503.1 537L1492.6 550L1482.7 562.5L1473.3 573.6L1464.4 583.7L1456.1 594.3M1535.7 506L1524.3 520.4L1513.3 534.4L1502.9 548L1493.1 560.9L1483.7 572.4L1474.9 582.8L1466.6 593.6M1545.7 502.6L1534.4 517.6L1523.6 532.2L1513.3 546.2L1503.5 559.5L1494.1 571.2L1485.4 581.9L1477.1 592.9M1555.7 499.6L1544.6 515.2L1533.9 530.1L1523.7 544.5L1513.9 558.1L1504.6 570.2L1495.8 581L1487.5 592.2M1565.9 496.9L1554.8 512.9L1544.2 528.3L1534 543L1524.3 556.8L1515 569.1L1506.3 580.2L1498 591.6M1576.1 494.4L1565.1 510.8L1554.6 526.5L1544.4 541.5L1534.7 555.6L1525.5 568.2L1516.8 579.5L1508.5 591M1586.3 492.2L1575.5 508.9L1564.9 524.9L1554.8 540.2L1545.2 554.5L1535.9 567.2L1527.2 578.7L1519 590.4M1596.6 490L1585.8 507.1L1575.3 523.4L1565.3 538.9L1555.6 553.4L1546.4 566.3L1537.7 578L1529.5 589.9M1606.9 488.1L1596.2 505.4L1585.7 521.9L1575.7 537.6L1566.1 552.4L1556.9 565.5L1548.2 577.4L1540 589.3M1617.3 486.2L1606.5 503.8L1596.1 520.5L1586.1 536.4L1576.5 551.4L1567.3 564.7L1558.7 576.7L1550.5 588.8M1627.6 484.5L1616.9 502.3L1606.5 519.2L1596.6 535.3L1587 550.4L1577.8 563.9L1569.2 576.1L1560.9 588.3M1638 482.8L1627.3 500.9L1617 518L1607 534.3L1597.4 549.5L1588.3 563.1L1579.6 575.4L1571.4 587.7M1648.4 481.3L1637.7 499.5L1627.4 516.8L1617.5 533.2L1607.9 548.6L1598.7 562.4L1590.1 574.8L1581.9 587.3M1658.8 479.8L1648.2 498.2L1637.8 515.7L1627.9 532.3L1618.4 547.8L1609.2 561.7L1600.6 574.3L1592.4 586.8M1669.2 478.5L1658.6 497L1648.3 514.6L1638.4 531.3L1628.8 547L1619.7 561L1611.1 573.7L1602.9 586.3M1679.6 477.2L1669 495.9L1658.7 513.6L1648.8 530.4L1639.3 546.2L1630.2 560.3L1621.6 573.1L1613.4 585.8M1690 476L1679.5 494.8L1669.2 512.6L1659.3 529.6L1649.8 545.5L1640.7 559.7L1632.1 572.6L1623.9 585.4M1700.5 474.8L1689.9 493.8L1679.7 511.7L1669.8 528.8L1660.2 544.7L1651.1 559.1L1642.5 572.1L1634.4 585M1710.9 473.8L1700.4 492.8L1690.1 510.8L1680.2 528L1670.7 544L1661.6 558.5L1653 571.6L1644.9 584.5M1721.4 472.8L1710.8 491.9L1700.6 510L1690.7 527.2L1681.2 543.4L1672.1 557.9L1663.5 571.1L1655.3 584.1M1731.8 471.9L1721.3 491.1L1711.1 509.2L1701.2 526.5L1691.7 542.7L1682.6 557.4L1674 570.6L1665.8 583.7M1742.3 471.1L1731.8 490.3L1721.5 508.5L1711.7 525.9L1702.2 542.1L1693.1 556.8L1684.5 570.2L1676.3 583.3M1752.8 470.4L1742.3 489.6L1732 507.8L1722.1 525.2L1712.6 541.5L1703.6 556.3L1695 569.7L1686.8 582.9M1763.3 469.7L1752.7 488.9L1742.5 507.2L1732.6 524.6L1723.1 541L1714.1 555.8L1705.5 569.3L1697.3 582.5M1773.7 469.1L1763.2 488.3L1753 506.6L1743.1 524L1733.6 540.4L1724.5 555.3L1716 568.9L1707.8 582.2M1784.2 468.6L1773.7 487.7L1763.5 506L1753.6 523.5L1744.1 539.9L1735 554.9L1726.5 568.5L1718.3 581.8M1794.7 468.1L1784.2 487.2L1773.9 505.5L1764.1 523L1754.6 539.4L1745.5 554.4L1737 568.1L1728.8 581.5M1805.2 467.7L1794.7 486.8L1784.4 505L1774.6 522.5L1765.1 539L1756 554L1747.5 567.7L1739.3 581.1M1815.7 467.4L1805.2 486.4L1794.9 504.6L1785.1 522.1L1775.6 538.5L1766.5 553.6L1757.9 567.3L1749.8 580.8M1826.2 467.1L1815.7 486L1805.4 504.2L1795.6 521.6L1786.1 538.1L1777 553.2L1768.4 567L1760.3 580.4M1836.7 467L1826.2 485.7L1815.9 503.9L1806.1 521.2L1796.6 537.7L1787.5 552.8L1778.9 566.6L1770.8 580.1M1847.2 466.8L1836.7 485.5L1826.4 503.6L1816.5 520.9L1807.1 537.3L1798 552.4L1789.4 566.3L1781.3 579.8M1857.7 466.8L1847.2 485.3L1836.9 503.3L1827 520.6L1817.5 537L1808.5 552.1L1799.9 566L1791.8 579.5M1868.2 466.8L1857.7 485.2L1847.4 503.1L1837.5 520.3L1828 536.7L1819 551.8L1810.4 565.7L1802.3 579.2M1878.7 466.9L1868.2 485.1L1857.9 502.9L1848 520L1838.5 536.4L1829.5 551.5L1820.9 565.4L1812.8 578.9M1889.2 467.1L1878.7 485.1L1868.4 502.7L1858.5 519.8L1849 536.1L1840 551.2L1831.4 565.1L1823.3 578.6M1899.7 467.3L1889.2 485.1L1878.9 502.6L1869 519.6L1859.5 535.8L1850.5 550.9L1841.9 564.8L1833.8 578.4M1910.2 467.6L1899.7 485.2L1889.4 502.5L1879.5 519.4L1870 535.6L1861 550.6L1852.4 564.6L1844.2 578.1M1920.7 468L1910.2 485.3L1899.9 502.5L1890 519.3L1880.5 535.4L1871.5 550.4L1862.9 564.3L1854.7 577.9M1931.2 468.5L1920.7 485.5L1910.4 502.5L1900.5 519.2L1891 535.2L1882 550.2L1873.4 564.1L1865.2 577.6M1941.7 469L1931.1 485.8L1920.9 502.6L1911 519.1L1901.5 535L1892.4 550L1883.9 563.9L1875.7 577.4M1952.1 469.6L1941.6 486.1L1931.4 502.7L1921.5 519.1L1912 534.9L1902.9 549.8L1894.4 563.6L1886.2 577.1M1962.6 470.3L1952.1 486.5L1941.9 502.9L1932 519L1922.5 534.8L1913.4 549.6L1904.9 563.4L1896.7 576.9M1973.1 471.1L1962.6 486.9L1952.4 503.1L1942.5 519.1L1933 534.7L1923.9 549.4L1915.4 563.2L1907.2 576.7M1983.6 472L1973.1 487.4L1962.9 503.3L1953 519.1L1943.5 534.6L1934.4 549.3L1925.9 563.1L1917.7 576.5M1994 472.9L1983.6 488L1973.4 503.6L1963.5 519.2L1954 534.6L1944.9 549.2L1936.4 562.9L1928.2 576.3M2004.5 474L1994.1 488.7L1983.9 503.9L1974 519.4L1964.5 534.6L1955.4 549.1L1946.9 562.8L1938.7 576.1M2014.9 475.2L2004.6 489.4L1994.4 504.3L1984.5 519.5L1975 534.6L1965.9 549L1957.4 562.6L1949.2 575.9M2025.3 476.6L2015 490.2L2004.9 504.8L1995 519.7L1985.5 534.6L1976.4 548.9L1967.9 562.5L1959.7 575.7M2035.7 478.1L2025.5 491.1L2015.3 505.3L2005.5 520L1996 534.7L1986.9 548.9L1978.4 562.4L1970.2 575.6M2046 479.8L2035.9 492.1L2025.8 505.9L2016 520.3L2006.5 534.8L1997.4 548.9L1988.9 562.3L1980.7 575.4M2056.4 481.8L2046.4 493.3L2036.3 506.6L2026.5 520.7L2017 534.9L2007.9 548.9L1999.4 562.2L1991.2 575.3M2066.6 484.1L2056.8 494.5L2046.8 507.3L2037 521.1L2027.5 535.1L2018.4 548.9L2009.9 562.2L2001.7 575.1M2076.7 486.8L2067.2 496L2057.3 508.2L2047.5 521.5L2038 535.3L2028.9 549L2020.4 562.1L2012.2 575M2086.6 490.4L2077.6 497.7L2067.7 509.1L2058 522L2048.5 535.6L2039.4 549.1L2030.9 562.1L2022.7 574.9M2087.9 499.7L2078.2 510.2L2068.5 522.6L2059 535.9L2049.9 549.2L2041.4 562.1L2033.2 574.8M2098.1 502.1L2088.6 511.4L2078.9 523.3L2069.5 536.2L2060.4 549.3L2051.9 562.1L2043.7 574.7M2108.1 505.3L2099 512.8L2089.4 524.1L2080 536.6L2070.9 549.5L2062.4 562.1L2054.2 574.7M2109.3 514.5L2099.9 524.9L2090.5 537.1L2081.4 549.7L2072.9 562.2L2064.7 574.6M2119.6 516.7L2110.3 526L2101 537.6L2091.9 549.9L2083.4 562.2L2075.2 574.5M2129.7 519.6L2120.8 527.2L2111.5 538.2L2102.4 550.2L2093.9 562.3L2085.7 574.5M2131.2 528.6L2121.9 538.9L2112.9 550.5L2104.4 562.5L2096.2 574.5M2141.5 530.4L2132.4 539.7L2123.4 550.9L2114.9 562.6L2106.7 574.5M2151.6 533.1L2142.9 540.7L2133.9 551.4L2125.4 562.8L2117.2 574.5M2153.3 541.9L2144.4 551.9L2135.9 563.1L2127.7 574.6M2163.7 543.5L2154.9 552.6L2146.4 563.4L2138.2 574.6M2173.9 545.9L2165.3 553.4L2156.9 563.7L2148.7 574.7M2175.8 554.4L2167.4 564.1L2159.2 574.9M2186.2 555.8L2177.8 564.6L2169.7 575M2196.4 558.1L2188.3 565.2L2180.2 575.2M2198.8 566L2190.7 575.5M2209.2 567.2L2201.2 575.8"/>
<path fill="none" stroke="url(#mg2)" stroke-width="2.5" d="M1560.6 475.1L1547.8 490.9L1535.7 506M1610.7 407.5L1597.8 431.1L1583.2 451.6L1569.6 469.7L1557.4 486.6L1545.7 502.6M1619.2 401.3L1606.6 425.4L1592.4 446.5L1579.2 465.3L1567.2 483L1555.7 499.6M1628.4 396.2L1616 420.6L1601.9 442.2L1589 461.6L1577.2 479.8L1565.9 496.9M1637.9 391.7L1625.6 416.4L1611.7 438.3L1598.9 458.3L1587.3 476.9L1576.1 494.4M1647.5 387.6L1635.4 412.6L1621.6 434.9L1609 455.2L1597.5 474.3L1586.3 492.2M1657.4 383.9L1645.3 409.1L1631.7 431.8L1619.1 452.5L1607.7 471.8L1596.6 490M1667.3 380.5L1655.3 405.9L1641.7 428.9L1629.3 449.9L1618 469.6L1606.9 488.1M1677.3 377.4L1665.3 402.9L1651.9 426.2L1639.5 447.5L1628.3 467.5L1617.3 486.2M1687.4 374.5L1675.5 400.2L1662.1 423.7L1649.8 445.3L1638.6 465.5L1627.6 484.5M1697.6 371.9L1685.7 397.6L1672.3 421.4L1660.1 443.2L1648.9 463.6L1638 482.8M1707.8 369.5L1695.9 395.3L1682.6 419.2L1670.4 441.2L1659.3 461.9L1648.4 481.3M1718.1 367.3L1706.2 393.2L1692.9 417.2L1680.7 439.4L1669.6 460.2L1658.8 479.8M1728.4 365.4L1716.5 391.2L1703.3 415.4L1691.1 437.8L1680 458.7L1669.2 478.5M1738.8 363.7L1726.9 389.5L1713.6 413.7L1701.5 436.2L1690.4 457.3L1679.6 477.2M1749.2 362.2L1737.2 387.9L1724 412.2L1711.9 434.8L1700.8 456L1690 476M1759.6 361L1747.6 386.5L1734.4 410.9L1722.3 433.5L1711.3 454.8L1700.5 474.8M1770 360L1758.1 385.4L1744.9 409.7L1732.7 432.3L1721.7 453.6L1710.9 473.8M1780.5 359.3L1768.5 384.4L1755.3 408.6L1743.2 431.3L1732.2 452.6L1721.4 472.8M1791 358.8L1779 383.6L1765.8 407.7L1753.7 430.4L1742.6 451.7L1731.8 471.9M1801.5 358.5L1789.5 383L1776.2 407L1764.1 429.6L1753.1 450.9L1742.3 471.1M1812 358.5L1800 382.6L1786.7 406.4L1774.6 428.9L1763.6 450.1L1752.8 470.4M1822.5 358.7L1810.5 382.4L1797.2 406L1785.1 428.3L1774 449.5L1763.3 469.7M1833 359.2L1821 382.4L1807.7 405.7L1795.6 427.9L1784.5 448.9L1773.7 469.1M1843.5 359.8L1831.5 382.6L1818.2 405.6L1806.1 427.6L1795 448.5L1784.2 468.6M1853.9 360.7L1842 383L1828.7 405.6L1816.6 427.4L1805.5 448.1L1794.7 468.1M1864.4 361.9L1852.5 383.5L1839.2 405.8L1827.1 427.3L1816 447.8L1805.2 467.7M1874.8 363.2L1862.9 384.3L1849.7 406.2L1837.6 427.3L1826.5 447.6L1815.7 467.4M1885.2 364.8L1873.4 385.2L1860.2 406.6L1848.1 427.5L1837 447.5L1826.2 467.1M1895.5 366.6L1883.8 386.3L1870.7 407.3L1858.6 427.7L1847.5 447.5L1836.7 467M1905.8 368.6L1894.3 387.6L1881.2 408L1869.1 428.1L1858 447.6L1847.2 466.8M1916.1 370.8L1904.6 389L1891.6 408.9L1879.5 428.6L1868.5 447.8L1857.7 466.8M1926.3 373.3L1915 390.7L1902.1 410L1890 429.2L1879 448.1L1868.2 466.8M1936.4 376.1L1925.4 392.6L1912.5 411.2L1900.5 429.9L1889.5 448.4L1878.7 466.9M1946.4 379.2L1935.6 394.6L1922.9 412.6L1911 430.7L1900 448.8L1889.2 467.1M1956.4 382.6L1945.9 396.9L1933.3 414.1L1921.4 431.7L1910.5 449.4L1899.7 467.3M1966.1 386.5L1956.1 399.5L1943.7 415.8L1931.9 432.8L1920.9 450L1910.2 467.6M1975.6 390.9L1966.2 402.3L1954 417.7L1942.3 434L1931.4 450.7L1920.7 468M1984.7 396.1L1976.2 405.5L1964.3 419.7L1952.7 435.4L1941.9 451.6L1931.2 468.5M1992.9 402.7L1986.1 409.1L1974.5 422.1L1963.1 436.9L1952.4 452.5L1941.7 469M1995.7 413.3L1984.7 424.6L1973.5 438.5L1962.8 453.5L1952.1 469.6M2004.9 418.3L1994.8 427.5L1983.8 440.4L1973.2 454.7L1962.6 470.3M2013.1 424.8L2004.8 430.8L1994.1 442.4L1983.7 456L1973.1 471.1M2014.5 434.7L2004.4 444.7L1994.1 457.4L1983.6 472M2023.9 439.4L2014.5 447.3L2004.4 459L1994 472.9M2024.6 450.3L2014.8 460.8L2004.5 474M2034.5 453.8L2025.1 462.8L2014.9 475.2M2044 458.1L2035.4 465L2025.3 476.6M2045.5 467.6L2035.7 478.1M2055.5 470.8L2046 479.8M2065.3 474.7L2056.4 481.8"/>
</g>
<defs><radialGradient id="gm1" gradientUnits="userSpaceOnUse" cx="640" cy="300" r="95"><stop offset="0" stop-color="#fff"/><stop offset="1" stop-color="#000"/></radialGradient><radialGradient id="gm2" gradientUnits="userSpaceOnUse" cx="1045" cy="360" r="70"><stop offset="0" stop-color="#fff"/><stop offset="1" stop-color="#000"/></radialGradient><mask id="greenmask" maskUnits="userSpaceOnUse" x="420" y="148" width="1438" height="854"><rect x="560" y="200" width="200" height="200" fill="url(#gm1)"/><rect x="960" y="280" width="160" height="160" fill="url(#gm2)"/></mask><radialGradient id="gm3" gradientUnits="userSpaceOnUse" cx="1625" cy="420" r="70"><stop offset="0" stop-color="#fff"/><stop offset="1" stop-color="#000"/></radialGradient><mask id="greenmask2" maskUnits="userSpaceOnUse" x="420" y="148" width="1438" height="854"><rect x="1540" y="340" width="170" height="170" fill="url(#gm3)"/></mask></defs>
<g clip-path="url(#clt)"><path mask="url(#greenmask)" fill="none" stroke="#20e040" stroke-width="2.8" d="M611.2 295.4L603.8 314.9L597.2 334.6M619.1 288.5L611 307.3L603.1 326L596.1 342.9L589.7 359L583.8 374.5M627.8 282.6L619.4 301L611.1 319.2L603.7 335.7L596.8 351.3L589.8 366.1L582.7 380.1L575.6 392.9L568.8 404.4L562 415L555.5 425L549.4 434.6L544 444.1M636.9 277.5L628.5 295.8L620.1 313.8L612.7 330.2L605.7 345.8L598.7 360.6L591.6 374.6L584.7 387.6L578.1 399.6L571.7 411.1L565.5 422.2L559.8 433L554.5 443.5M646.5 273.1L638 291.3L629.6 309.3L622.2 325.8L615.3 341.5L608.4 356.6L601.5 370.9L594.6 384.3L588.2 397L582 409.1L576 420.8L570.2 432.3L565 443.5M656.2 269.2L647.7 287.4L639.4 305.5L632.1 322.2L625.2 338.1L618.4 353.5L611.6 368.2L604.9 382L598.5 395.1L592.4 407.8L586.4 420L580.7 432L575.5 443.6M666.2 265.8L657.7 284.1L649.3 302.2L642.1 319.1L635.3 335.4L628.6 351L621.9 366L615.2 380.3L609 393.8L602.9 406.9L596.9 419.5L591.2 431.9L586 443.9M676.2 262.8L667.8 281.2L659.5 299.4L652.3 316.6L645.6 333L638.9 349L632.2 364.3L625.6 378.9L619.4 392.8L613.4 406.2L607.4 419.3L601.7 431.9L596.5 444.2M686.4 260.2L678 278.6L669.7 297L662.5 314.4L655.9 331.1L649.3 347.3L642.6 362.9L636.1 377.8L629.9 392L623.9 405.8L617.9 419.1L612.2 432.1L607 444.7M696.6 257.9L688.2 276.4L680 294.9L672.9 312.5L666.3 329.4L659.7 345.9L653.1 361.8L646.5 376.9L640.4 391.5L634.3 405.5L628.4 419.1L622.7 432.4L617.5 445.1M706.9 255.9L698.5 274.5L690.3 293.2L683.3 310.9L676.7 328.1L670.1 344.7L663.5 360.9L657 376.3L650.9 391.1L644.8 405.3L638.9 419.2L633.2 432.7L627.9 445.7M717.3 254.1L708.9 272.8L700.7 291.7L693.7 309.6L687.1 326.9L680.6 343.8L674 360.1L667.5 375.8L661.4 390.8L655.3 405.3L649.4 419.4L643.7 433L638.4 446.2M727.7 252.7L719.3 271.5L711.1 290.4L704.1 308.5L697.6 326L691.1 343L684.5 359.6L678 375.4L671.9 390.6L665.8 405.4L659.9 419.6L654.2 433.5L648.9 446.8M738.1 251.5L729.8 270.3L721.6 289.4L714.6 307.6L708 325.2L701.6 342.4L695 359.2L688.5 375.2L682.4 390.6L676.3 405.5L670.4 420L664.7 434L659.4 447.4M748.6 250.6L740.2 269.5L732.1 288.6L725.1 306.9L718.5 324.7L712.1 342L705.5 358.9L699 375.1L692.9 390.7L686.8 405.7L680.9 420.3L675.2 434.5L669.9 448.1M759.1 249.9L750.7 268.8L742.5 288L735.5 306.4L729 324.3L722.5 341.7L716 358.8L709.5 375.1L703.4 390.8L697.3 406L691.4 420.8L685.7 435L680.4 448.8M769.6 249.5L761.2 268.4L753 287.6L746 306.1L739.5 324L733 341.6L726.5 358.7L720 375.2L713.9 391L707.8 406.4L701.9 421.2L696.2 435.6L690.8 449.5M780 249.3L771.7 268.2L763.5 287.4L756.5 305.9L750 323.9L743.5 341.6L737 358.8L730.5 375.4L724.3 391.3L718.3 406.8L712.4 421.8L706.6 436.2L701.3 450.2M790.5 249.4L782.2 268.2L774 287.5L767 305.9L760.5 324L754 341.7L747.5 359L741 375.7L734.8 391.7L728.8 407.2L722.8 422.3L717.1 436.9L711.8 450.9M964.1 286.4L956.8 300.7L949.7 315.6L943.4 330.1L937.5 344.9L931.4 360.2L925 375.9L918.7 391.5L912.6 406.8L906.7 421.9L900.7 436.9L895 451.5L889.7 465.5M973.7 290.6L966.7 304.4L959.6 318.8L953.6 332.9L947.7 347.3L941.7 362.3L935.4 377.7L929.1 393L923.1 408.1L917.1 423.1L911.2 438L905.5 452.5L900.1 466.5M983.2 295L976.4 308.3L969.6 322.2L963.6 335.8L957.9 349.8L952 364.4L945.7 379.5L939.5 394.6L933.5 409.5L927.5 424.4L921.6 439.1L915.9 453.6L910.6 467.5M992.7 299.6L986.1 312.4L979.5 325.8L973.7 338.9L968.1 352.4L962.2 366.6L956.1 381.4L949.8 396.3L943.9 411L938 425.7L932 440.3L926.4 454.6L921 468.5M1002 304.5L995.7 316.7L989.3 329.6L983.7 342.1L978.2 355.1L972.5 368.9L966.4 383.4L960.2 398L954.3 412.5L948.4 427L942.5 441.5L936.8 455.7L931.5 469.5M1011.2 309.6L1005.2 321.2L999 333.5L993.6 345.4L988.3 358L982.7 371.4L976.7 385.5L970.5 399.8L964.6 414.1L958.8 428.4L952.9 442.7L947.2 456.8L941.9 470.5M1020.2 314.9L1014.5 325.9L1008.7 337.6L1003.5 349L998.4 361L992.9 373.9L986.9 387.6L980.9 401.7L975 415.7L969.2 429.8L963.3 444L957.7 458L952.4 471.5M1029 320.6L1023.8 330.9L1018.2 341.9L1013.3 352.7L1008.4 364.1L1003 376.6L997.2 389.9L991.2 403.6L985.4 417.3L979.6 431.2L973.7 445.3L968.1 459.1L962.8 472.5M1037.6 326.7L1032.9 336.1L1027.7 346.5L1023.1 356.5L1018.3 367.4L1013.1 379.4L1007.4 392.3L1001.5 405.6L995.7 419.1L990 432.7L984.2 446.6L978.6 460.3L973.3 473.6M1045.8 333.2L1041.8 341.7L1037.1 351.2L1032.8 360.6L1028.3 370.9L1023.2 382.3L1017.6 394.7L1011.8 407.7L1006.1 420.8L1000.4 434.3L994.6 447.9L989 461.5L983.7 474.7M1053.6 340.3L1050.4 347.6L1046.3 356.2L1042.4 364.8L1038.1 374.4L1033.3 385.3L1027.8 397.3L1022.1 409.9L1016.4 422.7L1010.7 435.8L1005 449.3L999.4 462.7L994.2 475.7M1060.6 348.1L1058.8 354L1055.3 361.6L1051.9 369.3L1047.9 378.2L1043.3 388.4L1038 399.9L1032.3 412.1L1026.8 424.6L1021.1 437.5L1015.4 450.7L1009.8 463.9L1004.6 476.8M1066.7 360.9L1064.1 367.3L1061.3 374L1057.7 382.1L1053.3 391.7L1048.1 402.7L1042.6 414.4L1037.1 426.5L1031.5 439.1L1025.8 452.1L1020.3 465.2L1015.1 477.9M1073.8 368.6L1072.7 373.4L1070.5 379.1L1067.3 386.3L1063.2 395.2L1058.2 405.6L1052.8 416.8L1047.4 428.6L1041.8 440.9L1036.2 453.6L1030.7 466.4L1025.5 479M1080.7 380.1L1079.5 384.4L1076.9 390.7L1073 398.8L1068.2 408.6L1063 419.4L1057.7 430.7L1052.2 442.6L1046.6 455.1L1041.1 467.7L1036 480.1M1088 387.7L1088.3 390.2L1086.3 395.4L1082.8 402.6L1078.3 411.7L1073.1 422L1067.9 432.8L1062.5 444.4L1057 456.7L1051.5 469.1L1046.4 481.3M1096.6 396.7L1095.5 400.4L1092.5 406.7L1088.2 415L1083.3 424.7L1078.2 435.1L1072.9 446.3L1067.3 458.2L1061.9 470.4L1056.8 482.4M1104.1 404L1104.5 405.8L1102.1 411L1098.1 418.5L1093.4 427.5L1088.4 437.4L1083.2 448.3L1077.7 459.9L1072.4 471.8L1067.3 483.6M1113 411.9L1111.5 415.6L1108 422.2L1103.5 430.5L1098.6 439.8L1093.5 450.3L1088.1 461.5L1082.8 473.2L1077.7 484.8M1120.8 418.9L1120.7 420.7L1117.7 426.1L1113.5 433.6L1108.8 442.4L1103.8 452.3L1098.4 463.2L1093.2 474.6L1088.1 486"/></g>
<g clip-path="url(#crt)"><path mask="url(#greenmask2)" fill="none" stroke="#20e040" stroke-width="2.8" d="M1560.6 475.1L1547.8 490.9L1535.7 506L1524.3 520.4L1513.3 534.4L1502.9 548L1493.1 560.9M1610.7 407.5L1597.8 431.1L1583.2 451.6L1569.6 469.7L1557.4 486.6L1545.7 502.6L1534.4 517.6L1523.6 532.2L1513.3 546.2L1503.5 559.5M1619.2 401.3L1606.6 425.4L1592.4 446.5L1579.2 465.3L1567.2 483L1555.7 499.6L1544.6 515.2L1533.9 530.1L1523.7 544.5L1513.9 558.1M1628.4 396.2L1616 420.6L1601.9 442.2L1589 461.6L1577.2 479.8L1565.9 496.9L1554.8 512.9L1544.2 528.3L1534 543L1524.3 556.8M1637.9 391.7L1625.6 416.4L1611.7 438.3L1598.9 458.3L1587.3 476.9L1576.1 494.4L1565.1 510.8L1554.6 526.5L1544.4 541.5L1534.7 555.6M1647.5 387.6L1635.4 412.6L1621.6 434.9L1609 455.2L1597.5 474.3L1586.3 492.2L1575.5 508.9L1564.9 524.9L1554.8 540.2L1545.2 554.5M1657.4 383.9L1645.3 409.1L1631.7 431.8L1619.1 452.5L1607.7 471.8L1596.6 490L1585.8 507.1L1575.3 523.4L1565.3 538.9L1555.6 553.4M1667.3 380.5L1655.3 405.9L1641.7 428.9L1629.3 449.9L1618 469.6L1606.9 488.1L1596.2 505.4L1585.7 521.9L1575.7 537.6L1566.1 552.4M1677.3 377.4L1665.3 402.9L1651.9 426.2L1639.5 447.5L1628.3 467.5L1617.3 486.2L1606.5 503.8L1596.1 520.5L1586.1 536.4L1576.5 551.4M1687.4 374.5L1675.5 400.2L1662.1 423.7L1649.8 445.3L1638.6 465.5L1627.6 484.5L1616.9 502.3L1606.5 519.2L1596.6 535.3L1587 550.4M1697.6 371.9L1685.7 397.6L1672.3 421.4L1660.1 443.2L1648.9 463.6L1638 482.8L1627.3 500.9L1617 518L1607 534.3L1597.4 549.5M1707.8 369.5L1695.9 395.3L1682.6 419.2L1670.4 441.2L1659.3 461.9L1648.4 481.3L1637.7 499.5L1627.4 516.8L1617.5 533.2L1607.9 548.6M1718.1 367.3L1706.2 393.2L1692.9 417.2L1680.7 439.4L1669.6 460.2L1658.8 479.8L1648.2 498.2L1637.8 515.7L1627.9 532.3L1618.4 547.8M1728.4 365.4L1716.5 391.2L1703.3 415.4L1691.1 437.8L1680 458.7L1669.2 478.5L1658.6 497L1648.3 514.6L1638.4 531.3L1628.8 547M1738.8 363.7L1726.9 389.5L1713.6 413.7L1701.5 436.2L1690.4 457.3L1679.6 477.2L1669 495.9L1658.7 513.6L1648.8 530.4L1639.3 546.2M1749.2 362.2L1737.2 387.9L1724 412.2L1711.9 434.8L1700.8 456L1690 476L1679.5 494.8L1669.2 512.6L1659.3 529.6L1649.8 545.5M1759.6 361L1747.6 386.5L1734.4 410.9L1722.3 433.5L1711.3 454.8L1700.5 474.8L1689.9 493.8L1679.7 511.7L1669.8 528.8L1660.2 544.7"/></g>
<defs><radialGradient id="lblue" gradientUnits="userSpaceOnUse" cx="430" cy="570" r="230"><stop offset="0" stop-color="#0a1ee0" stop-opacity="1"/><stop offset="0.33" stop-color="#0a1ee0" stop-opacity="0.92"/><stop offset="1" stop-color="#0a1ee0" stop-opacity="0"/></radialGradient></defs>
<g clip-path="url(#clt)"><rect x="380" y="330" width="320" height="320" fill="url(#lblue)"/></g>
<defs><filter id="bl" x="-20%" y="-20%" width="140%" height="140%"><feGaussianBlur stdDeviation="9"/></filter></defs>
<g clip-path="url(#clt)"><path d="M590 352L589.5 353.5L589.1 354.9L588.8 356.3L588.4 357.6L587.9 359.1L587.4 360.8L586.8 362.7L586 365L585.1 367.7L584 370.9L582.9 374.3L581.7 377.9L580.4 381.6L579 385.3L577.5 388.8L576 392L574.4 395L572.6 397.8L570.8 400.5L568.9 403.1L566.9 405.8L564.9 408.4L563 411.1L561 414L559.1 417L557.2 420.1L555.2 423.2L553.3 426.4L551.3 429.6L549.3 432.8L547.2 435.9L545 439L542.7 442.1L540.3 445.2L537.8 448.2L535.3 451.3L532.7 454.3L530.2 457.3L527.6 460.2L525 463L522.4 465.7L519.8 468.4L517.1 471.1L514.4 473.6L511.8 476.1L509.1 478.5L506.5 480.8L504 483L501.6 485L499.2 486.8L496.9 488.4L494.7 490L492.4 491.6L490.1 493.2L487.6 495L485 497L482.4 499.2L479.8 501.7L477.1 504.2L474.4 506.9L471.5 509.5L468.3 512.1L464.8 514.7L461 517L456.7 519.2L451.9 521.3L446.9 523.3L441.6 525.2L436.1 527.2L430.6 529.1L425.2 531L420 533M1085 385L1088.8 388.8L1092.6 392.7L1096.5 396.7L1100.3 400.6L1104.1 404.5L1107.9 408.2L1111.5 411.7L1115 415L1118.4 418L1121.6 420.7L1124.7 423.2L1127.8 425.6L1130.8 427.9L1133.9 430.2L1136.9 432.6L1140 435L1143.1 437.5L1146.2 440.1L1149.4 442.6L1152.5 445.2L1155.6 447.7L1158.8 450.2L1161.9 452.6L1165 455L1168 457.2L1171 459.3L1173.8 461.3L1176.8 463.3L1179.7 465.3L1182.9 467.4L1186.3 469.6L1190 472L1194 474.6L1198.4 477.4L1203 480.3L1207.7 483.3L1212.5 486.3L1217.4 489.3L1222.2 492.2L1227 495L1231.6 497.6L1236.1 500.2L1240.6 502.7L1245.2 505.2L1249.8 507.6L1254.6 510.1L1259.7 512.5L1265 515L1270.7 517.5L1276.7 520.1L1282.9 522.7L1289.2 525.3L1295.7 527.9L1302.2 530.4L1308.7 532.7L1315 535L1321.2 537.1L1327.5 539.2L1333.8 541.1L1340 543L1346.2 544.8L1352.5 546.6L1358.8 548.3L1365 550L1371.4 551.7L1377.9 553.3L1384.5 554.9L1391.1 556.5L1397.6 558L1403.8 559.4L1409.6 560.8L1415 562L1419.9 563.1L1424.3 564.1L1428.3 565L1432.1 565.8L1435.8 566.6L1439.4 567.4L1443.1 568.2L1447 569" fill="none" stroke="#0a20d8" stroke-width="44" opacity="0.85" filter="url(#bl)"/></g>
<g clip-path="url(#crt)"><path d="M1447 569L1452.2 565.4L1457.4 561.8L1462.6 558.1L1467.8 554.5L1473 550.9L1478.1 547.2L1483.1 543.6L1488 540L1492.7 536.4L1497.4 532.9L1501.9 529.3L1506.3 525.8L1510.7 522.2L1515.1 518.6L1519.5 514.9L1524 511L1528.6 507L1533.3 502.7L1538 498.4L1542.8 494L1547.4 489.6L1551.8 485.3L1556.1 481L1560 477L1563.7 473L1567.1 469.1L1570.4 465.2L1573.5 461.4L1576.4 457.7L1579.1 454.2L1581.7 451L1584 448L1586.1 445.4L1587.8 443.1L1589.4 441L1590.8 439.2L1592 437.4L1593.3 435.7L1594.6 433.9L1596 432" fill="none" stroke="#0a20d8" stroke-width="44" opacity="0.85" filter="url(#bl)"/><path d="M1116 698L1118.8 697.4L1121.4 696.9L1123.9 696.4L1126.4 695.9L1129.1 695.3L1132.2 694.7L1135.8 693.9L1140 693L1144.9 692L1150.4 690.9L1156.4 689.7L1162.8 688.4L1169.4 687L1176.2 685.5L1183.1 683.8L1190 682L1197.1 680L1204.5 677.9L1212.2 675.6L1220 673.2L1227.8 670.7L1235.5 668.1L1242.9 665.6L1250 663L1256.5 660.5L1262.5 658.1L1268.2 655.7L1273.8 653.2L1279.5 650.6L1285.6 647.8L1292.4 644.6L1300 641L1308.7 636.9L1318.2 632.3L1328.4 627.4L1338.9 622.2L1349.6 616.9L1360.2 611.7L1370.4 606.7L1380 602L1389 597.6L1397.7 593.3L1406.1 589.2L1414.3 585.1L1422.4 581.1L1430.6 577.1L1438.7 573.1L1447 569" fill="none" stroke="#0a20d8" stroke-width="30" opacity="0.7" filter="url(#bl)"/></g>
<defs><clipPath id="cfun"><path d="M898 678L904.2 674.6L910.4 671.2L916.7 667.7L922.9 664.3L929.1 660.9L935.3 657.5L941.5 654.1L947.7 650.7L953.9 647.3L960 644L966.1 640.7L972.1 637.5L978.1 634.3L984.1 631.2L990.1 628L996.1 624.8L1002.1 621.7L1008 618.5L1014 615.3L1020 612L1026 608.7L1032.1 605.3L1038.2 601.8L1044.2 598.4L1050.3 594.9L1056.4 591.4L1062.4 588L1068.3 584.6L1074.2 581.2L1080 578L1085.8 574.7L1091.6 571.4L1097.3 568.1L1103.1 564.8L1108.8 561.5L1114.3 558.4L1119.8 555.4L1125 552.7L1130.1 550.2L1135 548L1139.5 546.1L1143.7 544.5L1147.6 543.1L1151.4 541.9L1155 540.9L1158.6 540L1162.4 539.3L1166.3 538.8L1170.5 538.3L1175 538L1179.8 537.8L1184.8 537.7L1189.9 537.7L1195.2 537.9L1200.6 538.2L1206.2 538.7L1211.9 539.3L1217.8 540.1L1223.8 541L1230 542L1236.3 543.2L1242.9 544.5L1249.6 546L1256.4 547.6L1263.4 549.4L1270.6 551.3L1277.8 553.3L1285.1 555.4L1292.5 557.7L1300 560L1307.5 562.5L1315.2 565.2L1323 568L1330.8 570.9L1338.8 573.9L1346.8 577.1L1355 580.3L1363.2 583.5L1371.5 586.7L1380 590L1388.6 593.3L1397.4 596.7L1406.3 600.1L1415.3 603.6L1424.4 607.2L1433.5 610.8L1442.7 614.3L1451.8 617.9L1461 621.5L1470 625L1470 790L898 790Z"/></clipPath></defs>
<defs><radialGradient id="fun" cx="1165" cy="702" r="1" gradientUnits="userSpaceOnUse" gradientTransform="translate(1165 702) scale(262 156) translate(-1165 -702)"><stop offset="0" stop-color="#40ff20"/><stop offset="0.22" stop-color="#28f020"/><stop offset="0.34" stop-color="#14c840" stop-opacity="0.97"/><stop offset="0.45" stop-color="#0a9a6a" stop-opacity="0.85"/><stop offset="0.65" stop-color="#0a7a92" stop-opacity="0.65"/><stop offset="0.85" stop-color="#0a68a4" stop-opacity="0.5"/><stop offset="1" stop-color="#0a60a8" stop-opacity="0.45"/></radialGradient></defs>
<g clip-path="url(#clt)"><g clip-path="url(#cfun)">
<rect x="880" y="530" width="580" height="240" fill="url(#fun)"/>
<path fill="none" stroke="#0a30d0" stroke-width="1.1" opacity="0.45" d="M1150 700.7L1150.7 700.3L1151.4 699.9L1152.1 699.5L1152.8 699.1L1153.5 698.7L1154.2 698.4L1154.8 698L1155.5 697.7L1156.2 697.3L1156.8 696.9L1157.5 696.6L1158.2 696.2L1158.9 695.8L1159.6 695.4L1160.2 695L1160.9 694.7L1161.5 694.3L1162.2 693.9L1162.8 693.6L1163.3 693.3L1163.8 693.1L1164.2 693L1164.6 692.9L1165.1 692.8L1165.6 692.8L1166.1 692.8L1166.7 692.8L1167.3 692.8L1168 692.9L1168.7 693L1169.4 693.1L1170.1 693.3L1170.9 693.5L1171.8 693.8L1172.6 694L1173.4 694.3L1174.3 694.6L1175.2 695L1176.1 695.3L1177.1 695.7L1178.1 696.1L1179.1 696.5L1180.1 696.9L1181.1 697.3L1182.2 697.7M1143.5 700.1L1144.5 699.5L1145.5 699L1146.5 698.4L1147.5 697.9L1148.5 697.3L1149.5 696.8L1150.4 696.3L1151.4 695.8L1152.4 695.3L1153.3 694.7L1154.3 694.2L1155.3 693.6L1156.2 693.1L1157.2 692.5L1158.2 692L1159.1 691.5L1160 690.9L1160.9 690.4L1161.8 690L1162.6 689.6L1163.3 689.3L1163.9 689.1L1164.5 689L1165.1 688.8L1165.8 688.8L1166.6 688.8L1167.4 688.8L1168.3 688.8L1169.3 689L1170.2 689.1L1171.3 689.3L1172.4 689.6L1173.5 689.9L1174.7 690.2L1175.9 690.6L1177.1 691L1178.4 691.4L1179.6 691.9L1181 692.5L1182.3 693L1183.7 693.5L1185.2 694.1L1186.6 694.6L1188.1 695.2L1189.6 695.8M1136.6 699.4L1137.9 698.7L1139.2 698L1140.5 697.3L1141.9 696.5L1143.2 695.8L1144.5 695.1L1145.7 694.5L1147 693.8L1148.3 693.1L1149.6 692.4L1150.8 691.7L1152.1 691L1153.4 690.2L1154.7 689.5L1155.9 688.8L1157.2 688.1L1158.4 687.4L1159.6 686.7L1160.7 686.1L1161.8 685.6L1162.7 685.2L1163.5 684.9L1164.3 684.8L1165.1 684.6L1166.1 684.5L1167.1 684.5L1168.2 684.5L1169.4 684.6L1170.6 684.8L1171.9 685L1173.3 685.2L1174.7 685.6L1176.2 685.9L1177.8 686.4L1179.4 686.9L1181 687.4L1182.7 688L1184.4 688.7L1186.1 689.4L1187.9 690.1L1189.7 690.8L1191.7 691.5L1193.6 692.3L1195.5 693L1197.5 693.8M1129.3 698.8L1131 697.9L1132.6 697L1134.3 696L1135.9 695.1L1137.6 694.2L1139.2 693.4L1140.8 692.5L1142.4 691.7L1144 690.8L1145.6 690L1147.2 689.1L1148.8 688.1L1150.5 687.2L1152.1 686.3L1153.6 685.4L1155.2 684.5L1156.7 683.6L1158.2 682.8L1159.7 682L1161 681.4L1162.2 680.9L1163.2 680.6L1164.1 680.3L1165.2 680.2L1166.3 680.1L1167.6 680L1169 680.1L1170.5 680.2L1172.1 680.3L1173.7 680.6L1175.4 680.9L1177.2 681.4L1179.1 681.8L1181.1 682.4L1183.1 683L1185.1 683.7L1187.2 684.5L1189.3 685.3L1191.5 686.1L1193.8 687L1196.1 687.9L1198.5 688.8L1200.9 689.8L1203.4 690.8L1205.8 691.7M1121.7 698.1L1123.7 697L1125.7 695.9L1127.8 694.8L1129.8 693.7L1131.8 692.6L1133.7 691.5L1135.7 690.5L1137.6 689.5L1139.5 688.5L1141.5 687.4L1143.4 686.3L1145.4 685.2L1147.4 684.1L1149.3 683L1151.2 681.9L1153.1 680.8L1155 679.7L1156.8 678.7L1158.5 677.8L1160.1 677L1161.5 676.5L1162.8 676L1164 675.7L1165.2 675.5L1166.6 675.4L1168.2 675.4L1169.9 675.4L1171.7 675.5L1173.6 675.7L1175.5 676.1L1177.6 676.5L1179.8 677L1182.1 677.6L1184.5 678.2L1186.9 679L1189.4 679.8L1191.9 680.7L1194.5 681.7L1197.1 682.8L1199.9 683.8L1202.7 684.9L1205.6 686L1208.5 687.2L1211.5 688.4L1214.5 689.5M1113.8 697.4L1116.2 696.1L1118.6 694.8L1121 693.5L1123.4 692.2L1125.7 690.9L1128 689.6L1130.3 688.4L1132.6 687.2L1134.9 686L1137.2 684.8L1139.5 683.5L1141.9 682.1L1144.2 680.8L1146.5 679.5L1148.7 678.2L1150.9 677L1153.1 675.7L1155.3 674.5L1157.3 673.4L1159.3 672.5L1160.9 671.8L1162.4 671.3L1163.8 671L1165.2 670.7L1166.9 670.6L1168.8 670.5L1170.8 670.6L1172.9 670.7L1175.1 671L1177.5 671.3L1179.9 671.8L1182.5 672.4L1185.2 673.1L1188 673.9L1190.9 674.8L1193.8 675.8L1196.8 676.9L1199.8 678.1L1203 679.3L1206.2 680.5L1209.5 681.8L1213 683.2L1216.5 684.5L1220 685.9L1223.4 687.2M1105.7 696.7L1108.5 695.2L1111.2 693.6L1114 692.1L1116.8 690.6L1119.5 689.1L1122.2 687.7L1124.8 686.3L1127.5 684.9L1130.1 683.5L1132.8 682L1135.5 680.5L1138.2 679L1140.9 677.4L1143.5 675.9L1146.1 674.5L1148.7 673L1151.3 671.5L1153.7 670.1L1156.1 668.8L1158.3 667.8L1160.3 667L1162 666.5L1163.6 666L1165.3 665.8L1167.2 665.6L1169.4 665.5L1171.7 665.6L1174.1 665.7L1176.7 666L1179.4 666.5L1182.3 667L1185.3 667.7L1188.4 668.5L1191.7 669.5L1195 670.5L1198.3 671.6L1201.8 672.9L1205.4 674.3L1209 675.7L1212.7 677.1L1216.6 678.6L1220.6 680.2L1224.6 681.7L1228.7 683.3L1232.7 684.9M1097.4 695.9L1100.5 694.2L1103.7 692.5L1106.8 690.7L1110 689L1113.1 687.3L1116.1 685.7L1119.2 684.1L1122.2 682.5L1125.2 680.9L1128.3 679.2L1131.3 677.5L1134.4 675.7L1137.5 674L1140.5 672.3L1143.5 670.6L1146.4 668.9L1149.3 667.2L1152.2 665.6L1154.9 664.2L1157.4 663L1159.6 662.1L1161.5 661.4L1163.4 661L1165.3 660.7L1167.5 660.5L1170 660.4L1172.6 660.4L1175.4 660.6L1178.4 661L1181.5 661.5L1184.7 662.1L1188.2 662.9L1191.7 663.8L1195.4 664.9L1199.2 666L1203 667.3L1207 668.8L1211 670.4L1215.2 672L1219.5 673.6L1223.9 675.3L1228.4 677.1L1233 678.9L1237.7 680.7L1242.2 682.5M1088.8 695.2L1092.4 693.2L1095.9 691.2L1099.5 689.3L1103 687.4L1106.5 685.5L1110 683.6L1113.4 681.8L1116.8 680L1120.2 678.2L1123.6 676.3L1127.1 674.4L1130.5 672.4L1134 670.4L1137.4 668.5L1140.7 666.6L1144 664.7L1147.3 662.8L1150.5 661L1153.6 659.4L1156.4 658.1L1158.9 657.1L1161.1 656.3L1163.2 655.8L1165.4 655.4L1167.9 655.2L1170.6 655.1L1173.6 655.2L1176.8 655.4L1180.1 655.8L1183.5 656.3L1187.2 657.1L1191.1 658L1195.1 659L1199.3 660.2L1203.5 661.5L1207.9 663L1212.3 664.6L1216.9 666.4L1221.6 668.2L1226.3 670L1231.3 671.9L1236.4 673.9L1241.6 676L1246.8 678L1252 680M1080.1 694.4L1084 692.2L1088 690L1091.9 687.8L1095.9 685.7L1099.8 683.5L1103.6 681.5L1107.5 679.5L1111.3 677.5L1115.1 675.4L1118.9 673.4L1122.7 671.2L1126.6 669L1130.4 666.8L1134.2 664.6L1138 662.6L1141.6 660.5L1145.3 658.3L1148.9 656.3L1152.3 654.5L1155.5 653L1158.2 651.9L1160.7 651.1L1163 650.5L1165.4 650.1L1168.2 649.8L1171.3 649.7L1174.6 649.8L1178.1 650.1L1181.8 650.5L1185.7 651.1L1189.8 651.9L1194.1 652.9L1198.6 654L1203.2 655.4L1207.9 656.8L1212.8 658.5L1217.7 660.3L1222.8 662.3L1228 664.3L1233.4 666.4L1238.9 668.5L1244.6 670.7L1250.4 673L1256.2 675.3L1262 677.5M1071.1 693.6L1075.5 691.2L1079.9 688.7L1084.3 686.3L1088.6 684L1092.9 681.6L1097.2 679.3L1101.4 677.1L1105.6 674.9L1109.8 672.6L1114 670.4L1118.3 668L1122.5 665.6L1126.8 663.1L1131 660.7L1135.1 658.4L1139.2 656.1L1143.2 653.7L1147.2 651.5L1151 649.5L1154.5 647.9L1157.5 646.6L1160.2 645.7L1162.8 645.1L1165.5 644.6L1168.5 644.3L1172 644.2L1175.6 644.3L1179.5 644.6L1183.6 645.1L1187.9 645.7L1192.4 646.6L1197.1 647.7L1202.1 649L1207.2 650.5L1212.5 652.1L1217.8 653.9L1223.3 655.9L1228.9 658.1L1234.7 660.3L1240.6 662.6L1246.7 665L1253 667.4L1259.4 669.9L1265.8 672.4L1272.2 674.9M1062 692.7L1066.8 690.1L1071.6 687.5L1076.4 684.8L1081.2 682.2L1085.9 679.6L1090.6 677.1L1095.2 674.7L1099.9 672.2L1104.5 669.8L1109.1 667.3L1113.7 664.7L1118.4 662L1123.1 659.3L1127.7 656.7L1132.2 654.2L1136.7 651.6L1141.1 649.1L1145.5 646.6L1149.6 644.4L1153.4 642.6L1156.8 641.2L1159.7 640.2L1162.5 639.5L1165.5 639L1168.9 638.7L1172.6 638.6L1176.6 638.7L1180.9 639L1185.4 639.5L1190.1 640.3L1195 641.3L1200.3 642.5L1205.7 643.9L1211.3 645.5L1217.1 647.2L1222.9 649.2L1229 651.4L1235.1 653.8L1241.4 656.3L1247.9 658.8L1254.6 661.4L1261.5 664.1L1268.6 666.8L1275.6 669.6L1282.6 672.3M1052.7 691.9L1058 689L1063.2 686.2L1068.4 683.3L1073.6 680.4L1078.8 677.6L1083.9 674.9L1089 672.2L1094 669.6L1099 666.9L1104 664.2L1109.1 661.3L1114.2 658.4L1119.3 655.5L1124.4 652.6L1129.3 649.9L1134.1 647.1L1139 644.3L1143.7 641.6L1148.2 639.2L1152.4 637.3L1156.1 635.8L1159.3 634.7L1162.3 633.9L1165.5 633.4L1169.2 633L1173.3 632.9L1177.7 633L1182.3 633.3L1187.2 633.9L1192.3 634.7L1197.7 635.8L1203.4 637.1L1209.4 638.6L1215.5 640.4L1221.8 642.3L1228.2 644.5L1234.7 646.9L1241.4 649.5L1248.3 652.2L1255.4 654.9L1262.7 657.7L1270.2 660.6L1277.9 663.6L1285.6 666.6L1293.2 669.6M1043.3 691.1L1049 687.9L1054.7 684.8L1060.3 681.7L1066 678.6L1071.6 675.6L1077.1 672.6L1082.6 669.7L1088 666.8L1093.5 663.9L1098.9 661L1104.4 657.9L1110 654.8L1115.5 651.6L1120.9 648.5L1126.3 645.5L1131.5 642.5L1136.8 639.4L1141.9 636.5L1146.8 633.9L1151.3 631.8L1155.3 630.2L1158.8 629L1162.1 628.2L1165.6 627.6L1169.6 627.3L1174 627.1L1178.8 627.2L1183.8 627.6L1189.1 628.2L1194.6 629.1L1200.5 630.2L1206.7 631.6L1213.1 633.3L1219.7 635.2L1226.5 637.3L1233.5 639.6L1240.6 642.2L1247.9 645.1L1255.3 648L1263 651L1270.9 654L1279.1 657.2L1287.4 660.4L1295.7 663.7L1304 666.9M1033.7 690.2L1039.8 686.8L1046 683.5L1052.1 680.1L1058.2 676.8L1064.2 673.5L1070.2 670.3L1076.1 667.2L1082 664.1L1087.8 660.9L1093.7 657.8L1099.6 654.4L1105.6 651L1111.6 647.6L1117.5 644.3L1123.2 641L1128.9 637.8L1134.6 634.5L1140.1 631.4L1145.4 628.6L1150.3 626.3L1154.5 624.6L1158.3 623.3L1161.9 622.4L1165.6 621.8L1169.9 621.4L1174.7 621.2L1179.8 621.3L1185.3 621.7L1191 622.4L1197 623.3L1203.3 624.6L1210 626.1L1216.9 627.9L1224.1 629.9L1231.4 632.2L1238.8 634.7L1246.5 637.5L1254.4 640.6L1262.4 643.7L1270.7 646.9L1279.2 650.2L1288.1 653.6L1297 657.1L1306 660.7L1315 664.1M1024 689.3L1030.6 685.7L1037.2 682.1L1043.7 678.5L1050.3 674.9L1056.7 671.4L1063.2 667.9L1069.5 664.6L1075.8 661.3L1082.1 657.9L1088.4 654.5L1094.8 650.9L1101.2 647.3L1107.6 643.6L1113.9 640L1120.1 636.5L1126.2 633L1132.3 629.5L1138.2 626.2L1143.9 623.1L1149.2 620.7L1153.8 618.8L1157.8 617.5L1161.6 616.5L1165.7 615.8L1170.3 615.4L1175.5 615.2L1180.9 615.4L1186.8 615.8L1192.9 616.5L1199.3 617.5L1206.1 618.8L1213.3 620.5L1220.7 622.4L1228.4 624.6L1236.3 627L1244.3 629.7L1252.6 632.8L1261 636L1269.7 639.4L1278.5 642.9L1287.7 646.4L1297.2 650.1L1306.8 653.8L1316.5 657.6L1326.1 661.3M1014.1 688.4L1021.2 684.6L1028.2 680.7L1035.2 676.8L1042.2 673L1049.2 669.2L1056 665.6L1062.8 662L1069.6 658.4L1076.3 654.8L1083.1 651.2L1089.9 647.3L1096.8 643.4L1103.6 639.5L1110.4 635.7L1117 631.9L1123.5 628.2L1130 624.5L1136.4 620.8L1142.4 617.6L1148.1 615L1153 613L1157.3 611.5L1161.4 610.5L1165.7 609.8L1170.6 609.3L1176.2 609.2L1182.1 609.3L1188.3 609.7L1194.8 610.5L1201.7 611.6L1209 613L1216.7 614.8L1224.6 616.8L1232.9 619.2L1241.3 621.8L1249.9 624.7L1258.7 627.9L1267.7 631.4L1277 635L1286.5 638.7L1296.3 642.5L1306.4 646.4L1316.7 650.5L1327.1 654.5L1337.3 658.5M1004.2 687.5L1011.6 683.4L1019.2 679.3L1026.7 675.2L1034.1 671.1L1041.5 667.1L1048.8 663.1L1056.1 659.3L1063.3 655.5L1070.4 651.7L1077.7 647.8L1084.9 643.7L1092.3 639.6L1099.6 635.4L1106.8 631.3L1113.8 627.3L1120.8 623.3L1127.7 619.3L1134.5 615.5L1140.9 612L1146.9 609.2L1152.2 607.1L1156.8 605.5L1161.2 604.4L1165.8 603.7L1171 603.2L1176.9 603L1183.2 603.2L1189.8 603.6L1196.8 604.5L1204.2 605.6L1211.9 607.1L1220.1 609L1228.6 611.2L1237.4 613.7L1246.3 616.5L1255.5 619.6L1264.9 623L1274.5 626.7L1284.4 630.6L1294.5 634.5L1305 638.6L1315.8 642.7L1326.8 647L1337.8 651.4L1348.7 655.6M994 686.6L1002 682.3L1010 677.9L1018 673.5L1025.9 669.1L1033.7 664.9L1041.5 660.7L1049.2 656.6L1056.9 652.6L1064.5 648.5L1072.2 644.4L1079.9 640.1L1087.7 635.6L1095.4 631.2L1103.1 626.8L1110.6 622.6L1118 618.4L1125.4 614.1L1132.6 610L1139.4 606.4L1145.8 603.4L1151.4 601.2L1156.3 599.5L1160.9 598.3L1165.8 597.5L1171.4 597L1177.7 596.8L1184.3 596.9L1191.4 597.5L1198.8 598.3L1206.6 599.6L1214.9 601.2L1223.5 603.2L1232.6 605.5L1241.9 608.1L1251.4 611.1L1261.2 614.4L1271.2 618.1L1281.4 622L1291.9 626.1L1302.7 630.3L1313.8 634.6L1325.3 639L1336.9 643.6L1348.7 648.2L1360.3 652.7M983.8 685.7L992.2 681.1L1000.7 676.4L1009.2 671.8L1017.6 667.2L1025.9 662.6L1034.1 658.2L1042.3 653.9L1050.4 649.6L1058.5 645.3L1066.6 640.9L1074.8 636.4L1083 631.7L1091.3 627L1099.4 622.3L1107.3 617.9L1115.2 613.4L1123 608.9L1130.6 604.5L1137.9 600.7L1144.6 597.5L1150.6 595.1L1155.7 593.3L1160.7 592.1L1165.9 591.2L1171.8 590.7L1178.4 590.5L1185.5 590.7L1193 591.2L1200.8 592.1L1209.1 593.4L1217.9 595.1L1227.1 597.2L1236.6 599.7L1246.5 602.5L1256.6 605.6L1266.9 609.1L1277.5 613L1288.4 617.2L1299.5 621.6L1310.9 626L1322.7 630.5L1334.8 635.3L1347.2 640.1L1359.7 644.9L1372 649.7M973.5 684.8L982.4 679.9L991.3 675L1000.2 670L1009.1 665.2L1017.9 660.4L1026.6 655.7L1035.3 651.2L1043.8 646.7L1052.4 642.1L1061 637.4L1069.6 632.6L1078.4 627.6L1087.1 622.7L1095.6 617.8L1104 613L1112.3 608.3L1120.6 603.5L1128.6 599L1136.3 594.9L1143.5 591.5L1149.7 589L1155.2 587.1L1160.4 585.8L1165.9 584.9L1172.2 584.3L1179.2 584.1L1186.7 584.3L1194.6 584.9L1202.9 585.8L1211.6 587.2L1220.9 589L1230.6 591.2L1240.7 593.9L1251.2 596.8L1261.8 600.1L1272.8 603.8L1283.9 607.9L1295.4 612.4L1307.2 617L1319.2 621.7L1331.7 626.4L1344.5 631.4L1357.6 636.5L1370.8 641.7L1383.8 646.8M963 683.8L972.4 678.7L981.8 673.5L991.2 668.3L1000.6 663.2L1009.9 658.1L1019.1 653.2L1028.2 648.4L1037.2 643.6L1046.2 638.8L1055.3 633.9L1064.4 628.8L1073.6 623.6L1082.8 618.3L1091.9 613.2L1100.7 608.2L1109.4 603.2L1118.2 598.2L1126.7 593.3L1134.8 589L1142.3 585.5L1148.9 582.8L1154.7 580.9L1160.2 579.5L1166 578.5L1172.6 577.9L1180 577.7L1187.8 577.9L1196.2 578.5L1204.9 579.5L1214.2 580.9L1223.9 582.8L1234.2 585.2L1244.9 588L1255.9 591.1L1267.1 594.6L1278.6 598.5L1290.4 602.8L1302.5 607.5L1315 612.3L1327.7 617.3L1340.8 622.3L1354.4 627.6L1368.2 633L1382 638.4L1395.8 643.7M952.4 682.9L962.3 677.5L972.2 672L982.1 666.5L992 661.1L1001.8 655.8L1011.4 650.6L1021 645.6L1030.5 640.6L1040 635.5L1049.6 630.3L1059.2 625L1068.9 619.5L1078.5 613.9L1088 608.5L1097.3 603.3L1106.5 598L1115.7 592.7L1124.6 587.6L1133.2 583.1L1141.1 579.4L1148.1 576.6L1154.1 574.5L1159.9 573L1166 572L1173 571.4L1180.8 571.2L1189 571.4L1197.8 572L1207 573.1L1216.8 574.6L1227 576.6L1237.8 579.1L1249 582L1260.6 585.3L1272.5 588.9L1284.6 593L1297 597.6L1309.7 602.5L1322.8 607.6L1336.2 612.8L1350 618.1L1364.3 623.7L1378.8 629.4L1393.4 635.1L1407.8 640.7M941.7 681.9L952.1 676.2L962.6 670.5L973 664.8L983.3 659.1L993.6 653.5L1003.7 648.1L1013.8 642.8L1023.8 637.5L1033.7 632.2L1043.7 626.7L1053.9 621.1L1064 615.3L1074.2 609.5L1084.2 603.8L1093.9 598.3L1103.6 592.8L1113.2 587.2L1122.6 581.9L1131.6 577.1L1139.9 573.2L1147.2 570.3L1153.6 568.1L1159.7 566.6L1166.1 565.5L1173.4 564.9L1181.6 564.6L1190.3 564.8L1199.5 565.5L1209.2 566.6L1219.4 568.2L1230.1 570.3L1241.5 572.9L1253.3 576L1265.4 579.4L1277.9 583.3L1290.6 587.6L1303.6 592.4L1317 597.5L1330.7 602.9L1344.8 608.3L1359.3 613.9L1374.3 619.8L1389.5 625.7L1404.9 631.7L1420 637.6M930.9 681L941.8 675L952.8 669L963.7 663L974.5 657L985.3 651.2L995.9 645.5L1006.5 639.9L1016.9 634.4L1027.4 628.8L1037.9 623.1L1048.5 617.2L1059.1 611.1L1069.8 605.1L1080.2 599.1L1090.5 593.3L1100.6 587.5L1110.7 581.7L1120.6 576.1L1130 571.1L1138.7 567L1146.3 563.9L1153 561.6L1159.4 560L1166.1 558.9L1173.8 558.2L1182.4 558L1191.5 558.2L1201.1 558.9L1211.3 560.1L1222 561.7L1233.3 563.9L1245.2 566.7L1257.5 569.9L1270.3 573.5L1283.3 577.5L1296.7 582L1310.3 587.1L1324.4 592.5L1338.7 598.1L1353.5 603.8L1368.7 609.7L1384.4 615.8L1400.4 622L1416.4 628.3L1432.4 634.5M920.1 680L931.5 673.7L942.9 667.4L954.3 661.1L965.7 654.9L976.9 648.8L988.1 642.8L999.1 637L1010.1 631.2L1021 625.4L1032 619.4L1043.1 613.3L1054.2 606.9L1065.3 600.5L1076.3 594.3L1087 588.2L1097.6 582.2L1108.2 576.1L1118.5 570.2L1128.3 565L1137.5 560.7L1145.5 557.5L1152.5 555.1L1159.2 553.4L1166.2 552.3L1174.2 551.6L1183.2 551.3L1192.7 551.5L1202.8 552.2L1213.4 553.5L1224.6 555.2L1236.4 557.5L1248.9 560.4L1261.8 563.7L1275.2 567.5L1288.8 571.7L1302.8 576.5L1317.1 581.7L1331.8 587.4L1346.8 593.3L1362.2 599.3L1378.2 605.4L1394.6 611.8L1411.3 618.3L1428.1 624.9L1444.8 631.4M909.1 679L921 672.4L932.9 665.9L944.9 659.3L956.7 652.8L968.5 646.4L980.1 640.2L991.6 634.1L1003.1 628L1014.5 622L1026 615.7L1037.6 609.3L1049.3 602.7L1060.9 596L1072.3 589.4L1083.5 583.1L1094.6 576.8L1105.6 570.4L1116.4 564.3L1126.7 558.9L1136.2 554.4L1144.6 551L1151.9 548.5L1158.9 546.8L1166.2 545.6L1174.6 544.8L1184 544.5L1193.9 544.7L1204.5 545.5L1215.6 546.8L1227.3 548.6L1239.6 551L1252.6 554L1266.2 557.5L1280.1 561.5L1294.4 565.9L1309 570.8L1323.9 576.3L1339.3 582.2L1355 588.4L1371.1 594.6L1387.7 601L1404.9 607.7L1422.4 614.5L1439.9 621.4L1457.3 628.2"/>
</g></g>
<defs><clipPath id="cbel"><path d="M1000 683L1007.1 683.7L1014.1 684.4L1021 685L1028 685.6L1035 686.3L1042.2 687.1L1049.5 688L1057 689L1064.3 690.3L1071.2 691.8L1078 693.5L1085.1 695.2L1092.7 696.9L1101.1 698.5L1110.8 699.9L1122 701L1135.3 701.7L1150.5 702.1L1167.2 702.3L1184.6 702.4L1202.2 702.5L1219.4 702.7L1235.5 703.2L1250 704L1262.8 705.2L1274.6 706.7L1285.6 708.4L1296.1 710.3L1306.2 712.3L1316.2 714.2L1326.4 716.2L1337 718L1337 900L1000 900Z"/></clipPath></defs>
<defs><clipPath id="ccone"><path d="M1060 680L1063.3 683.3L1066.7 686.8L1070.1 690.3L1073.4 693.8L1076.8 697.1L1080 700.3L1083.1 703.3L1086 706L1088.8 708.3L1091.4 710.3L1093.9 712L1096.3 713.6L1098.6 715.1L1100.8 716.6L1103 718.2L1105 720L1106.9 721.9L1108.8 723.9L1110.5 725.9L1112.2 728L1113.8 730.1L1115.2 732.1L1116.7 734.1L1118 736L1119.3 737.9L1120.4 739.7L1121.5 741.4L1122.5 743.2L1123.4 744.9L1124.3 746.6L1125.2 748.3L1126 750L1126.8 751.7L1127.5 753.3L1128.1 754.9L1128.7 756.6L1129.3 758.2L1129.8 759.8L1130.4 761.4L1131 763L1214 763L1214.7 761.5L1215.3 760L1215.9 758.7L1216.5 757.2L1217.2 755.8L1217.9 754.1L1218.9 752.2L1220 750L1221.4 747.4L1222.9 744.5L1224.6 741.3L1226.4 737.9L1228.3 734.5L1230.2 731.2L1232.1 728L1234 725L1235.8 722.2L1237.7 719.5L1239.6 716.9L1241.6 714.4L1243.5 711.9L1245.4 709.5L1247.2 707.2L1249 705L1250.7 702.9L1252.4 700.9L1254 699L1255.6 697.2L1257.2 695.4L1258.8 693.6L1260.4 691.8L1262 690Z"/></clipPath></defs>
<defs><linearGradient id="cg" x1="0" y1="702" x2="0" y2="763" gradientUnits="userSpaceOnUse"><stop offset="0" stop-color="#0a5a98"/><stop offset="0.28" stop-color="#0a7a6a"/><stop offset="0.48" stop-color="#10a850"/><stop offset="0.62" stop-color="#30d830"/><stop offset="0.73" stop-color="#70ec10"/><stop offset="0.76" stop-color="#b8ec00"/><stop offset="1" stop-color="#d8f000"/></linearGradient><linearGradient id="cy" x1="1131" y1="0" x2="1218" y2="0" gradientUnits="userSpaceOnUse"><stop offset="0" stop-color="#a8e400"/><stop offset="0.55" stop-color="#f0f000"/><stop offset="0.85" stop-color="#f8c000"/><stop offset="1" stop-color="#e88800"/></linearGradient></defs>
<g clip-path="url(#cbel)"><g clip-path="url(#ccone)">
<rect x="1050" y="670" width="220" height="100" fill="url(#cg)"/>
<path d="M1120 748L1224 748L1224 764L1120 764Z" fill="url(#cy)"/>
<path d="M1080 704 Q1170 716 1260 704M1080 712 Q1170 724 1260 712M1080 720 Q1170 732 1260 720M1080 728 Q1170 740 1260 728M1080 736 Q1170 748 1260 736" fill="none" stroke="#0a40c0" stroke-width="1.2" opacity="0.55"/>
</g></g>
<path d="M1132.0 763L1171.5 814M1135.8 763L1171.5 814M1139.6 763L1171.5 814M1143.4 763L1171.5 814M1147.2 763L1171.5 814M1151.0 763L1171.5 814M1154.9 763L1171.5 814M1158.7 763L1171.5 814M1162.5 763L1171.5 814M1166.3 763L1171.5 814M1170.1 763L1171.5 814M1173.9 763L1171.5 814M1177.7 763L1171.5 814M1181.5 763L1171.5 814M1185.3 763L1171.5 814M1189.1 763L1171.5 814M1193.0 763L1171.5 814M1196.8 763L1171.5 814M1200.6 763L1171.5 814M1204.4 763L1171.5 814M1208.2 763L1171.5 814M1212.0 763L1171.5 814" stroke="#ff0000" stroke-width="1" fill="none"/>
<path d="M1171 814L1163 969" stroke="#e8f000" stroke-width="2.2"/><path d="M1171 814L1163 969" stroke="#ff2020" stroke-width="0.6" stroke-dasharray="2 6"/>
<path d="M1163 969L1162 1002" stroke="#000" stroke-width="1"/>
<path d="M505 625L509.3 624.5L513.6 624L517.9 623.4L522.2 622.9L526.5 622.4L530.9 621.9L535.4 621.4L540 621L544.8 620.6L549.6 620.3L554.6 620L559.7 619.8L564.8 619.6L569.9 619.3L575 619.2L580 619L585 618.9L590 618.7L595 618.6L600 618.6L605 618.5L610 618.5L615 618.5L620 618.5L625 618.5L630 618.6L635 618.7L640 618.8L645 618.9L650 619.1L655 619.3L660 619.5L665 619.8L669.9 620.1L674.8 620.4L679.8 620.7L684.7 621.1L689.7 621.5L694.8 622L700 622.5L705.3 623L710.5 623.6L715.9 624.1L721.2 624.8L726.7 625.4L732.3 626.2L738.1 627L744 628L750.1 629.1L756.4 630.3L762.9 631.6L769.5 633L776.1 634.4L782.8 635.9L789.4 637.4L796 639L802.6 640.6L809.5 642.4L816.4 644.2L823.2 646.1L830 648L836.4 649.8L842.5 651.5L848 653L853 654.4L857.5 655.6L861.7 656.7L865.6 657.8L869.3 658.8L872.9 659.8L876.4 660.9L880 662L883.5 663.2L886.9 664.4L890.2 665.7L893.4 666.9L896.5 668.2L899.6 669.5L902.8 670.7L906 672" fill="none" stroke="#f0a000" stroke-width="1.2"/>
<path d="M906 672L911.7 672.8L917.3 673.5L922.9 674.3L928.6 675.1L934.2 675.8L940 676.6L945.9 677.3L952 678L958.3 678.7L964.8 679.3L971.4 679.9L978.1 680.5L984.9 681.1L991.7 681.7L998.4 682.3L1005 683L1011.5 683.7L1017.8 684.3L1024 684.9L1030.2 685.6L1036.6 686.3L1043.1 687.1L1049.9 688L1057 689L1064.5 690.2L1072.3 691.6L1080.4 693.1L1088.7 694.6L1097.1 696.2L1105.4 697.9L1113.8 699.5L1122 701" fill="none" stroke="#b0f000" stroke-width="1.6"/>
<path d="M1122 701L1138.3 701.3L1155 701.5L1171.8 701.6L1188.6 701.8L1205 702.1L1220.9 702.5L1236 703.1L1250 704L1263 705.2L1275.3 706.5L1286.9 708L1297.8 709.7L1308.2 711.5L1318.2 713.5L1327.7 715.7L1337 718L1345.7 720.7L1353.7 723.9L1361.2 727.4L1368.2 730.9L1375.1 734.4L1381.9 737.5L1388.8 740.1L1396 742L1403.3 743L1410.4 743.4L1417.4 743.2L1424.5 742.8L1431.7 742.1L1439.1 741.5L1446.9 741.1L1455 741L1463.6 741.2L1472.6 741.5L1482 741.9L1491.5 742.3L1501.2 742.8L1510.9 743.5L1520.5 744.2L1530 745L1539.5 745.9L1549.3 747L1559.2 748.2L1569.1 749.5L1578.7 750.8L1588 752.2L1596.8 753.6L1605 755L1612.4 756.3L1619.1 757.6L1625.4 758.9L1631.2 760.2L1637 761.6L1642.7 763.2L1648.7 765L1655 767L1661.7 769.5L1668.6 772.4L1675.7 775.6L1682.8 778.9L1689.9 782.1L1696.8 785.2L1703.6 787.9L1710 790L1715.7 791.5L1720.6 792.6L1725.1 793.2L1729.6 793.7L1734.4 794.1L1740 794.5L1746.7 795.1L1755 796L1765.4 797.2L1777.9 798.7L1791.7 800.3L1806.1 801.9L1820.6 803.6L1834.3 805.2L1846.7 806.7L1857 808L1865.2 809.1L1871.9 810.1L1877.4 811L1882.2 811.8L1886.5 812.6L1890.6 813.4L1895 814.2L1900 815" fill="none" stroke="#e0e000" stroke-width="1.4"/>
<g clip-path="url(#crt)"><path d="M1712 790L1716.9 788.4L1721.8 786.8L1726.6 785.2L1731.5 783.6L1736.4 782L1741.4 780.4L1746.6 778.7L1752 777L1757.6 775.2L1763.4 773.5L1769.4 771.7L1775.4 769.9L1781.6 768L1787.7 766.1L1793.9 764.1L1800 762L1806.3 759.7L1812.8 757.2L1819.5 754.6L1826.2 752L1832.6 749.4L1838.7 747L1844.2 744.8L1849 743L1853 741.6L1856.2 740.4L1858.9 739.5L1861.2 738.8L1863.4 738.1L1865.4 737.5L1867.6 736.8L1870 736L1870 830Z" fill="#0a5a9c" opacity="0.9"/></g>
<path d="M602 310L602.5 309.2L602.9 308.4L603.1 307.6L603.4 306.8L603.9 306L604.6 305.1L605.6 304.1L607 303L608.9 301.7L611.1 300.4L613.6 298.9L616.3 297.3L619.3 295.7L622.4 294.1L625.7 292.5L629 291L632.5 289.5L636.3 288L640.2 286.5L644.3 284.9L648.5 283.4L652.7 281.9L656.9 280.5L661 279L665 277.6L668.8 276.2L672.6 274.8L676.4 273.4L680.4 272.1L684.6 270.7L689.1 269.4L694 268L699.4 266.6L705.3 265.2L711.6 263.7L718 262.2L724.5 260.8L730.9 259.5L737.1 258.2L743 257L748.5 255.9L753.9 254.8L759.2 253.8L764.3 252.9L769.3 252L774.3 251.2L779.2 250.6L784 250L788.7 249.6L793.4 249.2L797.9 249L802.4 248.9L806.8 248.8L811.2 248.8L815.6 248.9L820 249L824.3 249.1L828.4 249.3L832.4 249.5L836.4 249.8L840.6 250.1L845 250.6L849.8 251.2L855 252L860.7 253L866.9 254L873.4 255.3L880.2 256.6L887.1 258.1L894.1 259.6L901.1 261.3L908 263L914.9 264.9L922 266.9L929.3 269L936.5 271.2L943.7 273.5L950.7 275.8L957.5 277.9L964 280L970.3 282L976.5 283.9L982.6 285.8L988.5 287.7L994.1 289.5L999.5 291.4L1004.5 293.2L1009 295L1013.1 296.8L1016.7 298.6L1019.9 300.3L1022.8 302.1L1025.5 303.8L1028.1 305.5L1030.5 307.3L1033 309L1035.4 310.7L1037.8 312.5L1039.9 314.2L1042 315.9L1043.9 317.6L1045.8 319.4L1047.4 321.2L1049 323L1050.4 324.9L1051.6 327L1052.7 329.1L1053.7 331.2L1054.6 333.3L1055.4 335.3L1056.2 337.2L1057 339L1057.8 340.6L1058.5 342.1L1059.1 343.5L1059.7 344.8L1060.3 346.1L1060.8 347.4L1061.4 348.7L1062 350" fill="none" stroke="#0a20e0" stroke-width="2"/>
<path d="M1608 410L1609.8 408.8L1611.6 407.5L1613.3 406.3L1615.1 405.1L1616.9 403.8L1618.8 402.6L1620.8 401.3L1623 400L1625.4 398.6L1628 397.2L1630.6 395.7L1633.4 394.2L1636.3 392.8L1639.2 391.4L1642.1 390.1L1645 389L1647.9 388L1650.9 387.2L1653.9 386.4L1656.9 385.8L1659.9 385.1L1663 384.5L1666 383.8L1669 383L1671.9 382.2L1674.7 381.3L1677.5 380.4L1680.2 379.6L1683.1 378.7L1686.2 377.8L1689.4 376.9L1693 376L1696.8 375.1L1700.9 374.2L1705.1 373.4L1709.5 372.5L1714.1 371.6L1718.9 370.8L1723.8 369.9L1729 369L1734.6 368.1L1740.7 367.2L1747.2 366.2L1753.8 365.2L1760.2 364.3L1766.4 363.5L1772.1 362.7L1777 362L1781 361.4L1784.1 360.8L1786.7 360.2L1789 359.8L1791.3 359.4L1793.9 359.1L1797 359L1801 359L1805.9 359.2L1811.3 359.7L1817.2 360.3L1823.5 361L1829.9 361.8L1836.4 362.6L1842.8 363.3L1849 364" fill="none" stroke="#0a20e0" stroke-width="2"/>
<g fill="#ff0000"><circle cx="603.7" cy="304.4" r="3.5"/><circle cx="617.5" cy="294.7" r="4.7"/><circle cx="634.3" cy="286.8" r="4.3"/><circle cx="647.7" cy="281.7" r="4.3"/><circle cx="669.2" cy="274.0" r="4.1"/><circle cx="683.0" cy="269.2" r="5.0"/><circle cx="699.6" cy="264.6" r="5.1"/><circle cx="718.7" cy="260.1" r="5.1"/><circle cx="737.0" cy="256.2" r="5.0"/><circle cx="755.1" cy="252.6" r="4.8"/><circle cx="772.3" cy="249.5" r="3.8"/><circle cx="788.1" cy="247.6" r="4.3"/><circle cx="811.5" cy="246.8" r="4.8"/><circle cx="830.7" cy="247.4" r="3.9"/><circle cx="846.2" cy="248.8" r="4.6"/><circle cx="863.4" cy="251.4" r="4.7"/><circle cx="887.4" cy="256.2" r="3.7"/><circle cx="903.7" cy="259.9" r="4.2"/><circle cx="921.5" cy="264.7" r="4.1"/><circle cx="932.5" cy="268.0" r="4.7"/><circle cx="952.6" cy="274.4" r="5.1"/><circle cx="963.0" cy="277.7" r="4.0"/><circle cx="976.1" cy="281.8" r="5.1"/><circle cx="998.5" cy="289.0" r="4.3"/><circle cx="1009.8" cy="293.4" r="4.0"/><circle cx="1028.8" cy="304.1" r="4.3"/><circle cx="1041.3" cy="313.3" r="4.0"/><circle cx="1050.0" cy="322.4" r="4.1"/><circle cx="1059.6" cy="342.6" r="4.8"/><circle cx="1611.3" cy="405.7" r="4.8"/><circle cx="1628.9" cy="394.7" r="4.8"/><circle cx="1638.4" cy="389.8" r="5.0"/><circle cx="1655.0" cy="384.2" r="4.8"/><circle cx="1667.1" cy="381.5" r="4.6"/><circle cx="1682.1" cy="377.0" r="4.9"/><circle cx="1701.1" cy="372.2" r="4.7"/><circle cx="1722.9" cy="368.0" r="3.4"/><circle cx="1740.1" cy="365.3" r="3.5"/><circle cx="1759.6" cy="362.4" r="4.9"/><circle cx="1771.5" cy="360.8" r="3.8"/><circle cx="1783.5" cy="358.9" r="3.8"/><circle cx="1796.0" cy="357.0" r="4.8"/><circle cx="1806.6" cy="357.3" r="4.4"/><circle cx="1832.0" cy="360.0" r="3.9"/></g>
<path d="M603.7 301.4l2.6 -9.5M617.5 291.7l4.9 -7.9M634.3 283.8l-6.2 -6.4M647.7 278.7l1.2 -9.9M669.2 271.0l-6.2 -6.3M683.0 266.2l-4.8 -8.0M699.6 261.6l-6.5 -5.8M718.7 257.1l-4.6 -8.2M737.0 253.2l-5.6 -7.2M755.1 249.6l1.1 -9.9M772.3 246.5l-1.3 -9.9M788.1 244.6l-3.0 -9.3M811.5 243.8l-3.6 -8.9M830.7 244.4l-1.8 -9.7M846.2 245.8l-2.9 -9.3M863.4 248.4l-2.3 -9.6M887.4 253.2l2.1 -9.7M903.7 256.9l0.6 -10.0M921.5 261.7l-6.7 -5.4M932.5 265.0l-0.9 -9.9M952.6 271.4l1.3 -9.9M963.0 274.7l0.1 -10.0M976.1 278.8l4.6 -8.2M998.5 286.0l3.3 -9.1M1009.8 290.4l-1.7 -9.8M1028.8 301.1l-5.6 -7.2M1041.3 310.3l-3.8 -8.8M1050.0 319.4l-1.9 -9.7M1059.6 339.6l-0.9 -9.9M1611.3 402.7l3.9 -8.7M1628.9 391.7l4.5 -8.3M1638.4 386.8l-4.0 -8.6M1655.0 381.2l1.7 -9.8M1667.1 378.5l-6.2 -6.4M1682.1 374.0l-2.2 -9.6M1701.1 369.2l3.1 -9.2M1722.9 365.0l-2.3 -9.6M1740.1 362.3l-0.6 -10.0M1759.6 359.4l4.5 -8.2M1771.5 357.8l1.0 -9.9M1783.5 355.9l-0.2 -10.0M1796.0 354.0l3.5 -9.0M1806.6 354.3l2.8 -9.4M1832.0 357.0l-5.2 -7.6" stroke="#000" stroke-width="1" fill="none"/>
<defs><clipPath id="cop"><path d="M884 259L886.8 259.4L889.2 259.7L891.6 259.9L894 260.2L896.7 260.5L899.8 261.1L903.5 261.9L908 263L913.5 264.5L920 266.4L927.1 268.5L934.7 270.8L942.4 273.2L950 275.6L957.3 277.9L964 280L970.3 282L976.5 283.9L982.6 285.8L988.5 287.7L994.1 289.5L999.5 291.4L1004.5 293.2L1009 295L1013.1 296.8L1016.7 298.6L1019.9 300.3L1022.8 302.1L1025.5 303.8L1028.1 305.5L1030.5 307.3L1033 309L1035.4 310.7L1037.8 312.5L1039.9 314.2L1042 315.9L1043.9 317.6L1045.8 319.4L1047.4 321.2L1049 323L1050.4 324.9L1051.7 326.9L1052.9 329L1053.9 331.1L1054.9 333.1L1055.7 335.2L1056.4 337.1L1057 339L1057.5 340.8L1057.7 342.5L1057.9 344.1L1057.9 345.7L1057.9 347.3L1057.9 348.8L1057.9 350.4L1058 352L1058 352L1054.7 352.7L1051.4 353.6L1048.2 354.4L1044.9 355.3L1041.6 356.1L1038.2 356.7L1034.7 357L1031 357L1027.1 356.7L1023.1 356.1L1019 355.4L1014.8 354.4L1010.4 353.3L1006 352L1001.5 350.6L997 349L992.3 347.3L987.5 345.4L982.5 343.4L977.4 341.2L972.4 338.8L967.4 336.4L962.6 333.7L958 331L953.5 328L949 324.7L944.6 321.2L940.3 317.6L936.2 313.9L932.2 310.4L928.5 307.1L925 304L921.9 301.3L919.1 298.8L916.6 296.4L914.2 294.2L912 292L909.8 289.8L907.5 287.5L905 285L902.4 282.4L899.8 279.7L897.2 277L894.6 274.2L891.9 271.4L889.3 268.6L886.6 265.8L884 263Z"/></clipPath></defs>
<g clip-path="url(#cop)">
<path d="M884 259L886.8 259.4L889.2 259.7L891.6 259.9L894 260.2L896.7 260.5L899.8 261.1L903.5 261.9L908 263L913.5 264.5L920 266.4L927.1 268.5L934.7 270.8L942.4 273.2L950 275.6L957.3 277.9L964 280L970.3 282L976.5 283.9L982.6 285.8L988.5 287.7L994.1 289.5L999.5 291.4L1004.5 293.2L1009 295L1013.1 296.8L1016.7 298.6L1019.9 300.3L1022.8 302.1L1025.5 303.8L1028.1 305.5L1030.5 307.3L1033 309L1035.4 310.7L1037.8 312.5L1039.9 314.2L1042 315.9L1043.9 317.6L1045.8 319.4L1047.4 321.2L1049 323L1050.4 324.9L1051.7 326.9L1052.9 329L1053.9 331.1L1054.9 333.1L1055.7 335.2L1056.4 337.1L1057 339L1057.5 340.8L1057.7 342.5L1057.9 344.1L1057.9 345.7L1057.9 347.3L1057.9 348.8L1057.9 350.4L1058 352L1058 352L1054.7 352.7L1051.4 353.6L1048.2 354.4L1044.9 355.3L1041.6 356.1L1038.2 356.7L1034.7 357L1031 357L1027.1 356.7L1023.1 356.1L1019 355.4L1014.8 354.4L1010.4 353.3L1006 352L1001.5 350.6L997 349L992.3 347.3L987.5 345.4L982.5 343.4L977.4 341.2L972.4 338.8L967.4 336.4L962.6 333.7L958 331L953.5 328L949 324.7L944.6 321.2L940.3 317.6L936.2 313.9L932.2 310.4L928.5 307.1L925 304L921.9 301.3L919.1 298.8L916.6 296.4L914.2 294.2L912 292L909.8 289.8L907.5 287.5L905 285L902.4 282.4L899.8 279.7L897.2 277L894.6 274.2L891.9 271.4L889.3 268.6L886.6 265.8L884 263Z" fill="#ff0000"/>
<path d="M716 250L796 370M728 250L808 370M740 250L820 370M752 250L832 370M764 250L844 370M776 250L856 370M788 250L868 370M800 250L880 370M812 250L892 370M824 250L904 370M836 250L916 370M848 250L928 370M860 250L940 370M872 250L952 370M884 250L964 370M896 250L976 370M908 250L988 370M920 250L1000 370M932 250L1012 370M944 250L1024 370M956 250L1036 370M968 250L1048 370M980 250L1060 370M992 250L1072 370M1004 250L1084 370M1016 250L1096 370M1028 250L1108 370M1040 250L1120 370M1052 250L1132 370M1064 250L1144 370M1076 250L1156 370M1088 250L1168 370M1100 250L1180 370M1112 250L1192 370" stroke="#0a80a0" stroke-width="2.6" fill="none"/>
<path d="M891.7 262.2L894.1 263L896.8 263.8L902.7 265.4L906.9 266.9L911.8 268.6L917.5 270.6L923.7 272.8L930.2 275L942.9 279.3L949.2 281.6L955 283.8L960.6 285.8L966.2 287.9L971.8 290.1L981.8 293.7L986.8 295.9L991.6 298.1L996.1 300.2L1000.3 302.4L1004 304.5L1009.9 307.9L1012.9 309.8L1015.9 311.7L1018.9 313.6L1021.9 315.4L1024.8 317.3L1029.4 320.4L1032.1 322.2L1034.6 323.9L1036.9 325.6L1039.2 327.3L1041.3 329.1L1044.3 332.4L1046.1 334.3L1047.8 336.1L1049.3 337.8L1050.7 339.5L1052.1 341.1L1053.6 343.9L1054.5 345.2L1055.3 346.3L1056 347.4L1056.6 348.5M891.7 264.5L894.2 265.8L896.9 267.1L902 269L905.8 270.8L910.1 272.7L915 274.8L920.2 277L925.6 279.3L935.7 283L941 285.3L946 287.5L950.9 289.7L955.9 291.9L960.9 294.3L969.4 297.9L974.2 300.4L978.8 302.9L983.2 305.5L987.4 308L991.4 310.3L996.9 313.6L1000.4 315.8L1003.8 317.9L1007.3 319.9L1010.8 321.9L1014.3 323.8L1018.9 326.7L1022.1 328.4L1025.2 330.2L1028.1 331.8L1030.9 333.5L1033.6 335.1L1036.9 337.9L1039.3 339.5L1041.6 341.1L1043.8 342.6L1045.8 343.9L1047.7 345.1L1049.8 347.1L1051.3 347.9L1052.7 348.6L1054 349.2L1055.3 349.8M891.8 266.8L894.3 268.6L897 270.4L901.3 272.6L904.7 274.6L908.4 276.8L912.5 279L916.7 281.3L921.1 283.5L928.6 286.7L932.9 289L937.1 291.3L941.2 293.5L945.6 296L950.1 298.6L957 302.1L961.5 304.9L966 307.8L970.4 310.7L974.6 313.5L978.8 316.2L983.9 319.4L987.8 321.8L991.7 324L995.7 326.2L999.7 328.3L1003.7 330.3L1008.5 332.9L1012.2 334.7L1015.8 336.4L1019.2 338.1L1022.6 339.7L1025.9 341.2L1029.5 343.4L1032.5 344.8L1035.4 346.1L1038.2 347.3L1040.9 348.3L1043.4 349.1L1045.9 350.3L1048.1 350.6L1050.1 350.8L1052.1 350.9L1054 351M891.9 269.1L894.5 271.4L897.1 273.7L900.5 276.1L903.5 278.5L906.7 280.9L910 283.2L913.2 285.5L916.5 287.8L921.4 290.5L924.7 292.7L928.1 295L931.6 297.4L935.3 300L939.3 302.8L944.6 306.2L948.8 309.4L953.1 312.7L957.5 315.9L961.8 319.1L966.1 322.1L971 325.2L975.2 327.8L979.6 330.2L984 332.5L988.5 334.8L993.1 336.8L998 339.2L1002.3 341L1006.4 342.7L1010.4 344.3L1014.3 345.8L1018.1 347.2L1022.1 348.9L1025.8 350.1L1029.3 351.1L1032.7 352L1035.9 352.6L1039 353L1042.1 353.5L1044.9 353.4L1047.5 353.1L1050.1 352.7L1052.7 352.3" stroke="#0a28d8" stroke-width="2" fill="none"/>
</g>
<path d="M884 263L886.6 265.8L889.3 268.6L891.9 271.4L894.6 274.2L897.2 277L899.8 279.7L902.4 282.4L905 285L907.5 287.5L909.8 289.8L912 292L914.2 294.2L916.6 296.4L919.1 298.8L921.9 301.3L925 304L928.5 307.1L932.2 310.4L936.2 313.9L940.3 317.6L944.6 321.2L949 324.7L953.5 328L958 331L962.6 333.7L967.4 336.4L972.4 338.8L977.4 341.2L982.5 343.4L987.5 345.4L992.3 347.3L997 349L1001.6 350.5L1006.2 351.9L1010.7 353.1L1015.2 354.1L1019.5 355L1023.6 355.8L1027.5 356.5L1031 357L1034.2 357.4L1037 357.6L1039.5 357.6L1041.9 357.5L1044.1 357.4L1046.3 357.2L1048.6 357.1L1051 357" fill="none" stroke="#0a20e0" stroke-width="1.6" stroke-dasharray="6 3"/>
<path d="M485 497L420 467M505 625L420 654M907 673L880 706M1122 701L998 719M1396 742L1281 797M1710 790L1628 818" stroke="#000" stroke-width="1" fill="none"/>
<circle cx="874" cy="716" r="13" fill="#000"/>
<path d="M976 722L993.5 709.5L998.6 729Z" fill="#000"/>
<path d="M1258 810L1274 790L1283 811Z" fill="#000"/>
<path d="M1605 818L1613 808L1624 809L1629 822L1624 834L1612 833Z" fill="#000"/>
<path d="M1849 846L1857 838L1857 853Z" fill="#000"/>
<path d="M420 453L423 453L423 466L420 466Z" fill="#000"/>
<circle cx="485" cy="497" r="5" fill="#ff0000"/>
<circle cx="504.5" cy="625.5" r="4.5" fill="#ff0000"/>
<circle cx="907" cy="673" r="5" fill="#ff0000"/>
<circle cx="1122" cy="701" r="5" fill="#ff0000"/>
<circle cx="1396" cy="742" r="4.5" fill="#ff0000"/>
<circle cx="1710" cy="790" r="4.5" fill="#ff0000"/>
<circle cx="1163" cy="969" r="4.5" fill="#ff0000"/>
<g font-family="Liberation Sans, sans-serif" font-size="13" fill="#000"><text x="421" y="482">12.044</text><text x="871" y="703">9.145</text><text x="1033" y="718">7.162</text><text x="1310" y="781">7.538</text><text x="1642" y="813">9.093</text><text x="817" y="551">7.608</text><text x="1112" y="579">7.916</text><text x="1455" y="610">9.346</text><text x="1773" y="642">9.439</text></g>
<rect x="1425.5" y="855.5" width="426" height="141" fill="#fff" stroke="#000" stroke-width="1"/>
<rect x="1431" y="882" width="8" height="16" fill="rgb(255, 150, 20)"/>
<rect x="1439" y="882" width="8" height="16" fill="rgb(255, 133, 18)"/>
<rect x="1447" y="882" width="8" height="16" fill="rgb(255, 117, 16)"/>
<rect x="1455" y="882" width="8" height="16" fill="rgb(255, 100, 13)"/>
<rect x="1463" y="882" width="8" height="16" fill="rgb(255, 83, 11)"/>
<rect x="1471" y="882" width="8" height="16" fill="rgb(255, 67, 9)"/>
<rect x="1479" y="882" width="8" height="16" fill="rgb(255, 50, 7)"/>
<rect x="1487" y="882" width="8" height="16" fill="rgb(255, 33, 4)"/>
<rect x="1495" y="882" width="8" height="16" fill="rgb(255, 17, 2)"/>
<rect x="1503" y="882" width="8" height="16" fill="rgb(255, 0, 0)"/>
<rect x="1431" y="904" width="8" height="16" fill="rgb(200, 240, 20)"/>
<rect x="1439" y="904" width="8" height="16" fill="rgb(215, 244, 14)"/>
<rect x="1447" y="904" width="8" height="16" fill="rgb(231, 248, 9)"/>
<rect x="1455" y="904" width="8" height="16" fill="rgb(246, 252, 3)"/>
<rect x="1463" y="904" width="8" height="16" fill="rgb(255, 247, 0)"/>
<rect x="1471" y="904" width="8" height="16" fill="rgb(255, 228, 0)"/>
<rect x="1479" y="904" width="8" height="16" fill="rgb(255, 208, 0)"/>
<rect x="1487" y="904" width="8" height="16" fill="rgb(255, 189, 0)"/>
<rect x="1495" y="904" width="8" height="16" fill="rgb(255, 169, 0)"/>
<rect x="1503" y="904" width="8" height="16" fill="rgb(255, 150, 0)"/>
<rect x="1431" y="926" width="8" height="16" fill="rgb(30, 240, 10)"/>
<rect x="1439" y="926" width="8" height="16" fill="rgb(49, 242, 9)"/>
<rect x="1447" y="926" width="8" height="16" fill="rgb(68, 243, 8)"/>
<rect x="1455" y="926" width="8" height="16" fill="rgb(87, 245, 7)"/>
<rect x="1463" y="926" width="8" height="16" fill="rgb(106, 247, 6)"/>
<rect x="1471" y="926" width="8" height="16" fill="rgb(124, 248, 4)"/>
<rect x="1479" y="926" width="8" height="16" fill="rgb(143, 250, 3)"/>
<rect x="1487" y="926" width="8" height="16" fill="rgb(162, 252, 2)"/>
<rect x="1495" y="926" width="8" height="16" fill="rgb(181, 253, 1)"/>
<rect x="1503" y="926" width="8" height="16" fill="rgb(200, 255, 0)"/>
<rect x="1431" y="948" width="8" height="16" fill="rgb(0, 135, 105)"/>
<rect x="1439" y="948" width="8" height="16" fill="rgb(0, 148, 96)"/>
<rect x="1447" y="948" width="8" height="16" fill="rgb(0, 162, 86)"/>
<rect x="1455" y="948" width="8" height="16" fill="rgb(0, 175, 77)"/>
<rect x="1463" y="948" width="8" height="16" fill="rgb(0, 188, 67)"/>
<rect x="1471" y="948" width="8" height="16" fill="rgb(0, 202, 58)"/>
<rect x="1479" y="948" width="8" height="16" fill="rgb(0, 215, 48)"/>
<rect x="1487" y="948" width="8" height="16" fill="rgb(0, 228, 39)"/>
<rect x="1495" y="948" width="8" height="16" fill="rgb(0, 242, 29)"/>
<rect x="1503" y="948" width="8" height="16" fill="rgb(0, 255, 20)"/>
<rect x="1431" y="970" width="8" height="16" fill="rgb(0, 0, 255)"/>
<rect x="1439" y="970" width="8" height="16" fill="rgb(0, 15, 240)"/>
<rect x="1447" y="970" width="8" height="16" fill="rgb(0, 30, 225)"/>
<rect x="1455" y="970" width="8" height="16" fill="rgb(0, 45, 210)"/>
<rect x="1463" y="970" width="8" height="16" fill="rgb(0, 60, 195)"/>
<rect x="1471" y="970" width="8" height="16" fill="rgb(0, 75, 180)"/>
<rect x="1479" y="970" width="8" height="16" fill="rgb(0, 90, 165)"/>
<rect x="1487" y="970" width="8" height="16" fill="rgb(0, 105, 150)"/>
<rect x="1495" y="970" width="8" height="16" fill="rgb(0, 120, 135)"/>
<rect x="1503" y="970" width="8" height="16" fill="rgb(0, 135, 120)"/>
<rect x="1639" y="882" width="8" height="16" fill="rgb(255, 150, 20)"/>
<rect x="1647" y="882" width="8" height="16" fill="rgb(255, 133, 18)"/>
<rect x="1655" y="882" width="8" height="16" fill="rgb(255, 117, 16)"/>
<rect x="1663" y="882" width="8" height="16" fill="rgb(255, 100, 13)"/>
<rect x="1671" y="882" width="8" height="16" fill="rgb(255, 83, 11)"/>
<rect x="1679" y="882" width="8" height="16" fill="rgb(255, 67, 9)"/>
<rect x="1687" y="882" width="8" height="16" fill="rgb(255, 50, 7)"/>
<rect x="1695" y="882" width="8" height="16" fill="rgb(255, 33, 4)"/>
<rect x="1703" y="882" width="8" height="16" fill="rgb(255, 17, 2)"/>
<rect x="1711" y="882" width="8" height="16" fill="rgb(255, 0, 0)"/>
<rect x="1639" y="904" width="8" height="16" fill="rgb(200, 240, 20)"/>
<rect x="1647" y="904" width="8" height="16" fill="rgb(215, 244, 14)"/>
<rect x="1655" y="904" width="8" height="16" fill="rgb(231, 248, 9)"/>
<rect x="1663" y="904" width="8" height="16" fill="rgb(246, 252, 3)"/>
<rect x="1671" y="904" width="8" height="16" fill="rgb(255, 247, 0)"/>
<rect x="1679" y="904" width="8" height="16" fill="rgb(255, 228, 0)"/>
<rect x="1687" y="904" width="8" height="16" fill="rgb(255, 208, 0)"/>
<rect x="1695" y="904" width="8" height="16" fill="rgb(255, 189, 0)"/>
<rect x="1703" y="904" width="8" height="16" fill="rgb(255, 169, 0)"/>
<rect x="1711" y="904" width="8" height="16" fill="rgb(255, 150, 0)"/>
<rect x="1639" y="926" width="8" height="16" fill="rgb(30, 240, 10)"/>
<rect x="1647" y="926" width="8" height="16" fill="rgb(49, 242, 9)"/>
<rect x="1655" y="926" width="8" height="16" fill="rgb(68, 243, 8)"/>
<rect x="1663" y="926" width="8" height="16" fill="rgb(87, 245, 7)"/>
<rect x="1671" y="926" width="8" height="16" fill="rgb(106, 247, 6)"/>
<rect x="1679" y="926" width="8" height="16" fill="rgb(124, 248, 4)"/>
<rect x="1687" y="926" width="8" height="16" fill="rgb(143, 250, 3)"/>
<rect x="1695" y="926" width="8" height="16" fill="rgb(162, 252, 2)"/>
<rect x="1703" y="926" width="8" height="16" fill="rgb(181, 253, 1)"/>
<rect x="1711" y="926" width="8" height="16" fill="rgb(200, 255, 0)"/>
<rect x="1639" y="948" width="8" height="16" fill="rgb(0, 135, 105)"/>
<rect x="1647" y="948" width="8" height="16" fill="rgb(0, 148, 96)"/>
<rect x="1655" y="948" width="8" height="16" fill="rgb(0, 162, 86)"/>
<rect x="1663" y="948" width="8" height="16" fill="rgb(0, 175, 77)"/>
<rect x="1671" y="948" width="8" height="16" fill="rgb(0, 188, 67)"/>
<rect x="1679" y="948" width="8" height="16" fill="rgb(0, 202, 58)"/>
<rect x="1687" y="948" width="8" height="16" fill="rgb(0, 215, 48)"/>
<rect x="1695" y="948" width="8" height="16" fill="rgb(0, 228, 39)"/>
<rect x="1703" y="948" width="8" height="16" fill="rgb(0, 242, 29)"/>
<rect x="1711" y="948" width="8" height="16" fill="rgb(0, 255, 20)"/>
<rect x="1639" y="970" width="8" height="16" fill="rgb(0, 0, 255)"/>
<rect x="1647" y="970" width="8" height="16" fill="rgb(0, 15, 240)"/>
<rect x="1655" y="970" width="8" height="16" fill="rgb(0, 30, 225)"/>
<rect x="1663" y="970" width="8" height="16" fill="rgb(0, 45, 210)"/>
<rect x="1671" y="970" width="8" height="16" fill="rgb(0, 60, 195)"/>
<rect x="1679" y="970" width="8" height="16" fill="rgb(0, 75, 180)"/>
<rect x="1687" y="970" width="8" height="16" fill="rgb(0, 90, 165)"/>
<rect x="1695" y="970" width="8" height="16" fill="rgb(0, 105, 150)"/>
<rect x="1703" y="970" width="8" height="16" fill="rgb(0, 120, 135)"/>
<rect x="1711" y="970" width="8" height="16" fill="rgb(0, 135, 120)"/>
<g font-family="Liberation Sans, sans-serif" font-size="13" fill="#000" letter-spacing="-0.2"><text x="1431.5" y="870">Membrane Stress (force/width)</text><text x="1639.5" y="870">Cable Force (force)</text><text x="1526.5" y="891.5">3.18 - 3.77</text><text x="1734.5" y="891.5">11.60 - 14.49</text><text x="1526.5" y="913.5">2.59 - 3.18</text><text x="1734.5" y="913.5">8.70 - 11.60</text><text x="1526.5" y="935.5">1.99 - 2.59</text><text x="1734.5" y="935.5">5.80 - 8.70</text><text x="1526.5" y="957.5">1.40 - 1.99</text><text x="1734.5" y="957.5">2.90 - 5.80</text><text x="1526.5" y="979.5">0.81 - 1.40</text><text x="1734.5" y="979.5">0.00 - 2.90</text></g>
</svg>
<!-- footer -->
<div class="a" style="left:63px;top:977px;width:351px;height:26px;background:#b9c9d9;border-bottom:2px solid #909090"></div>
<div class="t" style="left:184px;top:983px">© 2019 technet GmbH</div>

<!-- status bar -->
<div class="a" style="left:1272px;top:1005px;width:1px;height:19px;background:#d0d0d0"></div>
<div class="a" style="left:1472px;top:1005px;width:1px;height:19px;background:#d0d0d0"></div>
<div class="a" style="left:1672px;top:1005px;width:1px;height:19px;background:#d0d0d0"></div>
<div class="t" style="left:1278px;top:1009px;font-size:12px;letter-spacing:-0.15px">Select polygons</div>
<div class="t" style="left:1478px;top:1009px;font-size:12px;letter-spacing:-0.15px">View: 43, 82</div>
<div class="t" style="left:1678px;top:1009px;font-size:12px;letter-spacing:-0.3px">u: 7.529 v: -0.475</div>

</body></html>
